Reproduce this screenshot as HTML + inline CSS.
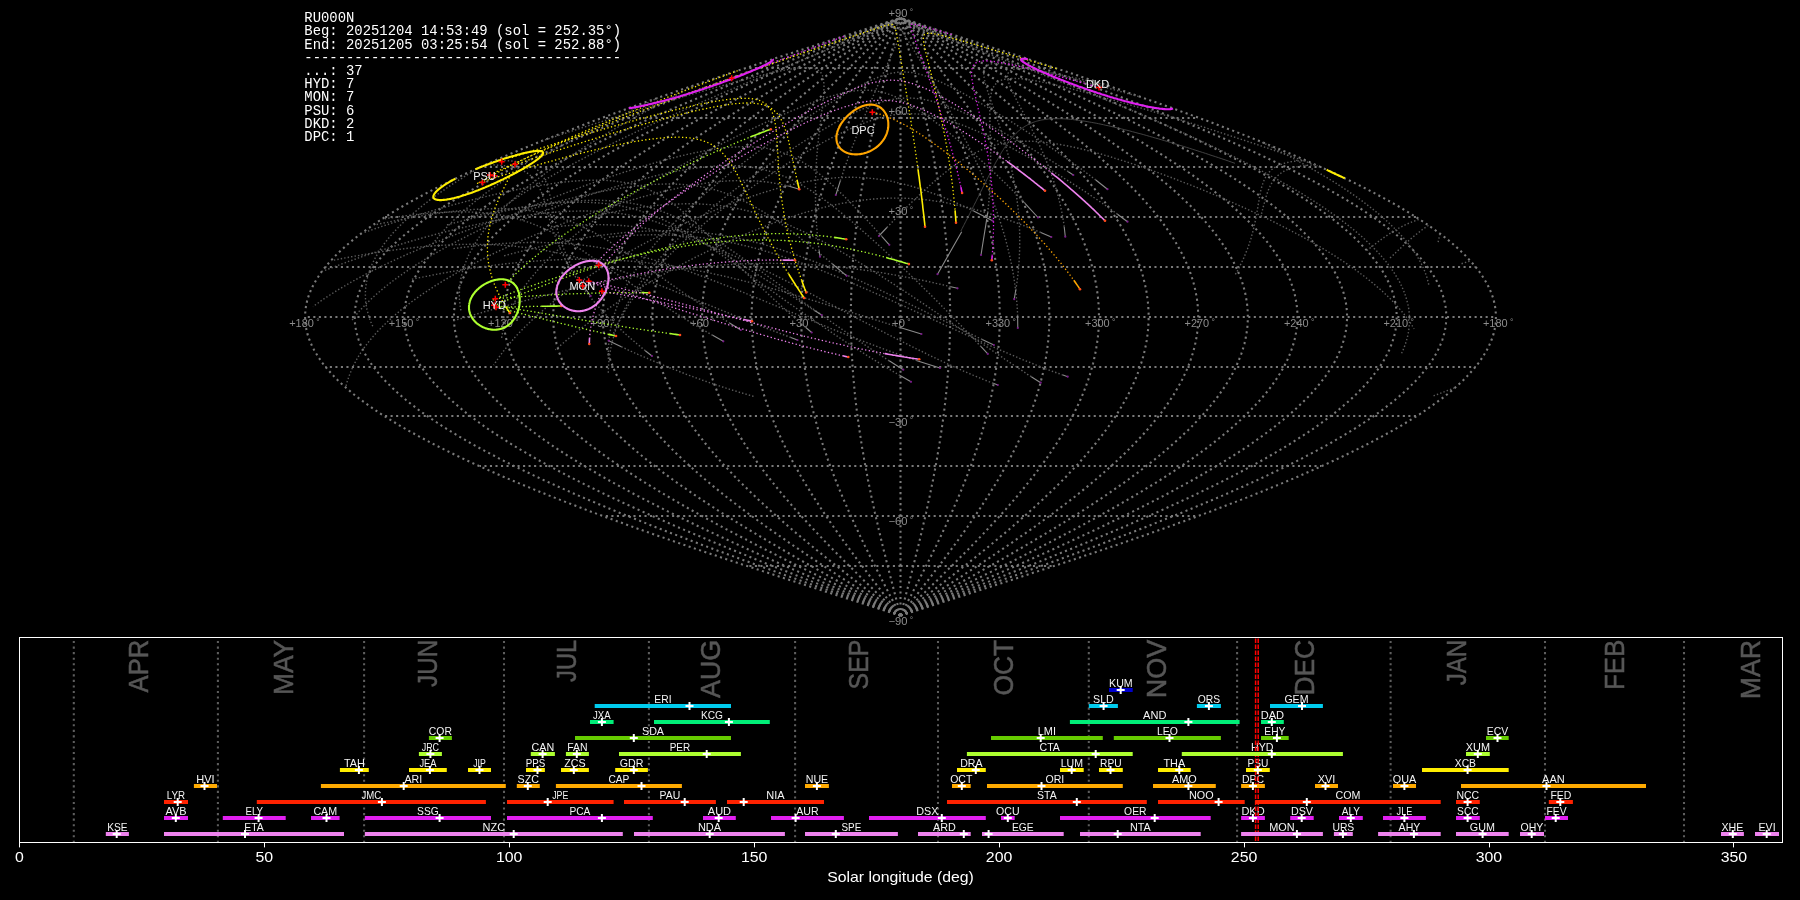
<!DOCTYPE html><html><head><meta charset="utf-8"><style>html,body{margin:0;padding:0;background:#000;width:1800px;height:900px;overflow:hidden}svg{position:absolute;left:0;top:0;will-change:transform}text{font-family:"Liberation Sans",sans-serif}.m{font-family:"Liberation Mono",monospace}</style></head><body>
<svg width="1800" height="900" viewBox="0 0 1800 900">
<rect width="1800" height="900" fill="#000"/>
<g fill="none" stroke="#7a7a7a" stroke-width="2.08" stroke-dasharray="2.083 3.437">
<path d="M900.5 566 L746.4 566"/>
<path d="M900.5 566 L1054.6 566"/>
<path d="M900.5 516 L602.8 516"/>
<path d="M900.5 516 L1198.2 516"/>
<path d="M900.5 466 L479.5 466"/>
<path d="M900.5 466 L1321.5 466"/>
<path d="M900.5 416 L384.8 416"/>
<path d="M900.5 416 L1416.2 416"/>
<path d="M900.5 367 L325.3 367"/>
<path d="M900.5 367 L1475.7 367"/>
<path d="M900.5 317 L305.1 317"/>
<path d="M900.5 317 L1495.9 317"/>
<path d="M900.5 267 L325.3 267"/>
<path d="M900.5 267 L1475.7 267"/>
<path d="M900.5 217 L384.8 217"/>
<path d="M900.5 217 L1416.2 217"/>
<path d="M900.5 167 L479.5 167"/>
<path d="M900.5 167 L1321.5 167"/>
<path d="M900.5 118 L602.8 118"/>
<path d="M900.5 118 L1198.2 118"/>
<path d="M900.5 68 L746.4 68"/>
<path d="M900.5 68 L1054.6 68"/>
<path d="M900.5 615.6 L910.9 612.3 L921.3 609 L931.7 605.6 L942 602.3 L952.4 599 L962.7 595.7 L973.1 592.4 L983.4 589 L993.6 585.7 L1003.9 582.4 L1014.1 579.1 L1024.3 575.8 L1034.4 572.4 L1044.5 569.1 L1054.6 565.8 L1064.6 562.5 L1074.6 559.2 L1084.5 555.8 L1094.4 552.5 L1104.2 549.2 L1113.9 545.9 L1123.6 542.6 L1133.2 539.2 L1142.7 535.9 L1152.1 532.6 L1161.5 529.3 L1170.8 526 L1180 522.6 L1189.2 519.3 L1198.2 516 L1207.2 512.7 L1216 509.4 L1224.8 506 L1233.5 502.7 L1242 499.4 L1250.5 496.1 L1258.8 492.8 L1267.1 489.4 L1275.2 486.1 L1283.2 482.8 L1291.1 479.5 L1298.9 476.2 L1306.6 472.8 L1314.1 469.5 L1321.5 466.2 L1328.8 462.9 L1336 459.6 L1343 456.2 L1349.9 452.9 L1356.6 449.6 L1363.2 446.3 L1369.7 443 L1376 439.6 L1382.2 436.3 L1388.3 433 L1394.1 429.7 L1399.9 426.4 L1405.5 423 L1410.9 419.7 L1416.2 416.4 L1421.3 413.1 L1426.2 409.8 L1431 406.4 L1435.7 403.1 L1440.2 399.8 L1444.5 396.5 L1448.6 393.2 L1452.6 389.8 L1456.4 386.5 L1460 383.2 L1463.5 379.9 L1466.8 376.6 L1469.9 373.2 L1472.9 369.9 L1475.7 366.6 L1478.3 363.3 L1480.7 360 L1482.9 356.6 L1485 353.3 L1486.9 350 L1488.6 346.7 L1490.1 343.4 L1491.5 340 L1492.7 336.7 L1493.7 333.4 L1494.5 330.1 L1495.1 326.8 L1495.6 323.4 L1495.8 320.1 L1495.9 316.8 L1495.8 313.5 L1495.6 310.2 L1495.1 306.8 L1494.5 303.5 L1493.7 300.2 L1492.7 296.9 L1491.5 293.6 L1490.1 290.2 L1488.6 286.9 L1486.9 283.6 L1485 280.3 L1482.9 277 L1480.7 273.6 L1478.3 270.3 L1475.7 267 L1472.9 263.7 L1469.9 260.4 L1466.8 257 L1463.5 253.7 L1460 250.4 L1456.4 247.1 L1452.6 243.8 L1448.6 240.4 L1444.5 237.1 L1440.2 233.8 L1435.7 230.5 L1431 227.2 L1426.2 223.8 L1421.3 220.5 L1416.2 217.2 L1410.9 213.9 L1405.5 210.6 L1399.9 207.2 L1394.1 203.9 L1388.3 200.6 L1382.2 197.3 L1376 194 L1369.7 190.6 L1363.2 187.3 L1356.6 184 L1349.9 180.7 L1343 177.4 L1336 174 L1328.8 170.7 L1321.5 167.4 L1314.1 164.1 L1306.6 160.8 L1298.9 157.4 L1291.1 154.1 L1283.2 150.8 L1275.2 147.5 L1267.1 144.2 L1258.8 140.8 L1250.5 137.5 L1242 134.2 L1233.5 130.9 L1224.8 127.6 L1216 124.2 L1207.2 120.9 L1198.2 117.6 L1189.2 114.3 L1180 111 L1170.8 107.6 L1161.5 104.3 L1152.1 101 L1142.7 97.7 L1133.2 94.4 L1123.6 91 L1113.9 87.7 L1104.2 84.4 L1094.4 81.1 L1084.5 77.8 L1074.6 74.4 L1064.6 71.1 L1054.6 67.8 L1044.5 64.5 L1034.4 61.2 L1024.3 57.8 L1014.1 54.5 L1003.9 51.2 L993.6 47.9 L983.4 44.6 L973.1 41.2 L962.7 37.9 L952.4 34.6 L942 31.3 L931.7 28 L921.3 24.6 L910.9 21.3 L900.5 18"/>
<path d="M900.5 615.6 L910 612.3 L919.5 609 L929.1 605.6 L938.6 602.3 L948.1 599 L957.6 595.7 L967 592.4 L976.5 589 L985.9 585.7 L995.3 582.4 L1004.6 579.1 L1014 575.8 L1023.3 572.4 L1032.5 569.1 L1041.8 565.8 L1050.9 562.5 L1060.1 559.2 L1069.2 555.8 L1078.2 552.5 L1087.2 549.2 L1096.1 545.9 L1105 542.6 L1113.8 539.2 L1122.5 535.9 L1131.2 532.6 L1139.8 529.3 L1148.3 526 L1156.7 522.6 L1165.1 519.3 L1173.4 516 L1181.6 512.7 L1189.7 509.4 L1197.8 506 L1205.7 502.7 L1213.6 499.4 L1221.3 496.1 L1229 492.8 L1236.5 489.4 L1244 486.1 L1251.3 482.8 L1258.6 479.5 L1265.7 476.2 L1272.7 472.8 L1279.7 469.5 L1286.5 466.2 L1293.1 462.9 L1299.7 459.6 L1306.1 456.2 L1312.4 452.9 L1318.6 449.6 L1324.7 446.3 L1330.6 443 L1336.4 439.6 L1342.1 436.3 L1347.6 433 L1353 429.7 L1358.3 426.4 L1363.4 423 L1368.4 419.7 L1373.2 416.4 L1377.9 413.1 L1382.4 409.8 L1386.8 406.4 L1391.1 403.1 L1395.2 399.8 L1399.1 396.5 L1402.9 393.2 L1406.6 389.8 L1410.1 386.5 L1413.4 383.2 L1416.6 379.9 L1419.6 376.6 L1422.5 373.2 L1425.2 369.9 L1427.7 366.6 L1430.1 363.3 L1432.3 360 L1434.4 356.6 L1436.3 353.3 L1438 350 L1439.6 346.7 L1441 343.4 L1442.3 340 L1443.3 336.7 L1444.2 333.4 L1445 330.1 L1445.6 326.8 L1446 323.4 L1446.2 320.1 L1446.3 316.8 L1446.2 313.5 L1446 310.2 L1445.6 306.8 L1445 303.5 L1444.2 300.2 L1443.3 296.9 L1442.3 293.6 L1441 290.2 L1439.6 286.9 L1438 283.6 L1436.3 280.3 L1434.4 277 L1432.3 273.6 L1430.1 270.3 L1427.7 267 L1425.2 263.7 L1422.5 260.4 L1419.6 257 L1416.6 253.7 L1413.4 250.4 L1410.1 247.1 L1406.6 243.8 L1402.9 240.4 L1399.1 237.1 L1395.2 233.8 L1391.1 230.5 L1386.8 227.2 L1382.4 223.8 L1377.9 220.5 L1373.2 217.2 L1368.4 213.9 L1363.4 210.6 L1358.3 207.2 L1353 203.9 L1347.6 200.6 L1342.1 197.3 L1336.4 194 L1330.6 190.6 L1324.7 187.3 L1318.6 184 L1312.4 180.7 L1306.1 177.4 L1299.7 174 L1293.1 170.7 L1286.5 167.4 L1279.7 164.1 L1272.7 160.8 L1265.7 157.4 L1258.6 154.1 L1251.3 150.8 L1244 147.5 L1236.5 144.2 L1229 140.8 L1221.3 137.5 L1213.6 134.2 L1205.7 130.9 L1197.8 127.6 L1189.7 124.2 L1181.6 120.9 L1173.4 117.6 L1165.1 114.3 L1156.7 111 L1148.3 107.6 L1139.8 104.3 L1131.2 101 L1122.5 97.7 L1113.8 94.4 L1105 91 L1096.1 87.7 L1087.2 84.4 L1078.2 81.1 L1069.2 77.8 L1060.1 74.4 L1050.9 71.1 L1041.8 67.8 L1032.5 64.5 L1023.3 61.2 L1014 57.8 L1004.6 54.5 L995.3 51.2 L985.9 47.9 L976.5 44.6 L967 41.2 L957.6 37.9 L948.1 34.6 L938.6 31.3 L929.1 28 L919.5 24.6 L910 21.3 L900.5 18"/>
<path d="M900.5 615.6 L909.2 612.3 L917.8 609 L926.5 605.6 L935.1 602.3 L943.7 599 L952.4 595.7 L961 592.4 L969.6 589 L978.1 585.7 L986.7 582.4 L995.2 579.1 L1003.7 575.8 L1012.1 572.4 L1020.5 569.1 L1028.9 565.8 L1037.3 562.5 L1045.6 559.2 L1053.8 555.8 L1062 552.5 L1070.2 549.2 L1078.3 545.9 L1086.4 542.6 L1094.4 539.2 L1102.3 535.9 L1110.2 532.6 L1118 529.3 L1125.8 526 L1133.5 522.6 L1141.1 519.3 L1148.6 516 L1156.1 512.7 L1163.4 509.4 L1170.7 506 L1178 502.7 L1185.1 499.4 L1192.2 496.1 L1199.1 492.8 L1206 489.4 L1212.8 486.1 L1219.5 482.8 L1226 479.5 L1232.5 476.2 L1238.9 472.8 L1245.2 469.5 L1251.4 466.2 L1257.4 462.9 L1263.4 459.6 L1269.2 456.2 L1275 452.9 L1280.6 449.6 L1286.1 446.3 L1291.5 443 L1296.8 439.6 L1301.9 436.3 L1307 433 L1311.9 429.7 L1316.6 426.4 L1321.3 423 L1325.8 419.7 L1330.2 416.4 L1334.5 413.1 L1338.6 409.8 L1342.6 406.4 L1346.5 403.1 L1350.2 399.8 L1353.8 396.5 L1357.3 393.2 L1360.6 389.8 L1363.7 386.5 L1366.8 383.2 L1369.7 379.9 L1372.4 376.6 L1375 373.2 L1377.5 369.9 L1379.8 366.6 L1382 363.3 L1384 360 L1385.9 356.6 L1387.6 353.3 L1389.2 350 L1390.6 346.7 L1391.9 343.4 L1393 340 L1394 336.7 L1394.8 333.4 L1395.5 330.1 L1396 326.8 L1396.4 323.4 L1396.6 320.1 L1396.7 316.8 L1396.6 313.5 L1396.4 310.2 L1396 306.8 L1395.5 303.5 L1394.8 300.2 L1394 296.9 L1393 293.6 L1391.9 290.2 L1390.6 286.9 L1389.2 283.6 L1387.6 280.3 L1385.9 277 L1384 273.6 L1382 270.3 L1379.8 267 L1377.5 263.7 L1375 260.4 L1372.4 257 L1369.7 253.7 L1366.8 250.4 L1363.7 247.1 L1360.6 243.8 L1357.3 240.4 L1353.8 237.1 L1350.2 233.8 L1346.5 230.5 L1342.6 227.2 L1338.6 223.8 L1334.5 220.5 L1330.2 217.2 L1325.8 213.9 L1321.3 210.6 L1316.6 207.2 L1311.9 203.9 L1307 200.6 L1301.9 197.3 L1296.8 194 L1291.5 190.6 L1286.1 187.3 L1280.6 184 L1275 180.7 L1269.2 177.4 L1263.4 174 L1257.4 170.7 L1251.4 167.4 L1245.2 164.1 L1238.9 160.8 L1232.5 157.4 L1226 154.1 L1219.5 150.8 L1212.8 147.5 L1206 144.2 L1199.1 140.8 L1192.2 137.5 L1185.1 134.2 L1178 130.9 L1170.7 127.6 L1163.4 124.2 L1156.1 120.9 L1148.6 117.6 L1141.1 114.3 L1133.5 111 L1125.8 107.6 L1118 104.3 L1110.2 101 L1102.3 97.7 L1094.4 94.4 L1086.4 91 L1078.3 87.7 L1070.2 84.4 L1062 81.1 L1053.8 77.8 L1045.6 74.4 L1037.3 71.1 L1028.9 67.8 L1020.5 64.5 L1012.1 61.2 L1003.7 57.8 L995.2 54.5 L986.7 51.2 L978.1 47.9 L969.6 44.6 L961 41.2 L952.4 37.9 L943.7 34.6 L935.1 31.3 L926.5 28 L917.8 24.6 L909.2 21.3 L900.5 18"/>
<path d="M900.5 615.6 L908.3 612.3 L916.1 609 L923.9 605.6 L931.7 602.3 L939.4 599 L947.2 595.7 L954.9 592.4 L962.7 589 L970.4 585.7 L978 582.4 L985.7 579.1 L993.3 575.8 L1001 572.4 L1008.5 569.1 L1016.1 565.8 L1023.6 562.5 L1031.1 559.2 L1038.5 555.8 L1045.9 552.5 L1053.2 549.2 L1060.5 545.9 L1067.8 542.6 L1075 539.2 L1082.1 535.9 L1089.2 532.6 L1096.3 529.3 L1103.2 526 L1110.2 522.6 L1117 519.3 L1123.8 516 L1130.5 512.7 L1137.2 509.4 L1143.7 506 L1150.2 502.7 L1156.6 499.4 L1163 496.1 L1169.3 492.8 L1175.4 489.4 L1181.5 486.1 L1187.6 482.8 L1193.5 479.5 L1199.3 476.2 L1205.1 472.8 L1210.7 469.5 L1216.3 466.2 L1221.7 462.9 L1227.1 459.6 L1232.4 456.2 L1237.5 452.9 L1242.6 449.6 L1247.6 446.3 L1252.4 443 L1257.2 439.6 L1261.8 436.3 L1266.3 433 L1270.7 429.7 L1275 426.4 L1279.2 423 L1283.3 419.7 L1287.2 416.4 L1291.1 413.1 L1294.8 409.8 L1298.4 406.4 L1301.9 403.1 L1305.2 399.8 L1308.5 396.5 L1311.6 393.2 L1314.6 389.8 L1317.4 386.5 L1320.1 383.2 L1322.7 379.9 L1325.2 376.6 L1327.6 373.2 L1329.8 369.9 L1331.9 366.6 L1333.8 363.3 L1335.6 360 L1337.3 356.6 L1338.9 353.3 L1340.3 350 L1341.6 346.7 L1342.7 343.4 L1343.8 340 L1344.6 336.7 L1345.4 333.4 L1346 330.1 L1346.5 326.8 L1346.8 323.4 L1347 320.1 L1347.1 316.8 L1347 313.5 L1346.8 310.2 L1346.5 306.8 L1346 303.5 L1345.4 300.2 L1344.6 296.9 L1343.8 293.6 L1342.7 290.2 L1341.6 286.9 L1340.3 283.6 L1338.9 280.3 L1337.3 277 L1335.6 273.6 L1333.8 270.3 L1331.9 267 L1329.8 263.7 L1327.6 260.4 L1325.2 257 L1322.7 253.7 L1320.1 250.4 L1317.4 247.1 L1314.6 243.8 L1311.6 240.4 L1308.5 237.1 L1305.2 233.8 L1301.9 230.5 L1298.4 227.2 L1294.8 223.8 L1291.1 220.5 L1287.2 217.2 L1283.3 213.9 L1279.2 210.6 L1275 207.2 L1270.7 203.9 L1266.3 200.6 L1261.8 197.3 L1257.2 194 L1252.4 190.6 L1247.6 187.3 L1242.6 184 L1237.5 180.7 L1232.4 177.4 L1227.1 174 L1221.7 170.7 L1216.3 167.4 L1210.7 164.1 L1205.1 160.8 L1199.3 157.4 L1193.5 154.1 L1187.6 150.8 L1181.5 147.5 L1175.4 144.2 L1169.3 140.8 L1163 137.5 L1156.6 134.2 L1150.2 130.9 L1143.7 127.6 L1137.2 124.2 L1130.5 120.9 L1123.8 117.6 L1117 114.3 L1110.2 111 L1103.2 107.6 L1096.3 104.3 L1089.2 101 L1082.1 97.7 L1075 94.4 L1067.8 91 L1060.5 87.7 L1053.2 84.4 L1045.9 81.1 L1038.5 77.8 L1031.1 74.4 L1023.6 71.1 L1016.1 67.8 L1008.5 64.5 L1001 61.2 L993.3 57.8 L985.7 54.5 L978 51.2 L970.4 47.9 L962.7 44.6 L954.9 41.2 L947.2 37.9 L939.4 34.6 L931.7 31.3 L923.9 28 L916.1 24.6 L908.3 21.3 L900.5 18"/>
<path d="M900.5 615.6 L907.4 612.3 L914.4 609 L921.3 605.6 L928.2 602.3 L935.1 599 L942 595.7 L948.9 592.4 L955.7 589 L962.6 585.7 L969.4 582.4 L976.2 579.1 L983 575.8 L989.8 572.4 L996.5 569.1 L1003.2 565.8 L1009.9 562.5 L1016.6 559.2 L1023.2 555.8 L1029.7 552.5 L1036.3 549.2 L1042.8 545.9 L1049.2 542.6 L1055.6 539.2 L1062 535.9 L1068.3 532.6 L1074.5 529.3 L1080.7 526 L1086.9 522.6 L1093 519.3 L1099 516 L1104.9 512.7 L1110.9 509.4 L1116.7 506 L1122.5 502.7 L1128.2 499.4 L1133.8 496.1 L1139.4 492.8 L1144.9 489.4 L1150.3 486.1 L1155.7 482.8 L1160.9 479.5 L1166.1 476.2 L1171.2 472.8 L1176.3 469.5 L1181.2 466.2 L1186 462.9 L1190.8 459.6 L1195.5 456.2 L1200.1 452.9 L1204.6 449.6 L1209 446.3 L1213.3 443 L1217.5 439.6 L1221.6 436.3 L1225.7 433 L1229.6 429.7 L1233.4 426.4 L1237.1 423 L1240.8 419.7 L1244.3 416.4 L1247.7 413.1 L1251 409.8 L1254.2 406.4 L1257.3 403.1 L1260.3 399.8 L1263.1 396.5 L1265.9 393.2 L1268.6 389.8 L1271.1 386.5 L1273.5 383.2 L1275.8 379.9 L1278 376.6 L1280.1 373.2 L1282.1 369.9 L1283.9 366.6 L1285.7 363.3 L1287.3 360 L1288.8 356.6 L1290.2 353.3 L1291.4 350 L1292.6 346.7 L1293.6 343.4 L1294.5 340 L1295.3 336.7 L1295.9 333.4 L1296.5 330.1 L1296.9 326.8 L1297.2 323.4 L1297.4 320.1 L1297.5 316.8 L1297.4 313.5 L1297.2 310.2 L1296.9 306.8 L1296.5 303.5 L1295.9 300.2 L1295.3 296.9 L1294.5 293.6 L1293.6 290.2 L1292.6 286.9 L1291.4 283.6 L1290.2 280.3 L1288.8 277 L1287.3 273.6 L1285.7 270.3 L1283.9 267 L1282.1 263.7 L1280.1 260.4 L1278 257 L1275.8 253.7 L1273.5 250.4 L1271.1 247.1 L1268.6 243.8 L1265.9 240.4 L1263.1 237.1 L1260.3 233.8 L1257.3 230.5 L1254.2 227.2 L1251 223.8 L1247.7 220.5 L1244.3 217.2 L1240.8 213.9 L1237.1 210.6 L1233.4 207.2 L1229.6 203.9 L1225.7 200.6 L1221.6 197.3 L1217.5 194 L1213.3 190.6 L1209 187.3 L1204.6 184 L1200.1 180.7 L1195.5 177.4 L1190.8 174 L1186 170.7 L1181.2 167.4 L1176.3 164.1 L1171.2 160.8 L1166.1 157.4 L1160.9 154.1 L1155.7 150.8 L1150.3 147.5 L1144.9 144.2 L1139.4 140.8 L1133.8 137.5 L1128.2 134.2 L1122.5 130.9 L1116.7 127.6 L1110.9 124.2 L1104.9 120.9 L1099 117.6 L1093 114.3 L1086.9 111 L1080.7 107.6 L1074.5 104.3 L1068.3 101 L1062 97.7 L1055.6 94.4 L1049.2 91 L1042.8 87.7 L1036.3 84.4 L1029.7 81.1 L1023.2 77.8 L1016.6 74.4 L1009.9 71.1 L1003.2 67.8 L996.5 64.5 L989.8 61.2 L983 57.8 L976.2 54.5 L969.4 51.2 L962.6 47.9 L955.7 44.6 L948.9 41.2 L942 37.9 L935.1 34.6 L928.2 31.3 L921.3 28 L914.4 24.6 L907.4 21.3 L900.5 18"/>
<path d="M900.5 615.6 L906.6 612.3 L912.6 609 L918.7 605.6 L924.7 602.3 L930.8 599 L936.8 595.7 L942.8 592.4 L948.8 589 L954.8 585.7 L960.8 582.4 L966.8 579.1 L972.7 575.8 L978.6 572.4 L984.5 569.1 L990.4 565.8 L996.2 562.5 L1002.1 559.2 L1007.8 555.8 L1013.6 552.5 L1019.3 549.2 L1025 545.9 L1030.6 542.6 L1036.2 539.2 L1041.8 535.9 L1047.3 532.6 L1052.8 529.3 L1058.2 526 L1063.6 522.6 L1068.9 519.3 L1074.2 516 L1079.4 512.7 L1084.6 509.4 L1089.7 506 L1094.7 502.7 L1099.7 499.4 L1104.7 496.1 L1109.5 492.8 L1114.3 489.4 L1119.1 486.1 L1123.8 482.8 L1128.4 479.5 L1132.9 476.2 L1137.4 472.8 L1141.8 469.5 L1146.1 466.2 L1150.4 462.9 L1154.5 459.6 L1158.6 456.2 L1162.6 452.9 L1166.6 449.6 L1170.4 446.3 L1174.2 443 L1177.9 439.6 L1181.5 436.3 L1185 433 L1188.5 429.7 L1191.8 426.4 L1195.1 423 L1198.2 419.7 L1201.3 416.4 L1204.3 413.1 L1207.2 409.8 L1210 406.4 L1212.7 403.1 L1215.3 399.8 L1217.8 396.5 L1220.2 393.2 L1222.5 389.8 L1224.8 386.5 L1226.9 383.2 L1228.9 379.9 L1230.8 376.6 L1232.7 373.2 L1234.4 369.9 L1236 366.6 L1237.5 363.3 L1238.9 360 L1240.2 356.6 L1241.5 353.3 L1242.6 350 L1243.6 346.7 L1244.5 343.4 L1245.3 340 L1245.9 336.7 L1246.5 333.4 L1247 330.1 L1247.4 326.8 L1247.6 323.4 L1247.8 320.1 L1247.8 316.8 L1247.8 313.5 L1247.6 310.2 L1247.4 306.8 L1247 303.5 L1246.5 300.2 L1245.9 296.9 L1245.3 293.6 L1244.5 290.2 L1243.6 286.9 L1242.6 283.6 L1241.5 280.3 L1240.2 277 L1238.9 273.6 L1237.5 270.3 L1236 267 L1234.4 263.7 L1232.7 260.4 L1230.8 257 L1228.9 253.7 L1226.9 250.4 L1224.8 247.1 L1222.5 243.8 L1220.2 240.4 L1217.8 237.1 L1215.3 233.8 L1212.7 230.5 L1210 227.2 L1207.2 223.8 L1204.3 220.5 L1201.3 217.2 L1198.2 213.9 L1195.1 210.6 L1191.8 207.2 L1188.5 203.9 L1185 200.6 L1181.5 197.3 L1177.9 194 L1174.2 190.6 L1170.4 187.3 L1166.6 184 L1162.6 180.7 L1158.6 177.4 L1154.5 174 L1150.4 170.7 L1146.1 167.4 L1141.8 164.1 L1137.4 160.8 L1132.9 157.4 L1128.4 154.1 L1123.8 150.8 L1119.1 147.5 L1114.3 144.2 L1109.5 140.8 L1104.7 137.5 L1099.7 134.2 L1094.7 130.9 L1089.7 127.6 L1084.6 124.2 L1079.4 120.9 L1074.2 117.6 L1068.9 114.3 L1063.6 111 L1058.2 107.6 L1052.8 104.3 L1047.3 101 L1041.8 97.7 L1036.2 94.4 L1030.6 91 L1025 87.7 L1019.3 84.4 L1013.6 81.1 L1007.8 77.8 L1002.1 74.4 L996.2 71.1 L990.4 67.8 L984.5 64.5 L978.6 61.2 L972.7 57.8 L966.8 54.5 L960.8 51.2 L954.8 47.9 L948.8 44.6 L942.8 41.2 L936.8 37.9 L930.8 34.6 L924.7 31.3 L918.7 28 L912.6 24.6 L906.6 21.3 L900.5 18"/>
<path d="M900.5 615.6 L905.7 612.3 L910.9 609 L916.1 605.6 L921.3 602.3 L926.4 599 L931.6 595.7 L936.8 592.4 L941.9 589 L947.1 585.7 L952.2 582.4 L957.3 579.1 L962.4 575.8 L967.5 572.4 L972.5 569.1 L977.6 565.8 L982.6 562.5 L987.5 559.2 L992.5 555.8 L997.4 552.5 L1002.3 549.2 L1007.2 545.9 L1012 542.6 L1016.8 539.2 L1021.6 535.9 L1026.3 532.6 L1031 529.3 L1035.7 526 L1040.3 522.6 L1044.8 519.3 L1049.4 516 L1053.8 512.7 L1058.3 509.4 L1062.6 506 L1067 502.7 L1071.3 499.4 L1075.5 496.1 L1079.7 492.8 L1083.8 489.4 L1087.9 486.1 L1091.9 482.8 L1095.8 479.5 L1099.7 476.2 L1103.5 472.8 L1107.3 469.5 L1111 466.2 L1114.7 462.9 L1118.2 459.6 L1121.7 456.2 L1125.2 452.9 L1128.6 449.6 L1131.9 446.3 L1135.1 443 L1138.3 439.6 L1141.4 436.3 L1144.4 433 L1147.3 429.7 L1150.2 426.4 L1153 423 L1155.7 419.7 L1158.3 416.4 L1160.9 413.1 L1163.4 409.8 L1165.8 406.4 L1168.1 403.1 L1170.3 399.8 L1172.5 396.5 L1174.6 393.2 L1176.5 389.8 L1178.4 386.5 L1180.3 383.2 L1182 379.9 L1183.6 376.6 L1185.2 373.2 L1186.7 369.9 L1188.1 366.6 L1189.4 363.3 L1190.6 360 L1191.7 356.6 L1192.8 353.3 L1193.7 350 L1194.6 346.7 L1195.3 343.4 L1196 340 L1196.6 336.7 L1197.1 333.4 L1197.5 330.1 L1197.8 326.8 L1198 323.4 L1198.2 320.1 L1198.2 316.8 L1198.2 313.5 L1198 310.2 L1197.8 306.8 L1197.5 303.5 L1197.1 300.2 L1196.6 296.9 L1196 293.6 L1195.3 290.2 L1194.6 286.9 L1193.7 283.6 L1192.8 280.3 L1191.7 277 L1190.6 273.6 L1189.4 270.3 L1188.1 267 L1186.7 263.7 L1185.2 260.4 L1183.6 257 L1182 253.7 L1180.3 250.4 L1178.4 247.1 L1176.5 243.8 L1174.6 240.4 L1172.5 237.1 L1170.3 233.8 L1168.1 230.5 L1165.8 227.2 L1163.4 223.8 L1160.9 220.5 L1158.3 217.2 L1155.7 213.9 L1153 210.6 L1150.2 207.2 L1147.3 203.9 L1144.4 200.6 L1141.4 197.3 L1138.3 194 L1135.1 190.6 L1131.9 187.3 L1128.6 184 L1125.2 180.7 L1121.7 177.4 L1118.2 174 L1114.7 170.7 L1111 167.4 L1107.3 164.1 L1103.5 160.8 L1099.7 157.4 L1095.8 154.1 L1091.9 150.8 L1087.9 147.5 L1083.8 144.2 L1079.7 140.8 L1075.5 137.5 L1071.3 134.2 L1067 130.9 L1062.6 127.6 L1058.3 124.2 L1053.8 120.9 L1049.4 117.6 L1044.8 114.3 L1040.3 111 L1035.7 107.6 L1031 104.3 L1026.3 101 L1021.6 97.7 L1016.8 94.4 L1012 91 L1007.2 87.7 L1002.3 84.4 L997.4 81.1 L992.5 77.8 L987.5 74.4 L982.6 71.1 L977.6 67.8 L972.5 64.5 L967.5 61.2 L962.4 57.8 L957.3 54.5 L952.2 51.2 L947.1 47.9 L941.9 44.6 L936.8 41.2 L931.6 37.9 L926.4 34.6 L921.3 31.3 L916.1 28 L910.9 24.6 L905.7 21.3 L900.5 18"/>
<path d="M900.5 615.6 L904.8 612.3 L909.2 609 L913.5 605.6 L917.8 602.3 L922.1 599 L926.4 595.7 L930.7 592.4 L935 589 L939.3 585.7 L943.6 582.4 L947.8 579.1 L952.1 575.8 L956.3 572.4 L960.5 569.1 L964.7 565.8 L968.9 562.5 L973 559.2 L977.2 555.8 L981.3 552.5 L985.4 549.2 L989.4 545.9 L993.4 542.6 L997.4 539.2 L1001.4 535.9 L1005.4 532.6 L1009.3 529.3 L1013.1 526 L1017 522.6 L1020.8 519.3 L1024.5 516 L1028.3 512.7 L1032 509.4 L1035.6 506 L1039.2 502.7 L1042.8 499.4 L1046.3 496.1 L1049.8 492.8 L1053.2 489.4 L1056.6 486.1 L1060 482.8 L1063.3 479.5 L1066.5 476.2 L1069.7 472.8 L1072.8 469.5 L1075.9 466.2 L1079 462.9 L1081.9 459.6 L1084.9 456.2 L1087.7 452.9 L1090.6 449.6 L1093.3 446.3 L1096 443 L1098.6 439.6 L1101.2 436.3 L1103.7 433 L1106.2 429.7 L1108.6 426.4 L1110.9 423 L1113.2 419.7 L1115.4 416.4 L1117.5 413.1 L1119.6 409.8 L1121.6 406.4 L1123.5 403.1 L1125.4 399.8 L1127.2 396.5 L1128.9 393.2 L1130.5 389.8 L1132.1 386.5 L1133.6 383.2 L1135.1 379.9 L1136.5 376.6 L1137.8 373.2 L1139 369.9 L1140.1 366.6 L1141.2 363.3 L1142.2 360 L1143.2 356.6 L1144 353.3 L1144.8 350 L1145.5 346.7 L1146.2 343.4 L1146.8 340 L1147.2 336.7 L1147.7 333.4 L1148 330.1 L1148.3 326.8 L1148.4 323.4 L1148.6 320.1 L1148.6 316.8 L1148.6 313.5 L1148.4 310.2 L1148.3 306.8 L1148 303.5 L1147.7 300.2 L1147.2 296.9 L1146.8 293.6 L1146.2 290.2 L1145.5 286.9 L1144.8 283.6 L1144 280.3 L1143.2 277 L1142.2 273.6 L1141.2 270.3 L1140.1 267 L1139 263.7 L1137.8 260.4 L1136.5 257 L1135.1 253.7 L1133.6 250.4 L1132.1 247.1 L1130.5 243.8 L1128.9 240.4 L1127.2 237.1 L1125.4 233.8 L1123.5 230.5 L1121.6 227.2 L1119.6 223.8 L1117.5 220.5 L1115.4 217.2 L1113.2 213.9 L1110.9 210.6 L1108.6 207.2 L1106.2 203.9 L1103.7 200.6 L1101.2 197.3 L1098.6 194 L1096 190.6 L1093.3 187.3 L1090.6 184 L1087.7 180.7 L1084.9 177.4 L1081.9 174 L1079 170.7 L1075.9 167.4 L1072.8 164.1 L1069.7 160.8 L1066.5 157.4 L1063.3 154.1 L1060 150.8 L1056.6 147.5 L1053.2 144.2 L1049.8 140.8 L1046.3 137.5 L1042.8 134.2 L1039.2 130.9 L1035.6 127.6 L1032 124.2 L1028.3 120.9 L1024.5 117.6 L1020.8 114.3 L1017 111 L1013.1 107.6 L1009.3 104.3 L1005.4 101 L1001.4 97.7 L997.4 94.4 L993.4 91 L989.4 87.7 L985.4 84.4 L981.3 81.1 L977.2 77.8 L973 74.4 L968.9 71.1 L964.7 67.8 L960.5 64.5 L956.3 61.2 L952.1 57.8 L947.8 54.5 L943.6 51.2 L939.3 47.9 L935 44.6 L930.7 41.2 L926.4 37.9 L922.1 34.6 L917.8 31.3 L913.5 28 L909.2 24.6 L904.8 21.3 L900.5 18"/>
<path d="M900.5 615.6 L904 612.3 L907.4 609 L910.9 605.6 L914.3 602.3 L917.8 599 L921.2 595.7 L924.7 592.4 L928.1 589 L931.5 585.7 L935 582.4 L938.4 579.1 L941.8 575.8 L945.1 572.4 L948.5 569.1 L951.9 565.8 L955.2 562.5 L958.5 559.2 L961.8 555.8 L965.1 552.5 L968.4 549.2 L971.6 545.9 L974.9 542.6 L978.1 539.2 L981.2 535.9 L984.4 532.6 L987.5 529.3 L990.6 526 L993.7 522.6 L996.7 519.3 L999.7 516 L1002.7 512.7 L1005.7 509.4 L1008.6 506 L1011.5 502.7 L1014.3 499.4 L1017.2 496.1 L1019.9 492.8 L1022.7 489.4 L1025.4 486.1 L1028.1 482.8 L1030.7 479.5 L1033.3 476.2 L1035.9 472.8 L1038.4 469.5 L1040.8 466.2 L1043.3 462.9 L1045.7 459.6 L1048 456.2 L1050.3 452.9 L1052.5 449.6 L1054.7 446.3 L1056.9 443 L1059 439.6 L1061.1 436.3 L1063.1 433 L1065 429.7 L1067 426.4 L1068.8 423 L1070.6 419.7 L1072.4 416.4 L1074.1 413.1 L1075.7 409.8 L1077.3 406.4 L1078.9 403.1 L1080.4 399.8 L1081.8 396.5 L1083.2 393.2 L1084.5 389.8 L1085.8 386.5 L1087 383.2 L1088.2 379.9 L1089.3 376.6 L1090.3 373.2 L1091.3 369.9 L1092.2 366.6 L1093.1 363.3 L1093.9 360 L1094.6 356.6 L1095.3 353.3 L1096 350 L1096.5 346.7 L1097 343.4 L1097.5 340 L1097.9 336.7 L1098.2 333.4 L1098.5 330.1 L1098.7 326.8 L1098.9 323.4 L1098.9 320.1 L1099 316.8 L1098.9 313.5 L1098.9 310.2 L1098.7 306.8 L1098.5 303.5 L1098.2 300.2 L1097.9 296.9 L1097.5 293.6 L1097 290.2 L1096.5 286.9 L1096 283.6 L1095.3 280.3 L1094.6 277 L1093.9 273.6 L1093.1 270.3 L1092.2 267 L1091.3 263.7 L1090.3 260.4 L1089.3 257 L1088.2 253.7 L1087 250.4 L1085.8 247.1 L1084.5 243.8 L1083.2 240.4 L1081.8 237.1 L1080.4 233.8 L1078.9 230.5 L1077.3 227.2 L1075.7 223.8 L1074.1 220.5 L1072.4 217.2 L1070.6 213.9 L1068.8 210.6 L1067 207.2 L1065 203.9 L1063.1 200.6 L1061.1 197.3 L1059 194 L1056.9 190.6 L1054.7 187.3 L1052.5 184 L1050.3 180.7 L1048 177.4 L1045.7 174 L1043.3 170.7 L1040.8 167.4 L1038.4 164.1 L1035.9 160.8 L1033.3 157.4 L1030.7 154.1 L1028.1 150.8 L1025.4 147.5 L1022.7 144.2 L1019.9 140.8 L1017.2 137.5 L1014.3 134.2 L1011.5 130.9 L1008.6 127.6 L1005.7 124.2 L1002.7 120.9 L999.7 117.6 L996.7 114.3 L993.7 111 L990.6 107.6 L987.5 104.3 L984.4 101 L981.2 97.7 L978.1 94.4 L974.9 91 L971.6 87.7 L968.4 84.4 L965.1 81.1 L961.8 77.8 L958.5 74.4 L955.2 71.1 L951.9 67.8 L948.5 64.5 L945.1 61.2 L941.8 57.8 L938.4 54.5 L935 51.2 L931.5 47.9 L928.1 44.6 L924.7 41.2 L921.2 37.9 L917.8 34.6 L914.3 31.3 L910.9 28 L907.4 24.6 L904 21.3 L900.5 18"/>
<path d="M900.5 615.6 L903.1 612.3 L905.7 609 L908.3 605.6 L910.9 602.3 L913.5 599 L916.1 595.7 L918.6 592.4 L921.2 589 L923.8 585.7 L926.3 582.4 L928.9 579.1 L931.4 575.8 L934 572.4 L936.5 569.1 L939 565.8 L941.5 562.5 L944 559.2 L946.5 555.8 L949 552.5 L951.4 549.2 L953.8 545.9 L956.3 542.6 L958.7 539.2 L961 535.9 L963.4 532.6 L965.8 529.3 L968.1 526 L970.4 522.6 L972.7 519.3 L974.9 516 L977.2 512.7 L979.4 509.4 L981.6 506 L983.7 502.7 L985.9 499.4 L988 496.1 L990.1 492.8 L992.1 489.4 L994.2 486.1 L996.2 482.8 L998.2 479.5 L1000.1 476.2 L1002 472.8 L1003.9 469.5 L1005.8 466.2 L1007.6 462.9 L1009.4 459.6 L1011.1 456.2 L1012.8 452.9 L1014.5 449.6 L1016.2 446.3 L1017.8 443 L1019.4 439.6 L1020.9 436.3 L1022.4 433 L1023.9 429.7 L1025.3 426.4 L1026.7 423 L1028.1 419.7 L1029.4 416.4 L1030.7 413.1 L1031.9 409.8 L1033.1 406.4 L1034.3 403.1 L1035.4 399.8 L1036.5 396.5 L1037.5 393.2 L1038.5 389.8 L1039.5 386.5 L1040.4 383.2 L1041.2 379.9 L1042.1 376.6 L1042.9 373.2 L1043.6 369.9 L1044.3 366.6 L1044.9 363.3 L1045.5 360 L1046.1 356.6 L1046.6 353.3 L1047.1 350 L1047.5 346.7 L1047.9 343.4 L1048.3 340 L1048.5 336.7 L1048.8 333.4 L1049 330.1 L1049.2 326.8 L1049.3 323.4 L1049.3 320.1 L1049.4 316.8 L1049.3 313.5 L1049.3 310.2 L1049.2 306.8 L1049 303.5 L1048.8 300.2 L1048.5 296.9 L1048.3 293.6 L1047.9 290.2 L1047.5 286.9 L1047.1 283.6 L1046.6 280.3 L1046.1 277 L1045.5 273.6 L1044.9 270.3 L1044.3 267 L1043.6 263.7 L1042.9 260.4 L1042.1 257 L1041.2 253.7 L1040.4 250.4 L1039.5 247.1 L1038.5 243.8 L1037.5 240.4 L1036.5 237.1 L1035.4 233.8 L1034.3 230.5 L1033.1 227.2 L1031.9 223.8 L1030.7 220.5 L1029.4 217.2 L1028.1 213.9 L1026.7 210.6 L1025.3 207.2 L1023.9 203.9 L1022.4 200.6 L1020.9 197.3 L1019.4 194 L1017.8 190.6 L1016.2 187.3 L1014.5 184 L1012.8 180.7 L1011.1 177.4 L1009.4 174 L1007.6 170.7 L1005.8 167.4 L1003.9 164.1 L1002 160.8 L1000.1 157.4 L998.2 154.1 L996.2 150.8 L994.2 147.5 L992.1 144.2 L990.1 140.8 L988 137.5 L985.9 134.2 L983.7 130.9 L981.6 127.6 L979.4 124.2 L977.2 120.9 L974.9 117.6 L972.7 114.3 L970.4 111 L968.1 107.6 L965.8 104.3 L963.4 101 L961 97.7 L958.7 94.4 L956.3 91 L953.8 87.7 L951.4 84.4 L949 81.1 L946.5 77.8 L944 74.4 L941.5 71.1 L939 67.8 L936.5 64.5 L934 61.2 L931.4 57.8 L928.9 54.5 L926.3 51.2 L923.8 47.9 L921.2 44.6 L918.6 41.2 L916.1 37.9 L913.5 34.6 L910.9 31.3 L908.3 28 L905.7 24.6 L903.1 21.3 L900.5 18"/>
<path d="M900.5 615.6 L902.2 612.3 L904 609 L905.7 605.6 L907.4 602.3 L909.1 599 L910.9 595.7 L912.6 592.4 L914.3 589 L916 585.7 L917.7 582.4 L919.4 579.1 L921.1 575.8 L922.8 572.4 L924.5 569.1 L926.2 565.8 L927.9 562.5 L929.5 559.2 L931.2 555.8 L932.8 552.5 L934.4 549.2 L936.1 545.9 L937.7 542.6 L939.3 539.2 L940.9 535.9 L942.4 532.6 L944 529.3 L945.6 526 L947.1 522.6 L948.6 519.3 L950.1 516 L951.6 512.7 L953.1 509.4 L954.5 506 L956 502.7 L957.4 499.4 L958.8 496.1 L960.2 492.8 L961.6 489.4 L963 486.1 L964.3 482.8 L965.6 479.5 L966.9 476.2 L968.2 472.8 L969.4 469.5 L970.7 466.2 L971.9 462.9 L973.1 459.6 L974.2 456.2 L975.4 452.9 L976.5 449.6 L977.6 446.3 L978.7 443 L979.8 439.6 L980.8 436.3 L981.8 433 L982.8 429.7 L983.7 426.4 L984.7 423 L985.6 419.7 L986.4 416.4 L987.3 413.1 L988.1 409.8 L988.9 406.4 L989.7 403.1 L990.4 399.8 L991.2 396.5 L991.9 393.2 L992.5 389.8 L993.1 386.5 L993.8 383.2 L994.3 379.9 L994.9 376.6 L995.4 373.2 L995.9 369.9 L996.4 366.6 L996.8 363.3 L997.2 360 L997.6 356.6 L997.9 353.3 L998.2 350 L998.5 346.7 L998.8 343.4 L999 340 L999.2 336.7 L999.4 333.4 L999.5 330.1 L999.6 326.8 L999.7 323.4 L999.7 320.1 L999.7 316.8 L999.7 313.5 L999.7 310.2 L999.6 306.8 L999.5 303.5 L999.4 300.2 L999.2 296.9 L999 293.6 L998.8 290.2 L998.5 286.9 L998.2 283.6 L997.9 280.3 L997.6 277 L997.2 273.6 L996.8 270.3 L996.4 267 L995.9 263.7 L995.4 260.4 L994.9 257 L994.3 253.7 L993.8 250.4 L993.1 247.1 L992.5 243.8 L991.9 240.4 L991.2 237.1 L990.4 233.8 L989.7 230.5 L988.9 227.2 L988.1 223.8 L987.3 220.5 L986.4 217.2 L985.6 213.9 L984.7 210.6 L983.7 207.2 L982.8 203.9 L981.8 200.6 L980.8 197.3 L979.8 194 L978.7 190.6 L977.6 187.3 L976.5 184 L975.4 180.7 L974.2 177.4 L973.1 174 L971.9 170.7 L970.7 167.4 L969.4 164.1 L968.2 160.8 L966.9 157.4 L965.6 154.1 L964.3 150.8 L963 147.5 L961.6 144.2 L960.2 140.8 L958.8 137.5 L957.4 134.2 L956 130.9 L954.5 127.6 L953.1 124.2 L951.6 120.9 L950.1 117.6 L948.6 114.3 L947.1 111 L945.6 107.6 L944 104.3 L942.4 101 L940.9 97.7 L939.3 94.4 L937.7 91 L936.1 87.7 L934.4 84.4 L932.8 81.1 L931.2 77.8 L929.5 74.4 L927.9 71.1 L926.2 67.8 L924.5 64.5 L922.8 61.2 L921.1 57.8 L919.4 54.5 L917.7 51.2 L916 47.9 L914.3 44.6 L912.6 41.2 L910.9 37.9 L909.1 34.6 L907.4 31.3 L905.7 28 L904 24.6 L902.2 21.3 L900.5 18"/>
<path d="M900.5 615.6 L901.4 612.3 L902.2 609 L903.1 605.6 L904 602.3 L904.8 599 L905.7 595.7 L906.5 592.4 L907.4 589 L908.3 585.7 L909.1 582.4 L910 579.1 L910.8 575.8 L911.7 572.4 L912.5 569.1 L913.3 565.8 L914.2 562.5 L915 559.2 L915.8 555.8 L916.7 552.5 L917.5 549.2 L918.3 545.9 L919.1 542.6 L919.9 539.2 L920.7 535.9 L921.5 532.6 L922.3 529.3 L923 526 L923.8 522.6 L924.6 519.3 L925.3 516 L926.1 512.7 L926.8 509.4 L927.5 506 L928.2 502.7 L929 499.4 L929.7 496.1 L930.4 492.8 L931 489.4 L931.7 486.1 L932.4 482.8 L933.1 479.5 L933.7 476.2 L934.3 472.8 L935 469.5 L935.6 466.2 L936.2 462.9 L936.8 459.6 L937.4 456.2 L937.9 452.9 L938.5 449.6 L939.1 446.3 L939.6 443 L940.1 439.6 L940.6 436.3 L941.1 433 L941.6 429.7 L942.1 426.4 L942.6 423 L943 419.7 L943.5 416.4 L943.9 413.1 L944.3 409.8 L944.7 406.4 L945.1 403.1 L945.5 399.8 L945.8 396.5 L946.2 393.2 L946.5 389.8 L946.8 386.5 L947.1 383.2 L947.4 379.9 L947.7 376.6 L948 373.2 L948.2 369.9 L948.4 366.6 L948.6 363.3 L948.8 360 L949 356.6 L949.2 353.3 L949.4 350 L949.5 346.7 L949.6 343.4 L949.8 340 L949.8 336.7 L949.9 333.4 L950 330.1 L950.1 326.8 L950.1 323.4 L950.1 320.1 L950.1 316.8 L950.1 313.5 L950.1 310.2 L950.1 306.8 L950 303.5 L949.9 300.2 L949.8 296.9 L949.8 293.6 L949.6 290.2 L949.5 286.9 L949.4 283.6 L949.2 280.3 L949 277 L948.8 273.6 L948.6 270.3 L948.4 267 L948.2 263.7 L948 260.4 L947.7 257 L947.4 253.7 L947.1 250.4 L946.8 247.1 L946.5 243.8 L946.2 240.4 L945.8 237.1 L945.5 233.8 L945.1 230.5 L944.7 227.2 L944.3 223.8 L943.9 220.5 L943.5 217.2 L943 213.9 L942.6 210.6 L942.1 207.2 L941.6 203.9 L941.1 200.6 L940.6 197.3 L940.1 194 L939.6 190.6 L939.1 187.3 L938.5 184 L937.9 180.7 L937.4 177.4 L936.8 174 L936.2 170.7 L935.6 167.4 L935 164.1 L934.3 160.8 L933.7 157.4 L933.1 154.1 L932.4 150.8 L931.7 147.5 L931 144.2 L930.4 140.8 L929.7 137.5 L929 134.2 L928.2 130.9 L927.5 127.6 L926.8 124.2 L926.1 120.9 L925.3 117.6 L924.6 114.3 L923.8 111 L923 107.6 L922.3 104.3 L921.5 101 L920.7 97.7 L919.9 94.4 L919.1 91 L918.3 87.7 L917.5 84.4 L916.7 81.1 L915.8 77.8 L915 74.4 L914.2 71.1 L913.3 67.8 L912.5 64.5 L911.7 61.2 L910.8 57.8 L910 54.5 L909.1 51.2 L908.3 47.9 L907.4 44.6 L906.5 41.2 L905.7 37.9 L904.8 34.6 L904 31.3 L903.1 28 L902.2 24.6 L901.4 21.3 L900.5 18"/>
<path d="M900.5 615.6 L900.5 612.3 L900.5 609 L900.5 605.6 L900.5 602.3 L900.5 599 L900.5 595.7 L900.5 592.4 L900.5 589 L900.5 585.7 L900.5 582.4 L900.5 579.1 L900.5 575.8 L900.5 572.4 L900.5 569.1 L900.5 565.8 L900.5 562.5 L900.5 559.2 L900.5 555.8 L900.5 552.5 L900.5 549.2 L900.5 545.9 L900.5 542.6 L900.5 539.2 L900.5 535.9 L900.5 532.6 L900.5 529.3 L900.5 526 L900.5 522.6 L900.5 519.3 L900.5 516 L900.5 512.7 L900.5 509.4 L900.5 506 L900.5 502.7 L900.5 499.4 L900.5 496.1 L900.5 492.8 L900.5 489.4 L900.5 486.1 L900.5 482.8 L900.5 479.5 L900.5 476.2 L900.5 472.8 L900.5 469.5 L900.5 466.2 L900.5 462.9 L900.5 459.6 L900.5 456.2 L900.5 452.9 L900.5 449.6 L900.5 446.3 L900.5 443 L900.5 439.6 L900.5 436.3 L900.5 433 L900.5 429.7 L900.5 426.4 L900.5 423 L900.5 419.7 L900.5 416.4 L900.5 413.1 L900.5 409.8 L900.5 406.4 L900.5 403.1 L900.5 399.8 L900.5 396.5 L900.5 393.2 L900.5 389.8 L900.5 386.5 L900.5 383.2 L900.5 379.9 L900.5 376.6 L900.5 373.2 L900.5 369.9 L900.5 366.6 L900.5 363.3 L900.5 360 L900.5 356.6 L900.5 353.3 L900.5 350 L900.5 346.7 L900.5 343.4 L900.5 340 L900.5 336.7 L900.5 333.4 L900.5 330.1 L900.5 326.8 L900.5 323.4 L900.5 320.1 L900.5 316.8 L900.5 313.5 L900.5 310.2 L900.5 306.8 L900.5 303.5 L900.5 300.2 L900.5 296.9 L900.5 293.6 L900.5 290.2 L900.5 286.9 L900.5 283.6 L900.5 280.3 L900.5 277 L900.5 273.6 L900.5 270.3 L900.5 267 L900.5 263.7 L900.5 260.4 L900.5 257 L900.5 253.7 L900.5 250.4 L900.5 247.1 L900.5 243.8 L900.5 240.4 L900.5 237.1 L900.5 233.8 L900.5 230.5 L900.5 227.2 L900.5 223.8 L900.5 220.5 L900.5 217.2 L900.5 213.9 L900.5 210.6 L900.5 207.2 L900.5 203.9 L900.5 200.6 L900.5 197.3 L900.5 194 L900.5 190.6 L900.5 187.3 L900.5 184 L900.5 180.7 L900.5 177.4 L900.5 174 L900.5 170.7 L900.5 167.4 L900.5 164.1 L900.5 160.8 L900.5 157.4 L900.5 154.1 L900.5 150.8 L900.5 147.5 L900.5 144.2 L900.5 140.8 L900.5 137.5 L900.5 134.2 L900.5 130.9 L900.5 127.6 L900.5 124.2 L900.5 120.9 L900.5 117.6 L900.5 114.3 L900.5 111 L900.5 107.6 L900.5 104.3 L900.5 101 L900.5 97.7 L900.5 94.4 L900.5 91 L900.5 87.7 L900.5 84.4 L900.5 81.1 L900.5 77.8 L900.5 74.4 L900.5 71.1 L900.5 67.8 L900.5 64.5 L900.5 61.2 L900.5 57.8 L900.5 54.5 L900.5 51.2 L900.5 47.9 L900.5 44.6 L900.5 41.2 L900.5 37.9 L900.5 34.6 L900.5 31.3 L900.5 28 L900.5 24.6 L900.5 21.3 L900.5 18"/>
<path d="M900.5 615.6 L899.6 612.3 L898.8 609 L897.9 605.6 L897 602.3 L896.2 599 L895.3 595.7 L894.5 592.4 L893.6 589 L892.7 585.7 L891.9 582.4 L891 579.1 L890.2 575.8 L889.3 572.4 L888.5 569.1 L887.7 565.8 L886.8 562.5 L886 559.2 L885.2 555.8 L884.3 552.5 L883.5 549.2 L882.7 545.9 L881.9 542.6 L881.1 539.2 L880.3 535.9 L879.5 532.6 L878.7 529.3 L878 526 L877.2 522.6 L876.4 519.3 L875.7 516 L874.9 512.7 L874.2 509.4 L873.5 506 L872.8 502.7 L872 499.4 L871.3 496.1 L870.6 492.8 L870 489.4 L869.3 486.1 L868.6 482.8 L867.9 479.5 L867.3 476.2 L866.7 472.8 L866 469.5 L865.4 466.2 L864.8 462.9 L864.2 459.6 L863.6 456.2 L863.1 452.9 L862.5 449.6 L861.9 446.3 L861.4 443 L860.9 439.6 L860.4 436.3 L859.9 433 L859.4 429.7 L858.9 426.4 L858.4 423 L858 419.7 L857.5 416.4 L857.1 413.1 L856.7 409.8 L856.3 406.4 L855.9 403.1 L855.5 399.8 L855.2 396.5 L854.8 393.2 L854.5 389.8 L854.2 386.5 L853.9 383.2 L853.6 379.9 L853.3 376.6 L853 373.2 L852.8 369.9 L852.6 366.6 L852.4 363.3 L852.2 360 L852 356.6 L851.8 353.3 L851.6 350 L851.5 346.7 L851.4 343.4 L851.2 340 L851.2 336.7 L851.1 333.4 L851 330.1 L850.9 326.8 L850.9 323.4 L850.9 320.1 L850.9 316.8 L850.9 313.5 L850.9 310.2 L850.9 306.8 L851 303.5 L851.1 300.2 L851.2 296.9 L851.2 293.6 L851.4 290.2 L851.5 286.9 L851.6 283.6 L851.8 280.3 L852 277 L852.2 273.6 L852.4 270.3 L852.6 267 L852.8 263.7 L853 260.4 L853.3 257 L853.6 253.7 L853.9 250.4 L854.2 247.1 L854.5 243.8 L854.8 240.4 L855.2 237.1 L855.5 233.8 L855.9 230.5 L856.3 227.2 L856.7 223.8 L857.1 220.5 L857.5 217.2 L858 213.9 L858.4 210.6 L858.9 207.2 L859.4 203.9 L859.9 200.6 L860.4 197.3 L860.9 194 L861.4 190.6 L861.9 187.3 L862.5 184 L863.1 180.7 L863.6 177.4 L864.2 174 L864.8 170.7 L865.4 167.4 L866 164.1 L866.7 160.8 L867.3 157.4 L867.9 154.1 L868.6 150.8 L869.3 147.5 L870 144.2 L870.6 140.8 L871.3 137.5 L872 134.2 L872.8 130.9 L873.5 127.6 L874.2 124.2 L874.9 120.9 L875.7 117.6 L876.4 114.3 L877.2 111 L878 107.6 L878.7 104.3 L879.5 101 L880.3 97.7 L881.1 94.4 L881.9 91 L882.7 87.7 L883.5 84.4 L884.3 81.1 L885.2 77.8 L886 74.4 L886.8 71.1 L887.7 67.8 L888.5 64.5 L889.3 61.2 L890.2 57.8 L891 54.5 L891.9 51.2 L892.7 47.9 L893.6 44.6 L894.5 41.2 L895.3 37.9 L896.2 34.6 L897 31.3 L897.9 28 L898.8 24.6 L899.6 21.3 L900.5 18"/>
<path d="M900.5 615.6 L898.8 612.3 L897 609 L895.3 605.6 L893.6 602.3 L891.9 599 L890.1 595.7 L888.4 592.4 L886.7 589 L885 585.7 L883.3 582.4 L881.6 579.1 L879.9 575.8 L878.2 572.4 L876.5 569.1 L874.8 565.8 L873.1 562.5 L871.5 559.2 L869.8 555.8 L868.2 552.5 L866.6 549.2 L864.9 545.9 L863.3 542.6 L861.7 539.2 L860.1 535.9 L858.6 532.6 L857 529.3 L855.4 526 L853.9 522.6 L852.4 519.3 L850.9 516 L849.4 512.7 L847.9 509.4 L846.5 506 L845 502.7 L843.6 499.4 L842.2 496.1 L840.8 492.8 L839.4 489.4 L838 486.1 L836.7 482.8 L835.4 479.5 L834.1 476.2 L832.8 472.8 L831.6 469.5 L830.3 466.2 L829.1 462.9 L827.9 459.6 L826.8 456.2 L825.6 452.9 L824.5 449.6 L823.4 446.3 L822.3 443 L821.2 439.6 L820.2 436.3 L819.2 433 L818.2 429.7 L817.3 426.4 L816.3 423 L815.4 419.7 L814.6 416.4 L813.7 413.1 L812.9 409.8 L812.1 406.4 L811.3 403.1 L810.6 399.8 L809.8 396.5 L809.1 393.2 L808.5 389.8 L807.9 386.5 L807.2 383.2 L806.7 379.9 L806.1 376.6 L805.6 373.2 L805.1 369.9 L804.6 366.6 L804.2 363.3 L803.8 360 L803.4 356.6 L803.1 353.3 L802.8 350 L802.5 346.7 L802.2 343.4 L802 340 L801.8 336.7 L801.6 333.4 L801.5 330.1 L801.4 326.8 L801.3 323.4 L801.3 320.1 L801.3 316.8 L801.3 313.5 L801.3 310.2 L801.4 306.8 L801.5 303.5 L801.6 300.2 L801.8 296.9 L802 293.6 L802.2 290.2 L802.5 286.9 L802.8 283.6 L803.1 280.3 L803.4 277 L803.8 273.6 L804.2 270.3 L804.6 267 L805.1 263.7 L805.6 260.4 L806.1 257 L806.7 253.7 L807.2 250.4 L807.9 247.1 L808.5 243.8 L809.1 240.4 L809.8 237.1 L810.6 233.8 L811.3 230.5 L812.1 227.2 L812.9 223.8 L813.7 220.5 L814.6 217.2 L815.4 213.9 L816.3 210.6 L817.3 207.2 L818.2 203.9 L819.2 200.6 L820.2 197.3 L821.2 194 L822.3 190.6 L823.4 187.3 L824.5 184 L825.6 180.7 L826.8 177.4 L827.9 174 L829.1 170.7 L830.3 167.4 L831.6 164.1 L832.8 160.8 L834.1 157.4 L835.4 154.1 L836.7 150.8 L838 147.5 L839.4 144.2 L840.8 140.8 L842.2 137.5 L843.6 134.2 L845 130.9 L846.5 127.6 L847.9 124.2 L849.4 120.9 L850.9 117.6 L852.4 114.3 L853.9 111 L855.4 107.6 L857 104.3 L858.6 101 L860.1 97.7 L861.7 94.4 L863.3 91 L864.9 87.7 L866.6 84.4 L868.2 81.1 L869.8 77.8 L871.5 74.4 L873.1 71.1 L874.8 67.8 L876.5 64.5 L878.2 61.2 L879.9 57.8 L881.6 54.5 L883.3 51.2 L885 47.9 L886.7 44.6 L888.4 41.2 L890.1 37.9 L891.9 34.6 L893.6 31.3 L895.3 28 L897 24.6 L898.8 21.3 L900.5 18"/>
<path d="M900.5 615.6 L897.9 612.3 L895.3 609 L892.7 605.6 L890.1 602.3 L887.5 599 L884.9 595.7 L882.4 592.4 L879.8 589 L877.2 585.7 L874.7 582.4 L872.1 579.1 L869.6 575.8 L867 572.4 L864.5 569.1 L862 565.8 L859.5 562.5 L857 559.2 L854.5 555.8 L852 552.5 L849.6 549.2 L847.2 545.9 L844.7 542.6 L842.3 539.2 L840 535.9 L837.6 532.6 L835.2 529.3 L832.9 526 L830.6 522.6 L828.3 519.3 L826.1 516 L823.8 512.7 L821.6 509.4 L819.4 506 L817.3 502.7 L815.1 499.4 L813 496.1 L810.9 492.8 L808.9 489.4 L806.8 486.1 L804.8 482.8 L802.8 479.5 L800.9 476.2 L799 472.8 L797.1 469.5 L795.2 466.2 L793.4 462.9 L791.6 459.6 L789.9 456.2 L788.2 452.9 L786.5 449.6 L784.8 446.3 L783.2 443 L781.6 439.6 L780.1 436.3 L778.6 433 L777.1 429.7 L775.7 426.4 L774.3 423 L772.9 419.7 L771.6 416.4 L770.3 413.1 L769.1 409.8 L767.9 406.4 L766.7 403.1 L765.6 399.8 L764.5 396.5 L763.5 393.2 L762.5 389.8 L761.5 386.5 L760.6 383.2 L759.8 379.9 L758.9 376.6 L758.1 373.2 L757.4 369.9 L756.7 366.6 L756.1 363.3 L755.5 360 L754.9 356.6 L754.4 353.3 L753.9 350 L753.5 346.7 L753.1 343.4 L752.7 340 L752.5 336.7 L752.2 333.4 L752 330.1 L751.8 326.8 L751.7 323.4 L751.7 320.1 L751.6 316.8 L751.7 313.5 L751.7 310.2 L751.8 306.8 L752 303.5 L752.2 300.2 L752.5 296.9 L752.7 293.6 L753.1 290.2 L753.5 286.9 L753.9 283.6 L754.4 280.3 L754.9 277 L755.5 273.6 L756.1 270.3 L756.7 267 L757.4 263.7 L758.1 260.4 L758.9 257 L759.8 253.7 L760.6 250.4 L761.5 247.1 L762.5 243.8 L763.5 240.4 L764.5 237.1 L765.6 233.8 L766.7 230.5 L767.9 227.2 L769.1 223.8 L770.3 220.5 L771.6 217.2 L772.9 213.9 L774.3 210.6 L775.7 207.2 L777.1 203.9 L778.6 200.6 L780.1 197.3 L781.6 194 L783.2 190.6 L784.8 187.3 L786.5 184 L788.2 180.7 L789.9 177.4 L791.6 174 L793.4 170.7 L795.2 167.4 L797.1 164.1 L799 160.8 L800.9 157.4 L802.8 154.1 L804.8 150.8 L806.8 147.5 L808.9 144.2 L810.9 140.8 L813 137.5 L815.1 134.2 L817.3 130.9 L819.4 127.6 L821.6 124.2 L823.8 120.9 L826.1 117.6 L828.3 114.3 L830.6 111 L832.9 107.6 L835.2 104.3 L837.6 101 L840 97.7 L842.3 94.4 L844.7 91 L847.2 87.7 L849.6 84.4 L852 81.1 L854.5 77.8 L857 74.4 L859.5 71.1 L862 67.8 L864.5 64.5 L867 61.2 L869.6 57.8 L872.1 54.5 L874.7 51.2 L877.2 47.9 L879.8 44.6 L882.4 41.2 L884.9 37.9 L887.5 34.6 L890.1 31.3 L892.7 28 L895.3 24.6 L897.9 21.3 L900.5 18"/>
<path d="M900.5 615.6 L897 612.3 L893.6 609 L890.1 605.6 L886.7 602.3 L883.2 599 L879.8 595.7 L876.3 592.4 L872.9 589 L869.5 585.7 L866 582.4 L862.6 579.1 L859.2 575.8 L855.9 572.4 L852.5 569.1 L849.1 565.8 L845.8 562.5 L842.5 559.2 L839.2 555.8 L835.9 552.5 L832.6 549.2 L829.4 545.9 L826.1 542.6 L822.9 539.2 L819.8 535.9 L816.6 532.6 L813.5 529.3 L810.4 526 L807.3 522.6 L804.3 519.3 L801.3 516 L798.3 512.7 L795.3 509.4 L792.4 506 L789.5 502.7 L786.7 499.4 L783.8 496.1 L781.1 492.8 L778.3 489.4 L775.6 486.1 L772.9 482.8 L770.3 479.5 L767.7 476.2 L765.1 472.8 L762.6 469.5 L760.2 466.2 L757.7 462.9 L755.3 459.6 L753 456.2 L750.7 452.9 L748.5 449.6 L746.3 446.3 L744.1 443 L742 439.6 L739.9 436.3 L737.9 433 L736 429.7 L734 426.4 L732.2 423 L730.4 419.7 L728.6 416.4 L726.9 413.1 L725.3 409.8 L723.7 406.4 L722.1 403.1 L720.6 399.8 L719.2 396.5 L717.8 393.2 L716.5 389.8 L715.2 386.5 L714 383.2 L712.8 379.9 L711.7 376.6 L710.7 373.2 L709.7 369.9 L708.8 366.6 L707.9 363.3 L707.1 360 L706.4 356.6 L705.7 353.3 L705 350 L704.5 346.7 L704 343.4 L703.5 340 L703.1 336.7 L702.8 333.4 L702.5 330.1 L702.3 326.8 L702.1 323.4 L702.1 320.1 L702 316.8 L702.1 313.5 L702.1 310.2 L702.3 306.8 L702.5 303.5 L702.8 300.2 L703.1 296.9 L703.5 293.6 L704 290.2 L704.5 286.9 L705 283.6 L705.7 280.3 L706.4 277 L707.1 273.6 L707.9 270.3 L708.8 267 L709.7 263.7 L710.7 260.4 L711.7 257 L712.8 253.7 L714 250.4 L715.2 247.1 L716.5 243.8 L717.8 240.4 L719.2 237.1 L720.6 233.8 L722.1 230.5 L723.7 227.2 L725.3 223.8 L726.9 220.5 L728.6 217.2 L730.4 213.9 L732.2 210.6 L734 207.2 L736 203.9 L737.9 200.6 L739.9 197.3 L742 194 L744.1 190.6 L746.3 187.3 L748.5 184 L750.7 180.7 L753 177.4 L755.3 174 L757.7 170.7 L760.2 167.4 L762.6 164.1 L765.1 160.8 L767.7 157.4 L770.3 154.1 L772.9 150.8 L775.6 147.5 L778.3 144.2 L781.1 140.8 L783.8 137.5 L786.7 134.2 L789.5 130.9 L792.4 127.6 L795.3 124.2 L798.3 120.9 L801.3 117.6 L804.3 114.3 L807.3 111 L810.4 107.6 L813.5 104.3 L816.6 101 L819.8 97.7 L822.9 94.4 L826.1 91 L829.4 87.7 L832.6 84.4 L835.9 81.1 L839.2 77.8 L842.5 74.4 L845.8 71.1 L849.1 67.8 L852.5 64.5 L855.9 61.2 L859.2 57.8 L862.6 54.5 L866 51.2 L869.5 47.9 L872.9 44.6 L876.3 41.2 L879.8 37.9 L883.2 34.6 L886.7 31.3 L890.1 28 L893.6 24.6 L897 21.3 L900.5 18"/>
<path d="M900.5 615.6 L896.2 612.3 L891.8 609 L887.5 605.6 L883.2 602.3 L878.9 599 L874.6 595.7 L870.3 592.4 L866 589 L861.7 585.7 L857.4 582.4 L853.2 579.1 L848.9 575.8 L844.7 572.4 L840.5 569.1 L836.3 565.8 L832.1 562.5 L828 559.2 L823.8 555.8 L819.7 552.5 L815.6 549.2 L811.6 545.9 L807.6 542.6 L803.6 539.2 L799.6 535.9 L795.6 532.6 L791.7 529.3 L787.9 526 L784 522.6 L780.2 519.3 L776.4 516 L772.7 512.7 L769 509.4 L765.4 506 L761.8 502.7 L758.2 499.4 L754.7 496.1 L751.2 492.8 L747.8 489.4 L744.4 486.1 L741 482.8 L737.7 479.5 L734.5 476.2 L731.3 472.8 L728.2 469.5 L725.1 466.2 L722 462.9 L719.1 459.6 L716.1 456.2 L713.3 452.9 L710.4 449.6 L707.7 446.3 L705 443 L702.4 439.6 L699.8 436.3 L697.3 433 L694.8 429.7 L692.4 426.4 L690.1 423 L687.8 419.7 L685.6 416.4 L683.5 413.1 L681.4 409.8 L679.4 406.4 L677.5 403.1 L675.6 399.8 L673.8 396.5 L672.1 393.2 L670.5 389.8 L668.9 386.5 L667.4 383.2 L665.9 379.9 L664.5 376.6 L663.2 373.2 L662 369.9 L660.9 366.6 L659.8 363.3 L658.8 360 L657.8 356.6 L657 353.3 L656.2 350 L655.5 346.7 L654.8 343.4 L654.2 340 L653.8 336.7 L653.3 333.4 L653 330.1 L652.7 326.8 L652.6 323.4 L652.4 320.1 L652.4 316.8 L652.4 313.5 L652.6 310.2 L652.7 306.8 L653 303.5 L653.3 300.2 L653.8 296.9 L654.2 293.6 L654.8 290.2 L655.5 286.9 L656.2 283.6 L657 280.3 L657.8 277 L658.8 273.6 L659.8 270.3 L660.9 267 L662 263.7 L663.2 260.4 L664.5 257 L665.9 253.7 L667.4 250.4 L668.9 247.1 L670.5 243.8 L672.1 240.4 L673.8 237.1 L675.6 233.8 L677.5 230.5 L679.4 227.2 L681.4 223.8 L683.5 220.5 L685.6 217.2 L687.8 213.9 L690.1 210.6 L692.4 207.2 L694.8 203.9 L697.3 200.6 L699.8 197.3 L702.4 194 L705 190.6 L707.7 187.3 L710.4 184 L713.3 180.7 L716.1 177.4 L719.1 174 L722 170.7 L725.1 167.4 L728.2 164.1 L731.3 160.8 L734.5 157.4 L737.7 154.1 L741 150.8 L744.4 147.5 L747.8 144.2 L751.2 140.8 L754.7 137.5 L758.2 134.2 L761.8 130.9 L765.4 127.6 L769 124.2 L772.7 120.9 L776.4 117.6 L780.2 114.3 L784 111 L787.9 107.6 L791.7 104.3 L795.6 101 L799.6 97.7 L803.6 94.4 L807.6 91 L811.6 87.7 L815.6 84.4 L819.7 81.1 L823.8 77.8 L828 74.4 L832.1 71.1 L836.3 67.8 L840.5 64.5 L844.7 61.2 L848.9 57.8 L853.2 54.5 L857.4 51.2 L861.7 47.9 L866 44.6 L870.3 41.2 L874.6 37.9 L878.9 34.6 L883.2 31.3 L887.5 28 L891.8 24.6 L896.2 21.3 L900.5 18"/>
<path d="M900.5 615.6 L895.3 612.3 L890.1 609 L884.9 605.6 L879.7 602.3 L874.6 599 L869.4 595.7 L864.2 592.4 L859.1 589 L853.9 585.7 L848.8 582.4 L843.7 579.1 L838.6 575.8 L833.5 572.4 L828.5 569.1 L823.4 565.8 L818.4 562.5 L813.5 559.2 L808.5 555.8 L803.6 552.5 L798.7 549.2 L793.8 545.9 L789 542.6 L784.2 539.2 L779.4 535.9 L774.7 532.6 L770 529.3 L765.3 526 L760.7 522.6 L756.2 519.3 L751.6 516 L747.2 512.7 L742.7 509.4 L738.4 506 L734 502.7 L729.7 499.4 L725.5 496.1 L721.3 492.8 L717.2 489.4 L713.1 486.1 L709.1 482.8 L705.2 479.5 L701.3 476.2 L697.5 472.8 L693.7 469.5 L690 466.2 L686.3 462.9 L682.8 459.6 L679.3 456.2 L675.8 452.9 L672.4 449.6 L669.1 446.3 L665.9 443 L662.7 439.6 L659.6 436.3 L656.6 433 L653.7 429.7 L650.8 426.4 L648 423 L645.3 419.7 L642.7 416.4 L640.1 413.1 L637.6 409.8 L635.2 406.4 L632.9 403.1 L630.7 399.8 L628.5 396.5 L626.4 393.2 L624.5 389.8 L622.6 386.5 L620.7 383.2 L619 379.9 L617.4 376.6 L615.8 373.2 L614.3 369.9 L612.9 366.6 L611.6 363.3 L610.4 360 L609.3 356.6 L608.2 353.3 L607.3 350 L606.4 346.7 L605.7 343.4 L605 340 L604.4 336.7 L603.9 333.4 L603.5 330.1 L603.2 326.8 L603 323.4 L602.8 320.1 L602.8 316.8 L602.8 313.5 L603 310.2 L603.2 306.8 L603.5 303.5 L603.9 300.2 L604.4 296.9 L605 293.6 L605.7 290.2 L606.4 286.9 L607.3 283.6 L608.2 280.3 L609.3 277 L610.4 273.6 L611.6 270.3 L612.9 267 L614.3 263.7 L615.8 260.4 L617.4 257 L619 253.7 L620.7 250.4 L622.6 247.1 L624.5 243.8 L626.4 240.4 L628.5 237.1 L630.7 233.8 L632.9 230.5 L635.2 227.2 L637.6 223.8 L640.1 220.5 L642.7 217.2 L645.3 213.9 L648 210.6 L650.8 207.2 L653.7 203.9 L656.6 200.6 L659.6 197.3 L662.7 194 L665.9 190.6 L669.1 187.3 L672.4 184 L675.8 180.7 L679.3 177.4 L682.8 174 L686.3 170.7 L690 167.4 L693.7 164.1 L697.5 160.8 L701.3 157.4 L705.2 154.1 L709.1 150.8 L713.1 147.5 L717.2 144.2 L721.3 140.8 L725.5 137.5 L729.7 134.2 L734 130.9 L738.4 127.6 L742.7 124.2 L747.2 120.9 L751.6 117.6 L756.2 114.3 L760.7 111 L765.3 107.6 L770 104.3 L774.7 101 L779.4 97.7 L784.2 94.4 L789 91 L793.8 87.7 L798.7 84.4 L803.6 81.1 L808.5 77.8 L813.5 74.4 L818.4 71.1 L823.4 67.8 L828.5 64.5 L833.5 61.2 L838.6 57.8 L843.7 54.5 L848.8 51.2 L853.9 47.9 L859.1 44.6 L864.2 41.2 L869.4 37.9 L874.6 34.6 L879.7 31.3 L884.9 28 L890.1 24.6 L895.3 21.3 L900.5 18"/>
<path d="M900.5 615.6 L894.4 612.3 L888.4 609 L882.3 605.6 L876.3 602.3 L870.2 599 L864.2 595.7 L858.2 592.4 L852.2 589 L846.2 585.7 L840.2 582.4 L834.2 579.1 L828.3 575.8 L822.4 572.4 L816.5 569.1 L810.6 565.8 L804.8 562.5 L798.9 559.2 L793.2 555.8 L787.4 552.5 L781.7 549.2 L776 545.9 L770.4 542.6 L764.8 539.2 L759.2 535.9 L753.7 532.6 L748.2 529.3 L742.8 526 L737.4 522.6 L732.1 519.3 L726.8 516 L721.6 512.7 L716.4 509.4 L711.3 506 L706.3 502.7 L701.3 499.4 L696.3 496.1 L691.5 492.8 L686.7 489.4 L681.9 486.1 L677.2 482.8 L672.6 479.5 L668.1 476.2 L663.6 472.8 L659.2 469.5 L654.9 466.2 L650.6 462.9 L646.5 459.6 L642.4 456.2 L638.4 452.9 L634.4 449.6 L630.6 446.3 L626.8 443 L623.1 439.6 L619.5 436.3 L616 433 L612.5 429.7 L609.2 426.4 L605.9 423 L602.8 419.7 L599.7 416.4 L596.7 413.1 L593.8 409.8 L591 406.4 L588.3 403.1 L585.7 399.8 L583.2 396.5 L580.8 393.2 L578.5 389.8 L576.2 386.5 L574.1 383.2 L572.1 379.9 L570.2 376.6 L568.3 373.2 L566.6 369.9 L565 366.6 L563.5 363.3 L562.1 360 L560.8 356.6 L559.5 353.3 L558.4 350 L557.4 346.7 L556.5 343.4 L555.7 340 L555.1 336.7 L554.5 333.4 L554 330.1 L553.6 326.8 L553.4 323.4 L553.2 320.1 L553.2 316.8 L553.2 313.5 L553.4 310.2 L553.6 306.8 L554 303.5 L554.5 300.2 L555.1 296.9 L555.7 293.6 L556.5 290.2 L557.4 286.9 L558.4 283.6 L559.5 280.3 L560.8 277 L562.1 273.6 L563.5 270.3 L565 267 L566.6 263.7 L568.3 260.4 L570.2 257 L572.1 253.7 L574.1 250.4 L576.2 247.1 L578.5 243.8 L580.8 240.4 L583.2 237.1 L585.7 233.8 L588.3 230.5 L591 227.2 L593.8 223.8 L596.7 220.5 L599.7 217.2 L602.8 213.9 L605.9 210.6 L609.2 207.2 L612.5 203.9 L616 200.6 L619.5 197.3 L623.1 194 L626.8 190.6 L630.6 187.3 L634.4 184 L638.4 180.7 L642.4 177.4 L646.5 174 L650.6 170.7 L654.9 167.4 L659.2 164.1 L663.6 160.8 L668.1 157.4 L672.6 154.1 L677.2 150.8 L681.9 147.5 L686.7 144.2 L691.5 140.8 L696.3 137.5 L701.3 134.2 L706.3 130.9 L711.3 127.6 L716.4 124.2 L721.6 120.9 L726.8 117.6 L732.1 114.3 L737.4 111 L742.8 107.6 L748.2 104.3 L753.7 101 L759.2 97.7 L764.8 94.4 L770.4 91 L776 87.7 L781.7 84.4 L787.4 81.1 L793.2 77.8 L798.9 74.4 L804.8 71.1 L810.6 67.8 L816.5 64.5 L822.4 61.2 L828.3 57.8 L834.2 54.5 L840.2 51.2 L846.2 47.9 L852.2 44.6 L858.2 41.2 L864.2 37.9 L870.2 34.6 L876.3 31.3 L882.3 28 L888.4 24.6 L894.4 21.3 L900.5 18"/>
<path d="M900.5 615.6 L893.6 612.3 L886.6 609 L879.7 605.6 L872.8 602.3 L865.9 599 L859 595.7 L852.1 592.4 L845.3 589 L838.4 585.7 L831.6 582.4 L824.8 579.1 L818 575.8 L811.2 572.4 L804.5 569.1 L797.8 565.8 L791.1 562.5 L784.4 559.2 L777.8 555.8 L771.3 552.5 L764.7 549.2 L758.2 545.9 L751.8 542.6 L745.4 539.2 L739 535.9 L732.7 532.6 L726.5 529.3 L720.3 526 L714.1 522.6 L708 519.3 L702 516 L696.1 512.7 L690.1 509.4 L684.3 506 L678.5 502.7 L672.8 499.4 L667.2 496.1 L661.6 492.8 L656.1 489.4 L650.7 486.1 L645.3 482.8 L640.1 479.5 L634.9 476.2 L629.8 472.8 L624.7 469.5 L619.8 466.2 L615 462.9 L610.2 459.6 L605.5 456.2 L600.9 452.9 L596.4 449.6 L592 446.3 L587.7 443 L583.5 439.6 L579.4 436.3 L575.3 433 L571.4 429.7 L567.6 426.4 L563.9 423 L560.2 419.7 L556.7 416.4 L553.3 413.1 L550 409.8 L546.8 406.4 L543.7 403.1 L540.7 399.8 L537.9 396.5 L535.1 393.2 L532.4 389.8 L529.9 386.5 L527.5 383.2 L525.2 379.9 L523 376.6 L520.9 373.2 L518.9 369.9 L517.1 366.6 L515.3 363.3 L513.7 360 L512.2 356.6 L510.8 353.3 L509.6 350 L508.4 346.7 L507.4 343.4 L506.5 340 L505.7 336.7 L505.1 333.4 L504.5 330.1 L504.1 326.8 L503.8 323.4 L503.6 320.1 L503.5 316.8 L503.6 313.5 L503.8 310.2 L504.1 306.8 L504.5 303.5 L505.1 300.2 L505.7 296.9 L506.5 293.6 L507.4 290.2 L508.4 286.9 L509.6 283.6 L510.8 280.3 L512.2 277 L513.7 273.6 L515.3 270.3 L517.1 267 L518.9 263.7 L520.9 260.4 L523 257 L525.2 253.7 L527.5 250.4 L529.9 247.1 L532.4 243.8 L535.1 240.4 L537.9 237.1 L540.7 233.8 L543.7 230.5 L546.8 227.2 L550 223.8 L553.3 220.5 L556.7 217.2 L560.2 213.9 L563.9 210.6 L567.6 207.2 L571.4 203.9 L575.3 200.6 L579.4 197.3 L583.5 194 L587.7 190.6 L592 187.3 L596.4 184 L600.9 180.7 L605.5 177.4 L610.2 174 L615 170.7 L619.8 167.4 L624.7 164.1 L629.8 160.8 L634.9 157.4 L640.1 154.1 L645.3 150.8 L650.7 147.5 L656.1 144.2 L661.6 140.8 L667.2 137.5 L672.8 134.2 L678.5 130.9 L684.3 127.6 L690.1 124.2 L696.1 120.9 L702 117.6 L708 114.3 L714.1 111 L720.3 107.6 L726.5 104.3 L732.7 101 L739 97.7 L745.4 94.4 L751.8 91 L758.2 87.7 L764.7 84.4 L771.3 81.1 L777.8 77.8 L784.4 74.4 L791.1 71.1 L797.8 67.8 L804.5 64.5 L811.2 61.2 L818 57.8 L824.8 54.5 L831.6 51.2 L838.4 47.9 L845.3 44.6 L852.1 41.2 L859 37.9 L865.9 34.6 L872.8 31.3 L879.7 28 L886.6 24.6 L893.6 21.3 L900.5 18"/>
<path d="M900.5 615.6 L892.7 612.3 L884.9 609 L877.1 605.6 L869.3 602.3 L861.6 599 L853.8 595.7 L846.1 592.4 L838.3 589 L830.6 585.7 L823 582.4 L815.3 579.1 L807.7 575.8 L800 572.4 L792.5 569.1 L784.9 565.8 L777.4 562.5 L769.9 559.2 L762.5 555.8 L755.1 552.5 L747.8 549.2 L740.5 545.9 L733.2 542.6 L726 539.2 L718.9 535.9 L711.8 532.6 L704.7 529.3 L697.8 526 L690.8 522.6 L684 519.3 L677.2 516 L670.5 512.7 L663.8 509.4 L657.3 506 L650.8 502.7 L644.4 499.4 L638 496.1 L631.7 492.8 L625.6 489.4 L619.5 486.1 L613.4 482.8 L607.5 479.5 L601.7 476.2 L595.9 472.8 L590.3 469.5 L584.7 466.2 L579.3 462.9 L573.9 459.6 L568.6 456.2 L563.5 452.9 L558.4 449.6 L553.4 446.3 L548.6 443 L543.8 439.6 L539.2 436.3 L534.7 433 L530.3 429.7 L526 426.4 L521.8 423 L517.7 419.7 L513.8 416.4 L509.9 413.1 L506.2 409.8 L502.6 406.4 L499.1 403.1 L495.8 399.8 L492.5 396.5 L489.4 393.2 L486.4 389.8 L483.6 386.5 L480.9 383.2 L478.3 379.9 L475.8 376.6 L473.4 373.2 L471.2 369.9 L469.1 366.6 L467.2 363.3 L465.4 360 L463.7 356.6 L462.1 353.3 L460.7 350 L459.4 346.7 L458.3 343.4 L457.2 340 L456.4 336.7 L455.6 333.4 L455 330.1 L454.5 326.8 L454.2 323.4 L454 320.1 L453.9 316.8 L454 313.5 L454.2 310.2 L454.5 306.8 L455 303.5 L455.6 300.2 L456.4 296.9 L457.2 293.6 L458.3 290.2 L459.4 286.9 L460.7 283.6 L462.1 280.3 L463.7 277 L465.4 273.6 L467.2 270.3 L469.1 267 L471.2 263.7 L473.4 260.4 L475.8 257 L478.3 253.7 L480.9 250.4 L483.6 247.1 L486.4 243.8 L489.4 240.4 L492.5 237.1 L495.8 233.8 L499.1 230.5 L502.6 227.2 L506.2 223.8 L509.9 220.5 L513.8 217.2 L517.7 213.9 L521.8 210.6 L526 207.2 L530.3 203.9 L534.7 200.6 L539.2 197.3 L543.8 194 L548.6 190.6 L553.4 187.3 L558.4 184 L563.5 180.7 L568.6 177.4 L573.9 174 L579.3 170.7 L584.7 167.4 L590.3 164.1 L595.9 160.8 L601.7 157.4 L607.5 154.1 L613.4 150.8 L619.5 147.5 L625.6 144.2 L631.7 140.8 L638 137.5 L644.4 134.2 L650.8 130.9 L657.3 127.6 L663.8 124.2 L670.5 120.9 L677.2 117.6 L684 114.3 L690.8 111 L697.8 107.6 L704.7 104.3 L711.8 101 L718.9 97.7 L726 94.4 L733.2 91 L740.5 87.7 L747.8 84.4 L755.1 81.1 L762.5 77.8 L769.9 74.4 L777.4 71.1 L784.9 67.8 L792.5 64.5 L800 61.2 L807.7 57.8 L815.3 54.5 L823 51.2 L830.6 47.9 L838.3 44.6 L846.1 41.2 L853.8 37.9 L861.6 34.6 L869.3 31.3 L877.1 28 L884.9 24.6 L892.7 21.3 L900.5 18"/>
<path d="M900.5 615.6 L891.8 612.3 L883.2 609 L874.5 605.6 L865.9 602.3 L857.3 599 L848.6 595.7 L840 592.4 L831.4 589 L822.9 585.7 L814.3 582.4 L805.8 579.1 L797.3 575.8 L788.9 572.4 L780.5 569.1 L772.1 565.8 L763.7 562.5 L755.4 559.2 L747.2 555.8 L739 552.5 L730.8 549.2 L722.7 545.9 L714.6 542.6 L706.6 539.2 L698.7 535.9 L690.8 532.6 L683 529.3 L675.2 526 L667.5 522.6 L659.9 519.3 L652.4 516 L644.9 512.7 L637.6 509.4 L630.3 506 L623 502.7 L615.9 499.4 L608.8 496.1 L601.9 492.8 L595 489.4 L588.2 486.1 L581.5 482.8 L575 479.5 L568.5 476.2 L562.1 472.8 L555.8 469.5 L549.6 466.2 L543.6 462.9 L537.6 459.6 L531.8 456.2 L526 452.9 L520.4 449.6 L514.9 446.3 L509.5 443 L504.2 439.6 L499.1 436.3 L494 433 L489.1 429.7 L484.4 426.4 L479.7 423 L475.2 419.7 L470.8 416.4 L466.5 413.1 L462.4 409.8 L458.4 406.4 L454.5 403.1 L450.8 399.8 L447.2 396.5 L443.7 393.2 L440.4 389.8 L437.3 386.5 L434.2 383.2 L431.3 379.9 L428.6 376.6 L426 373.2 L423.5 369.9 L421.2 366.6 L419 363.3 L417 360 L415.1 356.6 L413.4 353.3 L411.8 350 L410.4 346.7 L409.1 343.4 L408 340 L407 336.7 L406.2 333.4 L405.5 330.1 L405 326.8 L404.6 323.4 L404.4 320.1 L404.3 316.8 L404.4 313.5 L404.6 310.2 L405 306.8 L405.5 303.5 L406.2 300.2 L407 296.9 L408 293.6 L409.1 290.2 L410.4 286.9 L411.8 283.6 L413.4 280.3 L415.1 277 L417 273.6 L419 270.3 L421.2 267 L423.5 263.7 L426 260.4 L428.6 257 L431.3 253.7 L434.2 250.4 L437.3 247.1 L440.4 243.8 L443.7 240.4 L447.2 237.1 L450.8 233.8 L454.5 230.5 L458.4 227.2 L462.4 223.8 L466.5 220.5 L470.8 217.2 L475.2 213.9 L479.7 210.6 L484.4 207.2 L489.1 203.9 L494 200.6 L499.1 197.3 L504.2 194 L509.5 190.6 L514.9 187.3 L520.4 184 L526 180.7 L531.8 177.4 L537.6 174 L543.6 170.7 L549.6 167.4 L555.8 164.1 L562.1 160.8 L568.5 157.4 L575 154.1 L581.5 150.8 L588.2 147.5 L595 144.2 L601.9 140.8 L608.8 137.5 L615.9 134.2 L623 130.9 L630.3 127.6 L637.6 124.2 L644.9 120.9 L652.4 117.6 L659.9 114.3 L667.5 111 L675.2 107.6 L683 104.3 L690.8 101 L698.7 97.7 L706.6 94.4 L714.6 91 L722.7 87.7 L730.8 84.4 L739 81.1 L747.2 77.8 L755.4 74.4 L763.7 71.1 L772.1 67.8 L780.5 64.5 L788.9 61.2 L797.3 57.8 L805.8 54.5 L814.3 51.2 L822.9 47.9 L831.4 44.6 L840 41.2 L848.6 37.9 L857.3 34.6 L865.9 31.3 L874.5 28 L883.2 24.6 L891.8 21.3 L900.5 18"/>
<path d="M900.5 615.6 L891 612.3 L881.5 609 L871.9 605.6 L862.4 602.3 L852.9 599 L843.4 595.7 L834 592.4 L824.5 589 L815.1 585.7 L805.7 582.4 L796.4 579.1 L787 575.8 L777.7 572.4 L768.5 569.1 L759.2 565.8 L750.1 562.5 L740.9 559.2 L731.8 555.8 L722.8 552.5 L713.8 549.2 L704.9 545.9 L696 542.6 L687.2 539.2 L678.5 535.9 L669.8 532.6 L661.2 529.3 L652.7 526 L644.3 522.6 L635.9 519.3 L627.6 516 L619.4 512.7 L611.3 509.4 L603.2 506 L595.3 502.7 L587.4 499.4 L579.7 496.1 L572 492.8 L564.5 489.4 L557 486.1 L549.7 482.8 L542.4 479.5 L535.3 476.2 L528.3 472.8 L521.3 469.5 L514.5 466.2 L507.9 462.9 L501.3 459.6 L494.9 456.2 L488.6 452.9 L482.4 449.6 L476.3 446.3 L470.4 443 L464.6 439.6 L458.9 436.3 L453.4 433 L448 429.7 L442.7 426.4 L437.6 423 L432.6 419.7 L427.8 416.4 L423.1 413.1 L418.6 409.8 L414.2 406.4 L409.9 403.1 L405.8 399.8 L401.9 396.5 L398.1 393.2 L394.4 389.8 L390.9 386.5 L387.6 383.2 L384.4 379.9 L381.4 376.6 L378.5 373.2 L375.8 369.9 L373.3 366.6 L370.9 363.3 L368.7 360 L366.6 356.6 L364.7 353.3 L363 350 L361.4 346.7 L360 343.4 L358.7 340 L357.7 336.7 L356.8 333.4 L356 330.1 L355.4 326.8 L355 323.4 L354.8 320.1 L354.7 316.8 L354.8 313.5 L355 310.2 L355.4 306.8 L356 303.5 L356.8 300.2 L357.7 296.9 L358.7 293.6 L360 290.2 L361.4 286.9 L363 283.6 L364.7 280.3 L366.6 277 L368.7 273.6 L370.9 270.3 L373.3 267 L375.8 263.7 L378.5 260.4 L381.4 257 L384.4 253.7 L387.6 250.4 L390.9 247.1 L394.4 243.8 L398.1 240.4 L401.9 237.1 L405.8 233.8 L409.9 230.5 L414.2 227.2 L418.6 223.8 L423.1 220.5 L427.8 217.2 L432.6 213.9 L437.6 210.6 L442.7 207.2 L448 203.9 L453.4 200.6 L458.9 197.3 L464.6 194 L470.4 190.6 L476.3 187.3 L482.4 184 L488.6 180.7 L494.9 177.4 L501.3 174 L507.9 170.7 L514.5 167.4 L521.3 164.1 L528.3 160.8 L535.3 157.4 L542.4 154.1 L549.7 150.8 L557 147.5 L564.5 144.2 L572 140.8 L579.7 137.5 L587.4 134.2 L595.3 130.9 L603.2 127.6 L611.3 124.2 L619.4 120.9 L627.6 117.6 L635.9 114.3 L644.3 111 L652.7 107.6 L661.2 104.3 L669.8 101 L678.5 97.7 L687.2 94.4 L696 91 L704.9 87.7 L713.8 84.4 L722.8 81.1 L731.8 77.8 L740.9 74.4 L750.1 71.1 L759.2 67.8 L768.5 64.5 L777.7 61.2 L787 57.8 L796.4 54.5 L805.7 51.2 L815.1 47.9 L824.5 44.6 L834 41.2 L843.4 37.9 L852.9 34.6 L862.4 31.3 L871.9 28 L881.5 24.6 L891 21.3 L900.5 18"/>
<path d="M900.5 615.6 L890.1 612.3 L879.7 609 L869.3 605.6 L859 602.3 L848.6 599 L838.3 595.7 L827.9 592.4 L817.6 589 L807.4 585.7 L797.1 582.4 L786.9 579.1 L776.7 575.8 L766.6 572.4 L756.5 569.1 L746.4 565.8 L736.4 562.5 L726.4 559.2 L716.5 555.8 L706.6 552.5 L696.8 549.2 L687.1 545.9 L677.4 542.6 L667.8 539.2 L658.3 535.9 L648.9 532.6 L639.5 529.3 L630.2 526 L621 522.6 L611.8 519.3 L602.8 516 L593.8 512.7 L585 509.4 L576.2 506 L567.5 502.7 L559 499.4 L550.5 496.1 L542.2 492.8 L533.9 489.4 L525.8 486.1 L517.8 482.8 L509.9 479.5 L502.1 476.2 L494.4 472.8 L486.9 469.5 L479.5 466.2 L472.2 462.9 L465 459.6 L458 456.2 L451.1 452.9 L444.4 449.6 L437.8 446.3 L431.3 443 L425 439.6 L418.8 436.3 L412.7 433 L406.9 429.7 L401.1 426.4 L395.5 423 L390.1 419.7 L384.8 416.4 L379.7 413.1 L374.8 409.8 L370 406.4 L365.3 403.1 L360.8 399.8 L356.5 396.5 L352.4 393.2 L348.4 389.8 L344.6 386.5 L341 383.2 L337.5 379.9 L334.2 376.6 L331.1 373.2 L328.1 369.9 L325.3 366.6 L322.7 363.3 L320.3 360 L318.1 356.6 L316 353.3 L314.1 350 L312.4 346.7 L310.9 343.4 L309.5 340 L308.3 336.7 L307.3 333.4 L306.5 330.1 L305.9 326.8 L305.4 323.4 L305.2 320.1 L305.1 316.8 L305.2 313.5 L305.4 310.2 L305.9 306.8 L306.5 303.5 L307.3 300.2 L308.3 296.9 L309.5 293.6 L310.9 290.2 L312.4 286.9 L314.1 283.6 L316 280.3 L318.1 277 L320.3 273.6 L322.7 270.3 L325.3 267 L328.1 263.7 L331.1 260.4 L334.2 257 L337.5 253.7 L341 250.4 L344.6 247.1 L348.4 243.8 L352.4 240.4 L356.5 237.1 L360.8 233.8 L365.3 230.5 L370 227.2 L374.8 223.8 L379.7 220.5 L384.8 217.2 L390.1 213.9 L395.5 210.6 L401.1 207.2 L406.9 203.9 L412.7 200.6 L418.8 197.3 L425 194 L431.3 190.6 L437.8 187.3 L444.4 184 L451.1 180.7 L458 177.4 L465 174 L472.2 170.7 L479.5 167.4 L486.9 164.1 L494.4 160.8 L502.1 157.4 L509.9 154.1 L517.8 150.8 L525.8 147.5 L533.9 144.2 L542.2 140.8 L550.5 137.5 L559 134.2 L567.5 130.9 L576.2 127.6 L585 124.2 L593.8 120.9 L602.8 117.6 L611.8 114.3 L621 111 L630.2 107.6 L639.5 104.3 L648.9 101 L658.3 97.7 L667.8 94.4 L677.4 91 L687.1 87.7 L696.8 84.4 L706.6 81.1 L716.5 77.8 L726.4 74.4 L736.4 71.1 L746.4 67.8 L756.5 64.5 L766.6 61.2 L776.7 57.8 L786.9 54.5 L797.1 51.2 L807.4 47.9 L817.6 44.6 L827.9 41.2 L838.3 37.9 L848.6 34.6 L859 31.3 L869.3 28 L879.7 24.6 L890.1 21.3 L900.5 18"/>
</g>
<g fill="#8c8c8c" font-size="10.6">
<text x="888.5" y="17" textLength="19" lengthAdjust="spacingAndGlyphs">+90</text><text x="909.8" y="14.7" font-size="8.5">°</text>
<text x="888.5" y="115.4" textLength="19" lengthAdjust="spacingAndGlyphs">+60</text><text x="909.8" y="113.1" font-size="8.5">°</text>
<text x="888.5" y="215" textLength="19" lengthAdjust="spacingAndGlyphs">+30</text><text x="909.8" y="212.7" font-size="8.5">°</text>
<text x="888.5" y="425.6" textLength="19" lengthAdjust="spacingAndGlyphs">−30</text><text x="909.8" y="423.3" font-size="8.5">°</text>
<text x="888.5" y="525.2" textLength="19" lengthAdjust="spacingAndGlyphs">−60</text><text x="909.8" y="522.9" font-size="8.5">°</text>
<text x="888.5" y="625" textLength="19" lengthAdjust="spacingAndGlyphs">−90</text><text x="909.8" y="622.7" font-size="8.5">°</text>
<text x="1482.9" y="326.8" textLength="24.7" lengthAdjust="spacingAndGlyphs">+180</text><text x="1509.9" y="324.5" font-size="8.5">°</text>
<text x="1383.4" y="326.8" textLength="24.7" lengthAdjust="spacingAndGlyphs">+210</text><text x="1410.4" y="324.5" font-size="8.5">°</text>
<text x="1283.9" y="326.8" textLength="24.7" lengthAdjust="spacingAndGlyphs">+240</text><text x="1311" y="324.5" font-size="8.5">°</text>
<text x="1184.5" y="326.8" textLength="24.7" lengthAdjust="spacingAndGlyphs">+270</text><text x="1211.5" y="324.5" font-size="8.5">°</text>
<text x="1085" y="326.8" textLength="24.7" lengthAdjust="spacingAndGlyphs">+300</text><text x="1112" y="324.5" font-size="8.5">°</text>
<text x="985.5" y="326.8" textLength="24.7" lengthAdjust="spacingAndGlyphs">+330</text><text x="1012.5" y="324.5" font-size="8.5">°</text>
<text x="891.8" y="326.8" textLength="13.3" lengthAdjust="spacingAndGlyphs">+0</text><text x="907.3" y="324.5" font-size="8.5">°</text>
<text x="789.4" y="326.8" textLength="19" lengthAdjust="spacingAndGlyphs">+30</text><text x="810.7" y="324.5" font-size="8.5">°</text>
<text x="690" y="326.8" textLength="19" lengthAdjust="spacingAndGlyphs">+60</text><text x="711.2" y="324.5" font-size="8.5">°</text>
<text x="590.5" y="326.8" textLength="19" lengthAdjust="spacingAndGlyphs">+90</text><text x="611.8" y="324.5" font-size="8.5">°</text>
<text x="488.1" y="326.8" textLength="24.7" lengthAdjust="spacingAndGlyphs">+120</text><text x="515.2" y="324.5" font-size="8.5">°</text>
<text x="388.7" y="326.8" textLength="24.7" lengthAdjust="spacingAndGlyphs">+150</text><text x="415.7" y="324.5" font-size="8.5">°</text>
<text x="289.2" y="326.8" textLength="24.7" lengthAdjust="spacingAndGlyphs">+180</text><text x="316.2" y="324.5" font-size="8.5">°</text>
</g>
<g fill="none" stroke="#5c5c5c" stroke-width="1.4" stroke-dasharray="1.4 2.1"><path d="M886.9 227.5 L888.1 226.3 L889.2 225.1 L890.4 223.9 L891.5 222.7 L892.7 221.5 L893.9 220.3 L895 219.1 L896.2 217.9 L897.3 216.7 L898.5 215.5 L899.7 214.3 L900.8 213.1 L902 212 L903.2 210.8 L904.3 209.6 L905.5 208.5 L906.6 207.3 L907.8 206.2 L909 205 L910.1 203.9 L911.3 202.8 L912.4 201.6 L913.6 200.5 L914.8 199.4 L915.9 198.3 L917.1 197.2 L918.2 196.1 L919.4 195 L920.6 193.9 L921.7 192.8 L922.9 191.8 L924 190.7 L925.2 189.6 L926.4 188.6 L927.5 187.5 L928.7 186.5 L929.8 185.4 L931 184.4 L932.1 183.4 L933.3 182.4 L934.5 181.4 L935.6 180.4 L936.8 179.4 L937.9 178.4 L939.1 177.5 L940.3 176.5 L941.4 175.5 L942.6 174.6 L943.8 173.7 L944.9 172.7 L946.1 171.8 L947.2 170.9 L948.4 170 L949.6 169.1 L950.8 168.2 L951.9 167.4 L953.1 166.5 L954.3 165.7 L955.5 164.8 L956.6 164 L957.8 163.2 L959 162.4 L960.2 161.6 L961.4 160.8 L962.6 160 L963.8 159.3 L965 158.5 L966.2 157.8 L967.4 157.1 L968.6 156.4 L969.8 155.7 L971 155 L972.3 154.4 L973.5 153.7 L974.7 153.1 L976 152.5 L977.2 151.9 L978.5 151.3 L979.7 150.7 L981 150.1 L982.3 149.6 L983.6 149.1 L984.9 148.5 L986.2 148 L987.5 147.6 L988.8 147.1 L990.1 146.6 L991.4 146.2 L992.8 145.8 L994.1 145.4 L995.5 145 L996.9 144.6 L998.3 144.3 L999.7 144 L1001.1 143.7 L1002.5 143.4 L1003.9 143.1 L1005.4 142.8 L1006.8 142.6 L1008.3 142.4 L1009.8 142.2 L1011.3 142 L1012.8 141.8 L1014.3 141.7 L1015.9 141.5 L1017.4 141.4 L1019 141.3 L1020.6 141.3 L1022.2 141.2 L1023.8 141.2 L1025.4 141.2 L1027.1 141.2 L1028.8 141.2 L1030.5 141.2 L1032.2 141.3 L1033.9 141.4 L1035.6 141.5 L1037.4 141.6 L1039.1 141.7 L1040.9 141.9 L1042.7 142.1 L1044.6 142.3 L1046.4 142.5 L1048.3 142.7 L1050.2 142.9 L1052.1 143.2 L1054 143.5 L1055.9 143.8 L1057.9 144.1 L1059.8 144.5 L1061.8 144.8 L1063.8 145.2 L1065.9 145.6 L1067.9 146 L1070 146.4 L1072.1 146.9 L1074.2 147.3 L1076.3 147.8 L1078.4 148.3 L1080.6 148.8 L1082.7 149.3 L1084.9 149.8 L1087.1 150.4 L1089.3 151 L1091.6 151.6 L1093.8 152.1 L1096.1 152.8 L1098.4 153.4 L1100.7 154 L1103 154.7 L1105.3 155.4 L1107.6 156 L1110 156.7 L1112.4 157.4 L1114.7 158.2 L1117.1 158.9 L1119.5 159.7 L1121.9 160.4 L1124.4 161.2 L1126.8 162 L1129.3 162.8 L1131.7 163.6 L1134.2 164.4 L1136.7 165.2 L1139.2 166.1 L1141.7 166.9 L1144.2 167.8 L1146.7 168.7 L1149.2 169.5 L1151.7 170.4 L1154.3 171.3 L1156.8 172.2 L1159.4 173.2 L1161.9 174.1 L1164.5 175 L1167 176 L1169.6 176.9 L1172.2 177.9 L1174.8 178.9 L1177.3 179.9 L1179.9 180.9 L1182.5 181.9 L1185.1 182.9 L1187.7 183.9 L1190.3 184.9 L1192.9 185.9 L1195.5 187 L1198.1 188 L1200.7 189.1 L1203.3 190.1 L1205.8 191.2 L1208.4 192.3 L1211 193.3 L1213.6 194.4 L1216.2 195.5 L1218.8 196.6 L1221.3 197.7 L1223.9 198.8 L1226.5 199.9 L1229 201.1 L1231.6 202.2 L1234.2 203.3 L1236.7 204.5 L1239.3 205.6 L1241.8 206.7 L1244.3 207.9 L1246.8 209 L1249.4 210.2 L1251.9 211.4 L1254.4 212.5 L1256.8 213.7 L1259.3 214.9 L1261.8 216.1 L1264.3 217.2 L1266.7 218.4 L1269.2 219.6 L1271.6 220.8 L1274 222 L1276.4 223.2 L1278.8 224.4 L1281.2 225.7 L1283.6 226.9 L1286 228.1 L1288.3 229.3 L1290.6 230.5 L1293 231.8 L1295.3 233 L1297.6 234.2 L1299.9 235.5 L1302.1 236.7 L1304.4 237.9 L1306.6 239.2 L1308.9 240.4 L1311.1 241.7 L1313.3 242.9 L1315.5 244.2 L1317.6 245.5 L1319.8 246.7 L1321.9 248 L1324 249.3 L1326.1 250.5 L1328.2 251.8 L1330.3 253.1 L1332.3 254.3 L1334.3 255.6 L1336.3 256.9 L1338.3 258.2 L1340.3 259.5 L1342.3 260.7 L1344.2 262 L1346.1 263.3 L1348 264.6 L1349.9 265.9 L1351.7 267.2 L1353.6 268.5 L1355.4 269.8 L1357.2 271.1 L1359 272.4 L1360.7 273.7 L1362.5 275 L1364.2 276.3 L1365.9 277.6 L1367.5 278.9 L1369.2 280.2 L1370.8 281.5 L1372.4 282.8 L1374 284.1 L1375.6 285.4 L1377.1 286.7 L1378.6 288 L1380.1 289.3 L1381.6 290.6 L1383.1 292 L1384.5 293.3 L1385.9 294.6 L1387.3 295.9 L1388.6 297.2 L1390 298.5 L1391.3 299.8 L1392.6 301.2 L1393.8 302.5 L1395.1 303.8 L1396.3 305.1 L1397.5 306.4 L1398.7 307.7 L1399.8 309.1 L1400.9 310.4 L1402 311.7 L1403.1 313 L1404.2 314.3 L1405.2 315.7 L1406.2 317 L1407.2 318.3 L1408.1 319.6 L1409.1 320.9 L1410 322.3 L1410.9 323.6 L1411.7 324.9 L1412.5 326.2 L1413.4 327.5 L1414.1 328.9"/><path d="M882 236.6 L880.9 235.4 L879.8 234.2 L878.8 233 L877.7 231.8 L876.6 230.6 L875.5 229.4 L874.5 228.3 L873.4 227.1 L872.3 225.9 L871.2 224.7 L870.2 223.6 L869.1 222.4 L868 221.2 L867 220.1 L865.9 218.9 L864.8 217.8 L863.8 216.6 L862.7 215.5 L861.6 214.4 L860.6 213.2 L859.5 212.1 L858.5 211 L857.4 209.9 L856.3 208.8 L855.3 207.7 L854.2 206.6 L853.2 205.5 L852.1 204.4 L851 203.3 L850 202.2 L848.9 201.1 L847.9 200.1 L846.8 199 L845.8 198 L844.7 196.9 L843.7 195.9 L842.6 194.8 L841.6 193.8 L840.5 192.8 L839.4 191.8 L838.4 190.7 L837.3 189.7 L836.3 188.7 L835.2 187.8 L834.2 186.8 L833.1 185.8 L832.1 184.8 L831 183.9 L830 182.9 L828.9 182 L827.8 181.1 L826.8 180.1 L825.7 179.2 L824.7 178.3 L823.6 177.4 L822.5 176.5 L821.5 175.7 L820.4 174.8 L819.3 173.9 L818.3 173.1 L817.2 172.2 L816.1 171.4 L815 170.6 L813.9 169.8 L812.9 169 L811.8 168.2 L810.7 167.4 L809.6 166.7 L808.5 165.9 L807.4 165.2 L806.3 164.4 L805.1 163.7 L804 163 L802.9 162.3 L801.8 161.6 L800.6 161 L799.5 160.3 L798.3 159.7 L797.2 159.1 L796 158.4 L794.8 157.8 L793.7 157.2 L792.5 156.7 L791.3 156.1 L790.1 155.6 L788.9 155 L787.7 154.5 L786.4 154 L785.2 153.5 L783.9 153.1 L782.7 152.6 L781.4 152.2 L780.1 151.8 L778.8 151.4 L777.5 151 L776.2 150.6 L774.9 150.2 L773.6 149.9 L772.2 149.6 L770.8 149.3 L769.5 149 L768.1 148.7 L766.7 148.4 L765.2 148.2 L763.8 148 L762.3 147.8 L760.9 147.6 L759.4 147.4 L757.9 147.2 L756.4 147.1 L754.8 147 L753.3 146.9 L751.7 146.8 L750.1 146.7 L748.5 146.7 L746.9 146.7 L745.3 146.7 L743.6 146.7 L741.9 146.7 L740.3 146.7 L738.5 146.8 L736.8 146.9 L735.1 147 L733.3 147.1 L731.5 147.2 L729.7 147.4 L727.9 147.5 L726 147.7 L724.2 147.9 L722.3 148.1 L720.4 148.4 L718.4 148.6 L716.5 148.9 L714.5 149.2 L712.5 149.5 L710.5 149.8 L708.5 150.2 L706.5 150.5 L704.4 150.9 L702.3 151.3 L700.2 151.7 L698.1 152.1 L696 152.5 L693.8 153 L691.7 153.5 L689.5 153.9 L687.3 154.4 L685 155 L682.8 155.5 L680.5 156 L678.2 156.6 L675.9 157.2 L673.6 157.7 L671.3 158.3 L669 158.9 L666.6 159.6 L664.2 160.2 L661.8 160.9 L659.4 161.5 L657 162.2 L654.6 162.9 L652.1 163.6 L649.7 164.3 L647.2 165 L644.7 165.8 L642.2 166.5 L639.7 167.3 L637.2 168.1 L634.7 168.9 L632.1 169.6 L629.6 170.5 L627 171.3 L624.4 172.1 L621.9 172.9 L619.3 173.8 L616.7 174.6 L614.1 175.5 L611.5 176.4 L608.8 177.3 L606.2 178.2 L603.6 179.1 L601 180 L598.3 180.9 L595.7 181.8 L593 182.8 L590.4 183.7 L587.7 184.7 L585.1 185.6 L582.4 186.6 L579.7 187.6 L577.1 188.6 L574.4 189.6 L571.7 190.6 L569.1 191.6 L566.4 192.6 L563.7 193.6 L561.1 194.6 L558.4 195.7 L555.7 196.7 L553.1 197.8 L550.4 198.8 L547.8 199.9 L545.1 201 L542.5 202 L539.8 203.1 L537.2 204.2 L534.5 205.3 L531.9 206.4 L529.3 207.5 L526.7 208.6 L524 209.7 L521.4 210.8 L518.8 211.9 L516.2 213 L513.7 214.2 L511.1 215.3 L508.5 216.4 L506 217.6 L503.4 218.7 L500.9 219.9 L498.3 221 L495.8 222.2 L493.3 223.4 L490.8 224.5 L488.3 225.7 L485.8 226.9 L483.4 228.1 L480.9 229.2 L478.5 230.4 L476.1 231.6 L473.6 232.8 L471.2 234 L468.9 235.2 L466.5 236.4 L464.1 237.6 L461.8 238.8 L459.4 240 L457.1 241.2 L454.8 242.4 L452.6 243.7 L450.3 244.9 L448 246.1 L445.8 247.3 L443.6 248.6 L441.4 249.8 L439.2 251 L437 252.3 L434.9 253.5 L432.7 254.8 L430.6 256 L428.5 257.2 L426.5 258.5 L424.4 259.7 L422.4 261 L420.3 262.2 L418.3 263.5 L416.4 264.7 L414.4 266 L412.5 267.3 L410.5 268.5 L408.6 269.8 L406.8 271.1 L404.9 272.3 L403.1 273.6 L401.3 274.9 L399.5 276.1 L397.7 277.4 L395.9 278.7 L394.2 279.9 L392.5 281.2 L390.8 282.5 L389.2 283.8 L387.5 285 L385.9 286.3 L384.3 287.6 L382.8 288.9 L381.2 290.2 L379.7 291.5 L378.2 292.7 L376.7 294 L375.2 295.3 L373.8 296.6 L372.4 297.9 L371 299.2 L369.7 300.4 L368.3 301.7 L367 303 L365.7 304.3 L364.5 305.6 L363.3 306.9 L362 308.2 L360.9 309.5 L359.7 310.8 L358.6 312 L357.4 313.3 L356.4 314.6 L355.3 315.9 L354.3 317.2 L353.3 318.5 L352.3 319.8 L351.3 321.1"/><path d="M987.7 212.8 L987.9 211.3 L988 209.7 L988.2 208.2 L988.3 206.6 L988.5 205.1 L988.6 203.6 L988.8 202 L988.9 200.5 L989 199 L989.2 197.5 L989.3 195.9 L989.4 194.4 L989.5 192.9 L989.6 191.4 L989.7 189.9 L989.8 188.3 L989.9 186.8 L990 185.3 L990 183.8 L990.1 182.3 L990.2 180.8 L990.2 179.3 L990.3 177.8 L990.3 176.3 L990.4 174.8 L990.4 173.3 L990.5 171.8 L990.5 170.3 L990.5 168.8 L990.6 167.3 L990.6 165.8 L990.6 164.3 L990.6 162.9 L990.6 161.4 L990.6 159.9 L990.6 158.5 L990.6 157 L990.6 155.5 L990.6 154.1 L990.6 152.6 L990.6 151.2 L990.6 149.7 L990.6 148.3 L990.5 146.9 L990.5 145.4 L990.5 144 L990.5 142.6 L990.4 141.1 L990.4 139.7 L990.4 138.3 L990.3 136.9 L990.3 135.5 L990.3 134.1 L990.2 132.8 L990.2 131.4 L990.1 130 L990.1 128.6 L990.1 127.3 L990 125.9 L990 124.6 L989.9 123.3 L989.9 121.9 L989.9 120.6 L989.9 119.3 L989.8 118 L989.8 116.7 L989.8 115.4 L989.8 114.2 L989.8 112.9 L989.8 111.6 L989.8 110.4 L989.8 109.2 L989.8 108 L989.8 106.8 L989.9 105.6 L989.9 104.4 L990 103.3 L990 102.1 L990.1 101 L990.2 99.9 L990.3 98.8 L990.5 97.7 L990.6 96.7 L990.8 95.6 L991 94.6 L991.2 93.6 L991.4 92.7 L991.7 91.7 L991.9 90.8 L992.2 89.9 L992.6 89 L992.9 88.2 L993.3 87.4 L993.8 86.6 L994.3 85.8 L994.8 85.1 L995.3 84.4 L995.9 83.8 L996.6 83.1 L997.3 82.5 L998 82 L998.8 81.5 L999.6 81 L1000.6 80.5 L1001.5 80.1 L1002.6 79.8 L1003.7 79.4 L1004.8 79.2 L1006.1 78.9 L1007.4 78.7 L1008.7 78.6 L1010.2 78.5 L1011.7 78.4 L1013.3 78.4 L1015 78.4 L1016.8 78.5 L1018.6 78.6 L1020.6 78.7 L1022.6 78.9 L1024.7 79.2 L1026.8 79.4 L1029.1 79.8 L1031.4 80.1 L1033.9 80.5 L1036.4 81 L1038.9 81.4 L1041.6 82 L1044.3 82.5 L1047.1 83.1 L1050 83.7 L1053 84.4 L1056 85.1 L1059.1 85.8 L1062.3 86.6 L1065.5 87.3 L1068.8 88.2 L1072.2 89 L1075.6 89.9 L1079 90.8 L1082.6 91.7 L1086.1 92.6 L1089.8 93.6 L1093.4 94.6 L1097.2 95.6 L1100.9 96.6 L1104.7 97.7 L1108.6 98.7 L1112.4 99.8 L1116.4 100.9 L1120.3 102.1 L1124.3 103.2 L1128.3 104.4 L1132.3 105.5 L1136.4 106.7 L1140.5 107.9 L1144.6 109.1 L1148.7 110.3 L1152.9 111.6 L1157.1 112.8 L1161.3 114.1 L1165.5 115.4 L1169.7 116.6 L1173.9 117.9 L1178.2 119.2 L1182.4 120.5 L1186.7 121.9 L1190.9 123.2 L1195.2 124.5 L1199.5 125.9 L1203.8 127.2 L1208.1 128.6 L1212.3 129.9 L1216.6 131.3 L1220.9 132.7 L1225.2 134.1 L1229.5 135.5 L1233.8 136.9 L1238 138.3 L1242.3 139.7 L1246.6 141.1 L1250.8 142.5 L1255.1 143.9 L1259.3 145.3 L1263.6 146.8 L1267.8 148.2 L1272 149.7 L1276.2 151.1 L1280.4 152.6 L1284.6 154 L1288.7 155.5 L1292.9 156.9 L1297 158.4 L1301.1 159.9 L1305.2 161.3 L1309.3 162.8 L1313.4 164.3 L1317.4 165.8M480.1 167.2 L477.5 168.7 L475 170.2 L472.5 171.7 L470 173.2 L467.5 174.7 L465.1 176.2 L462.7 177.7 L460.3 179.2 L457.9 180.7 L455.6 182.2 L453.2 183.7 L450.9 185.2 L448.6 186.7 L446.4 188.3 L444.2 189.8 L442 191.3 L439.8 192.8 L437.6 194.3 L435.5 195.9 L433.4 197.4 L431.3 198.9 L429.3 200.4 L427.3 202 L425.3 203.5 L423.3 205 L421.4 206.6 L419.5 208.1 L417.6 209.6 L415.8 211.2 L414 212.7 L412.2 214.3 L410.4 215.8 L408.7 217.3 L407 218.9 L405.4 220.4 L403.7 222 L402.1 223.5 L400.6 225.1 L399 226.6 L397.5 228.2 L396.1 229.7 L394.6 231.3 L393.2 232.8 L391.9 234.4 L390.5 235.9 L389.2 237.5 L387.9 239.1 L386.7 240.6 L385.5 242.2 L384.3 243.7 L383.2 245.3 L382.1 246.8 L381 248.4 L380 250 L379 251.5 L378 253.1 L377.1 254.6 L376.2 256.2 L375.3 257.8 L374.5 259.3 L373.7 260.9 L373 262.5 L372.2 264 L371.6 265.6 L370.9 267.2 L370.3 268.7 L369.7 270.3 L369.2 271.9 L368.7 273.4 L368.2 275 L367.8 276.6 L367.4 278.1 L367 279.7 L366.7 281.3 L366.4 282.8 L366.1 284.4 L365.9 286 L365.7 287.5 L365.6 289.1 L365.5 290.7 L365.4 292.2 L365.4 293.8 L365.4 295.4 L365.4 297 L365.5 298.5 L365.6 300.1 L365.7 301.7 L365.9 303.2 L366.1 304.8 L366.4 306.4 L366.7 308 L367 309.5 L367.4 311.1 L367.8 312.7 L368.2 314.2 L368.7 315.8 L369.2 317.4 L369.7 319 L370.3 320.5 L370.9 322.1 L371.6 323.7 L372.3 325.2 L373 326.8"/><path d="M973.7 211 L972.1 210.2 L970.4 209.4 L968.8 208.6 L967.2 207.8 L965.5 207.1 L963.9 206.3 L962.3 205.6 L960.6 204.8 L959 204.1 L957.4 203.3 L955.8 202.6 L954.1 201.9 L952.5 201.2 L950.9 200.5 L949.3 199.8 L947.6 199.1 L946 198.4 L944.4 197.8 L942.8 197.1 L941.1 196.5 L939.5 195.8 L937.9 195.2 L936.3 194.6 L934.7 194 L933.1 193.4 L931.4 192.8 L929.8 192.2 L928.2 191.6 L926.6 191.1 L925 190.5 L923.4 190 L921.8 189.4 L920.2 188.9 L918.6 188.4 L917 187.9 L915.3 187.4 L913.7 186.9 L912.1 186.4 L910.5 186 L908.9 185.5 L907.3 185.1 L905.7 184.7 L904.1 184.3 L902.5 183.8 L900.9 183.5 L899.3 183.1 L897.7 182.7 L896.1 182.3 L894.5 182 L892.9 181.7 L891.3 181.3 L889.7 181 L888.1 180.7 L886.5 180.4 L884.9 180.2 L883.3 179.9 L881.6 179.7 L880 179.4 L878.4 179.2 L876.8 179 L875.2 178.8 L873.6 178.6 L872 178.4 L870.3 178.3 L868.7 178.1 L867.1 178 L865.5 177.8 L863.9 177.7 L862.2 177.6 L860.6 177.6 L859 177.5 L857.3 177.4 L855.7 177.4 L854.1 177.3 L852.4 177.3 L850.8 177.3 L849.1 177.3 L847.5 177.3 L845.8 177.4 L844.1 177.4 L842.5 177.5 L840.8 177.5 L839.1 177.6 L837.5 177.7 L835.8 177.8 L834.1 177.9 L832.4 178.1 L830.7 178.2 L829 178.4 L827.3 178.6 L825.6 178.7 L823.9 178.9 L822.2 179.1 L820.5 179.4 L818.8 179.6 L817.1 179.9 L815.3 180.1 L813.6 180.4 L811.9 180.7 L810.1 181 L808.4 181.3 L806.6 181.6 L804.9 181.9 L803.1 182.3 L801.3 182.6 L799.6 183 L797.8 183.4 L796 183.8 L794.2 184.2 L792.4 184.6 L790.6 185 L788.8 185.4 L787 185.9 L785.2 186.3 L783.4 186.8 L781.6 187.3 L779.8 187.8 L777.9 188.3 L776.1 188.8 L774.3 189.3 L772.4 189.8 L770.6 190.4 L768.7 190.9 L766.9 191.5 L765 192.1 L763.1 192.7 L761.3 193.2 L759.4 193.8 L757.5 194.5 L755.7 195.1 L753.8 195.7 L751.9 196.3 L750 197 L748.1 197.6 L746.2 198.3 L744.3 199 L742.4 199.7 L740.5 200.3 L738.6 201 L736.7 201.8 L734.8 202.5 L732.9 203.2 L730.9 203.9 L729 204.7 L727.1 205.4 L725.2 206.2 L723.2 206.9 L721.3 207.7 L719.4 208.5 L717.5 209.2 L715.5 210 L713.6 210.8 L711.7 211.6 L709.7 212.4 L707.8 213.3 L705.9 214.1 L703.9 214.9 L702 215.7 L700.1 216.6 L698.1 217.4 L696.2 218.3 L694.3 219.2 L692.3 220 L690.4 220.9 L688.5 221.8 L686.5 222.7 L684.6 223.5 L682.7 224.4 L680.7 225.3 L678.8 226.2 L676.9 227.2 L675 228.1 L673.1 229 L671.1 229.9 L669.2 230.8 L667.3 231.8 L665.4 232.7 L663.5 233.7 L661.6 234.6 L659.7 235.6 L657.8 236.5 L655.9 237.5 L654 238.5 L652.2 239.4 L650.3 240.4 L648.4 241.4 L646.5 242.4 L644.7 243.3 L642.8 244.3 L640.9 245.3 L639.1 246.3 L637.3 247.3 L635.4 248.3 L633.6 249.3 L631.8 250.4 L629.9 251.4 L628.1 252.4 L626.3 253.4 L624.5 254.4 L622.7 255.5 L620.9 256.5 L619.1 257.5 L617.4 258.6 L615.6 259.6 L613.8 260.6 L612.1 261.7 L610.3 262.7 L608.6 263.8 L606.9 264.8 L605.1 265.9 L603.4 266.9 L601.7 268 L600 269.1 L598.3 270.1 L596.6 271.2 L595 272.2 L593.3 273.3 L591.7 274.4 L590 275.5 L588.4 276.5 L586.7 277.6 L585.1 278.7 L583.5 279.8 L581.9 280.9 L580.3 281.9 L578.7 283 L577.2 284.1 L575.6 285.2 L574.1 286.3 L572.5 287.4 L571 288.5 L569.5 289.6 L568 290.6 L566.5 291.7 L565 292.8 L563.5 293.9 L562.1 295 L560.6 296.1 L559.2 297.2 L557.7 298.3 L556.3 299.4 L554.9 300.5 L553.5 301.6 L552.1 302.7 L550.8 303.8 L549.4 305 L548.1 306.1 L546.7 307.2 L545.4 308.3 L544.1 309.4 L542.8 310.5 L541.5 311.6 L540.2 312.7 L539 313.8 L537.7 314.9 L536.5 316 L535.2 317.1 L534 318.2 L532.8 319.3 L531.6 320.4 L530.5 321.6 L529.3 322.7 L528.1 323.8 L527 324.9 L525.9 326 L524.8 327.1 L523.7 328.2 L522.6 329.3 L521.5 330.4 L520.4 331.5 L519.4 332.6 L518.3 333.7 L517.3 334.8 L516.3 335.9 L515.3 337 L514.3 338.1 L513.3 339.2 L512.4 340.3 L511.4 341.4 L510.5 342.5 L509.6 343.6 L508.6 344.7 L507.7 345.8 L506.9 346.9 L506 348 L505.1 349 L504.3 350.1 L503.4 351.2 L502.6 352.3 L501.8 353.4 L501 354.5 L500.2 355.5 L499.4 356.6 L498.7 357.7 L497.9 358.8 L497.2 359.8 L496.4 360.9 L495.7 362 L495 363 L494.3 364.1 L493.6 365.2"/><path d="M1025 203.3 L1023.6 201.8 L1022.2 200.3 L1020.8 198.9 L1019.4 197.4 L1017.9 195.9 L1016.5 194.5 L1015.1 193 L1013.6 191.5 L1012.2 190.1 L1010.7 188.6 L1009.3 187.2 L1007.8 185.7 L1006.3 184.3 L1004.9 182.8 L1003.4 181.4 L1001.9 179.9 L1000.4 178.5 L998.9 177 L997.4 175.6 L995.9 174.2 L994.4 172.8 L992.9 171.3 L991.4 169.9 L989.9 168.5 L988.4 167.1 L986.9 165.7 L985.3 164.3 L983.8 162.9 L982.3 161.5 L980.8 160.1 L979.2 158.7 L977.7 157.3 L976.2 156 L974.6 154.6 L973.1 153.2 L971.5 151.9 L970 150.5 L968.5 149.2 L966.9 147.8 L965.4 146.5 L963.8 145.2 L962.3 143.8 L960.7 142.5 L959.2 141.2 L957.7 139.9 L956.1 138.6 L954.6 137.3 L953 136.1 L951.5 134.8 L949.9 133.5 L948.4 132.3 L946.9 131 L945.3 129.8 L943.8 128.6 L942.3 127.3 L940.7 126.1 L939.2 124.9 L937.7 123.8 L936.1 122.6 L934.6 121.4 L933.1 120.3 L931.6 119.1 L930.1 118 L928.5 116.9 L927 115.8 L925.5 114.7 L924 113.7 L922.5 112.6 L921 111.6 L919.5 110.6 L918 109.6 L916.5 108.6 L915 107.6 L913.5 106.7 L912.1 105.7 L910.6 104.8 L909.1 103.9 L907.6 103.1 L906.1 102.2 L904.7 101.4 L903.2 100.6 L901.7 99.8 L900.2 99.1 L898.8 98.4 L897.3 97.7 L895.8 97 L894.3 96.4 L892.9 95.8 L891.4 95.2 L889.9 94.6 L888.4 94.1 L886.9 93.6 L885.4 93.1 L883.9 92.7 L882.4 92.3 L880.9 91.9 L879.3 91.6 L877.8 91.3 L876.3 91 L874.7 90.8 L873.1 90.6 L871.5 90.5 L869.9 90.3 L868.3 90.3 L866.7 90.2 L865.1 90.2 L863.4 90.2 L861.7 90.3 L860 90.4 L858.3 90.5 L856.6 90.7 L854.8 90.9 L853.1 91.1 L851.3 91.4 L849.5 91.7 L847.6 92 L845.7 92.4 L843.9 92.8 L842 93.2 L840 93.7 L838.1 94.2 L836.1 94.7 L834.1 95.3 L832.1 95.9 L830 96.5 L827.9 97.1 L825.9 97.8 L823.7 98.5 L821.6 99.2 L819.4 100 L817.3 100.8 L815.1 101.6 L812.8 102.4 L810.6 103.2 L808.3 104.1 L806 105 L803.7 105.9 L801.4 106.8 L799.1 107.8 L796.7 108.8 L794.4 109.8 L792 110.8 L789.6 111.8 L787.2 112.8 L784.7 113.9 L782.3 114.9 L779.8 116 L777.4 117.1 L774.9 118.2 L772.4 119.4 L769.9 120.5 L767.4 121.6 L764.9 122.8 L762.3 124 L759.8 125.2 L757.3 126.4 L754.7 127.6 L752.2 128.8 L749.6 130 L747 131.3 L744.5 132.5 L741.9 133.8 L739.3 135 L736.7 136.3 L734.2 137.6 L731.6 138.9 L729 140.2 L726.4 141.5 L723.8 142.8 L721.2 144.1 L718.6 145.4 L716 146.8 L713.5 148.1 L710.9 149.4 L708.3 150.8 L705.7 152.1 L703.2 153.5 L700.6 154.9 L698 156.2 L695.5 157.6 L692.9 159 L690.3 160.4 L687.8 161.8 L685.3 163.2 L682.7 164.6 L680.2 166 L677.7 167.4 L675.2 168.8 L672.7 170.2 L670.2 171.6 L667.7 173 L665.2 174.5 L662.7 175.9 L660.3 177.3 L657.8 178.8 L655.4 180.2 L653 181.6 L650.6 183.1 L648.2 184.5 L645.8 186 L643.4 187.4 L641 188.9 L638.6 190.4 L636.3 191.8 L634 193.3 L631.7 194.7 L629.4 196.2 L627.1 197.7 L624.8 199.2 L622.5 200.6 L620.3 202.1 L618 203.6 L615.8 205.1 L613.6 206.5 L611.4 208 L609.3 209.5 L607.1 211 L605 212.5 L602.8 214 L600.7 215.5 L598.7 217 L596.6 218.5 L594.5 220 L592.5 221.5 L590.5 223 L588.5 224.5 L586.5 226 L584.5 227.5 L582.6 229 L580.7 230.5 L578.8 232 L576.9 233.5 L575 235 L573.2 236.5 L571.3 238 L569.5 239.6 L567.7 241.1 L566 242.6 L564.2 244.1 L562.5 245.6 L560.8 247.1 L559.1 248.7 L557.4 250.2 L555.8 251.7 L554.2 253.2 L552.6 254.7 L551 256.3 L549.5 257.8 L547.9 259.3 L546.4 260.8 L544.9 262.4 L543.5 263.9 L542 265.4 L540.6 266.9 L539.2 268.5 L537.8 270 L536.5 271.5 L535.2 273.1 L533.9 274.6 L532.6 276.1 L531.3 277.7 L530.1 279.2 L528.9 280.7 L527.7 282.2 L526.5 283.8 L525.4 285.3 L524.3 286.8 L523.2 288.4 L522.1 289.9 L521.1 291.4 L520.1 293 L519.1 294.5 L518.1 296.1 L517.2 297.6 L516.3 299.1 L515.4 300.7 L514.5 302.2 L513.7 303.7 L512.9 305.3 L512.1 306.8 L511.3 308.3 L510.6 309.9 L509.9 311.4 L509.2 313 L508.5 314.5 L507.9 316 L507.3 317.6 L506.7 319.1 L506.1 320.6 L505.6 322.2 L505.1 323.7 L504.6 325.2 L504.1 326.8 L503.7 328.3 L503.3 329.9 L502.9 331.4 L502.6 332.9 L502.2 334.5 L501.9 336 L501.7 337.5 L501.4 339.1"/><path d="M1040.8 232.5 L1039.1 231.8 L1037.3 231.1 L1035.6 230.3 L1033.9 229.6 L1032.1 228.9 L1030.4 228.2 L1028.7 227.5 L1026.9 226.9 L1025.2 226.2 L1023.5 225.5 L1021.7 224.9 L1020 224.2 L1018.3 223.5 L1016.5 222.9 L1014.8 222.3 L1013.1 221.6 L1011.3 221 L1009.6 220.4 L1007.9 219.8 L1006.2 219.2 L1004.4 218.6 L1002.7 218 L1001 217.4 L999.3 216.8 L997.6 216.2 L995.8 215.7 L994.1 215.1 L992.4 214.6 L990.7 214 L989 213.5 L987.3 213 L985.6 212.5 L983.9 212 L982.2 211.5 L980.5 211 L978.8 210.5 L977.1 210 L975.4 209.5 L973.7 209.1 L972 208.6 L970.3 208.2 L968.6 207.8 L966.9 207.3 L965.2 206.9 L963.5 206.5 L961.8 206.1 L960.1 205.7 L958.5 205.3 L956.8 205 L955.1 204.6 L953.4 204.3 L951.7 203.9 L950.1 203.6 L948.4 203.3 L946.7 202.9 L945.1 202.6 L943.4 202.3 L941.7 202.1 L940.1 201.8 L938.4 201.5 L936.7 201.3 L935.1 201 L933.4 200.8 L931.7 200.5 L930.1 200.3 L928.4 200.1 L926.8 199.9 L925.1 199.7 L923.5 199.5 L921.8 199.4 L920.2 199.2 L918.5 199.1 L916.9 198.9 L915.2 198.8 L913.5 198.7 L911.9 198.6 L910.2 198.5 L908.6 198.4 L907 198.3 L905.3 198.3 L903.7 198.2 L902 198.2 L900.4 198.1 L898.7 198.1 L897.1 198.1 L895.4 198.1 L893.8 198.1 L892.1 198.1 L890.5 198.1 L888.8 198.2 L887.2 198.2 L885.5 198.3 L883.9 198.3 L882.2 198.4 L880.6 198.5 L878.9 198.6 L877.3 198.7 L875.6 198.8 L873.9 199 L872.3 199.1 L870.6 199.3 L869 199.4 L867.3 199.6 L865.6 199.8 L864 200 L862.3 200.2 L860.7 200.4 L859 200.6 L857.3 200.8 L855.6 201.1 L854 201.3 L852.3 201.6 L850.6 201.8 L849 202.1 L847.3 202.4 L845.6 202.7 L843.9 203 L842.2 203.3 L840.5 203.7 L838.9 204 L837.2 204.3 L835.5 204.7 L833.8 205.1 L832.1 205.4 L830.4 205.8 L828.7 206.2 L827 206.6 L825.3 207 L823.6 207.4 L821.9 207.9 L820.2 208.3 L818.5 208.7 L816.8 209.2 L815.1 209.7 L813.3 210.1 L811.6 210.6 L809.9 211.1 L808.2 211.6 L806.5 212.1 L804.7 212.6 L803 213.1 L801.3 213.6 L799.6 214.2 L797.8 214.7 L796.1 215.3 L794.4 215.8 L792.6 216.4 L790.9 217 L789.1 217.5 L787.4 218.1 L785.7 218.7 L783.9 219.3 L782.2 219.9 L780.4 220.5 L778.7 221.1 L776.9 221.8 L775.2 222.4 L773.4 223.1 L771.7 223.7 L769.9 224.4 L768.2 225 L766.4 225.7 L764.7 226.4 L762.9 227 L761.2 227.7 L759.4 228.4 L757.7 229.1 L755.9 229.8 L754.2 230.5 L752.4 231.2 L750.6 232 L748.9 232.7 L747.1 233.4 L745.4 234.1 L743.6 234.9 L741.9 235.6 L740.1 236.4 L738.4 237.1 L736.6 237.9 L734.9 238.7 L733.1 239.4 L731.4 240.2 L729.6 241 L727.9 241.8 L726.1 242.6 L724.4 243.4 L722.6 244.2 L720.9 245 L719.2 245.8 L717.4 246.6 L715.7 247.4 L713.9 248.2 L712.2 249.1 L710.5 249.9 L708.7 250.7 L707 251.6 L705.3 252.4 L703.6 253.3 L701.9 254.1 L700.1 255 L698.4 255.8 L696.7 256.7 L695 257.5 L693.3 258.4 L691.6 259.3 L689.9 260.2 L688.2 261 L686.5 261.9 L684.8 262.8 L683.1 263.7 L681.5 264.6 L679.8 265.5 L678.1 266.3 L676.4 267.2 L674.8 268.1 L673.1 269 L671.5 270 L669.8 270.9 L668.2 271.8 L666.5 272.7 L664.9 273.6 L663.3 274.5 L661.6 275.4 L660 276.4 L658.4 277.3 L656.8 278.2 L655.2 279.1 L653.6 280.1 L652 281 L650.4 281.9 L648.8 282.9 L647.2 283.8 L645.6 284.7 L644.1 285.7 L642.5 286.6 L641 287.6 L639.4 288.5 L637.9 289.5 L636.3 290.4 L634.8 291.3 L633.3 292.3 L631.7 293.3 L630.2 294.2 L628.7 295.2 L627.2 296.1 L625.7 297.1 L624.3 298 L622.8 299 L621.3 299.9 L619.8 300.9 L618.4 301.9 L616.9 302.8 L615.5 303.8 L614 304.8 L612.6 305.7 L611.2 306.7 L609.8 307.6 L608.4 308.6 L607 309.6 L605.6 310.5 L604.2 311.5 L602.8 312.5 L601.5 313.4 L600.1 314.4 L598.7 315.4 L597.4 316.3 L596.1 317.3 L594.7 318.3 L593.4 319.2 L592.1 320.2 L590.8 321.2 L589.5 322.1 L588.2 323.1 L586.9 324.1 L585.6 325 L584.4 326 L583.1 327 L581.9 327.9 L580.6 328.9 L579.4 329.9 L578.2 330.8 L577 331.8 L575.7 332.7 L574.5 333.7 L573.4 334.7 L572.2 335.6 L571 336.6 L569.8 337.5 L568.7 338.5 L567.5 339.4 L566.4 340.4 L565.2 341.3 L564.1 342.3 L563 343.2 L561.9 344.2 L560.8 345.1 L559.7 346.1 L558.6 347 L557.5 348 L556.4 348.9 L555.4 349.8"/><path d="M1064.2 226.7 L1064 225.1 L1063.8 223.5 L1063.5 222 L1063.3 220.4 L1063 218.8 L1062.7 217.2 L1062.5 215.7 L1062.2 214.1 L1061.9 212.5 L1061.6 210.9 L1061.2 209.4 L1060.9 207.8 L1060.6 206.2 L1060.2 204.6 L1059.8 203.1 L1059.5 201.5 L1059.1 199.9 L1058.7 198.4 L1058.3 196.8 L1057.9 195.3 L1057.5 193.7 L1057 192.1 L1056.6 190.6 L1056.1 189 L1055.7 187.5 L1055.2 185.9 L1054.7 184.3 L1054.2 182.8 L1053.7 181.2 L1053.2 179.7 L1052.7 178.1 L1052.2 176.6 L1051.6 175 L1051.1 173.5 L1050.5 172 L1050 170.4 L1049.4 168.9 L1048.8 167.3 L1048.2 165.8 L1047.6 164.3 L1047 162.7 L1046.4 161.2 L1045.8 159.7 L1045.2 158.2 L1044.5 156.7 L1043.9 155.1 L1043.2 153.6 L1042.6 152.1 L1041.9 150.6 L1041.3 149.1 L1040.6 147.6 L1039.9 146.1 L1039.2 144.6 L1038.5 143.1 L1037.8 141.6 L1037.1 140.1 L1036.4 138.6 L1035.7 137.1 L1035 135.7 L1034.3 134.2 L1033.6 132.7 L1032.9 131.3 L1032.1 129.8 L1031.4 128.4 L1030.7 126.9 L1029.9 125.5 L1029.2 124 L1028.5 122.6 L1027.7 121.2 L1027 119.8 L1026.2 118.3 L1025.5 116.9 L1024.8 115.5 L1024 114.1 L1023.3 112.8 L1022.6 111.4 L1021.9 110 L1021.1 108.7 L1020.4 107.3 L1019.7 106 L1019 104.6 L1018.3 103.3 L1017.6 102 L1017 100.7 L1016.3 99.4 L1015.6 98.2 L1015 96.9 L1014.4 95.6 L1013.8 94.4 L1013.2 93.2 L1012.6 92 L1012 90.8 L1011.5 89.7 L1011 88.5 L1010.5 87.4 L1010 86.3 L1009.6 85.2 L1009.2 84.1 L1008.9 83.1 L1008.5 82.1 L1008.2 81.1 L1008 80.1 L1007.8 79.2 L1007.7 78.3 L1007.6 77.4 L1007.5 76.6 L1007.5 75.8 L1007.6 75 L1007.7 74.3 L1007.9 73.6 L1008.2 73 L1008.6 72.4 L1009 71.8 L1009.6 71.3 L1010.2 70.8 L1010.9 70.4 L1011.7 70 L1012.6 69.6 L1013.6 69.4 L1014.8 69.1 L1016 68.9 L1017.4 68.8 L1018.8 68.7 L1020.4 68.7 L1022.1 68.7 L1024 68.8 L1025.9 69 L1028 69.1 L1030.2 69.4 L1032.6 69.7 L1035 70 L1037.6 70.4 L1040.3 70.8 L1043.1 71.3 L1046.1 71.8 L1049.1 72.4 L1052.3 73 L1055.6 73.7 L1058.9 74.3 L1062.4 75.1 L1066 75.8 L1069.7 76.7 L1073.5 77.5 L1077.3 78.4 L1081.3 79.3 L1085.3 80.2 L1089.4 81.2 L1093.5 82.1 L1097.8 83.2 L1102.1 84.2 L1106.5 85.3M692.2 86.3 L690.2 87.4 L688.2 88.6 L686.1 89.7 L684 90.9 L681.8 92.1 L679.6 93.3 L677.3 94.5 L675.1 95.7 L672.7 97 L670.4 98.2 L668 99.5 L665.6 100.8 L663.2 102.1 L660.8 103.4 L658.4 104.7 L655.9 106 L653.4 107.4 L650.9 108.7 L648.4 110.1 L645.9 111.5 L643.4 112.8 L640.9 114.2 L638.4 115.6 L635.8 117 L633.3 118.4 L630.8 119.8 L628.2 121.2 L625.7 122.7 L623.2 124.1 L620.6 125.5 L618.1 127 L615.6 128.4 L613 129.9 L610.5 131.3 L608 132.8 L605.5 134.3 L603 135.7 L600.6 137.2 L598.1 138.7 L595.6 140.2 L593.2 141.7 L590.7 143.2 L588.3 144.7 L585.9 146.2 L583.5 147.7 L581.1 149.2 L578.7 150.7 L576.3 152.2 L574 153.7 L571.7 155.2 L569.3 156.7 L567 158.3 L564.8 159.8 L562.5 161.3 L560.2 162.8 L558 164.4 L555.8 165.9 L553.6 167.4 L551.4 169 L549.3 170.5 L547.1 172 L545 173.6 L542.9 175.1 L540.8 176.7 L538.8 178.2 L536.8 179.8 L534.7 181.3 L532.8 182.9 L530.8 184.4 L528.8 186 L526.9 187.5 L525 189.1 L523.1 190.7 L521.3 192.2 L519.5 193.8 L517.7 195.3 L515.9 196.9 L514.1 198.5 L512.4 200 L510.7 201.6 L509 203.2 L507.3 204.7 L505.7 206.3 L504.1 207.9 L502.5 209.4 L501 211 L499.4 212.6 L497.9 214.2 L496.4 215.7 L495 217.3 L493.6 218.9 L492.2 220.5 L490.8 222 L489.5 223.6 L488.2 225.2 L486.9 226.8 L485.6 228.4 L484.4 229.9 L483.2 231.5 L482 233.1 L480.9 234.7 L479.7 236.3 L478.7 237.9 L477.6 239.4 L476.6 241 L475.6 242.6 L474.6 244.2 L473.7 245.8 L472.7 247.4 L471.9 249 L471 250.6 L470.2 252.1 L469.4 253.7 L468.6 255.3 L467.9 256.9 L467.2 258.5 L466.5 260.1 L465.9 261.7 L465.2 263.3 L464.7 264.9 L464.1 266.5 L463.6 268 L463.1 269.6 L462.6 271.2 L462.2 272.8 L461.8 274.4 L461.4 276 L461.1 277.6 L460.8 279.2 L460.5 280.8 L460.2 282.4 L460 284 L459.8 285.6 L459.7 287.2 L459.5 288.8 L459.4 290.4 L459.4 291.9 L459.4 293.5 L459.3 295.1 L459.4 296.7 L459.4 298.3 L459.5 299.9 L459.7 301.5 L459.8 303.1 L460 304.7 L460.2 306.3 L460.5 307.9 L460.7 309.5 L461 311.1"/><path d="M1117.5 214.2 L1115.6 212.8 L1113.8 211.5 L1111.9 210.1 L1110 208.7 L1108.1 207.4 L1106.2 206 L1104.3 204.7 L1102.3 203.3 L1100.4 202 L1098.5 200.7 L1096.5 199.3 L1094.6 198 L1092.6 196.7 L1090.6 195.3 L1088.7 194 L1086.7 192.7 L1084.7 191.4 L1082.7 190.1 L1080.7 188.8 L1078.7 187.5 L1076.7 186.2 L1074.7 184.9 L1072.7 183.6 L1070.6 182.3 L1068.6 181 L1066.6 179.8 L1064.5 178.5 L1062.5 177.2 L1060.5 176 L1058.4 174.7 L1056.4 173.5 L1054.3 172.3 L1052.3 171 L1050.3 169.8 L1048.2 168.6 L1046.2 167.4 L1044.1 166.2 L1042 165 L1040 163.8 L1037.9 162.6 L1035.9 161.4 L1033.8 160.2 L1031.8 159.1 L1029.7 157.9 L1027.7 156.8 L1025.6 155.6 L1023.6 154.5 L1021.6 153.4 L1019.5 152.3 L1017.5 151.2 L1015.5 150.1 L1013.4 149 L1011.4 147.9 L1009.4 146.9 L1007.4 145.8 L1005.3 144.8 L1003.3 143.7 L1001.3 142.7 L999.3 141.7 L997.3 140.7 L995.4 139.7 L993.4 138.8 L991.4 137.8 L989.4 136.9 L987.5 135.9 L985.5 135 L983.6 134.1 L981.6 133.2 L979.7 132.3 L977.8 131.5 L975.8 130.6 L973.9 129.8 L972 129 L970.1 128.2 L968.2 127.4 L966.4 126.7 L964.5 125.9 L962.6 125.2 L960.8 124.5 L958.9 123.8 L957.1 123.2 L955.3 122.5 L953.5 121.9 L951.7 121.3 L949.9 120.7 L948.1 120.1 L946.3 119.6 L944.5 119.1 L942.7 118.6 L941 118.1 L939.2 117.7 L937.5 117.2 L935.8 116.8 L934 116.4 L932.3 116.1 L930.6 115.7 L928.9 115.4 L927.2 115.1 L925.5 114.9 L923.8 114.7 L922.2 114.4 L920.5 114.3 L918.8 114.1 L917.1 114 L915.5 113.9 L913.8 113.8 L912.2 113.7 L910.5 113.7 L908.9 113.7 L907.2 113.7 L905.6 113.8 L903.9 113.8 L902.3 113.9 L900.7 114.1 L899 114.2 L897.4 114.4 L895.7 114.6 L894.1 114.8 L892.4 115.1 L890.8 115.4 L889.1 115.7 L887.5 116 L885.8 116.4 L884.2 116.8 L882.5 117.2 L880.8 117.6 L879.2 118 L877.5 118.5 L875.8 119 L874.1 119.5 L872.4 120.1 L870.8 120.6 L869.1 121.2 L867.3 121.8 L865.6 122.4 L863.9 123.1 L862.2 123.7 L860.5 124.4 L858.7 125.1 L857 125.8 L855.3 126.6 L853.5 127.3 L851.8 128.1 L850 128.9 L848.2 129.7 L846.4 130.5 L844.7 131.4 L842.9 132.2 L841.1 133.1 L839.3 134 L837.5 134.9 L835.7 135.8 L833.9 136.7 L832.1 137.6 L830.2 138.6 L828.4 139.6 L826.6 140.5 L824.7 141.5 L822.9 142.5 L821.1 143.6 L819.2 144.6 L817.4 145.6 L815.5 146.7 L813.6 147.7 L811.8 148.8 L809.9 149.9 L808 151 L806.2 152.1 L804.3 153.2 L802.4 154.3 L800.6 155.4 L798.7 156.6 L796.8 157.7 L794.9 158.9 L793 160 L791.2 161.2 L789.3 162.4 L787.4 163.6 L785.5 164.8 L783.6 166 L781.7 167.2 L779.9 168.4 L778 169.6 L776.1 170.8 L774.2 172.1 L772.3 173.3 L770.5 174.5 L768.6 175.8 L766.7 177 L764.9 178.3 L763 179.6 L761.1 180.8 L759.3 182.1 L757.4 183.4 L755.6 184.7 L753.7 186 L751.9 187.3 L750 188.6 L748.2 189.9 L746.3 191.2 L744.5 192.5 L742.7 193.8 L740.9 195.1 L739.1 196.4 L737.2 197.8 L735.4 199.1 L733.6 200.4 L731.9 201.8 L730.1 203.1 L728.3 204.5 L726.5 205.8 L724.8 207.2 L723 208.5 L721.3 209.9 L719.5 211.2 L717.8 212.6 L716 214 L714.3 215.3 L712.6 216.7 L710.9 218.1 L709.2 219.5 L707.5 220.9 L705.9 222.2 L704.2 223.6 L702.5 225 L700.9 226.4 L699.2 227.8 L697.6 229.2 L696 230.6 L694.4 232 L692.8 233.4 L691.2 234.8 L689.6 236.2 L688 237.6 L686.5 239 L684.9 240.4 L683.4 241.8 L681.9 243.2 L680.4 244.6 L678.9 246 L677.4 247.5 L675.9 248.9 L674.4 250.3 L673 251.7 L671.5 253.1 L670.1 254.6 L668.7 256 L667.3 257.4 L665.9 258.8 L664.5 260.3 L663.1 261.7 L661.8 263.1 L660.4 264.6 L659.1 266 L657.8 267.4 L656.5 268.9 L655.2 270.3 L653.9 271.7 L652.7 273.2 L651.4 274.6 L650.2 276 L649 277.5 L647.8 278.9 L646.6 280.4 L645.4 281.8 L644.2 283.3 L643.1 284.7 L642 286.1 L640.8 287.6 L639.7 289 L638.7 290.5 L637.6 291.9 L636.5 293.4 L635.5 294.8 L634.5 296.3 L633.4 297.7 L632.5 299.2 L631.5 300.6 L630.5 302 L629.6 303.5 L628.6 304.9 L627.7 306.4 L626.8 307.8 L625.9 309.3 L625 310.7 L624.2 312.2 L623.4 313.6 L622.5 315.1 L621.7 316.5 L620.9 318 L620.2 319.4 L619.4 320.9 L618.7 322.3 L617.9 323.8 L617.2 325.2 L616.5 326.7 L615.9 328.1 L615.2 329.6 L614.6 331 L613.9 332.5 L613.3 333.9"/><path d="M1015.8 290 L1016.1 288.4 L1016.3 286.8 L1016.5 285.2 L1016.8 283.6 L1017 282 L1017.2 280.4 L1017.4 278.8 L1017.6 277.2 L1017.8 275.5 L1017.9 273.9 L1018.1 272.3 L1018.3 270.7 L1018.4 269.1 L1018.6 267.5 L1018.7 265.9 L1018.8 264.3 L1019 262.7 L1019.1 261.1 L1019.2 259.5 L1019.3 257.9 L1019.3 256.3 L1019.4 254.7 L1019.5 253.1 L1019.6 251.5 L1019.6 249.9 L1019.6 248.3 L1019.7 246.7 L1019.7 245.1 L1019.7 243.5 L1019.7 241.9 L1019.7 240.3 L1019.7 238.7 L1019.7 237.1 L1019.7 235.5 L1019.7 233.9 L1019.6 232.3 L1019.6 230.7 L1019.5 229.1 L1019.5 227.5 L1019.4 225.9 L1019.3 224.3 L1019.2 222.7 L1019.1 221.1 L1019 219.5 L1018.9 218 L1018.8 216.4 L1018.7 214.8 L1018.5 213.2 L1018.4 211.6 L1018.2 210 L1018.1 208.4 L1017.9 206.8 L1017.7 205.2 L1017.5 203.7 L1017.3 202.1 L1017.1 200.5 L1016.9 198.9 L1016.7 197.3 L1016.5 195.7 L1016.3 194.2 L1016 192.6 L1015.8 191 L1015.5 189.4 L1015.3 187.8 L1015 186.3 L1014.7 184.7 L1014.4 183.1 L1014.1 181.6 L1013.8 180 L1013.5 178.4 L1013.2 176.8 L1012.9 175.3 L1012.6 173.7 L1012.2 172.1 L1011.9 170.6 L1011.6 169 L1011.2 167.5 L1010.9 165.9 L1010.5 164.3 L1010.1 162.8 L1009.7 161.2 L1009.4 159.7 L1009 158.1 L1008.6 156.6 L1008.2 155 L1007.8 153.5 L1007.4 152 L1006.9 150.4 L1006.5 148.9 L1006.1 147.4 L1005.6 145.8 L1005.2 144.3 L1004.8 142.8 L1004.3 141.2 L1003.9 139.7 L1003.4 138.2 L1002.9 136.7 L1002.5 135.2 L1002 133.7 L1001.5 132.2 L1001.1 130.7 L1000.6 129.2 L1000.1 127.7 L999.6 126.2 L999.1 124.7 L998.6 123.2 L998.1 121.8 L997.6 120.3 L997.1 118.8 L996.7 117.4 L996.2 115.9 L995.7 114.5 L995.2 113 L994.7 111.6 L994.2 110.2 L993.7 108.7 L993.2 107.3 L992.7 105.9 L992.2 104.5 L991.7 103.1 L991.2 101.7 L990.8 100.4 L990.3 99 L989.8 97.7 L989.4 96.3 L988.9 95 L988.5 93.7 L988.1 92.4 L987.6 91.1 L987.2 89.8 L986.8 88.5 L986.5 87.3 L986.1 86.1 L985.8 84.9 L985.4 83.7 L985.1 82.5 L984.8 81.3 L984.6 80.2 L984.4 79.1 L984.2 78 L984 77 L983.9 75.9 L983.8 74.9 L983.7 74 L983.7 73 L983.7 72.1 L983.8 71.3 L984 70.4 L984.2 69.6 L984.4 68.9 L984.7 68.2 L985.1 67.5 L985.6 66.9 L986.2 66.3 L986.8 65.8 L987.5 65.3 L988.4 64.9 L989.3 64.5 L990.3 64.2 L991.4 63.9 L992.7 63.7 L994 63.6 L995.5 63.5 L997.1 63.5 L998.8 63.5 L1000.7 63.6 L1002.6 63.7 L1004.7 63.9 L1007 64.2 L1009.3 64.5 L1011.8 64.9 L1014.4 65.3 L1017.1 65.8 L1020 66.4 L1022.9 66.9 L1026 67.6 L1029.2 68.3 L1032.5 69 L1035.9 69.7 L1039.4 70.5 L1043 71.4 L1046.7 72.3 L1050.4 73.2 L1054.3 74.1 L1058.2 75.1 L1062.2 76.1 L1066.3 77.1 L1070.5 78.2 L1074.7 79.3 L1079 80.4 L1083.3 81.5 L1087.7 82.7 L1092.1 83.9 L1096.6 85 L1101.1 86.3 L1105.7 87.5 L1110.3 88.7 L1115 90 L1119.6 91.3 L1124.3 92.6 L1129.1 93.9 L1133.8 95.2 L1138.6 96.5M658 97.9 L655.1 99.2 L652.2 100.6 L649.2 102 L646.3 103.3 L643.3 104.7 L640.4 106.1 L637.4 107.5 L634.4 108.9 L631.4 110.4 L628.5 111.8 L625.5 113.2 L622.5 114.7 L619.5 116.1 L616.5 117.6 L613.5 119 L610.5 120.5 L607.5 122 L604.6 123.4 L601.6 124.9 L598.6 126.4 L595.7 127.9 L592.7 129.4 L589.8 130.9 L586.9 132.4 L584 133.9 L581.1 135.4 L578.2 136.9 L575.3 138.4 L572.4 139.9 L569.6 141.5 L566.7 143 L563.9 144.5 L561.1 146.1 L558.3 147.6 L555.5 149.1 L552.8 150.7 L550 152.2 L547.3 153.7 L544.6 155.3 L541.9 156.8 L539.3 158.4 L536.6 159.9 L534 161.5 L531.4 163 L528.8 164.6 L526.2 166.1 L523.7 167.7 L521.2 169.3 L518.7 170.8 L516.2 172.4 L513.8 173.9 L511.4 175.5 L509 177.1 L506.6 178.6 L504.2 180.2 L501.9 181.8 L499.6 183.4 L497.3 184.9 L495.1 186.5 L492.8 188.1 L490.6 189.7 L488.5 191.2 L486.3 192.8 L484.2 194.4 L482.1 196 L480 197.6 L478 199.1 L476 200.7 L474 202.3 L472.1 203.9 L470.1 205.5 L468.2 207.1 L466.4 208.7 L464.5 210.2 L462.7 211.8 L460.9 213.4 L459.2 215 L457.5 216.6 L455.8 218.2 L454.1 219.8 L452.5 221.4 L450.9 223 L449.3 224.6 L447.8 226.2 L446.3 227.8 L444.8 229.4 L443.4 231 L442 232.5 L440.6 234.1 L439.3 235.7 L437.9 237.3 L436.7 238.9 L435.4 240.5 L434.2 242.1 L433 243.7 L431.9 245.3 L430.7 246.9"/><path d="M1017.6 316 L1017.5 314.3 L1017.5 312.7 L1017.4 311 L1017.3 309.4 L1017.2 307.7 L1017.1 306.1 L1017 304.4 L1016.8 302.8 L1016.7 301.1 L1016.6 299.5 L1016.4 297.8 L1016.2 296.2 L1016.1 294.5 L1015.9 292.9 L1015.7 291.2 L1015.5 289.5 L1015.3 287.9 L1015.1 286.2 L1014.9 284.6 L1014.6 282.9 L1014.4 281.3 L1014.2 279.6 L1013.9 278 L1013.6 276.3 L1013.4 274.7 L1013.1 273 L1012.8 271.4 L1012.5 269.7 L1012.2 268 L1011.9 266.4 L1011.5 264.7 L1011.2 263.1 L1010.9 261.4 L1010.5 259.8 L1010.2 258.1 L1009.8 256.5 L1009.4 254.8 L1009 253.2 L1008.7 251.5 L1008.3 249.9 L1007.8 248.2 L1007.4 246.6 L1007 244.9 L1006.6 243.2 L1006.1 241.6 L1005.7 239.9 L1005.2 238.3 L1004.8 236.6 L1004.3 235 L1003.8 233.3 L1003.3 231.7 L1002.8 230 L1002.3 228.4 L1001.8 226.7 L1001.3 225.1 L1000.8 223.4 L1000.3 221.8 L999.7 220.1 L999.2 218.4 L998.6 216.8 L998 215.1 L997.5 213.5 L996.9 211.8 L996.3 210.2 L995.7 208.5 L995.1 206.9 L994.5 205.2 L993.9 203.6 L993.3 201.9 L992.7 200.3 L992 198.6 L991.4 197 L990.7 195.3 L990.1 193.6 L989.4 192 L988.8 190.3 L988.1 188.7 L987.4 187 L986.7 185.4 L986 183.7 L985.3 182.1 L984.6 180.4 L983.9 178.8 L983.2 177.1 L982.4 175.5 L981.7 173.8 L981 172.2 L980.2 170.5 L979.5 168.9 L978.7 167.2 L978 165.6 L977.2 163.9 L976.4 162.2 L975.6 160.6 L974.9 158.9 L974.1 157.3 L973.3 155.6 L972.5 154 L971.7 152.3 L970.8 150.7 L970 149 L969.2 147.4 L968.4 145.7 L967.5 144.1 L966.7 142.4 L965.9 140.8 L965 139.1 L964.2 137.5 L963.3 135.8 L962.4 134.2 L961.6 132.5 L960.7 130.9 L959.8 129.2 L958.9 127.6 L958.1 125.9 L957.2 124.3 L956.3 122.6 L955.4 120.9 L954.5 119.3 L953.6 117.6 L952.7 116 L951.7 114.3 L950.8 112.7 L949.9 111 L949 109.4 L948.1 107.7 L947.1 106.1 L946.2 104.4 L945.2 102.8 L944.3 101.1 L943.4 99.5 L942.4 97.8 L941.5 96.2 L940.5 94.6 L939.5 92.9 L938.6 91.3 L937.6 89.6 L936.7 88 L935.7 86.3 L934.7 84.7 L933.7 83 L932.8 81.4 L931.8 79.7 L930.8 78.1 L929.8 76.4 L928.8 74.8 L927.9 73.2 L926.9 71.5 L925.9 69.9 L924.9 68.2 L923.9 66.6 L922.9 64.9 L921.9 63.3 L920.9 61.7 L919.9 60 L918.9 58.4 L917.9 56.8 L916.9 55.1 L915.9 53.5 L914.9 51.9 L913.9 50.3 L912.9 48.6 L912 47 L911 45.4 L910 43.8 L909 42.2 L908 40.6 L907 39 L906 37.5 L905 35.9 L904 34.4 L903.1 32.9 L902.1 31.4 L901.2 30 L900.2 28.6 L899.2 27.3 L898.3 26.2 L897.2 25.3 L896 24.7 L894.6 24.4 L892.8 24.6 L890.5 25.1 L887.8 26 L884.8 27.1 L881.5 28.3 L878 29.6 L874.3 31.1 L870.6 32.5 L866.8 34 L862.9 35.6 L859 37.1 L855.1 38.7 L851.1 40.3 L847.1 41.8 L843.1 43.4 L839.1 45 L835.1 46.7 L831.1 48.3 L827 49.9 L823 51.5 L819 53.1 L814.9 54.8 L810.9 56.4 L806.9 58 L802.8 59.7 L798.8 61.3 L794.8 62.9 L790.8 64.6 L786.8 66.2 L782.8 67.8 L778.8 69.5 L774.8 71.1 L770.8 72.8 L766.8 74.4 L762.9 76.1 L758.9 77.7 L755 79.3 L751 81 L747.1 82.6 L743.2 84.3 L739.3 85.9 L735.4 87.6 L731.5 89.2 L727.6 90.9 L723.8 92.5 L719.9 94.2 L716.1 95.8 L712.3 97.5 L708.5 99.1 L704.7 100.8 L700.9 102.4 L697.1 104.1 L693.4 105.7 L689.7 107.4 L685.9 109 L682.2 110.7 L678.6 112.3 L674.9 114 L671.2 115.6 L667.6 117.3 L664 118.9 L660.4 120.6 L656.8 122.2 L653.2 123.9 L649.7 125.5 L646.2 127.2 L642.7 128.8 L639.2 130.5 L635.7 132.1 L632.3 133.8 L628.8 135.4 L625.4 137.1 L622 138.7 L618.7 140.4 L615.3 142 L612 143.7 L608.7 145.3 L605.4 147 L602.2 148.6 L598.9 150.3 L595.7 151.9 L592.5 153.6 L589.3 155.3 L586.2 156.9 L583.1 158.6 L580 160.2 L576.9 161.9 L573.9 163.5 L570.8 165.2 L567.8 166.8 L564.9 168.5 L561.9 170.1 L559 171.8 L556.1 173.4 L553.2 175.1 L550.4 176.7 L547.6 178.4 L544.8 180 L542 181.7 L539.3 183.3 L536.6 185 L533.9 186.7 L531.2 188.3 L528.6 190 L526 191.6 L523.4 193.3 L520.9 194.9 L518.4 196.6 L515.9 198.2 L513.4 199.9 L511 201.5 L508.6 203.2 L506.2 204.8 L503.9 206.5 L501.6 208.1 L499.3 209.8 L497 211.4 L494.8 213.1 L492.6 214.8 L490.5 216.4 L488.4 218.1"/><path d="M900 327.5 L898.4 327 L896.8 326.5 L895.3 326 L893.7 325.6 L892.1 325.1 L890.5 324.6 L889 324.1 L887.4 323.6 L885.8 323.1 L884.2 322.6 L882.7 322.1 L881.1 321.6 L879.5 321.1 L877.9 320.7 L876.4 320.2 L874.8 319.7 L873.2 319.2 L871.6 318.7 L870.1 318.2 L868.5 317.7 L866.9 317.2 L865.3 316.7 L863.8 316.2 L862.2 315.7 L860.6 315.2 L859 314.7 L857.5 314.3 L855.9 313.8 L854.3 313.3 L852.8 312.8 L851.2 312.3 L849.6 311.8 L848 311.3 L846.5 310.8 L844.9 310.3 L843.3 309.8 L841.8 309.3 L840.2 308.9 L838.6 308.4 L837.1 307.9 L835.5 307.4 L833.9 306.9 L832.4 306.4 L830.8 305.9 L829.2 305.5 L827.7 305 L826.1 304.5 L824.5 304 L823 303.5 L821.4 303 L819.8 302.6 L818.3 302.1 L816.7 301.6 L815.2 301.1 L813.6 300.7 L812 300.2 L810.5 299.7 L808.9 299.2 L807.4 298.8 L805.8 298.3 L804.2 297.8 L802.7 297.4 L801.1 296.9 L799.6 296.4 L798 296 L796.5 295.5 L794.9 295.1 L793.3 294.6 L791.8 294.1 L790.2 293.7 L788.7 293.2 L787.1 292.8 L785.6 292.3 L784 291.9 L782.5 291.4 L780.9 291 L779.4 290.6 L777.8 290.1 L776.3 289.7 L774.7 289.2 L773.2 288.8 L771.6 288.4 L770.1 287.9 L768.5 287.5 L767 287.1 L765.5 286.7 L763.9 286.2 L762.4 285.8 L760.8 285.4 L759.3 285 L757.7 284.6 L756.2 284.2 L754.6 283.8 L753.1 283.4 L751.6 282.9 L750 282.5 L748.5 282.1 L746.9 281.7 L745.4 281.4 L743.9 281 L742.3 280.6 L740.8 280.2 L739.2 279.8 L737.7 279.4 L736.1 279 L734.6 278.7 L733.1 278.3 L731.5 277.9 L730 277.6 L728.5 277.2 L726.9 276.8 L725.4 276.5 L723.8 276.1 L722.3 275.8 L720.8 275.4 L719.2 275.1 L717.7 274.7 L716.1 274.4 L714.6 274.1 L713.1 273.7 L711.5 273.4 L710 273.1 L708.4 272.7 L706.9 272.4 L705.4 272.1 L703.8 271.8 L702.3 271.5 L700.7 271.2 L699.2 270.9 L697.7 270.6 L696.1 270.3 L694.6 270 L693 269.7 L691.5 269.4 L689.9 269.1 L688.4 268.8 L686.8 268.6 L685.3 268.3 L683.8 268 L682.2 267.7 L680.7 267.5 L679.1 267.2 L677.6 267 L676 266.7 L674.5 266.5 L672.9 266.2 L671.4 266 L669.8 265.8 L668.2 265.5 L666.7 265.3 L665.1 265.1 L663.6 264.9 L662 264.6 L660.5 264.4 L658.9 264.2 L657.3 264 L655.8 263.8 L654.2 263.6 L652.6 263.4 L651.1 263.2 L649.5 263.1 L647.9 262.9 L646.4 262.7 L644.8 262.5 L643.2 262.4 L641.6 262.2 L640.1 262.1 L638.5 261.9 L636.9 261.7 L635.3 261.6 L633.7 261.5 L632.2 261.3 L630.6 261.2 L629 261.1 L627.4 260.9 L625.8 260.8 L624.2 260.7 L622.6 260.6 L621 260.5 L619.4 260.4 L617.8 260.3 L616.2 260.2 L614.6 260.1 L613 260 L611.4 259.9 L609.8 259.9 L608.2 259.8 L606.5 259.7 L604.9 259.7 L603.3 259.6 L601.7 259.6 L600.1 259.5 L598.4 259.5 L596.8 259.4 L595.2 259.4 L593.5 259.4 L591.9 259.3 L590.3 259.3 L588.6 259.3 L587 259.3 L585.3 259.3 L583.7 259.3 L582 259.3 L580.4 259.3 L578.7 259.3 L577.1 259.3 L575.4 259.3 L573.8 259.3 L572.1 259.4 L570.4 259.4 L568.8 259.4 L567.1 259.5 L565.4 259.5 L563.8 259.6 L562.1 259.6 L560.4 259.7 L558.7 259.7 L557 259.8 L555.3 259.9 L553.7 260 L552 260 L550.3 260.1 L548.6 260.2 L546.9 260.3 L545.2 260.4 L543.5 260.5 L541.8 260.6 L540.1 260.7 L538.3 260.8 L536.6 261 L534.9 261.1 L533.2 261.2 L531.5 261.3 L529.8 261.5 L528 261.6 L526.3 261.8 L524.6 261.9 L522.8 262.1 L521.1 262.2 L519.4 262.4 L517.6 262.6 L515.9 262.7 L514.1 262.9 L512.4 263.1 L510.7 263.3 L508.9 263.5 L507.2 263.7 L505.4 263.8 L503.6 264 L501.9 264.3 L500.1 264.5 L498.4 264.7 L496.6 264.9 L494.8 265.1 L493.1 265.3 L491.3 265.6 L489.5 265.8 L487.8 266 L486 266.3 L484.2 266.5 L482.4 266.8 L480.7 267 L478.9 267.3 L477.1 267.5 L475.3 267.8 L473.5 268 L471.8 268.3 L470 268.6 L468.2 268.9 L466.4 269.1 L464.6 269.4 L462.8 269.7 L461 270 L459.2 270.3 L457.4 270.6 L455.6 270.9 L453.8 271.2 L452 271.5 L450.2 271.8 L448.4 272.1 L446.7 272.5 L444.9 272.8 L443.1 273.1 L441.3 273.4 L439.5 273.8 L437.7 274.1 L435.9 274.4 L434.1 274.8 L432.2 275.1 L430.4 275.5 L428.6 275.8 L426.8 276.2 L425 276.5 L423.2 276.9 L421.4 277.2 L419.6 277.6 L417.8 278 L416 278.3 L414.2 278.7 L412.4 279.1 L410.6 279.5"/><path d="M950.8 286.7 L949.2 286.3 L947.6 285.9 L945.9 285.6 L944.3 285.2 L942.7 284.8 L941.1 284.4 L939.5 284.1 L937.8 283.7 L936.2 283.4 L934.6 283 L933 282.6 L931.4 282.3 L929.7 281.9 L928.1 281.6 L926.5 281.2 L924.9 280.9 L923.2 280.5 L921.6 280.2 L920 279.9 L918.4 279.5 L916.8 279.2 L915.1 278.9 L913.5 278.5 L911.9 278.2 L910.3 277.9 L908.7 277.6 L907 277.3 L905.4 277 L903.8 276.6 L902.2 276.3 L900.6 276 L898.9 275.7 L897.3 275.4 L895.7 275.1 L894.1 274.9 L892.5 274.6 L890.8 274.3 L889.2 274 L887.6 273.7 L886 273.4 L884.3 273.2 L882.7 272.9 L881.1 272.6 L879.5 272.4 L877.9 272.1 L876.2 271.9 L874.6 271.6 L873 271.4 L871.4 271.1 L869.8 270.9 L868.1 270.6 L866.5 270.4 L864.9 270.2 L863.3 269.9 L861.6 269.7 L860 269.5 L858.4 269.3 L856.8 269.1 L855.2 268.9 L853.5 268.7 L851.9 268.5 L850.3 268.3 L848.7 268.1 L847 267.9 L845.4 267.7 L843.8 267.5 L842.2 267.3 L840.5 267.1 L838.9 267 L837.3 266.8 L835.7 266.6 L834 266.5 L832.4 266.3 L830.8 266.2 L829.2 266 L827.5 265.9 L825.9 265.7 L824.3 265.6 L822.7 265.5 L821 265.3 L819.4 265.2 L817.8 265.1 L816.1 265 L814.5 264.9 L812.9 264.8 L811.2 264.6 L809.6 264.5 L808 264.4 L806.3 264.4 L804.7 264.3 L803.1 264.2 L801.4 264.1 L799.8 264 L798.2 263.9 L796.5 263.9 L794.9 263.8 L793.3 263.8 L791.6 263.7 L790 263.6 L788.3 263.6 L786.7 263.6 L785.1 263.5 L783.4 263.5 L781.8 263.4 L780.1 263.4 L778.5 263.4 L776.8 263.4 L775.2 263.4 L773.6 263.4 L771.9 263.3 L770.3 263.3 L768.6 263.3 L767 263.3 L765.3 263.4 L763.7 263.4 L762 263.4 L760.4 263.4 L758.7 263.4 L757 263.5 L755.4 263.5 L753.7 263.5 L752.1 263.6 L750.4 263.6 L748.8 263.7 L747.1 263.7 L745.4 263.8 L743.8 263.9 L742.1 263.9 L740.4 264 L738.8 264.1 L737.1 264.2 L735.4 264.2 L733.8 264.3 L732.1 264.4 L730.4 264.5 L728.8 264.6 L727.1 264.7 L725.4 264.8 L723.8 264.9 L722.1 265.1 L720.4 265.2 L718.7 265.3 L717 265.4 L715.4 265.6 L713.7 265.7 L712 265.8 L710.3 266 L708.6 266.1 L707 266.3 L705.3 266.4 L703.6 266.6 L701.9 266.8 L700.2 266.9 L698.5 267.1 L696.8 267.3 L695.1 267.5 L693.5 267.6 L691.8 267.8 L690.1 268 L688.4 268.2 L686.7 268.4 L685 268.6 L683.3 268.8 L681.6 269 L679.9 269.2 L678.2 269.4 L676.5 269.7 L674.8 269.9 L673.1 270.1 L671.4 270.3 L669.7 270.6 L668 270.8 L666.3 271.1 L664.6 271.3 L662.9 271.6 L661.2 271.8 L659.5 272.1 L657.8 272.3 L656.1 272.6 L654.4 272.8 L652.6 273.1 L650.9 273.4 L649.2 273.6 L647.5 273.9 L645.8 274.2 L644.1 274.5 L642.4 274.8 L640.7 275.1 L639 275.4 L637.2 275.7 L635.5 276 L633.8 276.3 L632.1 276.6 L630.4 276.9 L628.7 277.2 L627 277.5 L625.3 277.8 L623.5 278.1 L621.8 278.5 L620.1 278.8 L618.4 279.1 L616.7 279.4 L615 279.8 L613.3 280.1 L611.5 280.5 L609.8 280.8 L608.1 281.1 L606.4 281.5 L604.7 281.8 L603 282.2 L601.3 282.5 L599.6 282.9 L597.9 283.3 L596.1 283.6 L594.4 284 L592.7 284.4 L591 284.7 L589.3 285.1 L587.6 285.5 L585.9 285.8 L584.2 286.2 L582.5 286.6 L580.8 287 L579.1 287.4 L577.4 287.8 L575.7 288.1 L573.9 288.5 L572.2 288.9 L570.5 289.3 L568.8 289.7 L567.1 290.1 L565.4 290.5 L563.8 290.9 L562.1 291.3 L560.4 291.7 L558.7 292.1 L557 292.6 L555.3 293 L553.6 293.4 L551.9 293.8 L550.2 294.2 L548.5 294.6 L546.8 295.1 L545.2 295.5 L543.5 295.9 L541.8 296.3 L540.1 296.8 L538.4 297.2 L536.8 297.6 L535.1 298 L533.4 298.5 L531.8 298.9 L530.1 299.3 L528.4 299.8 L526.7 300.2 L525.1 300.6 L523.4 301.1 L521.8 301.5 L520.1 302 L518.4 302.4 L516.8 302.9 L515.1 303.3 L513.5 303.7 L511.8 304.2 L510.2 304.6 L508.5 305.1 L506.9 305.5 L505.3 306 L503.6 306.4 L502 306.9 L500.4 307.3 L498.7 307.8 L497.1 308.2 L495.5 308.7 L493.8 309.1 L492.2 309.6 L490.6 310.1 L489 310.5 L487.4 311 L485.7 311.4 L484.1 311.9 L482.5 312.3 L480.9 312.8 L479.3 313.3 L477.7 313.7 L476.1 314.2 L474.5 314.6 L472.9 315.1 L471.3 315.5 L469.7 316 L468.2 316.5 L466.6 316.9 L465 317.4 L463.4 317.8 L461.8 318.3 L460.3 318.8 L458.7 319.2 L457.1 319.7 L455.6 320.1 L454 320.6 L452.4 321.1"/><path d="M982.2 339.4 L980.7 338.7 L979.3 338 L977.8 337.3 L976.4 336.6 L974.9 335.9 L973.4 335.2 L972 334.5 L970.5 333.7 L969 333 L967.6 332.3 L966.1 331.6 L964.6 330.9 L963.2 330.2 L961.7 329.5 L960.2 328.7 L958.8 328 L957.3 327.3 L955.8 326.6 L954.3 325.9 L952.9 325.1 L951.4 324.4 L949.9 323.7 L948.4 323 L947 322.3 L945.5 321.5 L944 320.8 L942.5 320.1 L941 319.4 L939.6 318.6 L938.1 317.9 L936.6 317.2 L935.1 316.5 L933.6 315.8 L932.2 315 L930.7 314.3 L929.2 313.6 L927.7 312.9 L926.2 312.1 L924.7 311.4 L923.2 310.7 L921.8 310 L920.3 309.2 L918.8 308.5 L917.3 307.8 L915.8 307.1 L914.3 306.4 L912.8 305.6 L911.3 304.9 L909.9 304.2 L908.4 303.5 L906.9 302.8 L905.4 302.1 L903.9 301.4 L902.4 300.6 L900.9 299.9 L899.4 299.2 L898 298.5 L896.5 297.8 L895 297.1 L893.5 296.4 L892 295.7 L890.5 295 L889 294.3 L887.5 293.6 L886 292.9 L884.6 292.2 L883.1 291.5 L881.6 290.8 L880.1 290.1 L878.6 289.4 L877.1 288.7 L875.6 288 L874.2 287.3 L872.7 286.7 L871.2 286 L869.7 285.3 L868.2 284.6 L866.7 283.9 L865.2 283.3 L863.8 282.6 L862.3 281.9 L860.8 281.2 L859.3 280.6 L857.8 279.9 L856.4 279.3 L854.9 278.6 L853.4 277.9 L851.9 277.3 L850.4 276.6 L848.9 276 L847.5 275.3 L846 274.7 L844.5 274.1 L843 273.4 L841.6 272.8 L840.1 272.2 L838.6 271.5 L837.1 270.9 L835.7 270.3 L834.2 269.7 L832.7 269 L831.2 268.4 L829.8 267.8 L828.3 267.2 L826.8 266.6 L825.3 266 L823.9 265.4 L822.4 264.8 L820.9 264.2 L819.5 263.6 L818 263.1 L816.5 262.5 L815 261.9 L813.6 261.3 L812.1 260.8 L810.6 260.2 L809.2 259.6 L807.7 259.1 L806.2 258.5 L804.8 258 L803.3 257.4 L801.8 256.9 L800.4 256.4 L798.9 255.8 L797.4 255.3 L795.9 254.8 L794.5 254.3 L793 253.8 L791.5 253.3 L790.1 252.7 L788.6 252.2 L787.1 251.8 L785.7 251.3 L784.2 250.8 L782.7 250.3 L781.3 249.8 L779.8 249.3 L778.3 248.9 L776.8 248.4 L775.4 248 L773.9 247.5 L772.4 247.1 L771 246.6 L769.5 246.2 L768 245.8 L766.5 245.3 L765.1 244.9 L763.6 244.5 L762.1 244.1 L760.6 243.7 L759.1 243.3 L757.7 242.9 L756.2 242.5 L754.7 242.1 L753.2 241.7 L751.7 241.4 L750.2 241 L748.7 240.6 L747.3 240.3 L745.8 239.9 L744.3 239.6 L742.8 239.3 L741.3 238.9 L739.8 238.6 L738.3 238.3 L736.8 238 L735.3 237.7 L733.8 237.4 L732.3 237.1 L730.8 236.8 L729.2 236.5 L727.7 236.2 L726.2 236 L724.7 235.7 L723.2 235.5 L721.7 235.2 L720.1 235 L718.6 234.7 L717.1 234.5 L715.5 234.3 L714 234.1 L712.5 233.8 L710.9 233.6 L709.4 233.4 L707.8 233.3 L706.3 233.1 L704.7 232.9 L703.2 232.7 L701.6 232.6 L700 232.4 L698.5 232.2 L696.9 232.1 L695.3 232 L693.8 231.8 L692.2 231.7 L690.6 231.6 L689 231.5 L687.4 231.4 L685.8 231.3 L684.2 231.2 L682.6 231.1 L681 231.1 L679.4 231 L677.8 230.9 L676.2 230.9 L674.6 230.8 L672.9 230.8 L671.3 230.8 L669.7 230.7 L668 230.7 L666.4 230.7 L664.7 230.7 L663.1 230.7 L661.4 230.7 L659.8 230.7 L658.1 230.7 L656.5 230.8 L654.8 230.8 L653.1 230.9 L651.4 230.9 L649.7 231 L648.1 231 L646.4 231.1 L644.7 231.2 L643 231.3 L641.3 231.4 L639.5 231.5 L637.8 231.6 L636.1 231.7 L634.4 231.8 L632.6 231.9 L630.9 232.1 L629.2 232.2 L627.4 232.4 L625.7 232.5 L623.9 232.7 L622.2 232.8 L620.4 233 L618.7 233.2 L616.9 233.4 L615.1 233.6 L613.3 233.8 L611.6 234 L609.8 234.2 L608 234.4 L606.2 234.7 L604.4 234.9 L602.6 235.1 L600.8 235.4 L599 235.6 L597.1 235.9 L595.3 236.2 L593.5 236.4 L591.7 236.7 L589.8 237 L588 237.3 L586.2 237.6 L584.3 237.9 L582.5 238.2 L580.6 238.5 L578.8 238.8 L576.9 239.2 L575.1 239.5 L573.2 239.8 L571.3 240.2 L569.5 240.5 L567.6 240.9 L565.7 241.3 L563.8 241.6 L561.9 242 L560.1 242.4 L558.2 242.8 L556.3 243.2 L554.4 243.6 L552.5 244 L550.6 244.4 L548.7 244.8 L546.8 245.2 L544.9 245.6 L543 246.1 L541.1 246.5 L539.2 246.9 L537.2 247.4 L535.3 247.8 L533.4 248.3 L531.5 248.7 L529.6 249.2 L527.7 249.7 L525.7 250.1 L523.8 250.6 L521.9 251.1 L520 251.6 L518 252.1 L516.1 252.6 L514.2 253.1 L512.3 253.6 L510.3 254.1 L508.4 254.6 L506.5 255.2 L504.5 255.7 L502.6 256.2"/><path d="M981.1 346.7 L980 345.5 L978.9 344.4 L977.8 343.2 L976.7 342 L975.6 340.9 L974.5 339.7 L973.4 338.5 L972.3 337.3 L971.2 336.2 L970 335 L968.9 333.8 L967.8 332.6 L966.7 331.5 L965.6 330.3 L964.4 329.1 L963.3 327.9 L962.2 326.7 L961 325.6 L959.9 324.4 L958.7 323.2 L957.6 322 L956.4 320.8 L955.3 319.7 L954.1 318.5 L953 317.3 L951.8 316.1 L950.7 314.9 L949.5 313.8 L948.4 312.6 L947.2 311.4 L946 310.2 L944.9 309 L943.7 307.9 L942.5 306.7 L941.4 305.5 L940.2 304.3 L939 303.1 L937.8 302 L936.7 300.8 L935.5 299.6 L934.3 298.4 L933.1 297.3 L931.9 296.1 L930.7 294.9 L929.6 293.7 L928.4 292.6 L927.2 291.4 L926 290.2 L924.8 289.1 L923.6 287.9 L922.4 286.7 L921.2 285.6 L920.1 284.4 L918.9 283.2 L917.7 282.1 L916.5 280.9 L915.3 279.8 L914.1 278.6 L912.9 277.4 L911.7 276.3 L910.5 275.1 L909.3 274 L908.1 272.8 L906.9 271.7 L905.7 270.5 L904.5 269.4 L903.3 268.3 L902.1 267.1 L900.9 266 L899.7 264.8 L898.5 263.7 L897.3 262.6 L896.1 261.4 L894.9 260.3 L893.7 259.2 L892.5 258.1 L891.3 257 L890.1 255.8 L888.9 254.7 L887.7 253.6 L886.5 252.5 L885.4 251.4 L884.2 250.3 L883 249.2 L881.8 248.1 L880.6 247 L879.4 245.9 L878.2 244.8 L877 243.7 L875.8 242.6 L874.6 241.6 L873.4 240.5 L872.2 239.4 L871 238.4 L869.9 237.3 L868.7 236.2 L867.5 235.2 L866.3 234.1 L865.1 233.1 L863.9 232 L862.7 231 L861.6 229.9 L860.4 228.9 L859.2 227.9 L858 226.9 L856.8 225.8 L855.7 224.8 L854.5 223.8 L853.3 222.8 L852.1 221.8 L850.9 220.8 L849.8 219.8 L848.6 218.8 L847.4 217.9 L846.2 216.9 L845.1 215.9 L843.9 215 L842.7 214 L841.6 213.1 L840.4 212.1 L839.2 211.2 L838 210.2 L836.9 209.3 L835.7 208.4 L834.5 207.5 L833.4 206.6 L832.2 205.7 L831 204.8 L829.8 203.9 L828.7 203 L827.5 202.1 L826.3 201.3 L825.1 200.4 L824 199.6 L822.8 198.7 L821.6 197.9 L820.5 197 L819.3 196.2 L818.1 195.4 L816.9 194.6 L815.7 193.8 L814.6 193 L813.4 192.2 L812.2 191.5 L811 190.7 L809.8 189.9 L808.6 189.2 L807.4 188.5 L806.2 187.7 L805 187 L803.8 186.3 L802.6 185.6 L801.4 184.9 L800.2 184.3 L799 183.6 L797.8 182.9 L796.6 182.3 L795.4 181.6 L794.1 181 L792.9 180.4 L791.7 179.8 L790.4 179.2 L789.2 178.6 L788 178 L786.7 177.5 L785.4 176.9 L784.2 176.4 L782.9 175.9 L781.6 175.4 L780.4 174.9 L779.1 174.4 L777.8 173.9 L776.5 173.4 L775.2 173 L773.9 172.5 L772.5 172.1 L771.2 171.7 L769.9 171.3 L768.5 170.9 L767.2 170.5 L765.8 170.2 L764.4 169.8 L763.1 169.5 L761.7 169.2 L760.3 168.9 L758.9 168.6 L757.5 168.3 L756 168 L754.6 167.8 L753.1 167.5 L751.7 167.3 L750.2 167.1 L748.7 166.9 L747.2 166.7 L745.7 166.5 L744.2 166.4 L742.7 166.2 L741.2 166.1 L739.6 166 L738.1 165.9 L736.5 165.8 L734.9 165.8 L733.3 165.7 L731.7 165.7 L730 165.7 L728.4 165.6 L726.7 165.7 L725.1 165.7 L723.4 165.7 L721.7 165.8 L720 165.8 L718.3 165.9 L716.5 166 L714.8 166.1 L713 166.2 L711.2 166.4 L709.4 166.5 L707.6 166.7 L705.8 166.9 L704 167.1 L702.1 167.3 L700.2 167.5 L698.4 167.7 L696.5 168 L694.5 168.3 L692.6 168.5 L690.7 168.8 L688.7 169.1 L686.8 169.5 L684.8 169.8 L682.8 170.1 L680.8 170.5 L678.7 170.9 L676.7 171.3 L674.6 171.7 L672.6 172.1 L670.5 172.5 L668.4 172.9 L666.3 173.4 L664.2 173.9 L662 174.3 L659.9 174.8 L657.7 175.3 L655.6 175.8 L653.4 176.4 L651.2 176.9 L649 177.5 L646.8 178 L644.5 178.6 L642.3 179.2 L640 179.8 L637.8 180.4 L635.5 181 L633.2 181.6 L630.9 182.2 L628.6 182.9 L626.3 183.5 L624 184.2 L621.7 184.9 L619.3 185.6 L617 186.3 L614.6 187 L612.3 187.7 L609.9 188.4 L607.5 189.2 L605.1 189.9 L602.8 190.7 L600.4 191.4 L598 192.2 L595.6 193 L593.1 193.8 L590.7 194.6 L588.3 195.4 L585.9 196.2 L583.5 197 L581 197.8 L578.6 198.7 L576.1 199.5 L573.7 200.4 L571.3 201.2 L568.8 202.1 L566.4 203 L563.9 203.8 L561.5 204.7 L559 205.6 L556.6 206.5 L554.1 207.4 L551.7 208.3 L549.2 209.3 L546.8 210.2 L544.3 211.1 L541.9 212.1 L539.4 213 L537 214 L534.5 214.9 L532.1 215.9 L529.7 216.8 L527.2 217.8 L524.8 218.8 L522.4 219.8 L520 220.8"/><path d="M1031.3 376.7 L1030 375.9 L1028.8 375.1 L1027.5 374.3 L1026.3 373.4 L1025 372.6 L1023.7 371.8 L1022.5 370.9 L1021.2 370.1 L1019.9 369.3 L1018.7 368.4 L1017.4 367.6 L1016.1 366.7 L1014.8 365.9 L1013.6 365 L1012.3 364.2 L1011 363.3 L1009.7 362.4 L1008.4 361.6 L1007.1 360.7 L1005.9 359.8 L1004.6 359 L1003.3 358.1 L1002 357.2 L1000.7 356.3 L999.4 355.5 L998.1 354.6 L996.8 353.7 L995.5 352.8 L994.2 351.9 L992.9 351 L991.5 350.1 L990.2 349.2 L988.9 348.3 L987.6 347.4 L986.3 346.5 L985 345.6 L983.6 344.7 L982.3 343.8 L981 342.9 L979.7 342 L978.3 341.1 L977 340.2 L975.7 339.3 L974.3 338.4 L973 337.5 L971.7 336.5 L970.3 335.6 L969 334.7 L967.6 333.8 L966.3 332.9 L965 332 L963.6 331 L962.3 330.1 L960.9 329.2 L959.6 328.3 L958.2 327.4 L956.9 326.4 L955.5 325.5 L954.2 324.6 L952.8 323.7 L951.4 322.7 L950.1 321.8 L948.7 320.9 L947.4 320 L946 319 L944.6 318.1 L943.3 317.2 L941.9 316.3 L940.5 315.3 L939.2 314.4 L937.8 313.5 L936.4 312.5 L935 311.6 L933.7 310.7 L932.3 309.8 L930.9 308.8 L929.6 307.9 L928.2 307 L926.8 306.1 L925.4 305.2 L924.1 304.2 L922.7 303.3 L921.3 302.4 L919.9 301.5 L918.5 300.6 L917.2 299.6 L915.8 298.7 L914.4 297.8 L913 296.9 L911.7 296 L910.3 295.1 L908.9 294.1 L907.5 293.2 L906.1 292.3 L904.7 291.4 L903.4 290.5 L902 289.6 L900.6 288.7 L899.2 287.8 L897.8 286.9 L896.5 286 L895.1 285.1 L893.7 284.2 L892.3 283.3 L890.9 282.4 L889.6 281.5 L888.2 280.6 L886.8 279.7 L885.4 278.9 L884 278 L882.7 277.1 L881.3 276.2 L879.9 275.3 L878.5 274.5 L877.1 273.6 L875.8 272.7 L874.4 271.9 L873 271 L871.6 270.1 L870.3 269.3 L868.9 268.4 L867.5 267.6 L866.1 266.7 L864.8 265.9 L863.4 265 L862 264.2 L860.7 263.3 L859.3 262.5 L857.9 261.7 L856.5 260.8 L855.2 260 L853.8 259.2 L852.4 258.4 L851.1 257.6 L849.7 256.8 L848.3 255.9 L847 255.1 L845.6 254.3 L844.2 253.5 L842.9 252.7 L841.5 252 L840.2 251.2 L838.8 250.4 L837.4 249.6 L836.1 248.8 L834.7 248.1 L833.4 247.3 L832 246.5 L830.6 245.8 L829.3 245 L827.9 244.3 L826.6 243.5 L825.2 242.8 L823.8 242.1 L822.5 241.3 L821.1 240.6 L819.8 239.9 L818.4 239.2 L817.1 238.5 L815.7 237.8 L814.4 237.1 L813 236.4 L811.6 235.7 L810.3 235 L808.9 234.3 L807.6 233.7 L806.2 233 L804.9 232.3 L803.5 231.7 L802.2 231 L800.8 230.4 L799.4 229.7 L798.1 229.1 L796.7 228.5 L795.4 227.9 L794 227.3 L792.7 226.6 L791.3 226 L789.9 225.5 L788.6 224.9 L787.2 224.3 L785.8 223.7 L784.5 223.2 L783.1 222.6 L781.7 222 L780.4 221.5 L779 221 L777.6 220.4 L776.3 219.9 L774.9 219.4 L773.5 218.9 L772.1 218.4 L770.7 217.9 L769.4 217.4 L768 216.9 L766.6 216.4 L765.2 216 L763.8 215.5 L762.4 215.1 L761 214.6 L759.6 214.2 L758.2 213.8 L756.8 213.3 L755.4 212.9 L754 212.5 L752.6 212.1 L751.1 211.8 L749.7 211.4 L748.3 211 L746.9 210.7 L745.4 210.3 L744 210 L742.6 209.6 L741.1 209.3 L739.7 209 L738.2 208.7 L736.8 208.4 L735.3 208.1 L733.8 207.8 L732.3 207.6 L730.9 207.3 L729.4 207 L727.9 206.8 L726.4 206.6 L724.9 206.3 L723.4 206.1 L721.9 205.9 L720.4 205.7 L718.9 205.5 L717.3 205.4 L715.8 205.2 L714.3 205 L712.7 204.9 L711.2 204.7 L709.6 204.6 L708.1 204.5 L706.5 204.4 L704.9 204.3 L703.3 204.2 L701.7 204.1 L700.1 204 L698.5 204 L696.9 203.9 L695.3 203.9 L693.7 203.8 L692.1 203.8 L690.4 203.8 L688.8 203.8 L687.1 203.8 L685.5 203.8 L683.8 203.8 L682.1 203.9 L680.4 203.9 L678.8 204 L677.1 204 L675.4 204.1 L673.6 204.2 L671.9 204.3 L670.2 204.4 L668.5 204.5 L666.7 204.6 L665 204.7 L663.2 204.9 L661.4 205 L659.7 205.2 L657.9 205.3 L656.1 205.5 L654.3 205.7 L652.5 205.9 L650.7 206.1 L648.9 206.3 L647 206.6 L645.2 206.8 L643.3 207 L641.5 207.3 L639.6 207.5 L637.8 207.8 L635.9 208.1 L634 208.4 L632.1 208.7 L630.2 209 L628.3 209.3 L626.4 209.6 L624.5 210 L622.6 210.3 L620.6 210.7 L618.7 211 L616.8 211.4 L614.8 211.8 L612.8 212.1 L610.9 212.5 L608.9 212.9 L606.9 213.3 L604.9 213.8 L603 214.2 L601 214.6 L599 215.1 L596.9 215.5 L594.9 216 L592.9 216.4 L590.9 216.9"/><path d="M1063 375.1 L1061.5 374.6 L1060.1 374.1 L1058.7 373.5 L1057.2 373 L1055.8 372.5 L1054.3 372 L1052.9 371.5 L1051.5 370.9 L1050 370.4 L1048.6 369.9 L1047.2 369.3 L1045.7 368.8 L1044.3 368.2 L1042.8 367.7 L1041.4 367.1 L1040 366.5 L1038.5 366 L1037.1 365.4 L1035.6 364.8 L1034.2 364.3 L1032.8 363.7 L1031.3 363.1 L1029.9 362.5 L1028.4 361.9 L1027 361.4 L1025.5 360.8 L1024.1 360.2 L1022.6 359.6 L1021.2 359 L1019.7 358.4 L1018.3 357.8 L1016.8 357.1 L1015.4 356.5 L1013.9 355.9 L1012.5 355.3 L1011 354.7 L1009.6 354.1 L1008.1 353.4 L1006.7 352.8 L1005.2 352.2 L1003.7 351.5 L1002.3 350.9 L1000.8 350.3 L999.4 349.6 L997.9 349 L996.4 348.4 L995 347.7 L993.5 347.1 L992 346.4 L990.6 345.8 L989.1 345.1 L987.6 344.5 L986.2 343.8 L984.7 343.1 L983.2 342.5 L981.7 341.8 L980.3 341.2 L978.8 340.5 L977.3 339.8 L975.8 339.2 L974.4 338.5 L972.9 337.8 L971.4 337.2 L969.9 336.5 L968.4 335.8 L967 335.1 L965.5 334.5 L964 333.8 L962.5 333.1 L961 332.4 L959.5 331.7 L958.1 331.1 L956.6 330.4 L955.1 329.7 L953.6 329 L952.1 328.3 L950.6 327.6 L949.1 326.9 L947.6 326.3 L946.1 325.6 L944.7 324.9 L943.2 324.2 L941.7 323.5 L940.2 322.8 L938.7 322.1 L937.2 321.4 L935.7 320.8 L934.2 320.1 L932.7 319.4 L931.2 318.7 L929.7 318 L928.2 317.3 L926.7 316.6 L925.2 315.9 L923.7 315.2 L922.2 314.5 L920.7 313.8 L919.2 313.2 L917.7 312.5 L916.2 311.8 L914.7 311.1 L913.2 310.4 L911.7 309.7 L910.2 309 L908.7 308.3 L907.2 307.6 L905.7 306.9 L904.2 306.3 L902.7 305.6 L901.2 304.9 L899.7 304.2 L898.2 303.5 L896.7 302.8 L895.2 302.2 L893.7 301.5 L892.2 300.8 L890.7 300.1 L889.2 299.4 L887.7 298.8 L886.2 298.1 L884.7 297.4 L883.2 296.7 L881.7 296.1 L880.2 295.4 L878.7 294.7 L877.2 294.1 L875.7 293.4 L874.2 292.7 L872.7 292.1 L871.2 291.4 L869.7 290.7 L868.2 290.1 L866.7 289.4 L865.2 288.8 L863.7 288.1 L862.2 287.5 L860.7 286.8 L859.2 286.2 L857.8 285.5 L856.3 284.9 L854.8 284.2 L853.3 283.6 L851.8 283 L850.3 282.3 L848.8 281.7 L847.3 281.1 L845.8 280.4 L844.3 279.8 L842.8 279.2 L841.3 278.6 L839.9 278 L838.4 277.3 L836.9 276.7 L835.4 276.1 L833.9 275.5 L832.4 274.9 L830.9 274.3 L829.4 273.7 L828 273.1 L826.5 272.5 L825 271.9 L823.5 271.3 L822 270.7 L820.5 270.2 L819.1 269.6 L817.6 269 L816.1 268.4 L814.6 267.9 L813.1 267.3 L811.6 266.7 L810.2 266.2 L808.7 265.6 L807.2 265.1 L805.7 264.5 L804.2 264 L802.8 263.4 L801.3 262.9 L799.8 262.4 L798.3 261.8 L796.9 261.3 L795.4 260.8 L793.9 260.3 L792.4 259.8 L790.9 259.3 L789.5 258.8 L788 258.3 L786.5 257.8 L785 257.3 L783.6 256.8 L782.1 256.3 L780.6 255.8 L779.1 255.3 L777.6 254.9 L776.2 254.4 L774.7 253.9 L773.2 253.5 L771.7 253 L770.2 252.6 L768.8 252.1 L767.3 251.7 L765.8 251.3 L764.3 250.8 L762.8 250.4 L761.4 250 L759.9 249.6 L758.4 249.2 L756.9 248.7 L755.4 248.3 L753.9 248 L752.4 247.6 L751 247.2 L749.5 246.8 L748 246.4 L746.5 246.1 L745 245.7 L743.5 245.3 L742 245 L740.5 244.6 L739 244.3 L737.5 244 L736 243.6 L734.5 243.3 L733 243 L731.5 242.7 L730 242.4 L728.5 242.1 L727 241.8 L725.5 241.5 L723.9 241.2 L722.4 240.9 L720.9 240.6 L719.4 240.4 L717.9 240.1 L716.3 239.9 L714.8 239.6 L713.3 239.4 L711.8 239.1 L710.2 238.9 L708.7 238.7 L707.2 238.5 L705.6 238.2 L704.1 238 L702.5 237.8 L701 237.6 L699.4 237.5 L697.9 237.3 L696.3 237.1 L694.8 236.9 L693.2 236.8 L691.6 236.6 L690.1 236.5 L688.5 236.3 L686.9 236.2 L685.3 236.1 L683.8 235.9 L682.2 235.8 L680.6 235.7 L679 235.6 L677.4 235.5 L675.8 235.4 L674.2 235.3 L672.6 235.2 L671 235.2 L669.4 235.1 L667.8 235 L666.2 235 L664.5 235 L662.9 234.9 L661.3 234.9 L659.6 234.9 L658 234.8 L656.4 234.8 L654.7 234.8 L653.1 234.8 L651.4 234.8 L649.8 234.8 L648.1 234.9 L646.4 234.9 L644.8 234.9 L643.1 235 L641.4 235 L639.7 235.1 L638 235.1 L636.4 235.2 L634.7 235.3 L633 235.4 L631.3 235.4 L629.6 235.5 L627.8 235.6 L626.1 235.7 L624.4 235.9 L622.7 236 L621 236.1 L619.2 236.2 L617.5 236.4 L615.8 236.5 L614 236.7 L612.3 236.8 L610.5 237 L608.8 237.2 L607 237.3"/><path d="M993.3 383.3 L991.8 382.7 L990.4 382.2 L988.9 381.6 L987.5 381 L986 380.5 L984.6 379.9 L983.1 379.3 L981.7 378.7 L980.2 378.1 L978.8 377.5 L977.3 376.9 L975.9 376.3 L974.4 375.7 L972.9 375.1 L971.5 374.5 L970 373.8 L968.6 373.2 L967.1 372.6 L965.7 371.9 L964.2 371.3 L962.7 370.7 L961.3 370 L959.8 369.4 L958.4 368.7 L956.9 368.1 L955.5 367.4 L954 366.8 L952.5 366.1 L951.1 365.4 L949.6 364.7 L948.1 364.1 L946.7 363.4 L945.2 362.7 L943.8 362 L942.3 361.3 L940.8 360.7 L939.4 360 L937.9 359.3 L936.4 358.6 L935 357.9 L933.5 357.2 L932 356.5 L930.6 355.8 L929.1 355.1 L927.6 354.3 L926.2 353.6 L924.7 352.9 L923.2 352.2 L921.8 351.5 L920.3 350.7 L918.8 350 L917.4 349.3 L915.9 348.6 L914.4 347.8 L913 347.1 L911.5 346.4 L910 345.6 L908.5 344.9 L907.1 344.1 L905.6 343.4 L904.1 342.7 L902.7 341.9 L901.2 341.2 L899.7 340.4 L898.3 339.7 L896.8 338.9 L895.3 338.2 L893.8 337.4 L892.4 336.7 L890.9 335.9 L889.4 335.1 L888 334.4 L886.5 333.6 L885 332.9 L883.6 332.1 L882.1 331.3 L880.6 330.6 L879.2 329.8 L877.7 329.1 L876.2 328.3 L874.8 327.5 L873.3 326.8 L871.8 326 L870.4 325.2 L868.9 324.4 L867.4 323.7 L866 322.9 L864.5 322.1 L863 321.4 L861.6 320.6 L860.1 319.8 L858.6 319.1 L857.2 318.3 L855.7 317.5 L854.3 316.7 L852.8 316 L851.4 315.2 L849.9 314.4 L848.4 313.7 L847 312.9 L845.5 312.1 L844.1 311.4 L842.6 310.6 L841.2 309.8 L839.7 309 L838.3 308.3 L836.8 307.5 L835.4 306.7 L833.9 306 L832.5 305.2 L831 304.4 L829.6 303.7 L828.2 302.9 L826.7 302.2 L825.3 301.4 L823.8 300.6 L822.4 299.9 L821 299.1 L819.5 298.3 L818.1 297.6 L816.7 296.8 L815.2 296.1 L813.8 295.3 L812.4 294.6 L811 293.8 L809.5 293.1 L808.1 292.3 L806.7 291.6 L805.3 290.8 L803.8 290.1 L802.4 289.4 L801 288.6 L799.6 287.9 L798.2 287.1 L796.8 286.4 L795.3 285.7 L793.9 284.9 L792.5 284.2 L791.1 283.5 L789.7 282.8 L788.3 282 L786.9 281.3 L785.5 280.6 L784.1 279.9 L782.7 279.2 L781.3 278.4 L779.9 277.7 L778.5 277 L777.1 276.3 L775.7 275.6 L774.3 274.9 L772.9 274.2 L771.5 273.5 L770.2 272.8 L768.8 272.2 L767.4 271.5 L766 270.8 L764.6 270.1 L763.2 269.4 L761.9 268.8 L760.5 268.1 L759.1 267.4 L757.7 266.8 L756.3 266.1 L755 265.4 L753.6 264.8 L752.2 264.1 L750.9 263.5 L749.5 262.8 L748.1 262.2 L746.7 261.6 L745.4 260.9 L744 260.3 L742.6 259.7 L741.3 259.1 L739.9 258.4 L738.5 257.8 L737.2 257.2 L735.8 256.6 L734.5 256 L733.1 255.4 L731.7 254.8 L730.4 254.2 L729 253.6 L727.6 253.1 L726.3 252.5 L724.9 251.9 L723.6 251.3 L722.2 250.8 L720.8 250.2 L719.5 249.7 L718.1 249.1 L716.8 248.6 L715.4 248 L714 247.5 L712.7 247 L711.3 246.5 L709.9 245.9 L708.6 245.4 L707.2 244.9 L705.8 244.4 L704.5 243.9 L703.1 243.4 L701.7 242.9 L700.4 242.4 L699 242 L697.6 241.5 L696.3 241 L694.9 240.6 L693.5 240.1 L692.1 239.7 L690.8 239.2 L689.4 238.8 L688 238.3 L686.6 237.9 L685.2 237.5 L683.8 237.1 L682.5 236.7 L681.1 236.3 L679.7 235.9 L678.3 235.5 L676.9 235.1 L675.5 234.7 L674.1 234.4 L672.7 234 L671.3 233.6 L669.8 233.3 L668.4 232.9 L667 232.6 L665.6 232.3 L664.2 231.9 L662.7 231.6 L661.3 231.3 L659.9 231 L658.4 230.7 L657 230.4 L655.6 230.1 L654.1 229.8 L652.7 229.6 L651.2 229.3 L649.7 229 L648.3 228.8 L646.8 228.5 L645.3 228.3 L643.9 228.1 L642.4 227.9 L640.9 227.6 L639.4 227.4 L637.9 227.2 L636.4 227 L634.9 226.9 L633.4 226.7 L631.9 226.5 L630.4 226.3 L628.8 226.2 L627.3 226 L625.8 225.9 L624.2 225.7 L622.7 225.6 L621.1 225.5 L619.6 225.4 L618 225.3 L616.4 225.2 L614.9 225.1 L613.3 225 L611.7 224.9 L610.1 224.9 L608.5 224.8 L606.9 224.7 L605.3 224.7 L603.7 224.7 L602 224.6 L600.4 224.6 L598.8 224.6 L597.1 224.6 L595.5 224.6 L593.8 224.6 L592.2 224.6 L590.5 224.6 L588.8 224.7 L587.2 224.7 L585.5 224.7 L583.8 224.8 L582.1 224.9 L580.4 224.9 L578.7 225 L576.9 225.1 L575.2 225.2 L573.5 225.3 L571.7 225.4 L570 225.5 L568.2 225.6 L566.5 225.7 L564.7 225.9 L562.9 226 L561.2 226.2 L559.4 226.3 L557.6 226.5 L555.8 226.7 L554 226.8 L552.2 227"/><path d="M917 360.7 L915.4 360.2 L913.9 359.7 L912.3 359.1 L910.8 358.6 L909.2 358.1 L907.7 357.5 L906.1 357 L904.6 356.5 L903 355.9 L901.4 355.4 L899.9 354.8 L898.3 354.3 L896.8 353.7 L895.2 353.2 L893.7 352.6 L892.1 352.1 L890.6 351.5 L889 350.9 L887.4 350.4 L885.9 349.8 L884.3 349.2 L882.8 348.6 L881.2 348.1 L879.7 347.5 L878.1 346.9 L876.6 346.3 L875 345.8 L873.5 345.2 L871.9 344.6 L870.3 344 L868.8 343.4 L867.2 342.8 L865.7 342.2 L864.1 341.6 L862.6 341 L861 340.4 L859.5 339.8 L857.9 339.2 L856.4 338.6 L854.8 338 L853.3 337.4 L851.7 336.8 L850.2 336.2 L848.6 335.6 L847.1 335 L845.5 334.3 L844 333.7 L842.4 333.1 L840.9 332.5 L839.4 331.9 L837.8 331.3 L836.3 330.6 L834.7 330 L833.2 329.4 L831.6 328.8 L830.1 328.1 L828.6 327.5 L827 326.9 L825.5 326.3 L823.9 325.6 L822.4 325 L820.9 324.4 L819.3 323.8 L817.8 323.1 L816.3 322.5 L814.7 321.9 L813.2 321.3 L811.7 320.6 L810.1 320 L808.6 319.4 L807.1 318.7 L805.5 318.1 L804 317.5 L802.5 316.8 L801 316.2 L799.5 315.6 L797.9 315 L796.4 314.3 L794.9 313.7 L793.4 313.1 L791.9 312.4 L790.3 311.8 L788.8 311.2 L787.3 310.6 L785.8 309.9 L784.3 309.3 L782.8 308.7 L781.3 308 L779.8 307.4 L778.3 306.8 L776.8 306.2 L775.2 305.5 L773.7 304.9 L772.2 304.3 L770.7 303.7 L769.2 303.1 L767.8 302.4 L766.3 301.8 L764.8 301.2 L763.3 300.6 L761.8 300 L760.3 299.4 L758.8 298.7 L757.3 298.1 L755.8 297.5 L754.3 296.9 L752.9 296.3 L751.4 295.7 L749.9 295.1 L748.4 294.5 L746.9 293.9 L745.5 293.3 L744 292.7 L742.5 292.1 L741.1 291.5 L739.6 290.9 L738.1 290.3 L736.6 289.7 L735.2 289.1 L733.7 288.5 L732.2 287.9 L730.8 287.3 L729.3 286.8 L727.9 286.2 L726.4 285.6 L725 285 L723.5 284.5 L722 283.9 L720.6 283.3 L719.1 282.8 L717.7 282.2 L716.2 281.6 L714.8 281.1 L713.3 280.5 L711.9 280 L710.4 279.4 L709 278.8 L707.6 278.3 L706.1 277.8 L704.7 277.2 L703.2 276.7 L701.8 276.1 L700.4 275.6 L698.9 275.1 L697.5 274.5 L696.1 274 L694.6 273.5 L693.2 273 L691.8 272.5 L690.3 271.9 L688.9 271.4 L687.5 270.9 L686 270.4 L684.6 269.9 L683.2 269.4 L681.7 268.9 L680.3 268.4 L678.9 268 L677.5 267.5 L676 267 L674.6 266.5 L673.2 266 L671.8 265.6 L670.3 265.1 L668.9 264.6 L667.5 264.2 L666.1 263.7 L664.6 263.3 L663.2 262.8 L661.8 262.4 L660.3 261.9 L658.9 261.5 L657.5 261.1 L656.1 260.7 L654.6 260.2 L653.2 259.8 L651.8 259.4 L650.4 259 L648.9 258.6 L647.5 258.2 L646.1 257.8 L644.6 257.4 L643.2 257 L641.8 256.6 L640.3 256.2 L638.9 255.9 L637.5 255.5 L636 255.1 L634.6 254.8 L633.1 254.4 L631.7 254 L630.3 253.7 L628.8 253.4 L627.4 253 L625.9 252.7 L624.5 252.4 L623 252 L621.6 251.7 L620.1 251.4 L618.7 251.1 L617.2 250.8 L615.8 250.5 L614.3 250.2 L612.8 249.9 L611.4 249.6 L609.9 249.3 L608.4 249.1 L606.9 248.8 L605.5 248.5 L604 248.3 L602.5 248 L601 247.8 L599.5 247.5 L598.1 247.3 L596.6 247.1 L595.1 246.8 L593.6 246.6 L592.1 246.4 L590.6 246.2 L589.1 246 L587.6 245.8 L586 245.6 L584.5 245.4 L583 245.2 L581.5 245.1 L580 244.9 L578.4 244.7 L576.9 244.6 L575.4 244.4 L573.8 244.3 L572.3 244.1 L570.7 244 L569.2 243.9 L567.6 243.7 L566.1 243.6 L564.5 243.5 L562.9 243.4 L561.4 243.3 L559.8 243.2 L558.2 243.1 L556.6 243 L555 243 L553.4 242.9 L551.8 242.8 L550.2 242.8 L548.6 242.7 L547 242.7 L545.4 242.6 L543.8 242.6 L542.2 242.5 L540.5 242.5 L538.9 242.5 L537.3 242.5 L535.6 242.5 L534 242.5 L532.3 242.5 L530.7 242.5 L529 242.5 L527.3 242.5 L525.7 242.6 L524 242.6 L522.3 242.6 L520.6 242.7 L518.9 242.7 L517.2 242.8 L515.5 242.9 L513.8 242.9 L512.1 243 L510.4 243.1 L508.7 243.2 L506.9 243.3 L505.2 243.4 L503.5 243.5 L501.7 243.6 L500 243.7 L498.3 243.8 L496.5 243.9 L494.7 244.1 L493 244.2 L491.2 244.4 L489.4 244.5 L487.7 244.7 L485.9 244.8 L484.1 245 L482.3 245.2 L480.5 245.4 L478.7 245.5 L476.9 245.7 L475.1 245.9 L473.3 246.1 L471.5 246.3 L469.6 246.6 L467.8 246.8 L466 247 L464.2 247.2 L462.3 247.5 L460.5 247.7 L458.6 247.9 L456.8 248.2 L454.9 248.4 L453.1 248.7"/><path d="M900 375.5 L898.6 374.7 L897.1 373.8 L895.7 373 L894.3 372.2 L892.9 371.3 L891.4 370.5 L890 369.6 L888.6 368.7 L887.2 367.9 L885.7 367 L884.3 366.2 L882.9 365.3 L881.5 364.4 L880 363.6 L878.6 362.7 L877.2 361.8 L875.8 360.9 L874.3 360.1 L872.9 359.2 L871.5 358.3 L870.1 357.4 L868.7 356.5 L867.2 355.6 L865.8 354.7 L864.4 353.8 L863 352.9 L861.6 352 L860.2 351.1 L858.7 350.2 L857.3 349.3 L855.9 348.4 L854.5 347.5 L853.1 346.6 L851.7 345.7 L850.3 344.7 L848.9 343.8 L847.5 342.9 L846 342 L844.6 341.1 L843.2 340.1 L841.8 339.2 L840.4 338.3 L839 337.4 L837.6 336.4 L836.2 335.5 L834.8 334.6 L833.5 333.7 L832.1 332.7 L830.7 331.8 L829.3 330.9 L827.9 329.9 L826.5 329 L825.1 328.1 L823.7 327.1 L822.4 326.2 L821 325.3 L819.6 324.3 L818.2 323.4 L816.9 322.5 L815.5 321.5 L814.1 320.6 L812.8 319.6 L811.4 318.7 L810 317.8 L808.7 316.8 L807.3 315.9 L806 315 L804.6 314 L803.3 313.1 L801.9 312.2 L800.6 311.2 L799.2 310.3 L797.9 309.3 L796.5 308.4 L795.2 307.5 L793.9 306.5 L792.5 305.6 L791.2 304.7 L789.9 303.7 L788.6 302.8 L787.2 301.9 L785.9 300.9 L784.6 300 L783.3 299.1 L782 298.2 L780.7 297.2 L779.4 296.3 L778.1 295.4 L776.8 294.4 L775.5 293.5 L774.2 292.6 L772.9 291.7 L771.6 290.8 L770.3 289.8 L769.1 288.9 L767.8 288 L766.5 287.1 L765.2 286.2 L764 285.3 L762.7 284.4 L761.4 283.5 L760.2 282.6 L758.9 281.7 L757.7 280.8 L756.4 279.9 L755.2 279 L753.9 278.1 L752.7 277.2 L751.4 276.3 L750.2 275.4 L749 274.5 L747.7 273.6 L746.5 272.7 L745.3 271.9 L744 271 L742.8 270.1 L741.6 269.2 L740.4 268.4 L739.2 267.5 L738 266.6 L736.8 265.8 L735.6 264.9 L734.4 264.1 L733.2 263.2 L732 262.4 L730.8 261.5 L729.6 260.7 L728.4 259.8 L727.2 259 L726 258.2 L724.8 257.3 L723.7 256.5 L722.5 255.7 L721.3 254.9 L720.1 254.1 L719 253.2 L717.8 252.4 L716.6 251.6 L715.5 250.8 L714.3 250 L713.1 249.2 L712 248.5 L710.8 247.7 L709.7 246.9 L708.5 246.1 L707.4 245.4 L706.2 244.6 L705.1 243.8 L703.9 243.1 L702.8 242.3 L701.6 241.6 L700.5 240.8 L699.3 240.1 L698.2 239.4 L697 238.6 L695.9 237.9 L694.7 237.2 L693.6 236.5 L692.5 235.8 L691.3 235.1 L690.2 234.4 L689 233.7 L687.9 233 L686.7 232.3 L685.6 231.6 L684.5 231 L683.3 230.3 L682.2 229.7 L681 229 L679.9 228.4 L678.7 227.7 L677.6 227.1 L676.4 226.5 L675.3 225.8 L674.1 225.2 L673 224.6 L671.8 224 L670.7 223.4 L669.5 222.8 L668.3 222.3 L667.2 221.7 L666 221.1 L664.8 220.6 L663.7 220 L662.5 219.5 L661.3 218.9 L660.1 218.4 L658.9 217.9 L657.8 217.4 L656.6 216.9 L655.4 216.4 L654.2 215.9 L653 215.4 L651.7 214.9 L650.5 214.4 L649.3 214 L648.1 213.5 L646.9 213.1 L645.6 212.6 L644.4 212.2 L643.1 211.8 L641.9 211.4 L640.6 211 L639.4 210.6 L638.1 210.2 L636.8 209.8 L635.5 209.4 L634.3 209.1 L633 208.7 L631.7 208.4 L630.3 208 L629 207.7 L627.7 207.4 L626.4 207.1 L625 206.8 L623.7 206.5 L622.3 206.2 L621 205.9 L619.6 205.7 L618.2 205.4 L616.8 205.2 L615.4 205 L614 204.7 L612.6 204.5 L611.2 204.3 L609.7 204.1 L608.3 203.9 L606.8 203.7 L605.4 203.6 L603.9 203.4 L602.4 203.3 L600.9 203.1 L599.4 203 L597.9 202.9 L596.4 202.8 L594.8 202.7 L593.3 202.6 L591.7 202.5 L590.2 202.4 L588.6 202.4 L587 202.3 L585.4 202.3 L583.8 202.2 L582.2 202.2 L580.5 202.2 L578.9 202.2 L577.2 202.2 L575.6 202.2 L573.9 202.3 L572.2 202.3 L570.5 202.4 L568.8 202.4 L567 202.5 L565.3 202.6 L563.5 202.6 L561.8 202.7 L560 202.8 L558.2 203 L556.4 203.1 L554.6 203.2 L552.8 203.4 L550.9 203.5 L549.1 203.7 L547.2 203.9 L545.4 204.1 L543.5 204.2 L541.6 204.5 L539.7 204.7 L537.8 204.9 L535.8 205.1 L533.9 205.4 L532 205.6 L530 205.9 L528 206.1 L526 206.4 L524 206.7 L522 207 L520 207.3 L518 207.6 L516 207.9 L513.9 208.3 L511.8 208.6 L509.8 209 L507.7 209.3 L505.6 209.7 L503.5 210.1 L501.4 210.5 L499.3 210.9 L497.2 211.3 L495 211.7 L492.9 212.1 L490.7 212.5 L488.6 212.9 L486.4 213.4 L484.2 213.8 L482 214.3 L479.8 214.8 L477.6 215.2 L475.4 215.7 L473.2 216.2 L471 216.7"/><path d="M832.5 264 L831.3 263 L830.1 262 L828.9 261 L827.7 260 L826.5 259 L825.3 258 L824.1 257.1 L822.9 256.1 L821.7 255.1 L820.5 254.1 L819.3 253.2 L818.1 252.2 L816.9 251.2 L815.7 250.3 L814.5 249.3 L813.3 248.4 L812.1 247.4 L811 246.5 L809.8 245.5 L808.6 244.6 L807.4 243.7 L806.2 242.7 L805.1 241.8 L803.9 240.9 L802.7 240 L801.5 239.1 L800.4 238.1 L799.2 237.2 L798 236.3 L796.9 235.4 L795.7 234.6 L794.5 233.7 L793.4 232.8 L792.2 231.9 L791.1 231 L789.9 230.2 L788.7 229.3 L787.6 228.5 L786.4 227.6 L785.3 226.8 L784.1 225.9 L782.9 225.1 L781.8 224.3 L780.6 223.4 L779.5 222.6 L778.3 221.8 L777.2 221 L776 220.2 L774.9 219.4 L773.7 218.6 L772.5 217.8 L771.4 217.1 L770.2 216.3 L769.1 215.5 L767.9 214.8 L766.8 214 L765.6 213.3 L764.4 212.6 L763.3 211.8 L762.1 211.1 L761 210.4 L759.8 209.7 L758.6 209 L757.5 208.3 L756.3 207.6 L755.1 207 L753.9 206.3 L752.8 205.6 L751.6 205 L750.4 204.3 L749.2 203.7 L748 203.1 L746.8 202.5 L745.6 201.9 L744.4 201.3 L743.2 200.7 L742 200.1 L740.8 199.5 L739.6 199 L738.4 198.4 L737.2 197.8 L736 197.3 L734.7 196.8 L733.5 196.3 L732.3 195.8 L731 195.3 L729.8 194.8 L728.5 194.3 L727.3 193.8 L726 193.4 L724.7 192.9 L723.4 192.5 L722.2 192 L720.9 191.6 L719.6 191.2 L718.3 190.8 L717 190.4 L715.6 190.1 L714.3 189.7 L713 189.3 L711.6 189 L710.3 188.7 L708.9 188.3 L707.6 188 L706.2 187.7 L704.8 187.4 L703.4 187.2 L702 186.9 L700.6 186.6 L699.2 186.4 L697.7 186.2 L696.3 185.9 L694.8 185.7 L693.4 185.5 L691.9 185.3 L690.4 185.2 L688.9 185 L687.4 184.9 L685.9 184.7 L684.4 184.6 L682.9 184.5 L681.3 184.4 L679.8 184.3 L678.2 184.2 L676.6 184.2 L675 184.1 L673.4 184.1 L671.8 184 L670.2 184 L668.5 184 L666.9 184 L665.2 184 L663.5 184.1 L661.8 184.1 L660.1 184.2 L658.4 184.2 L656.7 184.3 L654.9 184.4 L653.2 184.5 L651.4 184.6 L649.6 184.7 L647.8 184.9 L646 185 L644.2 185.2 L642.4 185.4 L640.5 185.5 L638.6 185.7 L636.8 186 L634.9 186.2 L633 186.4 L631.1 186.6 L629.2 186.9 L627.2 187.2 L625.3 187.5 L623.3 187.7 L621.3 188 L619.3 188.4 L617.3 188.7 L615.3 189 L613.3 189.4 L611.3 189.7 L609.2 190.1 L607.2 190.5 L605.1 190.8 L603 191.2 L600.9 191.6 L598.8 192.1 L596.7 192.5 L594.6 192.9 L592.4 193.4 L590.3 193.9 L588.1 194.3 L585.9 194.8 L583.8 195.3 L581.6 195.8 L579.4 196.3 L577.2 196.8 L574.9 197.3 L572.7 197.9 L570.5 198.4 L568.2 199 L566 199.6 L563.7 200.1 L561.4 200.7 L559.2 201.3 L556.9 201.9 L554.6 202.5 L552.3 203.1 L550 203.8 L547.7 204.4 L545.4 205 L543 205.7 L540.7 206.3 L538.4 207 L536 207.7 L533.7 208.4 L531.3 209.1 L529 209.8 L526.6 210.5 L524.3 211.2 L521.9 211.9 L519.5 212.6 L517.1 213.4 L514.8 214.1 L512.4 214.8 L510 215.6 L507.6 216.4 L505.2 217.1 L502.9 217.9 L500.5 218.7 L498.1 219.5 L495.7 220.3 L493.3 221.1 L490.9 221.9 L488.5 222.7 L486.2 223.5 L483.8 224.3 L481.4 225.1 L479 226 L476.6 226.8 L474.2 227.7 L471.9 228.5 L469.5 229.4 L467.1 230.2 L464.8 231.1 L462.4 232 L460 232.9 L457.7 233.7 L455.3 234.6 L453 235.5 L450.6 236.4 L448.3 237.3 L446 238.2 L443.6 239.1 L441.3 240 L439 241 L436.7 241.9 L434.4 242.8 L432.1 243.7 L429.8 244.7 L427.5 245.6 L425.3 246.5 L423 247.5 L420.8 248.4 L418.5 249.4 L416.3 250.3 L414 251.3 L411.8 252.3 L409.6 253.2 L407.4 254.2 L405.2 255.2 L403 256.2 L400.9 257.1 L398.7 258.1 L396.6 259.1 L394.4 260.1 L392.3 261.1 L390.2 262.1 L388.1 263.1 L386 264.1 L383.9 265.1 L381.9 266.1 L379.8 267.1 L377.8 268.1 L375.8 269.1 L373.7 270.1 L371.7 271.1 L369.8 272.2 L367.8 273.2 L365.8 274.2 L363.9 275.2 L362 276.2 L360 277.3 L358.1 278.3 L356.3 279.3 L354.4 280.4 L352.5 281.4 L350.7 282.4 L348.9 283.5 L347.1 284.5 L345.3 285.6 L343.5 286.6 L341.7 287.7 L340 288.7 L338.3 289.7 L336.5 290.8 L334.9 291.8 L333.2 292.9 L331.5 293.9 L329.9 295 L328.2 296.1 L326.6 297.1 L325 298.2 L323.5 299.2 L321.9 300.3 L320.4 301.3 L318.9 302.4 L317.4 303.5 L315.9 304.5 L314.4 305.6 L313 306.6"/><path d="M815 310.8 L813.6 309.9 L812.2 309.1 L810.8 308.2 L809.5 307.3 L808.1 306.4 L806.7 305.6 L805.3 304.7 L804 303.8 L802.6 303 L801.2 302.1 L799.8 301.2 L798.5 300.4 L797.1 299.5 L795.7 298.6 L794.4 297.8 L793 296.9 L791.7 296.1 L790.3 295.2 L789 294.3 L787.6 293.5 L786.3 292.6 L784.9 291.8 L783.6 290.9 L782.2 290.1 L780.9 289.2 L779.6 288.4 L778.2 287.5 L776.9 286.7 L775.6 285.8 L774.3 285 L772.9 284.2 L771.6 283.3 L770.3 282.5 L769 281.6 L767.7 280.8 L766.3 280 L765 279.2 L763.7 278.3 L762.4 277.5 L761.1 276.7 L759.8 275.9 L758.5 275.1 L757.2 274.2 L755.9 273.4 L754.6 272.6 L753.3 271.8 L752 271 L750.8 270.2 L749.5 269.4 L748.2 268.6 L746.9 267.8 L745.6 267 L744.4 266.2 L743.1 265.5 L741.8 264.7 L740.5 263.9 L739.3 263.1 L738 262.4 L736.7 261.6 L735.5 260.8 L734.2 260.1 L732.9 259.3 L731.7 258.6 L730.4 257.8 L729.2 257.1 L727.9 256.3 L726.7 255.6 L725.4 254.8 L724.2 254.1 L722.9 253.4 L721.7 252.7 L720.4 251.9 L719.2 251.2 L717.9 250.5 L716.7 249.8 L715.5 249.1 L714.2 248.4 L713 247.7 L711.7 247 L710.5 246.3 L709.3 245.7 L708 245 L706.8 244.3 L705.6 243.6 L704.3 243 L703.1 242.3 L701.9 241.7 L700.6 241 L699.4 240.4 L698.2 239.8 L696.9 239.1 L695.7 238.5 L694.4 237.9 L693.2 237.3 L692 236.7 L690.7 236.1 L689.5 235.5 L688.3 234.9 L687 234.3 L685.8 233.7 L684.5 233.1 L683.3 232.6 L682.1 232 L680.8 231.4 L679.6 230.9 L678.3 230.4 L677.1 229.8 L675.8 229.3 L674.6 228.8 L673.3 228.2 L672 227.7 L670.8 227.2 L669.5 226.7 L668.2 226.2 L667 225.8 L665.7 225.3 L664.4 224.8 L663.1 224.3 L661.9 223.9 L660.6 223.4 L659.3 223 L658 222.6 L656.7 222.1 L655.4 221.7 L654.1 221.3 L652.8 220.9 L651.5 220.5 L650.2 220.1 L648.8 219.7 L647.5 219.3 L646.2 219 L644.9 218.6 L643.5 218.3 L642.2 217.9 L640.8 217.6 L639.5 217.2 L638.1 216.9 L636.7 216.6 L635.4 216.3 L634 216 L632.6 215.7 L631.2 215.4 L629.8 215.2 L628.4 214.9 L627 214.7 L625.6 214.4 L624.1 214.2 L622.7 213.9 L621.3 213.7 L619.8 213.5 L618.4 213.3 L616.9 213.1 L615.5 212.9 L614 212.7 L612.5 212.6 L611 212.4 L609.5 212.2 L608 212.1 L606.5 212 L605 211.8 L603.4 211.7 L601.9 211.6 L600.3 211.5 L598.8 211.4 L597.2 211.3 L595.6 211.3 L594.1 211.2 L592.5 211.1 L590.9 211.1 L589.3 211.1 L587.6 211 L586 211 L584.4 211 L582.7 211 L581.1 211 L579.4 211 L577.7 211.1 L576 211.1 L574.4 211.1 L572.7 211.2 L570.9 211.2 L569.2 211.3 L567.5 211.4 L565.7 211.5 L564 211.6 L562.2 211.7 L560.5 211.8 L558.7 211.9 L556.9 212 L555.1 212.2 L553.3 212.3 L551.5 212.5 L549.6 212.7 L547.8 212.8 L546 213 L544.1 213.2 L542.2 213.4 L540.4 213.6 L538.5 213.8 L536.6 214.1 L534.7 214.3 L532.8 214.5 L530.9 214.8 L528.9 215.1 L527 215.3 L525.1 215.6 L523.1 215.9 L521.1 216.2 L519.2 216.5 L517.2 216.8 L515.2 217.1 L513.2 217.4 L511.2 217.8 L509.2 218.1 L507.2 218.5 L505.1 218.8 L503.1 219.2 L501 219.5 L499 219.9 L496.9 220.3 L494.9 220.7 L492.8 221.1 L490.7 221.5 L488.6 221.9 L486.5 222.4 L484.4 222.8 L482.3 223.2 L480.2 223.7 L478.1 224.1 L476 224.6 L473.8 225.1 L471.7 225.5 L469.6 226 L467.4 226.5 L465.3 227 L463.1 227.5 L460.9 228 L458.8 228.5 L456.6 229 L454.4 229.6 L452.3 230.1 L450.1 230.6 L447.9 231.2 L445.7 231.7 L443.5 232.3 L441.3 232.9 L439.1 233.4 L436.9 234 L434.7 234.6 L432.5 235.2 L430.3 235.8 L428.1 236.4 L425.9 237 L423.7 237.6 L421.5 238.2 L419.2 238.8 L417 239.5 L414.8 240.1 L412.6 240.7 L410.4 241.4 L408.2 242 L406 242.7 L403.8 243.3 L401.5 244 L399.3 244.7 L397.1 245.3 L394.9 246 L392.7 246.7 L390.5 247.4 L388.3 248.1 L386.1 248.8 L383.9 249.5 L381.7 250.2 L379.5 250.9 L377.3 251.6 L375.1 252.3 L372.9 253 L370.8 253.8 L368.6 254.5 L366.4 255.2 L364.2 256 L362.1 256.7 L359.9 257.5 L357.8 258.2 L355.6 259 L353.5 259.7 L351.3 260.5 L349.2 261.2 L347.1 262 L345 262.8 L342.9 263.5 L340.8 264.3 L338.7 265.1 L336.6 265.9 L334.5 266.7 L332.4 267.5 L330.3 268.2 L328.3 269 L326.2 269.8 L324.2 270.6 L322.1 271.4"/><path d="M805.8 327.5 L804.5 326.4 L803.3 325.3 L802 324.2 L800.7 323.2 L799.5 322.1 L798.2 321 L797 319.9 L795.7 318.8 L794.5 317.7 L793.2 316.6 L792 315.5 L790.8 314.4 L789.5 313.4 L788.3 312.3 L787.1 311.2 L785.8 310.1 L784.6 309 L783.4 307.9 L782.2 306.8 L781 305.7 L779.8 304.7 L778.6 303.6 L777.4 302.5 L776.2 301.4 L775 300.3 L773.8 299.2 L772.7 298.2 L771.5 297.1 L770.3 296 L769.2 294.9 L768 293.8 L766.8 292.8 L765.7 291.7 L764.5 290.6 L763.4 289.5 L762.3 288.5 L761.1 287.4 L760 286.3 L758.9 285.2 L757.7 284.2 L756.6 283.1 L755.5 282 L754.4 281 L753.3 279.9 L752.2 278.9 L751.1 277.8 L750 276.7 L748.9 275.7 L747.8 274.6 L746.7 273.6 L745.7 272.5 L744.6 271.5 L743.5 270.4 L742.5 269.4 L741.4 268.4 L740.4 267.3 L739.3 266.3 L738.3 265.3 L737.2 264.2 L736.2 263.2 L735.1 262.2 L734.1 261.1 L733.1 260.1 L732.1 259.1 L731.1 258.1 L730 257.1 L729 256.1 L728 255.1 L727 254.1 L726 253.1 L725 252.1 L724 251.1 L723.1 250.1 L722.1 249.1 L721.1 248.1 L720.1 247.1 L719.2 246.1 L718.2 245.2 L717.2 244.2 L716.3 243.2 L715.3 242.3 L714.3 241.3 L713.4 240.4 L712.4 239.4 L711.5 238.5 L710.5 237.5 L709.6 236.6 L708.7 235.7 L707.7 234.7 L706.8 233.8 L705.9 232.9 L704.9 232 L704 231.1 L703.1 230.2 L702.2 229.3 L701.2 228.4 L700.3 227.5 L699.4 226.6 L698.5 225.7 L697.6 224.9 L696.7 224 L695.7 223.1 L694.8 222.3 L693.9 221.4 L693 220.6 L692.1 219.7 L691.2 218.9 L690.3 218.1 L689.4 217.2 L688.5 216.4 L687.6 215.6 L686.6 214.8 L685.7 214 L684.8 213.2 L683.9 212.5 L683 211.7 L682.1 210.9 L681.2 210.2 L680.2 209.4 L679.3 208.7 L678.4 207.9 L677.5 207.2 L676.6 206.5 L675.6 205.7 L674.7 205 L673.8 204.3 L672.8 203.6 L671.9 203 L670.9 202.3 L670 201.6 L669 200.9 L668.1 200.3 L667.1 199.7 L666.1 199 L665.2 198.4 L664.2 197.8 L663.2 197.2 L662.2 196.6 L661.2 196 L660.2 195.4 L659.2 194.8 L658.2 194.3 L657.2 193.7 L656.1 193.2 L655.1 192.6 L654 192.1 L653 191.6 L651.9 191.1 L650.9 190.6 L649.8 190.1 L648.7 189.7 L647.6 189.2 L646.5 188.7 L645.4 188.3 L644.2 187.9 L643.1 187.5 L641.9 187 L640.8 186.7 L639.6 186.3 L638.4 185.9 L637.2 185.5 L636 185.2 L634.8 184.8 L633.6 184.5 L632.3 184.2 L631.1 183.9 L629.8 183.6 L628.5 183.3 L627.2 183 L625.9 182.8 L624.6 182.5 L623.2 182.3 L621.9 182.1 L620.5 181.9 L619.1 181.7 L617.7 181.5 L616.3 181.3 L614.9 181.1 L613.4 181 L612 180.9 L610.5 180.7 L609 180.6 L607.5 180.5 L606 180.4 L604.4 180.4 L602.8 180.3 L601.3 180.2 L599.7 180.2 L598.1 180.2 L596.4 180.2 L594.8 180.2 L593.1 180.2 L591.4 180.2 L589.7 180.3 L588 180.3 L586.3 180.4 L584.5 180.4 L582.7 180.5 L580.9 180.6 L579.1 180.7 L577.3 180.9 L575.4 181 L573.6 181.2 L571.7 181.3 L569.8 181.5 L567.9 181.7 L565.9 181.9 L564 182.1 L562 182.3 L560 182.6 L558 182.8 L556 183.1 L553.9 183.3 L551.9 183.6 L549.8 183.9 L547.7 184.2 L545.6 184.5 L543.5 184.9 L541.3 185.2 L539.1 185.6 L537 185.9 L534.8 186.3 L532.6 186.7 L530.3 187.1 L528.1 187.5 L525.8 187.9 L523.6 188.4 L521.3 188.8 L519 189.3 L516.6 189.7 L514.3 190.2 L512 190.7 L509.6 191.2 L507.2 191.7 L504.8 192.2 L502.4 192.7 L500 193.2 L497.6 193.8 L495.2 194.3 L492.7 194.9 L490.2 195.5 L487.8 196.1 L485.3 196.6 L482.8 197.2 L480.3 197.9 L477.8 198.5 L475.2 199.1 L472.7 199.7 L470.2 200.4 L467.6 201 L465.1 201.7 L462.5 202.4 L459.9 203 L457.3 203.7 L454.8 204.4 L452.2 205.1 L449.6 205.8 L446.9 206.6 L444.3 207.3 L441.7 208 L439.1 208.8 L436.5 209.5 L433.8 210.3 L431.2 211 L428.6 211.8 L425.9 212.6 L423.3 213.3 L420.6 214.1 L418 214.9 L415.4 215.7 L412.7 216.5 L410.1 217.4 L407.4 218.2 L404.8 219 L402.1 219.8 L399.5 220.7 L396.8 221.5 L394.2 222.4 L391.5 223.2 L388.9 224.1 L386.3 225 L383.6 225.8 L381 226.7 L378.4 227.6 L375.7 228.5 L373.1 229.4 L370.5 230.3 L367.9 231.2 L365.3 232.1 L362.7 233M1439.8 233.9 L1439.6 234.9 L1439.4 235.8 L1439.3 236.7 L1439.1 237.7 L1438.9 238.6 L1438.7 239.5 L1438.5 240.5 L1438.3 241.4 L1438.1 242.4 L1437.9 243.4"/><path d="M790.8 337.5 L789.2 336.9 L787.6 336.3 L786.1 335.7 L784.5 335.1 L782.9 334.5 L781.4 333.9 L779.8 333.3 L778.2 332.7 L776.7 332.1 L775.1 331.5 L773.5 330.9 L772 330.3 L770.4 329.7 L768.8 329.1 L767.3 328.5 L765.7 327.9 L764.2 327.3 L762.6 326.7 L761 326 L759.5 325.4 L757.9 324.8 L756.4 324.2 L754.8 323.6 L753.3 323 L751.8 322.4 L750.2 321.8 L748.7 321.1 L747.1 320.5 L745.6 319.9 L744 319.3 L742.5 318.7 L741 318.1 L739.4 317.5 L737.9 316.8 L736.4 316.2 L734.9 315.6 L733.3 315 L731.8 314.4 L730.3 313.8 L728.8 313.2 L727.2 312.5 L725.7 311.9 L724.2 311.3 L722.7 310.7 L721.2 310.1 L719.7 309.5 L718.2 308.9 L716.7 308.2 L715.2 307.6 L713.7 307 L712.2 306.4 L710.7 305.8 L709.2 305.2 L707.7 304.6 L706.2 304 L704.7 303.4 L703.2 302.8 L701.7 302.2 L700.2 301.6 L698.7 301 L697.3 300.4 L695.8 299.8 L694.3 299.2 L692.8 298.6 L691.3 298 L689.9 297.4 L688.4 296.8 L686.9 296.2 L685.5 295.6 L684 295 L682.5 294.4 L681.1 293.8 L679.6 293.2 L678.2 292.7 L676.7 292.1 L675.3 291.5 L673.8 290.9 L672.4 290.3 L670.9 289.8 L669.5 289.2 L668 288.6 L666.6 288 L665.1 287.5 L663.7 286.9 L662.3 286.3 L660.8 285.8 L659.4 285.2 L658 284.7 L656.5 284.1 L655.1 283.6 L653.7 283 L652.3 282.5 L650.8 281.9 L649.4 281.4 L648 280.8 L646.6 280.3 L645.1 279.7 L643.7 279.2 L642.3 278.7 L640.9 278.1 L639.5 277.6 L638.1 277.1 L636.7 276.6 L635.3 276.1 L633.8 275.5 L632.4 275 L631 274.5 L629.6 274 L628.2 273.5 L626.8 273 L625.4 272.5 L624 272 L622.6 271.5 L621.2 271 L619.8 270.6 L618.4 270.1 L617 269.6 L615.6 269.1 L614.2 268.6 L612.8 268.2 L611.4 267.7 L610 267.3 L608.6 266.8 L607.2 266.3 L605.8 265.9 L604.4 265.4 L603 265 L601.6 264.6 L600.2 264.1 L598.9 263.7 L597.5 263.3 L596.1 262.8 L594.7 262.4 L593.3 262 L591.9 261.6 L590.5 261.2 L589.1 260.8 L587.7 260.4 L586.3 260 L584.9 259.6 L583.5 259.2 L582.1 258.8 L580.7 258.4 L579.3 258.1 L577.8 257.7 L576.4 257.3 L575 257 L573.6 256.6 L572.2 256.3 L570.8 255.9 L569.4 255.6 L568 255.2 L566.6 254.9 L565.1 254.6 L563.7 254.2 L562.3 253.9 L560.9 253.6 L559.4 253.3 L558 253 L556.6 252.7 L555.1 252.4 L553.7 252.1 L552.3 251.8 L550.8 251.5 L549.4 251.3 L547.9 251 L546.5 250.7 L545 250.5 L543.6 250.2 L542.1 250 L540.7 249.7 L539.2 249.5 L537.7 249.2 L536.3 249 L534.8 248.8 L533.3 248.6 L531.8 248.3 L530.4 248.1 L528.9 247.9 L527.4 247.7 L525.9 247.5 L524.4 247.4 L522.9 247.2 L521.4 247 L519.9 246.8 L518.4 246.7 L516.9 246.5 L515.3 246.3 L513.8 246.2 L512.3 246 L510.7 245.9 L509.2 245.8 L507.7 245.7 L506.1 245.5 L504.6 245.4 L503 245.3 L501.5 245.2 L499.9 245.1 L498.3 245 L496.8 244.9 L495.2 244.8 L493.6 244.8 L492 244.7 L490.4 244.6 L488.8 244.6 L487.2 244.5 L485.6 244.5 L484 244.4 L482.4 244.4 L480.8 244.4 L479.1 244.3 L477.5 244.3 L475.9 244.3 L474.2 244.3 L472.6 244.3 L470.9 244.3 L469.3 244.3 L467.6 244.3 L465.9 244.4 L464.3 244.4 L462.6 244.4 L460.9 244.5 L459.2 244.5 L457.5 244.6 L455.8 244.6 L454.1 244.7 L452.4 244.7 L450.7 244.8 L449 244.9 L447.2 245 L445.5 245.1 L443.8 245.2 L442 245.3 L440.3 245.4 L438.5 245.5 L436.8 245.6 L435 245.7 L433.2 245.9 L431.5 246 L429.7 246.1 L427.9 246.3 L426.1 246.4 L424.3 246.6 L422.5 246.8 L420.7 246.9 L418.9 247.1 L417.1 247.3 L415.3 247.5 L413.4 247.7 L411.6 247.9 L409.8 248.1 L407.9 248.3 L406.1 248.5 L404.3 248.7 L402.4 248.9 L400.5 249.2 L398.7 249.4 L396.8 249.6 L395 249.9 L393.1 250.1 L391.2 250.4 L389.3 250.6 L387.4 250.9 L385.5 251.2 L383.7 251.4 L381.8 251.7 L379.9 252 L378 252.3 L376 252.6 L374.1 252.9 L372.2 253.2 L370.3 253.5 L368.4 253.8 L366.5 254.1 L364.5 254.5 L362.6 254.8 L360.7 255.1 L358.7 255.5 L356.8 255.8 L354.9 256.1 L352.9 256.5 L351 256.8 L349 257.2 L347.1 257.6 L345.1 257.9 L343.2 258.3 L341.2 258.7 L339.3 259.1 L337.3 259.5 L335.3 259.9 L333.4 260.2 L331.4 260.6M1469.5 261 L1468.3 261.5 L1467.1 261.9 L1465.8 262.3 L1464.6 262.7 L1463.4 263.1 L1462.2 263.5 L1460.9 264 L1459.7 264.4"/><path d="M730 323.3 L728.6 322.4 L727.2 321.5 L725.8 320.6 L724.4 319.7 L723 318.8 L721.6 318 L720.2 317.1 L718.8 316.2 L717.4 315.3 L716 314.4 L714.6 313.5 L713.3 312.6 L711.9 311.7 L710.5 310.8 L709.2 309.9 L707.8 309.1 L706.5 308.2 L705.1 307.3 L703.8 306.4 L702.4 305.5 L701.1 304.6 L699.8 303.7 L698.5 302.8 L697.1 302 L695.8 301.1 L694.5 300.2 L693.2 299.3 L691.9 298.4 L690.6 297.6 L689.3 296.7 L688 295.8 L686.7 294.9 L685.4 294 L684.2 293.2 L682.9 292.3 L681.6 291.4 L680.3 290.6 L679.1 289.7 L677.8 288.8 L676.6 288 L675.3 287.1 L674.1 286.2 L672.8 285.4 L671.6 284.5 L670.4 283.7 L669.2 282.8 L667.9 281.9 L666.7 281.1 L665.5 280.2 L664.3 279.4 L663.1 278.5 L661.9 277.7 L660.7 276.9 L659.5 276 L658.3 275.2 L657.1 274.4 L655.9 273.5 L654.8 272.7 L653.6 271.9 L652.4 271 L651.3 270.2 L650.1 269.4 L648.9 268.6 L647.8 267.8 L646.6 267 L645.5 266.2 L644.3 265.4 L643.2 264.6 L642.1 263.8 L640.9 263 L639.8 262.2 L638.7 261.4 L637.5 260.6 L636.4 259.8 L635.3 259 L634.2 258.3 L633.1 257.5 L632 256.7 L630.9 256 L629.8 255.2 L628.7 254.4 L627.6 253.7 L626.5 252.9 L625.4 252.2 L624.3 251.5 L623.2 250.7 L622.1 250 L621 249.3 L619.9 248.5 L618.8 247.8 L617.8 247.1 L616.7 246.4 L615.6 245.7 L614.5 245 L613.4 244.3 L612.4 243.6 L611.3 242.9 L610.2 242.2 L609.1 241.6 L608.1 240.9 L607 240.2 L605.9 239.6 L604.8 238.9 L603.8 238.3 L602.7 237.6 L601.6 237 L600.5 236.3 L599.5 235.7 L598.4 235.1 L597.3 234.5 L596.2 233.8 L595.2 233.2 L594.1 232.6 L593 232 L591.9 231.5 L590.8 230.9 L589.7 230.3 L588.7 229.7 L587.6 229.2 L586.5 228.6 L585.4 228.1 L584.3 227.5 L583.2 227 L582.1 226.4 L581 225.9 L579.8 225.4 L578.7 224.9 L577.6 224.4 L576.5 223.9 L575.4 223.4 L574.2 222.9 L573.1 222.4 L571.9 222 L570.8 221.5 L569.6 221 L568.5 220.6 L567.3 220.2 L566.2 219.7 L565 219.3 L563.8 218.9 L562.6 218.5 L561.4 218.1 L560.2 217.7 L559 217.3 L557.8 216.9 L556.6 216.5 L555.4 216.2 L554.2 215.8 L552.9 215.5 L551.7 215.1 L550.4 214.8 L549.2 214.5 L547.9 214.2 L546.6 213.9 L545.3 213.6 L544 213.3 L542.7 213 L541.4 212.7 L540.1 212.4 L538.7 212.2 L537.4 211.9 L536.1 211.7 L534.7 211.5 L533.3 211.3 L531.9 211 L530.5 210.8 L529.1 210.7 L527.7 210.5 L526.3 210.3 L524.9 210.1 L523.4 210 L522 209.8 L520.5 209.7 L519 209.5 L517.6 209.4 L516.1 209.3 L514.5 209.2 L513 209.1 L511.5 209 L509.9 208.9 L508.4 208.9 L506.8 208.8 L505.2 208.8 L503.6 208.7 L502 208.7 L500.4 208.7 L498.8 208.7 L497.1 208.7 L495.5 208.7 L493.8 208.7 L492.1 208.7 L490.4 208.7 L488.7 208.8 L487 208.8 L485.3 208.9 L483.5 209 L481.8 209 L480 209.1 L478.2 209.2 L476.4 209.3 L474.6 209.4 L472.8 209.6 L471 209.7 L469.1 209.8 L467.3 210 L465.4 210.2 L463.5 210.3 L461.6 210.5 L459.7 210.7 L457.8 210.9 L455.9 211.1 L453.9 211.3 L452 211.5 L450 211.8 L448 212 L446 212.2 L444 212.5 L442 212.8 L440 213 L437.9 213.3 L435.9 213.6 L433.8 213.9 L431.7 214.2 L429.6 214.5 L427.6 214.9 L425.4 215.2 L423.3 215.5 L421.2 215.9 L419.1 216.2 L416.9 216.6 L414.8 217 L412.6 217.4 L410.4 217.7 L408.2 218.1 L406 218.6 L403.8 219 L401.6 219.4 L399.4 219.8 L397.2 220.2 L394.9 220.7 L392.7 221.1 L390.4 221.6 L388.2 222.1 L385.9 222.5 L383.6 223 L381.3 223.5 L379 224 L376.7 224.5 L374.4 225M1428.5 225.5 L1427.6 226 L1426.8 226.5 L1426 227.1 L1425.2 227.6 L1424.4 228.2 L1423.6 228.7 L1422.8 229.3 L1422.1 229.8 L1421.3 230.4 L1420.5 231 L1419.7 231.6 L1419 232.2 L1418.2 232.8 L1417.4 233.4 L1416.7 234 L1415.9 234.6 L1415.1 235.2 L1414.4 235.8 L1413.6 236.5 L1412.9 237.1 L1412.1 237.7 L1411.4 238.4 L1410.6 239 L1409.9 239.7 L1409.1 240.4 L1408.4 241 L1407.6 241.7 L1406.8 242.4 L1406.1 243.1 L1405.3 243.7 L1404.6 244.4 L1403.8 245.1 L1403 245.8 L1402.3 246.5 L1401.5 247.3 L1400.7 248 L1400 248.7 L1399.2 249.4 L1398.4 250.1 L1397.6 250.9 L1396.9 251.6 L1396.1 252.3 L1395.3 253.1 L1394.5 253.8 L1393.7 254.6 L1392.9 255.4 L1392.1 256.1 L1391.2 256.9 L1390.4 257.6 L1389.6 258.4 L1388.8 259.2"/><path d="M712.7 335.3 L711.2 334.4 L709.7 333.6 L708.2 332.7 L706.8 331.9 L705.3 331 L703.8 330.1 L702.3 329.3 L700.9 328.4 L699.4 327.6 L698 326.7 L696.5 325.8 L695.1 325 L693.6 324.1 L692.2 323.2 L690.7 322.4 L689.3 321.5 L687.9 320.6 L686.5 319.8 L685.1 318.9 L683.6 318 L682.2 317.2 L680.8 316.3 L679.4 315.4 L678 314.6 L676.6 313.7 L675.3 312.8 L673.9 312 L672.5 311.1 L671.1 310.2 L669.8 309.4 L668.4 308.5 L667 307.6 L665.7 306.8 L664.3 305.9 L663 305 L661.7 304.2 L660.3 303.3 L659 302.5 L657.7 301.6 L656.4 300.7 L655.1 299.9 L653.7 299 L652.4 298.2 L651.1 297.3 L649.9 296.5 L648.6 295.6 L647.3 294.8 L646 293.9 L644.7 293 L643.5 292.2 L642.2 291.4 L640.9 290.5 L639.7 289.7 L638.4 288.8 L637.2 288 L635.9 287.1 L634.7 286.3 L633.5 285.5 L632.3 284.6 L631 283.8 L629.8 283 L628.6 282.1 L627.4 281.3 L626.2 280.5 L625 279.7 L623.8 278.8 L622.6 278 L621.4 277.2 L620.2 276.4 L619.1 275.6 L617.9 274.8 L616.7 274 L615.6 273.2 L614.4 272.4 L613.3 271.6 L612.1 270.8 L611 270 L609.8 269.2 L608.7 268.4 L607.5 267.6 L606.4 266.8 L605.3 266.1 L604.2 265.3 L603 264.5 L601.9 263.7 L600.8 263 L599.7 262.2 L598.6 261.5 L597.5 260.7 L596.4 259.9 L595.3 259.2 L594.2 258.5 L593.1 257.7 L592 257 L590.9 256.2 L589.8 255.5 L588.8 254.8 L587.7 254.1 L586.6 253.3 L585.5 252.6 L584.5 251.9 L583.4 251.2 L582.3 250.5 L581.2 249.8 L580.2 249.1 L579.1 248.4 L578.1 247.7 L577 247.1 L575.9 246.4 L574.9 245.7 L573.8 245 L572.8 244.4 L571.7 243.7 L570.6 243.1 L569.6 242.4 L568.5 241.8 L567.5 241.2 L566.4 240.5 L565.4 239.9 L564.3 239.3 L563.2 238.7 L562.2 238.1 L561.1 237.4 L560.1 236.8 L559 236.3 L557.9 235.7 L556.9 235.1 L555.8 234.5 L554.7 233.9 L553.7 233.4 L552.6 232.8 L551.5 232.3 L550.5 231.7 L549.4 231.2 L548.3 230.6 L547.2 230.1 L546.1 229.6 L545 229.1 L543.9 228.6 L542.8 228.1 L541.7 227.6 L540.6 227.1 L539.5 226.6 L538.4 226.1 L537.3 225.7 L536.2 225.2 L535 224.7 L533.9 224.3 L532.8 223.9 L531.6 223.4 L530.5 223 L529.3 222.6 L528.2 222.2 L527 221.8 L525.8 221.4 L524.6 221 L523.5 220.6 L522.3 220.2 L521.1 219.8 L519.9 219.5 L518.6 219.1 L517.4 218.8 L516.2 218.5 L515 218.1 L513.7 217.8 L512.5 217.5 L511.2 217.2 L509.9 216.9 L508.6 216.6 L507.4 216.3 L506.1 216.1 L504.7 215.8 L503.4 215.5 L502.1 215.3 L500.8 215 L499.4 214.8 L498.1 214.6 L496.7 214.4 L495.3 214.2 L494 214 L492.6 213.8 L491.1 213.6 L489.7 213.4 L488.3 213.3 L486.9 213.1 L485.4 213 L484 212.8 L482.5 212.7 L481 212.6 L479.5 212.5 L478 212.4 L476.5 212.3 L474.9 212.2 L473.4 212.1 L471.8 212.1 L470.3 212 L468.7 212 L467.1 211.9 L465.5 211.9 L463.9 211.9 L462.3 211.8 L460.6 211.8 L459 211.8 L457.3 211.9 L455.6 211.9 L453.9 211.9 L452.2 212 L450.5 212 L448.8 212.1 L447 212.1 L445.3 212.2 L443.5 212.3 L441.7 212.4 L439.9 212.5 L438.1 212.6 L436.3 212.7 L434.5 212.8 L432.6 213 L430.7 213.1 L428.9 213.3 L427 213.4 L425.1 213.6 L423.2 213.8 L421.3 214 L419.3 214.2 L417.4 214.4 L415.4 214.6 L413.5 214.8 L411.5 215 L409.5 215.3 L407.5 215.5 L405.5 215.8 L403.4 216 L401.4 216.3 L399.3 216.6 L397.3 216.9 L395.2 217.2 L393.1 217.5 L391 217.8 L388.9 218.1 L386.8 218.4 L384.6 218.8 L382.5 219.1M1418.7 219.5 L1417.7 219.8 L1416.6 220.2 L1415.6 220.6 L1414.5 221 L1413.5 221.3 L1412.5 221.7 L1411.5 222.1 L1410.5 222.6 L1409.5 223 L1408.5 223.4 L1407.5 223.8 L1406.6 224.3 L1405.6 224.7 L1404.7 225.2 L1403.7 225.6 L1402.8 226.1 L1401.8 226.6 L1400.9 227.1 L1400 227.5 L1399.1 228 L1398.2 228.5 L1397.3 229.1 L1396.4 229.6 L1395.5 230.1 L1394.6 230.6 L1393.7 231.2 L1392.8 231.7 L1391.9 232.2 L1391 232.8 L1390.2 233.3 L1389.3 233.9 L1388.4 234.5 L1387.5 235.1 L1386.7 235.6 L1385.8 236.2 L1385 236.8 L1384.1 237.4 L1383.2 238 L1382.4 238.6 L1381.5 239.2 L1380.7 239.9 L1379.8 240.5 L1379 241.1 L1378.1 241.8 L1377.3 242.4 L1376.4 243.1 L1375.6 243.7 L1374.7 244.4 L1373.9 245 L1373 245.7 L1372.1 246.4 L1371.3 247 L1370.4 247.7 L1369.6 248.4 L1368.7 249.1 L1367.8 249.8 L1367 250.5"/><path d="M645.3 350.7 L643.9 349.5 L642.4 348.4 L641 347.2 L639.6 346 L638.2 344.8 L636.8 343.7 L635.4 342.5 L634 341.3 L632.6 340.1 L631.3 339 L629.9 337.8 L628.6 336.6 L627.3 335.4 L625.9 334.3 L624.6 333.1 L623.3 331.9 L622.1 330.7 L620.8 329.5 L619.5 328.3 L618.3 327.2 L617 326 L615.8 324.8 L614.6 323.6 L613.4 322.4 L612.2 321.2 L611 320.1 L609.8 318.9 L608.6 317.7 L607.5 316.5 L606.3 315.3 L605.2 314.1 L604.1 312.9 L603 311.8 L601.9 310.6 L600.8 309.4 L599.7 308.2 L598.7 307 L597.6 305.8 L596.6 304.7 L595.6 303.5 L594.6 302.3 L593.5 301.1 L592.6 299.9 L591.6 298.7 L590.6 297.6 L589.7 296.4 L588.7 295.2 L587.8 294 L586.9 292.9 L586 291.7 L585.1 290.5 L584.2 289.3 L583.3 288.2 L582.4 287 L581.6 285.8 L580.8 284.6 L579.9 283.5 L579.1 282.3 L578.3 281.1 L577.5 280 L576.7 278.8 L576 277.7 L575.2 276.5 L574.5 275.3 L573.7 274.2 L573 273 L572.3 271.9 L571.6 270.7 L570.9 269.6 L570.3 268.4 L569.6 267.3 L568.9 266.1 L568.3 265 L567.7 263.8 L567 262.7 L566.4 261.6 L565.8 260.4 L565.2 259.3 L564.7 258.2 L564.1 257.1 L563.5 255.9 L563 254.8 L562.4 253.7 L561.9 252.6 L561.4 251.5 L560.9 250.4 L560.4 249.3 L559.9 248.1 L559.4 247 L559 245.9 L558.5 244.9 L558 243.8 L557.6 242.7 L557.2 241.6 L556.7 240.5 L556.3 239.4 L555.9 238.4 L555.5 237.3 L555.1 236.2 L554.7 235.2 L554.4 234.1 L554 233 L553.6 232 L553.3 230.9 L552.9 229.9 L552.6 228.9 L552.2 227.8 L551.9 226.8 L551.6 225.8 L551.3 224.7 L550.9 223.7 L550.6 222.7 L550.3 221.7 L550 220.7 L549.7 219.7 L549.5 218.7 L549.2 217.7 L548.9 216.8 L548.6 215.8 L548.3 214.8 L548.1 213.9 L547.8 212.9 L547.5 211.9 L547.3 211 L547 210.1 L546.7 209.1 L546.5 208.2 L546.2 207.3 L545.9 206.4 L545.7 205.4 L545.4 204.5 L545.2 203.6 L544.9 202.8 L544.6 201.9 L544.4 201 L544.1 200.1 L543.8 199.3 L543.6 198.4 L543.3 197.6 L543 196.7 L542.7 195.9 L542.4 195.1 L542.1 194.3 L541.9 193.5 L541.6 192.7 L541.2 191.9 L540.9 191.1 L540.6 190.3 L540.3 189.6 L539.9 188.8 L539.6 188.1 L539.2 187.4 L538.9 186.6 L538.5 185.9 L538.1 185.2 L537.7 184.5 L537.3 183.8 L536.9 183.1 L536.5 182.5 L536 181.8 L535.6 181.2 L535.1 180.5 L534.6 179.9 L534.2 179.3 L533.6 178.7 L533.1 178.1 L532.6 177.5 L532 177 L531.4 176.4 L530.9 175.9 L530.2 175.3 L529.6 174.8 L529 174.3 L528.3 173.8 L527.6 173.3 L526.9 172.9 L526.2 172.4 L525.4 171.9 L524.7 171.5 L523.9 171.1 L523.1 170.7 L522.2 170.3 L521.4 169.9 L520.5 169.5 L519.6 169.2 L518.6 168.8 L517.7 168.5 L516.7 168.2 L515.6 167.9 L514.6 167.6 L513.5 167.3 L512.4 167.1 L511.3 166.8 L510.2 166.6 L509 166.4 L507.8 166.2 L506.5 166 L505.2 165.8 L503.9 165.6 L502.6 165.5 L501.2 165.4 L499.8 165.3 L498.4 165.2 L497 165.1 L495.5 165 L493.9 164.9 L492.4 164.9 L490.8 164.9 L489.2 164.9 L487.5 164.9 L485.8 164.9M1315.1 164.9 L1313.6 165 L1312.1 165 L1310.6 165.1 L1309.1 165.2 L1307.7 165.3 L1306.3 165.4 L1305 165.5 L1303.7 165.7 L1302.4 165.9 L1301.1 166 L1299.9 166.2 L1298.7 166.4 L1297.5 166.7 L1296.4 166.9 L1295.3 167.1 L1294.2 167.4 L1293.2 167.7 L1292.1 168 L1291.1 168.3 L1290.2 168.6 L1289.2 168.9 L1288.3 169.3 L1287.4 169.6 L1286.5 170 L1285.7 170.4 L1284.9 170.8 L1284.1 171.2 L1283.3 171.6 L1282.6 172.1 L1281.8 172.5 L1281.1 173 L1280.5 173.5 L1279.8 174 L1279.2 174.5 L1278.5 175 L1277.9 175.5 L1277.3 176 L1276.8 176.6 L1276.2 177.1 L1275.7 177.7 L1275.2 178.3 L1274.7 178.9 L1274.2 179.5 L1273.7 180.1 L1273.3 180.7 L1272.8 181.4 L1272.4 182 L1272 182.7 L1271.6 183.4 L1271.2 184 L1270.8 184.7 L1270.5 185.4 L1270.1 186.1 L1269.8 186.8 L1269.4 187.6 L1269.1 188.3 L1268.8 189.1 L1268.5 189.8 L1268.2 190.6 L1267.9 191.4 L1267.6 192.1 L1267.3 192.9 L1267 193.7 L1266.8 194.5 L1266.5 195.3 L1266.2 196.2 L1266 197 L1265.7 197.8 L1265.5 198.7 L1265.2 199.5 L1265 200.4 L1264.8 201.3 L1264.5 202.1 L1264.3 203 L1264 203.9 L1263.8 204.8 L1263.6 205.7 L1263.3 206.6 L1263.1 207.6 L1262.9 208.5 L1262.6 209.4 L1262.4 210.3 L1262.2 211.3 L1261.9 212.2 L1261.7 213.2 L1261.4 214.1 L1261.2 215.1 L1260.9 216.1 L1260.7 217.1"/><path d="M889.2 360.8 L887.8 359.9 L886.4 359 L885 358.1 L883.6 357.2 L882.2 356.3 L880.8 355.4 L879.4 354.5 L878 353.6 L876.6 352.6 L875.2 351.7 L873.8 350.8 L872.4 349.9 L871.1 349 L869.7 348 L868.3 347.1 L866.9 346.2 L865.5 345.3 L864.1 344.3 L862.7 343.4 L861.3 342.5 L859.9 341.5 L858.5 340.6 L857.2 339.7 L855.8 338.7 L854.4 337.8 L853 336.9 L851.6 335.9 L850.3 335 L848.9 334 L847.5 333.1 L846.1 332.1 L844.7 331.2 L843.4 330.2 L842 329.3 L840.6 328.4 L839.3 327.4 L837.9 326.5 L836.5 325.5 L835.2 324.6 L833.8 323.6 L832.4 322.7 L831.1 321.7 L829.7 320.8 L828.4 319.8 L827 318.9 L825.7 317.9 L824.3 317 L823 316 L821.6 315.1 L820.3 314.1 L818.9 313.2 L817.6 312.2 L816.3 311.2 L814.9 310.3 L813.6 309.3 L812.3 308.4 L810.9 307.5 L809.6 306.5 L808.3 305.6 L806.9 304.6 L805.6 303.7 L804.3 302.7 L803 301.8 L801.7 300.8 L800.4 299.9 L799.1 298.9 L797.8 298 L796.4 297.1 L795.1 296.1 L793.8 295.2 L792.6 294.2 L791.3 293.3 L790 292.4 L788.7 291.4 L787.4 290.5 L786.1 289.6 L784.8 288.6 L783.6 287.7 L782.3 286.8 L781 285.9 L779.7 284.9 L778.5 284 L777.2 283.1 L775.9 282.2 L774.7 281.3 L773.4 280.3 L772.2 279.4 L770.9 278.5 L769.7 277.6 L768.4 276.7 L767.2 275.8 L765.9 274.9 L764.7 274 L763.5 273.1 L762.2 272.2 L761 271.3 L759.8 270.4 L758.5 269.5 L757.3 268.6 L756.1 267.8 L754.9 266.9 L753.7 266 L752.5 265.1 L751.3 264.3 L750 263.4 L748.8 262.5 L747.6 261.7 L746.4 260.8 L745.2 259.9 L744 259.1 L742.9 258.2 L741.7 257.4 L740.5 256.5 L739.3 255.7 L738.1 254.9 L736.9 254 L735.7 253.2 L734.6 252.4 L733.4 251.6 L732.2 250.7 L731 249.9 L729.9 249.1 L728.7 248.3 L727.5 247.5 L726.4 246.7 L725.2 245.9 L724 245.1 L722.9 244.4 L721.7 243.6 L720.6 242.8 L719.4 242 L718.2 241.3 L717.1 240.5 L715.9 239.8 L714.8 239 L713.6 238.3 L712.5 237.5 L711.3 236.8 L710.2 236 L709 235.3 L707.9 234.6 L706.7 233.9 L705.6 233.2 L704.4 232.5 L703.3 231.8 L702.1 231.1 L701 230.4 L699.8 229.7 L698.7 229 L697.5 228.4 L696.4 227.7 L695.2 227.1 L694 226.4 L692.9 225.8 L691.7 225.1 L690.6 224.5 L689.4 223.9 L688.3 223.2 L687.1 222.6 L685.9 222 L684.8 221.4 L683.6 220.8 L682.4 220.3 L681.2 219.7 L680.1 219.1 L678.9 218.5 L677.7 218 L676.5 217.4 L675.3 216.9 L674.1 216.4 L672.9 215.8 L671.7 215.3 L670.5 214.8 L669.3 214.3 L668.1 213.8 L666.9 213.3 L665.7 212.8 L664.5 212.4 L663.2 211.9 L662 211.4 L660.8 211 L659.5 210.6 L658.3 210.1 L657 209.7 L655.8 209.3 L654.5 208.9 L653.2 208.5 L651.9 208.1 L650.7 207.7 L649.4 207.4 L648.1 207 L646.8 206.6 L645.4 206.3 L644.1 206 L642.8 205.6 L641.5 205.3 L640.1 205 L638.8 204.7 L637.4 204.4 L636.1 204.2 L634.7 203.9 L633.3 203.6 L631.9 203.4 L630.5 203.1 L629.1 202.9 L627.7 202.7 L626.3 202.5 L624.8 202.3 L623.4 202.1 L621.9 201.9 L620.5 201.7 L619 201.6 L617.5 201.4 L616 201.3 L614.5 201.1 L613 201 L611.5 200.9 L609.9 200.8 L608.4 200.7 L606.8 200.6 L605.3 200.5 L603.7 200.5 L602.1 200.4 L600.5 200.4 L598.9 200.3 L597.3 200.3 L595.6 200.3 L594 200.3 L592.3 200.3 L590.7 200.3 L589 200.4 L587.3 200.4 L585.6 200.4 L583.9 200.5 L582.1 200.6 L580.4 200.6 L578.6 200.7 L576.9 200.8 L575.1 200.9 L573.3 201.1 L571.5 201.2 L569.7 201.3 L567.9 201.5 L566.1 201.6 L564.2 201.8 L562.4 202 L560.5 202.2 L558.6 202.4 L556.7 202.6 L554.8 202.8 L552.9 203 L551 203.2 L549 203.5 L547.1 203.7 L545.1 204 L543.2 204.3 L541.2 204.6 L539.2 204.9 L537.2 205.2 L535.2 205.5 L533.2 205.8 L531.1 206.1 L529.1 206.5 L527 206.8 L524.9 207.2 L522.9 207.5 L520.8 207.9 L518.7 208.3 L516.6 208.7 L514.5 209.1 L512.3 209.5 L510.2 209.9 L508.1 210.3 L505.9 210.8 L503.7 211.2 L501.6 211.7 L499.4 212.1 L497.2 212.6 L495 213.1 L492.8 213.5 L490.6 214 L488.4 214.5 L486.2 215 L483.9 215.6 L481.7 216.1 L479.5 216.6 L477.2 217.1 L474.9 217.7 L472.7 218.2 L470.4 218.8 L468.1 219.4 L465.9 219.9 L463.6 220.5 L461.3 221.1 L459 221.7 L456.7 222.3 L454.4 222.9 L452.1 223.5 L449.8 224.2 L447.5 224.8 L445.2 225.4"/><path d="M789.2 186.3 L787.8 185.9 L786.3 185.6 L784.9 185.2 L783.4 184.9 L782 184.6 L780.5 184.3 L779.1 184 L777.6 183.7 L776.1 183.4 L774.6 183.2 L773.1 182.9 L771.7 182.7 L770.2 182.5 L768.6 182.2 L767.1 182 L765.6 181.8 L764.1 181.7 L762.5 181.5 L761 181.4 L759.4 181.2 L757.9 181.1 L756.3 181 L754.7 180.9 L753.1 180.8 L751.5 180.7 L749.9 180.6 L748.3 180.6 L746.7 180.5 L745.1 180.5 L743.4 180.5 L741.8 180.5 L740.1 180.5 L738.5 180.5 L736.8 180.6 L735.1 180.6 L733.4 180.7 L731.7 180.7 L730 180.8 L728.3 180.9 L726.6 181 L724.8 181.2 L723.1 181.3 L721.3 181.4 L719.5 181.6 L717.8 181.8 L716 182 L714.2 182.1 L712.4 182.4 L710.5 182.6 L708.7 182.8 L706.9 183.1 L705 183.3 L703.2 183.6 L701.3 183.9 L699.4 184.1 L697.5 184.5 L695.6 184.8 L693.7 185.1 L691.8 185.4 L689.9 185.8 L687.9 186.1 L686 186.5 L684 186.9 L682 187.3 L680.1 187.7 L678.1 188.1 L676.1 188.5 L674.1 189 L672.1 189.4 L670.1 189.9 L668 190.3 L666 190.8 L663.9 191.3 L661.9 191.8 L659.8 192.3 L657.8 192.8 L655.7 193.4 L653.6 193.9 L651.5 194.5 L649.4 195 L647.3 195.6 L645.2 196.2 L643.1 196.7 L640.9 197.3 L638.8 197.9 L636.7 198.6 L634.5 199.2 L632.4 199.8 L630.2 200.5 L628 201.1 L625.9 201.8 L623.7 202.4 L621.5 203.1 L619.3 203.8 L617.2 204.5 L615 205.2 L612.8 205.9 L610.6 206.6 L608.4 207.3 L606.2 208 L603.9 208.8 L601.7 209.5 L599.5 210.3 L597.3 211 L595.1 211.8 L592.9 212.6 L590.6 213.3 L588.4 214.1 L586.2 214.9 L584 215.7 L581.7 216.5 L579.5 217.3 L577.3 218.2 L575.1 219 L572.8 219.8 L570.6 220.6 L568.4 221.5 L566.2 222.3 L563.9 223.2 L561.7 224 L559.5 224.9 L557.3 225.8 L555.1 226.7 L552.8 227.5 L550.6 228.4 L548.4 229.3 L546.2 230.2 L544 231.1 L541.8 232 L539.6 232.9 L537.4 233.8 L535.2 234.8 L533.1 235.7 L530.9 236.6 L528.7 237.6 L526.6 238.5 L524.4 239.4 L522.2 240.4 L520.1 241.3 L517.9 242.3 L515.8 243.2 L513.7 244.2 L511.6 245.2 L509.4 246.1 L507.3 247.1 L505.2 248.1 L503.1 249.1 L501.1 250.1 L499 251 L496.9 252 L494.8 253 L492.8 254 L490.7 255 L488.7 256 L486.7 257 L484.7 258.1 L482.7 259.1 L480.7 260.1 L478.7 261.1 L476.7 262.1 L474.8 263.1 L472.8 264.2 L470.9 265.2 L468.9 266.2 L467 267.3 L465.1 268.3 L463.2 269.3 L461.3 270.4 L459.4 271.4 L457.6 272.5 L455.7 273.5 L453.9 274.6 L452.1 275.6 L450.3 276.7 L448.5 277.7 L446.7 278.8 L444.9 279.8 L443.1 280.9 L441.4 281.9 L439.7 283 L437.9 284.1 L436.2 285.1 L434.5 286.2 L432.9 287.3 L431.2 288.3 L429.6 289.4 L427.9 290.5 L426.3 291.6 L424.7 292.6 L423.1 293.7 L421.5 294.8 L420 295.9 L418.4 296.9 L416.9 298 L415.4 299.1 L413.9 300.2 L412.4 301.3 L410.9 302.3 L409.5 303.4 L408.1 304.5 L406.6 305.6 L405.2 306.7 L403.8 307.8 L402.5 308.8 L401.1 309.9 L399.8 311 L398.5 312.1 L397.2 313.2 L395.9 314.3 L394.6 315.4 L393.3 316.5 L392.1 317.5 L390.9 318.6 L389.7 319.7 L388.5 320.8 L387.3 321.9 L386.1 323 L385 324.1 L383.9 325.1 L382.8 326.2 L381.7 327.3 L380.6 328.4 L379.6 329.5 L378.5 330.6 L377.5 331.6 L376.5 332.7 L375.5 333.8 L374.5 334.9 L373.6 336 L372.6 337 L371.7 338.1 L370.8 339.2 L369.9 340.3 L369 341.4 L368.2 342.4 L367.4 343.5 L366.5 344.6 L365.7 345.6 L364.9 346.7 L364.2 347.8 L363.4 348.8 L362.7 349.9 L361.9 351 L361.2 352 L360.5 353.1 L359.9 354.2 L359.2 355.2 L358.5 356.3 L357.9 357.3 L357.3 358.4 L356.7 359.4 L356.1 360.5 L355.6 361.5 L355 362.6 L354.5 363.6 L353.9 364.6 L353.4 365.7 L352.9 366.7 L352.4 367.7 L352 368.8 L351.5 369.8 L351.1 370.8 L350.7 371.9 L350.3 372.9 L349.9 373.9 L349.5 374.9 L349.1 375.9 L348.7 376.9 L348.4 377.9 L348.1 378.9 L347.7 379.9 L347.4 380.9 L347.1 381.9 L346.8 382.9 L346.6 383.9 L346.3 384.9 L346.1 385.9 L345.8 386.8M1454.5 387.8 L1452 388.8 L1449.5 389.7 L1447.1 390.7 L1444.6 391.7 L1442.1 392.6 L1439.6 393.6 L1437.1 394.5 L1434.6 395.4 L1432.1 396.4"/><path d="M840.3 180.8 L840.8 179.1 L841.4 177.5 L842 175.8 L842.5 174.2 L843.1 172.5 L843.6 170.9 L844.2 169.2 L844.8 167.6 L845.4 165.9 L846 164.3 L846.5 162.6 L847.1 161 L847.7 159.3 L848.3 157.7 L848.9 156 L849.5 154.4 L850.2 152.7 L850.8 151.1 L851.4 149.4 L852 147.8 L852.6 146.1 L853.3 144.5 L853.9 142.8 L854.5 141.2 L855.2 139.5 L855.8 137.9 L856.5 136.2 L857.1 134.6 L857.8 132.9 L858.4 131.3 L859.1 129.6 L859.8 128 L860.4 126.3 L861.1 124.7 L861.8 123 L862.5 121.4 L863.1 119.7 L863.8 118.1 L864.5 116.4 L865.2 114.8 L865.9 113.1 L866.6 111.5 L867.3 109.8 L868 108.2 L868.7 106.5 L869.4 104.9 L870.1 103.2 L870.8 101.6 L871.5 99.9 L872.2 98.3 L872.9 96.6 L873.6 95 L874.3 93.4 L875 91.7 L875.8 90.1 L876.5 88.4 L877.2 86.8 L877.9 85.1 L878.7 83.5 L879.4 81.9 L880.1 80.2 L880.8 78.6 L881.6 76.9 L882.3 75.3 L883 73.7 L883.8 72 L884.5 70.4 L885.2 68.7 L886 67.1 L886.7 65.5 L887.5 63.8 L888.2 62.2 L888.9 60.6 L889.7 59 L890.4 57.3 L891.2 55.7 L891.9 54.1 L892.6 52.5 L893.4 50.9 L894.1 49.3 L894.8 47.7 L895.6 46.1 L896.3 44.5 L897 42.9 L897.8 41.4 L898.5 39.8 L899.2 38.3 L900 36.8 L900.7 35.3 L901.4 33.8 L902.2 32.4 L902.9 31 L903.7 29.8 L904.4 28.6 L905.3 27.5 L906.2 26.7 L907.3 26.1 L908.7 25.8 L910.4 25.9 L912.5 26.3 L915.1 27 L918 27.9 L921.3 29 L924.8 30.2 L928.4 31.5 L932.2 32.9 L936.1 34.4 L940.1 35.8 L944.1 37.3 L948.2 38.8 L952.4 40.4 L956.5 41.9 L960.7 43.5 L964.9 45.1 L969.2 46.7 L973.4 48.3 L977.6 49.9 L981.9 51.5 L986.1 53.1 L990.4 54.7 L994.7 56.3 L998.9 57.9 L1003.2 59.6 L1007.5 61.2 L1011.7 62.8 L1016 64.5 L1020.2 66.1 L1024.5 67.7 L1028.7 69.4 L1032.9 71 L1037.2 72.6 L1041.4 74.3 L1045.6 75.9 L1049.8 77.5 L1054 79.2 L1058.2 80.8 L1062.3 82.5 L1066.5 84.1 L1070.6 85.7 L1074.8 87.4 L1078.9 89 L1083 90.7 L1087.1 92.3 L1091.2 94 L1095.3 95.6 L1099.3 97.3 L1103.4 98.9 L1107.4 100.6 L1111.4 102.2 L1115.4 103.8 L1119.4 105.5 L1123.4 107.1 L1127.4 108.8 L1131.3 110.4 L1135.2 112.1 L1139.1 113.7 L1143 115.4 L1146.9 117 L1150.7 118.7 L1154.6 120.3 L1158.4 122 L1162.2 123.6 L1166 125.3 L1169.7 126.9 L1173.5 128.6 L1177.2 130.2 L1180.9 131.9 L1184.5 133.5 L1188.2 135.2 L1191.8 136.8 L1195.4 138.5 L1199 140.1 L1202.6 141.8 L1206.1 143.4 L1209.7 145.1 L1213.2 146.7 L1216.6 148.4 L1220.1 150 L1223.5 151.7 L1226.9 153.3 L1230.3 155 L1233.6 156.6 L1237 158.3 L1240.3 159.9 L1243.6 161.6 L1246.8 163.2 L1250 164.9 L1253.2 166.5 L1256.4 168.2 L1259.5 169.8 L1262.7 171.5 L1265.8 173.2 L1268.8 174.8 L1271.9 176.5 L1274.9 178.1 L1277.9 179.8 L1280.8 181.4 L1283.7 183.1 L1286.6 184.7 L1289.5 186.4 L1292.3 188 L1295.1 189.7 L1297.9 191.3 L1300.7 193 L1303.4 194.6 L1306.1 196.3 L1308.7 197.9 L1311.3 199.6 L1313.9 201.2 L1316.5 202.9 L1319 204.5 L1321.5 206.2 L1324 207.8 L1326.4 209.5 L1328.8 211.2 L1331.2 212.8 L1333.6 214.5 L1335.9 216.1 L1338.1 217.8 L1340.4 219.4 L1342.6 221.1 L1344.8 222.7 L1346.9 224.4 L1349 226 L1351.1 227.7 L1353.1 229.3 L1355.1 231 L1357.1 232.6 L1359 234.3 L1361 235.9 L1362.8 237.6 L1364.7 239.2 L1366.4 240.9 L1368.2 242.6 L1369.9 244.2 L1371.6 245.9 L1373.3 247.5 L1374.9 249.2 L1376.5 250.8 L1378 252.5 L1379.6 254.1 L1381 255.8 L1382.5 257.4 L1383.9 259.1 L1385.2 260.7 L1386.6 262.4 L1387.9 264 L1389.1 265.7 L1390.4 267.3 L1391.5 269 L1392.7 270.7 L1393.8 272.3 L1394.9 274 L1395.9 275.6 L1396.9 277.3 L1397.9 278.9 L1398.8 280.6 L1399.7 282.2 L1400.5 283.9 L1401.3 285.5 L1402.1 287.2 L1402.8 288.8 L1403.5 290.5 L1404.2 292.1 L1404.8 293.8 L1405.4 295.5 L1405.9 297.1 L1406.4 298.8 L1406.9 300.4 L1407.3 302.1 L1407.7 303.7 L1408.1 305.4 L1408.4 307 L1408.7 308.7 L1408.9 310.3 L1409.1 312 L1409.3 313.6 L1409.4 315.3 L1409.5 316.9 L1409.5 318.6 L1409.5 320.2 L1409.5 321.9 L1409.4 323.6 L1409.3 325.2 L1409.2 326.9 L1409 328.5 L1408.7 330.2 L1408.5 331.8 L1408.2 333.5 L1407.8 335.1 L1407.5 336.8 L1407.1 338.4 L1406.6 340.1 L1406.1 341.7 L1405.6 343.4 L1405 345 L1404.4 346.7 L1403.8 348.3 L1403.1 350 L1402.4 351.7 L1401.6 353.3"/><path d="M819.2 250.8 L819 249.2 L818.8 247.6 L818.6 246 L818.4 244.4 L818.2 242.8 L818.1 241.3 L817.9 239.7 L817.7 238.1 L817.6 236.5 L817.4 234.9 L817.3 233.3 L817.1 231.7 L817 230.2 L816.9 228.6 L816.8 227 L816.6 225.4 L816.5 223.8 L816.4 222.2 L816.3 220.7 L816.2 219.1 L816.1 217.5 L816 215.9 L816 214.3 L815.9 212.8 L815.8 211.2 L815.8 209.6 L815.7 208 L815.7 206.5 L815.6 204.9 L815.6 203.3 L815.5 201.7 L815.5 200.2 L815.5 198.6 L815.5 197 L815.5 195.5 L815.5 193.9 L815.5 192.3 L815.5 190.8 L815.5 189.2 L815.5 187.6 L815.5 186.1 L815.5 184.5 L815.6 183 L815.6 181.4 L815.6 179.8 L815.7 178.3 L815.7 176.7 L815.8 175.2 L815.9 173.6 L815.9 172.1 L816 170.5 L816.1 169 L816.2 167.5 L816.2 165.9 L816.3 164.4 L816.4 162.8 L816.5 161.3 L816.6 159.8 L816.7 158.3 L816.8 156.7 L817 155.2 L817.1 153.7 L817.2 152.2 L817.3 150.6 L817.5 149.1 L817.6 147.6 L817.7 146.1 L817.9 144.6 L818 143.1 L818.2 141.6 L818.3 140.1 L818.5 138.6 L818.6 137.1 L818.8 135.6 L819 134.2 L819.1 132.7 L819.3 131.2 L819.5 129.7 L819.6 128.3 L819.8 126.8 L820 125.4 L820.2 123.9 L820.3 122.5 L820.5 121 L820.7 119.6 L820.9 118.2 L821.1 116.8 L821.2 115.4 L821.4 114 L821.6 112.6 L821.8 111.2 L821.9 109.8 L822.1 108.4 L822.3 107.1 L822.4 105.7 L822.6 104.4 L822.7 103 L822.9 101.7 L823 100.4 L823.2 99.1 L823.3 97.8 L823.4 96.5 L823.5 95.3 L823.6 94 L823.7 92.8 L823.8 91.6 L823.9 90.4 L823.9 89.2 L824 88 L824 86.9 L824 85.7 L823.9 84.6 L823.9 83.6 L823.8 82.5 L823.7 81.5 L823.6 80.5 L823.5 79.5 L823.3 78.5 L823.1 77.6 L822.8 76.7 L822.5 75.8 L822.2 75 L821.8 74.2 L821.4 73.5 L820.9 72.7 L820.4 72.1 L819.8 71.4 L819.1 70.8 L818.4 70.3 L817.6 69.8 L816.7 69.3 L815.8 68.9 L814.7 68.6 L813.6 68.3 L812.4 68 L811.1 67.8 L809.8 67.7 L808.3 67.6 L806.7 67.5 L805 67.6 L803.3 67.6 L801.4 67.7 L799.4 67.9 L797.3 68.1 L795.1 68.4 L792.8 68.8 L790.4 69.1 L787.9 69.6 L785.3 70 L782.6 70.6 L779.8 71.1 L776.9 71.7 L773.9 72.4 L770.9 73.1 L767.7 73.8 L764.4 74.6 L761.1 75.4 L757.7 76.3 L754.2 77.1 L750.7 78 L747 79 L743.3 80 L739.6 80.9 L735.7 82 L731.9 83 L727.9 84.1 L723.9 85.2 L719.9 86.3 L715.8 87.4 L711.7 88.6 L707.6 89.8 L703.4 91 L699.1 92.2 L694.8 93.4 L690.5 94.6 L686.2 95.9 L681.9 97.1 L677.5 98.4 L673.1 99.7 L668.7 101 L664.2 102.4 L659.8 103.7 L655.3 105 L650.8 106.4 L646.3 107.7 L641.8 109.1 L637.3 110.5 L632.7 111.9 L628.2 113.2 L623.7 114.6 L619.1 116.1 L614.6 117.5 L610 118.9 L605.5 120.3 L600.9 121.8 L596.4 123.2 L591.9 124.6 L587.3 126.1 L582.8 127.5 L578.3 129 L573.7 130.5 L569.2 131.9 L564.7 133.4 L560.2 134.9 L555.7 136.4 L551.3 137.9 L546.8 139.3 L542.4 140.8M1262.1 142.3 L1265.1 143.8 L1268.1 145.3 L1271.1 146.8 L1274 148.4 L1277 149.9 L1279.9 151.4 L1282.8 152.9 L1285.7 154.4 L1288.6 155.9 L1291.5 157.5 L1294.3 159 L1297.1 160.5 L1299.9 162.1 L1302.7 163.6 L1305.5 165.1 L1308.2 166.7 L1310.9 168.2 L1313.6 169.8 L1316.3 171.3 L1318.9 172.9 L1321.5 174.4 L1324.1 176 L1326.7 177.5 L1329.2 179.1 L1331.8 180.6 L1334.3 182.2 L1336.7 183.7 L1339.2 185.3 L1341.6 186.8 L1344 188.4 L1346.3 190 L1348.6 191.5 L1350.9 193.1 L1353.2 194.7 L1355.5 196.2 L1357.7 197.8 L1359.9 199.4 L1362 200.9 L1364.1 202.5 L1366.2 204.1 L1368.3 205.7 L1370.3 207.2 L1372.3 208.8 L1374.3 210.4 L1376.3 212 L1378.2 213.5 L1380.1 215.1 L1381.9 216.7 L1383.7 218.3 L1385.5 219.8 L1387.2 221.4 L1389 223 L1390.6 224.6 L1392.3 226.2 L1393.9 227.8 L1395.5 229.3 L1397.1 230.9 L1398.6 232.5 L1400.1 234.1 L1401.5 235.7 L1402.9 237.3 L1404.3 238.9 L1405.6 240.5 L1407 242 L1408.2 243.6 L1409.5 245.2 L1410.7 246.8 L1411.9 248.4 L1413 250 L1414.1 251.6 L1415.2 253.2 L1416.2 254.8 L1417.2 256.4 L1418.1 258 L1419.1 259.5 L1419.9 261.1 L1420.8 262.7 L1421.6 264.3 L1422.4 265.9 L1423.1 267.5 L1423.8 269.1 L1424.5 270.7 L1425.1 272.3 L1425.7 273.9 L1426.3 275.5 L1426.8 277.1 L1427.3 278.7 L1427.7 280.3 L1428.1 281.9 L1428.5 283.5 L1428.8 285.1 L1429.1 286.7"/><path d="M584 286.7 L583.2 285.5 L582.4 284.3 L581.6 283.1 L580.8 281.9 L580.1 280.7 L579.3 279.5 L578.6 278.3 L577.8 277.2 L577.1 276 L576.4 274.8 L575.7 273.6 L575.1 272.4 L574.4 271.2 L573.7 270.1 L573.1 268.9 L572.5 267.7 L571.8 266.5 L571.2 265.4 L570.6 264.2 L570 263 L569.5 261.9 L568.9 260.7 L568.4 259.5 L567.8 258.4 L567.3 257.2 L566.8 256.1 L566.3 254.9 L565.8 253.8 L565.3 252.6 L564.8 251.5 L564.3 250.3 L563.9 249.2 L563.4 248 L563 246.9 L562.6 245.8 L562.2 244.7 L561.8 243.5 L561.4 242.4 L561 241.3 L560.6 240.2 L560.2 239.1 L559.9 238 L559.5 236.9 L559.2 235.8 L558.8 234.7 L558.5 233.6 L558.2 232.5 L557.9 231.4 L557.6 230.3 L557.3 229.2 L557 228.2 L556.7 227.1 L556.4 226 L556.2 225 L555.9 223.9 L555.7 222.9 L555.4 221.8 L555.2 220.8 L554.9 219.7 L554.7 218.7 L554.5 217.7 L554.3 216.7 L554 215.6 L553.8 214.6 L553.6 213.6 L553.4 212.6 L553.2 211.6 L553 210.6 L552.8 209.6 L552.6 208.7 L552.4 207.7 L552.2 206.7 L552.1 205.8 L551.9 204.8 L551.7 203.9 L551.5 202.9 L551.3 202 L551.1 201.1 L550.9 200.2 L550.7 199.2 L550.6 198.3 L550.4 197.4 L550.2 196.5 L550 195.7 L549.8 194.8 L549.6 193.9 L549.4 193.1 L549.2 192.2 L548.9 191.4 L548.7 190.5 L548.5 189.7 L548.3 188.9 L548 188.1 L547.8 187.3 L547.5 186.5 L547.3 185.7 L547 184.9 L546.7 184.1 L546.5 183.4 L546.2 182.6 L545.9 181.9 L545.5 181.2 L545.2 180.5 L544.9 179.8 L544.5 179.1 L544.2 178.4 L543.8 177.7 L543.4 177 L543 176.4 L542.6 175.8 L542.1 175.1 L541.7 174.5 L541.2 173.9 L540.7 173.3 L540.2 172.7 L539.7 172.1 L539.2 171.6 L538.6 171 L538 170.5 L537.4 170 L536.8 169.5 L536.2 169 L535.5 168.5 L534.8 168 L534.1 167.6 L533.4 167.1 L532.7 166.7 L531.9 166.3 L531.1 165.9 L530.2 165.5 L529.4 165.1 L528.5 164.7 L527.6 164.4 L526.7 164.1 L525.7 163.7 L524.7 163.4 L523.7 163.1 L522.6 162.9 L521.5 162.6 L520.4 162.4 L519.3 162.1 L518.1 161.9 L516.9 161.7 L515.7 161.5 L514.4 161.3 L513.1 161.2 L511.8 161 L510.4 160.9 L509 160.8 L507.6 160.7 L506.1 160.6 L504.6 160.6 L503.1 160.5 L501.5 160.5 L499.9 160.5 L498.2 160.5 L496.6 160.5M1305.9 160.5 L1304.3 160.6 L1302.8 160.6 L1301.3 160.7 L1299.9 160.8 L1298.5 160.9 L1297.1 161 L1295.8 161.1 L1294.5 161.3 L1293.2 161.5 L1292 161.6 L1290.7 161.8 L1289.6 162 L1288.4 162.3 L1287.3 162.5 L1286.2 162.8 L1285.2 163 L1284.2 163.3 L1283.2 163.6 L1282.2 163.9 L1281.3 164.3 L1280.4 164.6 L1279.5 165 L1278.6 165.3 L1277.8 165.7 L1277 166.1 L1276.3 166.5 L1275.5 167 L1274.8 167.4 L1274.1 167.9 L1273.4 168.3 L1272.8 168.8 L1272.1 169.3 L1271.5 169.8 L1271 170.3 L1270.4 170.9 L1269.9 171.4 L1269.3 172 L1268.8 172.5 L1268.3 173.1 L1267.9 173.7 L1267.4 174.3 L1267 174.9 L1266.6 175.5 L1266.2 176.2 L1265.8 176.8 L1265.4 177.5 L1265.1 178.2 L1264.7 178.8 L1264.4 179.5 L1264.1 180.2 L1263.8 180.9 L1263.5 181.7 L1263.2 182.4 L1262.9 183.1 L1262.7 183.9 L1262.4 184.7 L1262.2 185.4 L1262 186.2 L1261.7 187 L1261.5 187.8 L1261.3 188.6 L1261.1 189.4 L1260.9 190.2 L1260.7 191.1 L1260.5 191.9 L1260.3 192.8 L1260.2 193.6 L1260 194.5 L1259.8 195.4 L1259.7 196.2 L1259.5 197.1 L1259.3 198 L1259.2 198.9 L1259 199.8 L1258.9 200.8 L1258.7 201.7 L1258.5 202.6 L1258.4 203.6 L1258.2 204.5 L1258.1 205.5 L1257.9 206.4 L1257.8 207.4 L1257.6 208.3 L1257.4 209.3 L1257.3 210.3 L1257.1 211.3 L1256.9 212.3 L1256.8 213.3 L1256.6 214.3 L1256.4 215.3 L1256.2 216.3 L1256 217.3 L1255.8 218.4 L1255.6 219.4 L1255.4 220.4 L1255.2 221.5 L1255 222.5 L1254.8 223.6 L1254.5 224.6 L1254.3 225.7 L1254 226.7 L1253.8 227.8 L1253.5 228.9 L1253.3 229.9 L1253 231 L1252.7 232.1 L1252.4 233.2 L1252.1 234.3 L1251.8 235.4 L1251.5 236.5 L1251.2 237.6 L1250.9 238.7 L1250.5 239.8 L1250.2 240.9 L1249.8 242 L1249.4 243.2 L1249.1 244.3 L1248.7 245.4 L1248.3 246.5 L1247.9 247.7 L1247.5 248.8 L1247 249.9 L1246.6 251.1 L1246.1 252.2 L1245.7 253.4 L1245.2 254.5 L1244.7 255.7 L1244.2 256.8 L1243.7 258 L1243.2 259.1 L1242.7 260.3 L1242.1 261.5 L1241.6 262.6 L1241 263.8 L1240.4 265 L1239.9 266.1 L1239.3 267.3 L1238.6 268.5 L1238 269.7 L1237.4 270.8 L1236.7 272 L1236.1 273.2 L1235.4 274.4"/><path d="M621.3 346.7 L622.9 347.5 L624.6 348.2 L626.2 349 L627.9 349.8 L629.5 350.5 L631.2 351.3 L632.9 352 L634.5 352.8 L636.2 353.5 L637.9 354.3 L639.6 355 L641.2 355.8 L642.9 356.5 L644.6 357.2 L646.3 358 L648 358.7 L649.7 359.4 L651.4 360.2 L653.1 360.9 L654.8 361.6 L656.5 362.3 L658.2 363 L659.9 363.7 L661.7 364.5 L663.4 365.2 L665.1 365.9 L666.8 366.6 L668.6 367.3 L670.3 368 L672 368.7 L673.7 369.3 L675.5 370 L677.2 370.7 L678.9 371.4 L680.7 372.1 L682.4 372.7 L684.2 373.4 L685.9 374.1 L687.6 374.7 L689.4 375.4 L691.1 376 L692.9 376.7 L694.6 377.3 L696.4 378 L698.1 378.6 L699.9 379.2 L701.6 379.9 L703.4 380.5 L705.1 381.1 L706.9 381.7 L708.6 382.3 L710.4 382.9 L712.1 383.5 L713.9 384.1 L715.7 384.7 L717.4 385.3 L719.2 385.9 L720.9 386.5 L722.7 387 L724.4 387.6 L726.2 388.2 L727.9 388.7 L729.7 389.3 L731.4 389.8 L733.2 390.4 L734.9 390.9 L736.7 391.4 L738.4 392 L740.2 392.5 L741.9 393 L743.7 393.5 L745.4 394 L747.2 394.5 L748.9 395 L750.7 395.5 L752.4 396 L754.2 396.5"/><path d="M1068.3 171.7 L1066.2 170.3 L1064.1 169 L1062 167.6 L1059.9 166.3 L1057.8 164.9 L1055.7 163.6 L1053.6 162.3 L1051.5 160.9 L1049.4 159.6 L1047.3 158.3 L1045.2 157 L1043 155.7 L1040.9 154.4 L1038.8 153.1 L1036.7 151.8 L1034.5 150.5 L1032.4 149.2 L1030.3 148 L1028.2 146.7 L1026.1 145.5 L1023.9 144.2 L1021.8 143 L1019.7 141.8 L1017.6 140.6 L1015.5 139.3 L1013.4 138.1 L1011.2 137 L1009.1 135.8 L1007 134.6 L1004.9 133.4 L1002.9 132.3 L1000.8 131.2 L998.7 130 L996.6 128.9 L994.5 127.8 L992.5 126.7 L990.4 125.6 L988.4 124.6 L986.3 123.5 L984.3 122.5 L982.3 121.5 L980.2 120.5 L978.2 119.5 L976.2 118.5 L974.2 117.5 L972.3 116.6 L970.3 115.7 L968.3 114.7 L966.4 113.8 L964.4 113 L962.5 112.1 L960.6 111.3 L958.7 110.5 L956.8 109.7 L954.9 108.9 L953 108.2 L951.1 107.4 L949.3 106.7 L947.4 106.1 L945.6 105.4 L943.8 104.8 L942 104.2 L940.2 103.6 L938.4 103 L936.6 102.5 L934.8 102 L933.1 101.5 L931.3 101.1 L929.6 100.7 L927.9 100.3 L926.1 99.9 L924.4 99.6 L922.7 99.3 L921 99 L919.4 98.8 L917.7 98.6 L916 98.4 L914.3 98.3 L912.7 98.2 L911 98.1 L909.4 98 L907.7 98 L906.1 98.1 L904.4 98.1 L902.8 98.2 L901.1 98.3 L899.5 98.5 L897.9 98.6 L896.2 98.8 L894.6 99.1 L892.9 99.4 L891.3 99.7 L889.6 100 L888 100.4 L886.3 100.8 L884.6 101.2 L883 101.6 L881.3 102.1 L879.6 102.6 L877.9 103.2 L876.2 103.7 L874.5 104.3 L872.8 104.9 L871.1 105.6 L869.4 106.2 L867.6 106.9 L865.9 107.6 L864.2 108.3 L862.4 109.1 L860.6 109.9 L858.9 110.7 L857.1 111.5 L855.3 112.3 L853.5 113.2 L851.7 114.1 L849.9 115 L848.1 115.9 L846.3 116.8 L844.5 117.8 L842.6 118.7 L840.8 119.7 L838.9 120.7 L837.1 121.7 L835.2 122.7 L833.3 123.8 L831.5 124.8 L829.6 125.9 L827.7 127 L825.8 128.1 L823.9 129.2 L822 130.3 L820.1 131.4 L818.2 132.6 L816.3 133.7 L814.4 134.9 L812.5 136.1 L810.5 137.2 L808.6 138.4 L806.7 139.6 L804.8 140.8 L802.8 142.1 L800.9 143.3 L799 144.5 L797 145.8 L795.1 147 L793.2 148.3 L791.2 149.6 L789.3 150.8 L787.3 152.1 L785.4 153.4 L783.5 154.7 L781.5 156 L779.6 157.3 L777.7 158.6 L775.7 159.9 L773.8 161.3 L771.9 162.6 L770 163.9 L768 165.3 L766.1 166.6 L764.2 168 L762.3 169.3 L760.4 170.7 L758.5 172 L756.6 173.4 L754.7 174.8 L752.8 176.2 L750.9 177.5 L749 178.9 L747.2 180.3 L745.3 181.7 L743.4 183.1 L741.6 184.5 L739.7 185.9 L737.9 187.3 L736 188.7 L734.2 190.1 L732.4 191.5 L730.6 193 L728.8 194.4 L727 195.8 L725.2 197.2 L723.4 198.7 L721.6 200.1 L719.8 201.5 L718.1 203 L716.3 204.4 L714.6 205.8 L712.9 207.3 L711.1 208.7 L709.4 210.2 L707.7 211.6 L706 213.1 L704.3 214.5 L702.7 216 L701 217.5 L699.3 218.9 L697.7 220.4 L696.1 221.8 L694.5 223.3 L692.8 224.8 L691.3 226.2 L689.7 227.7 L688.1 229.2 L686.5 230.7 L685 232.1 L683.4 233.6 L681.9 235.1 L680.4 236.6 L678.9 238 L677.4 239.5 L675.9 241 L674.5 242.5 L673 244 L671.6 245.5 L670.2 246.9 L668.8 248.4 L667.4 249.9 L666 251.4 L664.6 252.9 L663.3 254.4 L661.9 255.9 L660.6 257.4 L659.3 258.9 L658 260.4 L656.7 261.9 L655.5 263.4 L654.2 264.9 L653 266.4 L651.8 267.9 L650.6 269.4 L649.4 270.9 L648.2 272.4 L647 273.9 L645.9 275.4 L644.8 276.9 L643.7 278.4 L642.6 279.9 L641.5 281.4 L640.4 282.9 L639.4 284.4 L638.3 285.9 L637.3 287.4 L636.3 288.9 L635.4 290.4 L634.4 291.9 L633.4 293.4 L632.5 294.9 L631.6 296.5 L630.7 298 L629.8 299.5 L629 301 L628.1 302.5 L627.3 304 L626.5 305.5 L625.7 307 L624.9 308.5 L624.1 310 L623.4 311.5 L622.7 313.1 L622 314.6 L621.3 316.1 L620.6 317.6 L619.9 319.1 L619.3 320.6 L618.7 322.1 L618.1 323.6 L617.5 325.1 L616.9 326.6 L616.4 328.2 L615.8 329.7 L615.3 331.2 L614.8 332.7 L614.4 334.2 L613.9 335.7 L613.5 337.2 L613 338.7 L612.6 340.2 L612.2 341.7 L611.9 343.2 L611.5 344.8 L611.2 346.3 L610.9 347.8 L610.6 349.3 L610.3 350.8 L610 352.3 L609.8 353.8 L609.6 355.3 L609.4 356.8 L609.2 358.3 L609 359.8 L608.9 361.3 L608.7 362.8 L608.6 364.3 L608.5 365.8 L608.4 367.3 L608.4 368.8 L608.3 370.3 L608.3 371.8 L608.3 373.3 L608.3 374.8"/><path d="M1095.8 180 L1093.8 178.5 L1091.8 176.9 L1089.8 175.4 L1087.7 173.9 L1085.7 172.3 L1083.6 170.8 L1081.6 169.3 L1079.5 167.8 L1077.4 166.3 L1075.3 164.7 L1073.2 163.2 L1071.1 161.7 L1069 160.2 L1066.9 158.7 L1064.8 157.2 L1062.6 155.7 L1060.5 154.2 L1058.3 152.7 L1056.2 151.2 L1054 149.7 L1051.8 148.2 L1049.6 146.8 L1047.5 145.3 L1045.3 143.8 L1043.1 142.3 L1040.9 140.9 L1038.7 139.4 L1036.5 137.9 L1034.3 136.5 L1032.1 135 L1029.8 133.6 L1027.6 132.2 L1025.4 130.7 L1023.2 129.3 L1020.9 127.9 L1018.7 126.5 L1016.5 125 L1014.3 123.6 L1012 122.2 L1009.8 120.8 L1007.6 119.5 L1005.4 118.1 L1003.1 116.7 L1000.9 115.3 L998.7 114 L996.5 112.7 L994.3 111.3 L992.1 110 L989.9 108.7 L987.7 107.4 L985.5 106.1 L983.3 104.8 L981.1 103.5 L979 102.3 L976.8 101 L974.6 99.8 L972.5 98.6 L970.4 97.4 L968.2 96.2 L966.1 95 L964 93.8 L961.9 92.7 L959.9 91.6 L957.8 90.5 L955.7 89.4 L953.7 88.3 L951.7 87.3 L949.7 86.3 L947.7 85.3 L945.7 84.4 L943.7 83.4 L941.8 82.5 L939.9 81.6 L937.9 80.8 L936 80 L934.2 79.2 L932.3 78.4 L930.5 77.7 L928.6 77 L926.8 76.4 L925 75.8 L923.3 75.2 L921.5 74.7 L919.8 74.2 L918 73.8 L916.3 73.4 L914.6 73 L912.9 72.7 L911.2 72.5 L909.6 72.3 L907.9 72.1 L906.3 72 L904.6 72 L903 72 L901.3 72 L899.7 72.1 L898 72.2 L896.4 72.4 L894.7 72.7 L893.1 73 L891.4 73.3 L889.7 73.7 L888 74.1 L886.3 74.5 L884.6 75.1 L882.9 75.6 L881.2 76.2 L879.5 76.8 L877.7 77.5 L876 78.2 L874.2 78.9 L872.4 79.7 L870.6 80.5 L868.8 81.4 L867 82.2 L865.1 83.1 L863.3 84.1 L861.4 85 L859.5 86 L857.6 87 L855.7 88 L853.8 89.1 L851.8 90.2 L849.9 91.2 L847.9 92.4 L846 93.5 L844 94.6 L842 95.8 L840 97 L838 98.2 L836 99.4 L833.9 100.6 L831.9 101.9 L829.9 103.1 L827.8 104.4 L825.8 105.7 L823.7 107 L821.7 108.3 L819.6 109.6 L817.5 110.9 L815.4 112.2 L813.4 113.6 L811.3 114.9 L809.2 116.3 L807.1 117.7 L805 119 L802.9 120.4 L800.8 121.8 L798.8 123.2 L796.7 124.6 L794.6 126 L792.5 127.4 L790.4 128.9 L788.3 130.3 L786.2 131.7 L784.1 133.2 L782 134.6 L780 136 L777.9 137.5 L775.8 139 L773.7 140.4 L771.7 141.9 L769.6 143.3 L767.6 144.8 L765.5 146.3 L763.5 147.8 L761.4 149.3 L759.4 150.8 L757.3 152.2 L755.3 153.7 L753.3 155.2 L751.3 156.7 L749.3 158.2 L747.3 159.7 L745.3 161.2 L743.3 162.8 L741.3 164.3 L739.3 165.8 L737.4 167.3 L735.4 168.8 L733.5 170.4 L731.6 171.9 L729.6 173.4 L727.7 174.9 L725.8 176.5 L723.9 178 L722 179.5 L720.1 181.1 L718.3 182.6 L716.4 184.1 L714.6 185.7 L712.7 187.2 L710.9 188.8 L709.1 190.3 L707.3 191.9 L705.5 193.4 L703.7 195 L702 196.5 L700.2 198.1 L698.5 199.6 L696.8 201.2 L695 202.7 L693.3 204.3 L691.6 205.8 L690 207.4 L688.3 209 L686.7 210.5 L685 212.1 L683.4 213.6 L681.8 215.2 L680.2 216.8 L678.6 218.3 L677.1 219.9 L675.5 221.5 L674 223 L672.5 224.6 L671 226.2 L669.5 227.8 L668 229.3 L666.5 230.9 L665.1 232.5 L663.7 234 L662.2 235.6 L660.9 237.2 L659.5 238.8 L658.1 240.3 L656.8 241.9 L655.4 243.5 L654.1 245.1 L652.8 246.7 L651.5 248.2 L650.3 249.8 L649 251.4 L647.8 253 L646.6 254.6 L645.4 256.1 L644.2 257.7 L643.1 259.3 L641.9 260.9 L640.8 262.5 L639.7 264 L638.6 265.6 L637.5 267.2 L636.5 268.8 L635.4 270.4 L634.4 272 L633.4 273.5 L632.4 275.1 L631.5 276.7 L630.5 278.3 L629.6 279.9 L628.7 281.5 L627.8 283.1 L627 284.6 L626.1 286.2 L625.3 287.8 L624.5 289.4 L623.7 291 L622.9 292.6 L622.2 294.2 L621.4 295.8 L620.7 297.3 L620 298.9 L619.3 300.5 L618.7 302.1 L618.1 303.7 L617.4 305.3 L616.8 306.9 L616.3 308.5 L615.7 310 L615.2 311.6 L614.7 313.2 L614.2 314.8 L613.7 316.4 L613.2 318 L612.8 319.6 L612.4 321.2 L612 322.8 L611.6 324.3 L611.3 325.9 L610.9 327.5 L610.6 329.1 L610.3 330.7 L610 332.3 L609.8 333.9 L609.5 335.5 L609.3 337 L609.1 338.6 L609 340.2 L608.8 341.8 L608.7 343.4 L608.6 345 L608.5 346.6 L608.4 348.2 L608.3 349.7 L608.3 351.3 L608.3 352.9 L608.3 354.5 L608.3 356.1 L608.4 357.7 L608.4 359.3"/></g><path d="M960.8 231.1 L961.5 229.8 L962.2 228.4 L962.9 227 L963.6 225.7 L964.3 224.3 L965 222.9 L965.7 221.6 L966.4 220.2 L967.1 218.9 L967.8 217.5 L968.5 216.2 L969.2 214.8 L969.9 213.5 L970.5 212.1 L971.2 210.8 L971.9 209.5 L972.6 208.2 L973.2 206.8 L973.9 205.5 L974.5 204.2 L975.2 202.9 L975.9 201.6 L976.5 200.3 L977.2 198.9 L977.8 197.6 L978.5 196.4 L979.1 195.1 L979.8 193.8 L980.4 192.5 L981 191.2 L981.7 189.9 L982.3 188.7 L982.9 187.4 L983.6 186.1 L984.2 184.9 L984.8 183.6 L985.4 182.4 L986.1 181.2 L986.7 179.9 L987.3 178.7 L987.9 177.5 L988.5 176.3 L989.2 175.1 L989.8 173.9 L990.4 172.7 L991 171.5 L991.6 170.3 L992.2 169.1 L992.9 167.9 L993.5 166.8 L994.1 165.6 L994.7 164.5 L995.3 163.3 L995.9 162.2 L996.5 161.1 L997.2 160 L997.8 158.9 L998.4 157.8 L999 156.7 L999.7 155.6 L1000.3 154.5 L1000.9 153.5 L1001.5 152.4 L1002.2 151.4 L1002.8 150.4 L1003.5 149.4 L1004.1 148.3 L1004.8 147.4 L1005.4 146.4 L1006.1 145.4 L1006.8 144.4 L1007.4 143.5 L1008.1 142.6 L1008.8 141.6 L1009.5 140.7 L1010.2 139.8 L1010.9 139 L1011.7 138.1 L1012.4 137.2 L1013.1 136.4 L1013.9 135.6 L1014.6 134.8 L1015.4 134 L1016.2 133.2 L1017 132.4 L1017.8 131.7 L1018.6 131 L1019.5 130.3 L1020.3 129.6 L1021.2 128.9 L1022.1 128.3 L1023 127.6 L1023.9 127 L1024.9 126.4 L1025.8 125.8 L1026.8 125.3 L1027.8 124.7 L1028.8 124.2 L1029.9 123.7 L1030.9 123.3 L1032 122.8 L1033.1 122.4 L1034.2 122 L1035.4 121.6 L1036.6 121.2 L1037.8 120.9 L1039.1 120.6 L1040.3 120.3 L1041.6 120 L1042.9 119.8 L1044.3 119.6 L1045.7 119.4 L1047.1 119.2 L1048.6 119 L1050 118.9 L1051.6 118.8 L1053.1 118.7 L1054.7 118.7 L1056.3 118.7 L1058 118.7 L1059.6 118.7 L1061.4 118.7 L1063.1 118.8 L1064.9 118.9 L1066.8 119 L1068.6 119.2 L1070.5 119.3 L1072.5 119.5 L1074.4 119.8 L1076.5 120 L1078.5 120.3 L1080.6 120.6 L1082.7 120.9 L1084.9 121.2 L1087.1 121.6 L1089.3 122 L1091.6 122.4 L1093.9 122.8 L1096.2 123.2 L1098.6 123.7 L1101 124.2 L1103.4 124.7 L1105.9 125.3 L1108.4 125.8 L1110.9 126.4 L1113.5 127 L1116.1 127.6 L1118.8 128.2 L1121.4 128.9 L1124.1 129.6 L1126.8 130.2 L1129.6 130.9 L1132.4 131.7 L1135.2 132.4 L1138 133.2 L1140.9 133.9 L1143.8 134.7 L1146.7 135.5 L1149.6 136.4 L1152.6 137.2 L1155.6 138.1 L1158.6 138.9 L1161.6 139.8 L1164.6 140.7 L1167.7 141.6 L1170.8 142.5 L1173.8 143.5 L1177 144.4 L1180.1 145.4 L1183.2 146.3 L1186.4 147.3 L1189.6 148.3 L1192.7 149.3 L1195.9 150.3 L1199.2 151.4 L1202.4 152.4 L1205.6 153.4 L1208.8 154.5 L1212.1 155.6 L1215.3 156.6 L1218.6 157.7 L1221.9 158.8 L1225.2 159.9 L1228.4 161 L1231.7 162.2 L1235 163.3" stroke="#4a4a4a" stroke-width="0.9" fill="none"/><path d="M886.9 227.5L878.9 236M882 236.6L889.3 244.8M987.7 212.8L981 255M973.7 211L992.6 220.7M1025 203.3L1038 217.5M1040.8 232.5L1051.3 237M1064.2 226.7L1065.3 236.7M1117.5 214.2L1127.5 221.7M1015.8 290L1014.2 299.2M1017.6 316L1017.8 328M900 327.5L921.4 334M950.8 286.7L957.5 288.3M982.2 339.4L993.9 345M981.1 346.7L987.8 353.9M1031.3 376.7L1040.7 382.7M1063 375L1067.7 376.7M993.3 383.3L997.8 385M917 360.7L940 368M900 375.5L911 381.8M832.5 264L846.7 275.8M815 310.8L821.7 315M805.8 327.5L811.7 332.5M790.8 337.5L797.5 340M730 323.3L740.8 330M712.7 335.3L723.3 341.3M645.3 350.7L652 356M889.2 360.8L903.3 369.7M789.2 186.3L799.2 189.2M840.3 180.8L835.8 195M819.2 250.8L820 256.7M584 286.7L590.7 296M621.3 346.7L608.7 340.7M1068.3 171.7L1073.3 175M1095.8 180L1107.5 189.2M961.7 231.7L937.5 274.2" stroke="#8a8a8a" stroke-width="1.1" fill="none"/><g fill="#7a1a8a"><circle cx="878.9" cy="236" r="1.1"/><circle cx="889.3" cy="244.8" r="1.1"/><circle cx="981" cy="255" r="1.1"/><circle cx="992.6" cy="220.7" r="1.1"/><circle cx="1038" cy="217.5" r="1.1"/><circle cx="1051.3" cy="237" r="1.1"/><circle cx="1065.3" cy="236.7" r="1.1"/><circle cx="1127.5" cy="221.7" r="1.1"/><circle cx="1014.2" cy="299.2" r="1.1"/><circle cx="1017.8" cy="328" r="1.1"/><circle cx="921.4" cy="334" r="1.1"/><circle cx="957.5" cy="288.3" r="1.1"/><circle cx="993.9" cy="345" r="1.1"/><circle cx="987.8" cy="353.9" r="1.1"/><circle cx="1040.7" cy="382.7" r="1.1"/><circle cx="1067.7" cy="376.7" r="1.1"/><circle cx="997.8" cy="385" r="1.1"/><circle cx="940" cy="368" r="1.1"/><circle cx="911" cy="381.8" r="1.1"/><circle cx="846.7" cy="275.8" r="1.1"/><circle cx="821.7" cy="315" r="1.1"/><circle cx="811.7" cy="332.5" r="1.1"/><circle cx="797.5" cy="340" r="1.1"/><circle cx="740.8" cy="330" r="1.1"/><circle cx="723.3" cy="341.3" r="1.1"/><circle cx="652" cy="356" r="1.1"/><circle cx="903.3" cy="369.7" r="1.1"/><circle cx="799.2" cy="189.2" r="1.1"/><circle cx="835.8" cy="195" r="1.1"/><circle cx="820" cy="256.7" r="1.1"/><circle cx="590.7" cy="296" r="1.1"/><circle cx="608.7" cy="340.7" r="1.1"/><circle cx="1073.3" cy="175" r="1.1"/><circle cx="1107.5" cy="189.2" r="1.1"/><circle cx="937.5" cy="274.2" r="1.1"/></g><path d="M514.4 164.9 L518.2 163.6 L521.9 162.3 L525.7 161 L529.4 159.7 L533.2 158.5 L536.9 157.2 L540.7 155.9 L544.5 154.7 L548.2 153.4 L552 152.2 L555.7 150.9 L559.5 149.7 L563.3 148.5 L567 147.3 L570.8 146.1 L574.5 144.9 L578.2 143.7 L581.9 142.6 L585.7 141.4 L589.4 140.2 L593.1 139.1 L596.8 138 L600.4 136.8 L604.1 135.7 L607.7 134.6 L611.4 133.5 L615 132.5 L618.6 131.4 L622.1 130.3 L625.7 129.3 L629.2 128.3 L632.7 127.3 L636.2 126.3 L639.7 125.3 L643.1 124.3 L646.5 123.4 L649.9 122.4 L653.3 121.5 L656.6 120.6 L659.9 119.7 L663.2 118.8 L666.4 118 L669.6 117.2 L672.7 116.3 L675.9 115.5 L678.9 114.8 L682 114 L685 113.3 L687.9 112.6 L690.9 111.9 L693.7 111.2 L696.6 110.6 L699.4 109.9 L702.1 109.3 L704.8 108.8 L707.5 108.2 L710.1 107.7 L712.6 107.2 L715.1 106.7 L717.6 106.3 L720 105.9 L722.3 105.5 L724.6 105.1 L726.8 104.8 L729 104.5 L731.2 104.2 L733.3 103.9 L735.3 103.7 L737.3 103.5 L739.2 103.4 L741.1 103.2 L742.9 103.1 L744.7 103.1 L746.4 103 L748.1 103 L749.7 103 L751.3 103.1 L752.8 103.1 L754.3 103.3 L755.7 103.4 L757.1 103.6 L758.4 103.8 L759.7 104 L761 104.2 L762.2 104.5 L763.3 104.8 L764.4 105.2 L765.5 105.6 L766.5 106 L767.5 106.4 L768.5 106.8 L769.4 107.3 L770.3 107.8 L771.2 108.3 L772 108.9 L772.8 109.5 L773.6 110.1 L774.3 110.7 L775 111.4 L775.7 112 L776.4 112.7 L777 113.4 L777.6 114.2 L778.2 114.9 L778.8 115.7 L779.3 116.5 L779.9 117.3 L780.4 118.2 L780.9 119 L781.3 119.9 L781.8 120.8 L782.2 121.7 L782.7 122.6 L783.1 123.6 L783.5 124.5 L783.9 125.5 L784.3 126.5 L784.6 127.5 L785 128.5 L785.3 129.5 L785.7 130.6 L786 131.6 L786.4 132.7 L786.7 133.8 L787 134.9 L787.3 136 L787.6 137.1 L787.9 138.2 L788.2 139.3 L788.5 140.5 L788.8 141.6 L789 142.8 L789.3 144 L789.6 145.2 L789.9 146.4 L790.1 147.6 L790.4 148.8 L790.7 150 L790.9 151.2 L791.2 152.5 L791.5 153.7 L791.7 154.9 L792 156.2 L792.3 157.5 L792.5 158.7 L792.8 160 L793.1 161.3 L793.3 162.6 L793.6 163.9 L793.9 165.2 L794.2 166.5 L794.4 167.8 L794.7 169.1 L795 170.4 L795.3 171.8 L795.6 173.1 L795.9 174.4 L796.2 175.8 L796.4 177.1 L796.7 178.5 L797 179.8" stroke="#ffee00" stroke-width="1.3" stroke-dasharray="1.3 2.4" fill="none"/>
<path d="M797 179.8 L797.3 181.1 L797.6 182.5 L797.9 183.8 L798.3 185.2 L798.6 186.5 L798.9 187.8 L799.2 189.2" stroke="#ffee00" stroke-width="1.6" fill="none"/>
<circle cx="799.2" cy="189.2" r="1.3" fill="#ff4a1a"/>
<path d="M477 183.5 L480.2 182.5 L483.5 181.4 L486.8 180.4 L490 179.3 L493.3 178.3 L496.5 177.3 L499.8 176.3 L503 175.3 L506.2 174.3 L509.5 173.3 L512.7 172.3 L515.9 171.3 L519.1 170.4 L522.3 169.4 L525.5 168.5 L528.7 167.6 L531.9 166.6 L535 165.7 L538.2 164.8 L541.3 163.9 L544.4 163 L547.5 162.2 L550.6 161.3 L553.7 160.5 L556.8 159.6 L559.8 158.8 L562.8 158 L565.9 157.2 L568.8 156.4 L571.8 155.6 L574.8 154.9 L577.7 154.1 L580.6 153.4 L583.5 152.7 L586.4 152 L589.2 151.3 L592.1 150.6 L594.9 149.9 L597.6 149.3 L600.4 148.6 L603.1 148 L605.8 147.4 L608.5 146.8 L611.1 146.2 L613.7 145.7 L616.3 145.1 L618.9 144.6 L621.4 144.1 L623.9 143.6 L626.4 143.1 L628.8 142.7 L631.2 142.2 L633.6 141.8 L635.9 141.4 L638.3 141 L640.5 140.6 L642.8 140.3 L645 140 L647.2 139.6 L649.4 139.3 L651.5 139.1 L653.6 138.8 L655.6 138.6 L657.6 138.4 L659.6 138.2 L661.6 138 L663.5 137.8 L665.4 137.7 L667.2 137.5 L669 137.4 L670.8 137.4 L672.6 137.3 L674.3 137.3 L676 137.2 L677.7 137.2 L679.3 137.2 L680.9 137.3 L682.4 137.3 L684 137.4 L685.5 137.5 L686.9 137.6 L688.4 137.8 L689.8 137.9 L691.1 138.1 L692.5 138.3 L693.8 138.5 L695.1 138.7 L696.4 139 L697.6 139.3 L698.8 139.5 L700 139.9 L701.1 140.2 L702.3 140.5 L703.4 140.9 L704.5 141.3 L705.5 141.7 L706.6 142.1 L707.6 142.5 L708.6 143 L709.5 143.4 L710.5 143.9 L711.4 144.4 L712.3 145 L713.2 145.5 L714.1 146.1 L714.9 146.6 L715.8 147.2 L716.6 147.8 L717.4 148.4 L718.2 149.1 L719 149.7 L719.7 150.4 L720.5 151 L721.2 151.7 L721.9 152.4 L722.6 153.1 L723.3 153.9 L724 154.6 L724.6 155.4 L725.3 156.2 L725.9 156.9 L726.6 157.7 L727.2 158.5 L727.8 159.4 L728.4 160.2 L729 161 L729.6 161.9 L730.2 162.8 L730.8 163.6 L731.4 164.5 L731.9 165.4 L732.5 166.3 L733.1 167.2 L733.6 168.2 L734.2 169.1 L734.7 170.1 L735.3 171 L735.8 172 L736.3 173 L736.9 173.9 L737.4 174.9 L737.9 175.9 L738.4 176.9 L739 178 L739.5 179 L740 180 L740.5 181.1 L741 182.1 L741.6 183.2 L742.1 184.2 L742.6 185.3 L743.1 186.4 L743.6 187.5 L744.2 188.5 L744.7 189.6 L745.2 190.7 L745.7 191.9 L746.3 193 L746.8 194.1 L747.3 195.2 L747.8 196.4 L748.4 197.5 L748.9 198.6 L749.4 199.8 L750 200.9 L750.5 202.1 L751.1 203.3 L751.6 204.4 L752.2 205.6 L752.7 206.8 L753.3 208 L753.8 209.2 L754.4 210.4 L755 211.6 L755.6 212.8 L756.1 214 L756.7 215.2 L757.3 216.4 L757.9 217.6 L758.5 218.8 L759.1 220.1 L759.7 221.3 L760.3 222.5 L760.9 223.8 L761.5 225 L762.1 226.2 L762.8 227.5 L763.4 228.7 L764 230 L764.7 231.2 L765.3 232.5 L765.9 233.8 L766.6 235 L767.3 236.3 L767.9 237.6 L768.6 238.8 L769.3 240.1 L769.9 241.4 L770.6 242.7 L771.3 243.9 L772 245.2 L772.7 246.5 L773.4 247.8 L774.1 249.1 L774.8 250.4 L775.6 251.7 L776.3 253 L777 254.3 L777.8 255.6 L778.5 256.9 L779.3 258.2 L780 259.5 L780.8 260.8 L781.5 262.1 L782.3 263.4 L783.1 264.7 L783.9 266 L784.6 267.4 L785.4 268.7 L786.2 270 L787 271.3 L787.8 272.6 L788.7 274" stroke="#ffee00" stroke-width="1.3" stroke-dasharray="1.3 2.4" fill="none"/>
<path d="M788.7 274 L789.4 275.2 L790.2 276.5 L791 277.7 L791.8 279 L792.6 280.3 L793.4 281.5 L794.2 282.8 L795 284 L795.8 285.3 L796.6 286.6 L797.5 287.8 L798.3 289.1 L799.1 290.4 L800 291.6 L800.8 292.9 L801.6 294.2 L802.5 295.5 L803.3 296.7 L804.2 298" stroke="#ffee00" stroke-width="1.6" fill="none"/>
<circle cx="804.2" cy="298" r="1.3" fill="#ff4a1a"/>
<path d="M511.9 157.5 L515.9 156.2 L519.9 154.9 L523.9 153.6 L527.9 152.3 L531.9 151 L535.9 149.7 L539.9 148.4 L543.9 147.2 L547.9 145.9 L551.9 144.7 L555.9 143.4 L559.9 142.2 L563.8 141 L567.8 139.8 L571.8 138.6 L575.7 137.4 L579.7 136.2 L583.6 135 L587.5 133.9 L591.4 132.7 L595.3 131.6 L599.2 130.4 L603.1 129.3 L606.9 128.2 L610.7 127.1 L614.5 126 L618.3 125 L622.1 123.9 L625.8 122.9 L629.5 121.9 L633.2 120.8 L636.8 119.8 L640.5 118.9 L644 117.9 L647.6 117 L651.1 116 L654.6 115.1 L658.1 114.2 L661.5 113.3 L664.9 112.5 L668.2 111.6 L671.5 110.8 L674.8 110 L678 109.3 L681.1 108.5 L684.2 107.8 L687.3 107.1 L690.3 106.4 L693.3 105.7 L696.2 105.1 L699.1 104.5 L701.9 103.9 L704.6 103.3 L707.3 102.8 L710 102.3 L712.5 101.8 L715.1 101.4 L717.5 101 L719.9 100.6 L722.3 100.2 L724.6 99.9 L726.8 99.6 L729 99.3 L731.1 99.1 L733.1 98.9 L735.1 98.7 L737 98.6 L738.9 98.4 L740.7 98.4 L742.4 98.3 L744.1 98.3 L745.7 98.3 L747.3 98.4 L748.8 98.4 L750.2 98.6 L751.6 98.7 L753 98.9 L754.3 99.1 L755.5 99.3 L756.7 99.6 L757.8 99.9 L758.9 100.2 L759.9 100.6 L760.9 101 L761.8 101.4 L762.7 101.9 L763.6 102.3 L764.4 102.8 L765.2 103.4 L765.9 103.9 L766.6 104.5 L767.3 105.1 L767.9 105.8 L768.5 106.4 L769.1 107.1 L769.6 107.8 L770.1 108.5 L770.6 109.3 L771 110.1 L771.4 110.9 L771.8 111.7 L772.2 112.5 L772.6 113.4 L772.9 114.3 L773.2 115.2 L773.5 116.1 L773.8 117 L774.1 118 L774.3 118.9 L774.5 119.9 L774.8 120.9 L775 121.9 L775.1 122.9 L775.3 124 L775.5 125 L775.6 126.1 L775.8 127.2 L775.9 128.3 L776.1 129.4 L776.2 130.5 L776.3 131.6 L776.4 132.8 L776.5 133.9 L776.6 135.1 L776.7 136.3 L776.8 137.5 L776.9 138.7 L777 139.9 L777 141.1 L777.1 142.3 L777.2 143.5 L777.3 144.8 L777.3 146 L777.4 147.3 L777.5 148.5 L777.6 149.8 L777.6 151.1 L777.7 152.3 L777.8 153.6 L777.8 154.9 L777.9 156.2 L778 157.5 L778.1 158.9 L778.1 160.2 L778.2 161.5 L778.3 162.8 L778.4 164.2 L778.5 165.5 L778.5 166.9 L778.6 168.2 L778.7 169.6 L778.8 170.9 L778.9 172.3 L779 173.7 L779.1 175 L779.3 176.4 L779.4 177.8 L779.5 179.2 L779.6 180.6 L779.8 182 L779.9 183.4 L780 184.8 L780.2 186.2 L780.3 187.6 L780.5 189 L780.6 190.4 L780.8 191.8 L781 193.3 L781.1 194.7 L781.3 196.1 L781.5 197.5 L781.7 199 L781.9 200.4 L782.1 201.8 L782.3 203.3 L782.5 204.7 L782.7 206.2 L783 207.6 L783.2 209.1 L783.4 210.5 L783.7 212 L783.9 213.4 L784.2 214.9 L784.4 216.3 L784.7 217.8 L785 219.3 L785.2 220.7 L785.5 222.2 L785.8 223.7 L786.1 225.1 L786.4 226.6 L786.7 228.1 L787.1 229.6 L787.4 231 L787.7 232.5 L788 234 L788.4 235.5 L788.7 237 L789.1 238.4 L789.5 239.9 L789.8 241.4 L790.2 242.9 L790.6 244.4 L791 245.9 L791.4 247.4 L791.8 248.9 L792.2 250.3 L792.6 251.8 L793 253.3 L793.4 254.8 L793.9 256.3 L794.3 257.8 L794.8 259.3 L795.2 260.8 L795.7 262.3 L796.1 263.8 L796.6 265.3 L797.1 266.8 L797.6 268.3 L798.1 269.8 L798.6 271.3 L799.1 272.8 L799.6 274.3 L800.1 275.8 L800.6 277.3 L801.1 278.9 L801.7 280.4" stroke="#ffee00" stroke-width="1.3" stroke-dasharray="1.3 2.4" fill="none"/>
<path d="M801.7 280.4 L802.2 281.7 L802.6 283.1 L803.1 284.4 L803.6 285.8 L804.1 287.1 L804.6 288.5 L805.2 289.8 L805.7 291.2 L806.2 292.5" stroke="#ffee00" stroke-width="1.6" fill="none"/>
<circle cx="806.2" cy="292.5" r="1.3" fill="#ff4a1a"/>
<path d="M490 175 L493.4 173.3 L496.8 171.7 L500.3 170 L503.8 168.4 L507.3 166.7 L510.8 165.1 L514.4 163.4 L518 161.7 L521.6 160.1 L525.3 158.4 L529 156.8 L532.7 155.1 L536.5 153.5 L540.2 151.8 L544 150.1 L547.9 148.5 L551.7 146.8 L555.6 145.2 L559.5 143.5 L563.4 141.9 L567.4 140.2 L571.4 138.5 L575.4 136.9 L579.4 135.2 L583.5 133.6 L587.6 131.9 L591.7 130.3 L595.8 128.6 L600 126.9 L604.1 125.3 L608.3 123.6 L612.5 122 L616.8 120.3 L621 118.7 L625.3 117 L629.6 115.3 L633.9 113.7 L638.3 112 L642.7 110.4 L647 108.7 L651.4 107.1 L655.8 105.4 L660.3 103.8 L664.7 102.1 L669.2 100.5 L673.7 98.8 L678.2 97.1 L682.7 95.5 L687.3 93.8 L691.8 92.2 L696.4 90.5 L701 88.9 L705.6 87.2 L710.2 85.6 L714.8 83.9 L719.4 82.3 L724.1 80.6 L728.7 79 L733.4 77.3 L738.1 75.7 L742.8 74 L747.5 72.4 L752.2 70.7 L756.9 69.1 L761.7 67.4 L766.4 65.8 L771.1 64.1 L775.9 62.5 L780.6 60.9 L785.4 59.2 L790.2 57.6 L794.9 56 L799.7 54.3 L804.5 52.7 L809.3 51.1 L814 49.4 L818.8 47.8 L823.6 46.2 L828.3 44.6 L833 43 L837.8 41.4 L842.5 39.8 L847.2 38.2 L851.8 36.6 L856.4 35.1 L861 33.6 L865.4 32.1 L869.8 30.6 L874 29.2 L878.1 27.9 L881.8 26.7 L885.2 25.7 L888.1 25 L890.5 24.5 L892.1 24.5 L893.3 24.9 L894.1 25.6 L894.6 26.6 L895.1 27.8 L895.4 29.1 L895.8 30.5 L896.1 32 L896.4 33.5 L896.7 35 L896.9 36.5 L897.2 38.1 L897.5 39.7 L897.8 41.3 L898.1 42.9 L898.3 44.5 L898.6 46.1 L898.9 47.7 L899.1 49.3 L899.4 50.9 L899.7 52.6 L900 54.2 L900.2 55.8 L900.5 57.5 L900.8 59.1 L901.1 60.7 L901.3 62.4 L901.6 64 L901.9 65.7 L902.2 67.3 L902.4 69 L902.7 70.6 L903 72.3 L903.2 73.9 L903.5 75.5 L903.8 77.2 L904.1 78.8 L904.3 80.5 L904.6 82.1 L904.9 83.8 L905.1 85.4 L905.4 87.1 L905.7 88.8 L906 90.4 L906.2 92.1 L906.5 93.7 L906.8 95.4 L907 97 L907.3 98.7 L907.6 100.3 L907.8 102 L908.1 103.6 L908.4 105.3 L908.6 106.9 L908.9 108.6 L909.2 110.3 L909.4 111.9 L909.7 113.6 L910 115.2 L910.2 116.9 L910.5 118.5 L910.7 120.2 L911 121.8 L911.3 123.5 L911.5 125.2 L911.8 126.8 L912 128.5 L912.3 130.1 L912.5 131.8 L912.8 133.4 L913 135.1 L913.3 136.8 L913.5 138.4 L913.8 140.1 L914 141.7 L914.3 143.4 L914.5 145 L914.8 146.7 L915 148.4 L915.3 150 L915.5 151.7 L915.7 153.3 L916 155 L916.2 156.6 L916.5 158.3 L916.7 160 L916.9 161.6 L917.2 163.3 L917.4 164.9 L917.6 166.6 L917.9 168.2 L918.1 169.9" stroke="#ffee00" stroke-width="1.3" stroke-dasharray="1.3 2.4" fill="none"/>
<path d="M918.1 169.9 L918.3 171.5 L918.5 173.2 L918.7 174.8 L919 176.4 L919.2 178 L919.4 179.7 L919.6 181.3 L919.8 182.9 L920 184.5 L920.2 186.2 L920.5 187.8 L920.7 189.4 L920.9 191 L921.1 192.7 L921.3 194.3 L921.5 195.9 L921.7 197.5 L921.9 199.2 L922.1 200.8 L922.3 202.4 L922.5 204 L922.7 205.7 L922.8 207.3 L923 208.9 L923.2 210.5 L923.4 212.2 L923.6 213.8 L923.8 215.4 L924 217 L924.1 218.7 L924.3 220.3 L924.5 221.9 L924.7 223.5 L924.8 225.2 L925 226.8" stroke="#ffee00" stroke-width="1.6" fill="none"/>
<circle cx="925" cy="226.8" r="1.3" fill="#ff4a1a"/>
<path d="M478.7 182.8 L481.7 181.2 L484.6 179.5 L487.7 177.9 L490.7 176.2 L493.8 174.6 L496.9 172.9 L500 171.3 L503.2 169.6 L506.4 168 L509.6 166.3 L512.8 164.7 L516.1 163 L519.4 161.4 L522.7 159.8 L526.1 158.1 L529.5 156.5 L532.9 154.8 L536.3 153.2 L539.8 151.5 L543.3 149.9 L546.8 148.2 L550.4 146.6 L554 145 L557.6 143.3 L561.2 141.7 L564.8 140 L568.5 138.4 L572.2 136.7 L575.9 135.1 L579.7 133.5 L583.4 131.8 L587.2 130.2 L591 128.5 L594.9 126.9 L598.7 125.3 L602.6 123.6 L606.5 122 L610.4 120.3 L614.3 118.7 L618.3 117.1 L622.3 115.4 L626.3 113.8 L630.3 112.2 L634.3 110.5 L638.3 108.9 L642.4 107.3 L646.5 105.6 L650.6 104 L654.7 102.4 L658.8 100.8 L663 99.1 L667.1 97.5 L671.3 95.9 L675.5 94.3 L679.7 92.6 L683.9 91 L688.1 89.4 L692.3 87.8 L696.6 86.2 L700.8 84.6 L705.1 82.9 L709.3 81.3 L713.6 79.7 L717.9 78.1 L722.2 76.5 L726.4 74.9 L730.7 73.3 L735 71.7 L739.3 70.2M1056.5 68.6 L1051.3 67 L1046 65.4 L1040.8 63.9 L1035.5 62.3 L1030.3 60.8 L1025.1 59.2 L1019.9 57.7 L1014.8 56.2 L1009.6 54.6 L1004.5 53.1 L999.5 51.7 L994.4 50.2 L989.5 48.7 L984.6 47.3 L979.7 45.9 L974.9 44.5 L970.3 43.2 L965.7 41.9 L961.2 40.7 L956.9 39.5 L952.8 38.3 L948.8 37.3 L945.1 36.3 L941.6 35.4 L938.4 34.7 L935.5 34.1 L933 33.6 L930.8 33.3 L928.9 33.2 L927.4 33.3 L926.1 33.5 L925.2 33.9 L924.5 34.5 L924 35.2 L923.7 36 L923.5 37 L923.4 38 L923.4 39.1 L923.5 40.3 L923.6 41.5 L923.8 42.8 L924.1 44.2 L924.3 45.5 L924.6 46.9 L924.9 48.3 L925.2 49.8 L925.6 51.2 L925.9 52.7 L926.3 54.2 L926.6 55.7 L927 57.3 L927.4 58.8 L927.7 60.3 L928.1 61.9 L928.5 63.4 L928.9 65 L929.3 66.6 L929.7 68.1 L930.1 69.7 L930.5 71.3 L930.9 72.9 L931.2 74.5 L931.6 76.1 L932 77.7 L932.4 79.3 L932.8 80.9 L933.2 82.5 L933.6 84.1 L934 85.7 L934.3 87.3 L934.7 88.9 L935.1 90.6 L935.5 92.2 L935.9 93.8 L936.2 95.4 L936.6 97.1 L937 98.7 L937.4 100.3 L937.7 101.9 L938.1 103.6 L938.5 105.2 L938.8 106.8 L939.2 108.4 L939.5 110.1 L939.9 111.7 L940.2 113.3 L940.6 115 L940.9 116.6 L941.3 118.3 L941.6 119.9 L941.9 121.5 L942.3 123.2 L942.6 124.8 L942.9 126.4 L943.2 128.1 L943.6 129.7 L943.9 131.4 L944.2 133 L944.5 134.6 L944.8 136.3 L945.1 137.9 L945.4 139.6 L945.7 141.2 L946 142.9 L946.3 144.5 L946.6 146.1 L946.9 147.8 L947.2 149.4 L947.5 151.1 L947.7 152.7 L948 154.4 L948.3 156 L948.5 157.7 L948.8 159.3 L949.1 160.9 L949.3 162.6 L949.6 164.2 L949.8 165.9 L950.1 167.5 L950.3 169.2 L950.5 170.8 L950.8 172.5 L951 174.1 L951.2 175.8 L951.4 177.4 L951.7 179.1 L951.9 180.7 L952.1 182.4 L952.3 184 L952.5 185.7 L952.7 187.3 L952.9 188.9 L953.1 190.6 L953.3 192.2 L953.4 193.9 L953.6 195.5 L953.8 197.2 L954 198.8 L954.1 200.5 L954.3 202.1 L954.5 203.8 L954.6 205.4 L954.8 207.1 L954.9 208.7 L955.1 210.4" stroke="#ffee00" stroke-width="1.3" stroke-dasharray="1.3 2.4" fill="none"/>
<path d="M955.1 210.4 L955.2 211.9 L955.3 213.5 L955.4 215 L955.6 216.6 L955.7 218.1 L955.8 219.7 L955.9 221.2 L956 222.8" stroke="#ffee00" stroke-width="1.6" fill="none"/>
<circle cx="956" cy="222.8" r="1.3" fill="#ff4a1a"/>
<path d="M509.3 177.4 L508.8 178.4 L508.3 179.4 L507.8 180.4 L507.2 181.4 L506.7 182.4 L506.2 183.4 L505.7 184.5 L505.1 185.5 L504.6 186.6 L504.1 187.6 L503.6 188.7 L503 189.7 L502.5 190.8 L502 191.9 L501.5 193 L501 194.1 L500.5 195.2 L500 196.3 L499.5 197.4 L499 198.5 L498.5 199.6 L498 200.8 L497.5 201.9 L497 203 L496.6 204.2 L496.1 205.3 L495.7 206.5 L495.2 207.6 L494.8 208.8 L494.4 210 L494 211.1 L493.6 212.3 L493.2 213.5 L492.8 214.7 L492.4 215.8 L492.1 217 L491.7 218.2 L491.4 219.4 L491.1 220.6 L490.8 221.8 L490.5 223.1 L490.2 224.3 L489.9 225.5 L489.6 226.7 L489.4 227.9 L489.1 229.2 L488.9 230.4 L488.7 231.6 L488.5 232.9 L488.3 234.1 L488.2 235.3 L488 236.6 L487.9 237.8 L487.8 239.1 L487.7 240.3 L487.6 241.6 L487.5 242.8 L487.5 244.1 L487.4 245.4 L487.4 246.6 L487.4 247.9 L487.4 249.2 L487.4 250.4 L487.5 251.7 L487.5 253 L487.6 254.3 L487.7 255.5 L487.8 256.8 L487.9 258.1 L488.1 259.4 L488.2 260.7 L488.4 262 L488.6 263.3 L488.8 264.5 L489.1 265.8 L489.3 267.1 L489.6 268.4 L489.9 269.7 L490.2 271 L490.5 272.3 L490.9 273.6 L491.2 274.9 L491.6 276.2 L492 277.5 L492.5 278.8 L492.9 280.2 L493.3 281.5 L493.8 282.8 L494.3 284.1 L494.8 285.4 L495.4 286.7 L495.9 288 L496.5 289.3 L497.1 290.6 L497.7 292 L498.3 293.3 L499 294.6 L499.6 295.9 L500.3 297.2 L501 298.5 L501.8 299.9 L502.5 301.2 L503.3 302.5 L504 303.8 L504.8 305.1 L505.7 306.5" stroke="#ffee00" stroke-width="1.3" stroke-dasharray="1.3 2.4" fill="none"/>
<path d="M505.7 306.5 L506.5 307.8 L507.3 309.1 L508.2 310.4 L509.1 311.7 L510 313" stroke="#ffee00" stroke-width="1.6" fill="none"/>
<circle cx="510" cy="313" r="1.3" fill="#ff4a1a"/>
<path d="M505.3 284.7 L506.6 283.3 L508 281.8 L509.3 280.4 L510.7 278.9 L512.2 277.5 L513.6 276 L515 274.6 L516.5 273.1 L518 271.7 L519.6 270.3 L521.1 268.8 L522.7 267.4 L524.3 265.9 L525.9 264.5 L527.5 263.1 L529.1 261.6 L530.8 260.2 L532.5 258.8 L534.2 257.3 L535.9 255.9 L537.7 254.5 L539.5 253 L541.3 251.6 L543.1 250.2 L544.9 248.8 L546.7 247.3 L548.6 245.9 L550.5 244.5 L552.4 243.1 L554.3 241.7 L556.3 240.2 L558.2 238.8 L560.2 237.4 L562.2 236 L564.2 234.6 L566.2 233.2 L568.3 231.8 L570.3 230.4 L572.4 229 L574.5 227.6 L576.6 226.2 L578.7 224.8 L580.9 223.4 L583 222 L585.2 220.6 L587.4 219.2 L589.6 217.9 L591.8 216.5 L594 215.1 L596.2 213.7 L598.5 212.3 L600.7 211 L603 209.6 L605.3 208.2 L607.6 206.9 L609.9 205.5 L612.3 204.2 L614.6 202.8 L616.9 201.5 L619.3 200.1 L621.7 198.8 L624 197.5 L626.4 196.1 L628.8 194.8 L631.2 193.5 L633.7 192.1 L636.1 190.8 L638.5 189.5 L641 188.2 L643.4 186.9 L645.9 185.6 L648.3 184.3 L650.8 183 L653.3 181.7 L655.7 180.4 L658.2 179.2 L660.7 177.9 L663.2 176.6 L665.7 175.4 L668.2 174.1 L670.7 172.9 L673.2 171.6 L675.7 170.4 L678.3 169.1 L680.8 167.9 L683.3 166.7 L685.8 165.5 L688.3 164.3 L690.9 163.1 L693.4 161.9 L695.9 160.7 L698.4 159.5 L700.9 158.4 L703.5 157.2 L706 156 L708.5 154.9 L711 153.8 L713.5 152.6 L716 151.5 L718.5 150.4 L721 149.3 L723.5 148.2 L725.9 147.2 L728.4 146.1 L730.9 145 L733.3 144 L735.8 143 L738.2 141.9 L740.7 140.9 L743.1 139.9 L745.5 138.9 L747.9 138 L750.3 137" stroke="#adff2f" stroke-width="1.3" stroke-dasharray="1.3 2.4" fill="none"/>
<path d="M750.3 137 L752.6 136.1 L755 135.2 L757.3 134.3 L759.5 133.4 L761.8 132.5 L764.1 131.7 L766.3 130.8 L768.6 130 L770.8 129.2" stroke="#adff2f" stroke-width="1.6" fill="none"/>
<circle cx="770.8" cy="129.2" r="1.3" fill="#ff4a1a"/>
<path d="M497 304.5 L498.6 303.8 L500.2 303.1 L501.8 302.4 L503.4 301.7 L505 301 L506.6 300.3 L508.3 299.6 L509.9 299 L511.5 298.3 L513.2 297.6 L514.8 296.9 L516.5 296.2 L518.1 295.5 L519.8 294.9 L521.5 294.2 L523.1 293.5 L524.8 292.8 L526.5 292.1 L528.2 291.5 L529.9 290.8 L531.6 290.1 L533.3 289.5 L535 288.8 L536.7 288.1 L538.4 287.5 L540.1 286.8 L541.8 286.2 L543.5 285.5 L545.2 284.8 L547 284.2 L548.7 283.5 L550.4 282.9 L552.2 282.2 L553.9 281.6 L555.6 281 L557.4 280.3 L559.1 279.7 L560.9 279 L562.6 278.4 L564.4 277.8 L566.2 277.2 L567.9 276.5 L569.7 275.9 L571.5 275.3 L573.2 274.7 L575 274.1 L576.8 273.5 L578.6 272.8 L580.3 272.2 L582.1 271.6 L583.9 271 L585.7 270.4 L587.5 269.9 L589.3 269.3 L591.1 268.7 L592.8 268.1 L594.6 267.5 L596.4 266.9 L598.2 266.4 L600 265.8 L601.8 265.2 L603.6 264.7 L605.4 264.1 L607.2 263.6 L609 263 L610.8 262.5 L612.6 261.9 L614.4 261.4 L616.2 260.8 L618 260.3 L619.9 259.8 L621.7 259.3 L623.5 258.7 L625.3 258.2 L627.1 257.7 L628.9 257.2 L630.7 256.7 L632.5 256.2 L634.3 255.7 L636.1 255.2 L637.9 254.7 L639.7 254.2 L641.5 253.8 L643.3 253.3 L645.1 252.8 L646.9 252.4 L648.7 251.9 L650.5 251.5 L652.3 251 L654.1 250.6 L655.9 250.1 L657.7 249.7 L659.5 249.3 L661.3 248.8 L663.1 248.4 L664.9 248 L666.7 247.6 L668.5 247.2 L670.3 246.8 L672.1 246.4 L673.9 246 L675.6 245.6 L677.4 245.2 L679.2 244.9 L681 244.5 L682.8 244.1 L684.5 243.8 L686.3 243.4 L688.1 243.1 L689.9 242.8 L691.6 242.4 L693.4 242.1 L695.2 241.8 L696.9 241.5 L698.7 241.1 L700.4 240.8 L702.2 240.5 L704 240.3 L705.7 240 L707.5 239.7 L709.2 239.4 L711 239.1 L712.7 238.9 L714.4 238.6 L716.2 238.4 L717.9 238.1 L719.6 237.9 L721.4 237.7 L723.1 237.4 L724.8 237.2 L726.6 237 L728.3 236.8 L730 236.6 L731.7 236.4 L733.4 236.2 L735.1 236 L736.9 235.9 L738.6 235.7 L740.3 235.5 L742 235.4 L743.7 235.2 L745.4 235.1 L747.1 235 L748.8 234.8 L750.5 234.7 L752.1 234.6 L753.8 234.5 L755.5 234.4 L757.2 234.3 L758.9 234.2 L760.6 234.1 L762.2 234 L763.9 234 L765.6 233.9 L767.2 233.9 L768.9 233.8 L770.6 233.8 L772.2 233.7 L773.9 233.7 L775.6 233.7 L777.2 233.7 L778.9 233.7 L780.5 233.7 L782.2 233.7 L783.8 233.7 L785.5 233.7 L787.1 233.7 L788.7 233.8 L790.4 233.8 L792 233.8 L793.7 233.9 L795.3 233.9 L796.9 234 L798.6 234.1 L800.2 234.2 L801.8 234.3 L803.4 234.3 L805.1 234.4 L806.7 234.6 L808.3 234.7 L809.9 234.8 L811.6 234.9 L813.2 235 L814.8 235.2 L816.4 235.3 L818 235.5 L819.6 235.6 L821.2 235.8 L822.9 236 L824.5 236.2 L826.1 236.3 L827.7 236.5 L829.3 236.7 L830.9 236.9 L832.5 237.1 L834.1 237.4" stroke="#adff2f" stroke-width="1.3" stroke-dasharray="1.3 2.4" fill="none"/>
<path d="M834.1 237.4 L835.6 237.6 L837.1 237.8 L838.6 238 L840.2 238.2 L841.7 238.5 L843.2 238.7 L844.7 239 L846.2 239.2" stroke="#adff2f" stroke-width="1.6" fill="none"/>
<circle cx="846.2" cy="239.2" r="1.3" fill="#ff4a1a"/>
<path d="M492.7 300.1 L494.3 299.5 L496 298.8 L497.6 298.2 L499.3 297.6 L500.9 296.9 L502.6 296.3 L504.3 295.7 L506 295 L507.6 294.4 L509.3 293.8 L511 293.2 L512.7 292.5 L514.4 291.9 L516.1 291.3 L517.8 290.7 L519.5 290.1 L521.2 289.4 L522.9 288.8 L524.7 288.2 L526.4 287.6 L528.1 287 L529.8 286.4 L531.6 285.8 L533.3 285.2 L535 284.6 L536.8 284 L538.5 283.4 L540.2 282.8 L542 282.2 L543.7 281.6 L545.5 281.1 L547.2 280.5 L549 279.9 L550.8 279.3 L552.5 278.8 L554.3 278.2 L556 277.6 L557.8 277 L559.6 276.5 L561.4 275.9 L563.1 275.4 L564.9 274.8 L566.7 274.2 L568.5 273.7 L570.2 273.2 L572 272.6 L573.8 272.1 L575.6 271.5 L577.4 271 L579.2 270.5 L581 269.9 L582.7 269.4 L584.5 268.9 L586.3 268.4 L588.1 267.9 L589.9 267.3 L591.7 266.8 L593.5 266.3 L595.3 265.8 L597.1 265.3 L598.9 264.8 L600.7 264.3 L602.5 263.9 L604.3 263.4 L606.1 262.9 L607.9 262.4 L609.7 262 L611.5 261.5 L613.3 261 L615 260.6 L616.8 260.1 L618.6 259.7 L620.4 259.2 L622.2 258.8 L624 258.3 L625.8 257.9 L627.6 257.5 L629.4 257 L631.2 256.6 L633 256.2 L634.8 255.8 L636.6 255.4 L638.4 255 L640.1 254.6 L641.9 254.2 L643.7 253.8 L645.5 253.4 L647.3 253 L649.1 252.7 L650.9 252.3 L652.6 251.9 L654.4 251.6 L656.2 251.2 L658 250.9 L659.7 250.5 L661.5 250.2 L663.3 249.8 L665.1 249.5 L666.8 249.2 L668.6 248.9 L670.4 248.5 L672.1 248.2 L673.9 247.9 L675.6 247.6 L677.4 247.3 L679.2 247 L680.9 246.8 L682.7 246.5 L684.4 246.2 L686.2 245.9 L687.9 245.7 L689.6 245.4 L691.4 245.2 L693.1 244.9 L694.9 244.7 L696.6 244.5 L698.3 244.2 L700.1 244 L701.8 243.8 L703.5 243.6 L705.2 243.4 L707 243.2 L708.7 243 L710.4 242.8 L712.1 242.6 L713.8 242.4 L715.5 242.3 L717.3 242.1 L719 242 L720.7 241.8 L722.4 241.7 L724.1 241.5 L725.8 241.4 L727.5 241.3 L729.2 241.1 L730.8 241 L732.5 240.9 L734.2 240.8 L735.9 240.7 L737.6 240.6 L739.3 240.5 L740.9 240.4 L742.6 240.4 L744.3 240.3 L746 240.2 L747.6 240.2 L749.3 240.1 L751 240.1 L752.6 240.1 L754.3 240 L756 240 L757.6 240 L759.3 240 L760.9 240 L762.6 240 L764.2 240 L765.9 240 L767.5 240 L769.2 240 L770.8 240.1 L772.4 240.1 L774.1 240.1 L775.7 240.2 L777.4 240.3 L779 240.3 L780.6 240.4 L782.3 240.5 L783.9 240.5 L785.5 240.6 L787.1 240.7 L788.8 240.8 L790.4 240.9 L792 241 L793.6 241.1 L795.2 241.3 L796.9 241.4 L798.5 241.5 L800.1 241.7 L801.7 241.8 L803.3 242 L804.9 242.1 L806.5 242.3 L808.1 242.5 L809.7 242.6 L811.4 242.8 L813 243 L814.6 243.2 L816.2 243.4 L817.8 243.6 L819.4 243.8 L821 244 L822.6 244.3 L824.2 244.5 L825.8 244.7 L827.4 245 L829 245.2 L830.6 245.5 L832.1 245.7 L833.7 246 L835.3 246.3 L836.9 246.5 L838.5 246.8 L840.1 247.1 L841.7 247.4 L843.3 247.7 L844.9 248 L846.5 248.3 L848.1 248.6 L849.7 248.9 L851.2 249.2 L852.8 249.6 L854.4 249.9 L856 250.2 L857.6 250.6 L859.2 250.9 L860.8 251.3 L862.4 251.6 L863.9 252 L865.5 252.3 L867.1 252.7 L868.7 253.1 L870.3 253.5 L871.9 253.9 L873.5 254.2 L875 254.6 L876.6 255 L878.2 255.4 L879.8 255.8 L881.4 256.3 L883 256.7 L884.6 257.1 L886.1 257.5" stroke="#adff2f" stroke-width="1.3" stroke-dasharray="1.3 2.4" fill="none"/>
<path d="M886.1 257.5 L887.7 257.9 L889.2 258.4 L890.7 258.8 L892.2 259.2 L893.7 259.6 L895.2 260.1 L896.8 260.5 L898.3 260.9 L899.8 261.4 L901.3 261.8 L902.8 262.3 L904.3 262.7 L905.9 263.2 L907.4 263.6 L908.9 264.1" stroke="#adff2f" stroke-width="1.6" fill="none"/>
<circle cx="908.9" cy="264.1" r="1.3" fill="#ff4a1a"/>
<path d="M496 307.3 L497.6 307.3 L499.2 307.2 L500.8 307.2 L502.5 307.1 L504.1 307.1 L505.7 307 L507.3 307 L508.9 306.9 L510.5 306.9 L512.2 306.9 L513.8 306.8 L515.4 306.8 L517 306.8 L518.6 306.7 L520.2 306.7 L521.8 306.6 L523.5 306.6 L525.1 306.6 L526.7 306.5 L528.3 306.5 L529.9 306.5 L531.5 306.4 L533.1 306.4 L534.8 306.4 L536.4 306.4 L538 306.3 L539.6 306.3 L541.2 306.3" stroke="#adff2f" stroke-width="1.3" stroke-dasharray="1.3 2.4" fill="none"/>
<path d="M541.2 306.3 L542.8 306.2 L544.3 306.2 L545.8 306.2 L547.4 306.2 L548.9 306.2 L550.5 306.1 L552 306.1 L553.6 306.1 L555.1 306.1 L556.7 306.1 L558.2 306 L559.8 306 L561.3 306" stroke="#adff2f" stroke-width="1.6" fill="none"/>
<circle cx="561.3" cy="306" r="1.3" fill="#ff4a1a"/>
<path d="M495.3 298.7 L497 298.6 L498.6 298.4 L500.3 298.3 L502 298.2 L503.7 298 L505.3 297.9 L507 297.8 L508.7 297.6 L510.3 297.5 L512 297.4 L513.7 297.3 L515.3 297.1 L517 297 L518.7 296.9 L520.3 296.8 L522 296.6 L523.7 296.5 L525.4 296.4 L527 296.3 L528.7 296.2 L530.4 296.1 L532 296 L533.7 295.9 L535.4 295.8 L537 295.7 L538.7 295.6 L540.4 295.5 L542 295.4 L543.7 295.3 L545.4 295.2 L547 295.1 L548.7 295 L550.4 294.9 L552 294.8 L553.7 294.7 L555.3 294.6 L557 294.6 L558.7 294.5 L560.3 294.4 L562 294.3 L563.7 294.2 L565.3 294.2 L567 294.1 L568.6 294 L570.3 293.9 L572 293.9 L573.6 293.8 L575.3 293.7 L576.9 293.7 L578.6 293.6 L580.3 293.6 L581.9 293.5 L583.6 293.5 L585.2 293.4 L586.9 293.3 L588.6 293.3 L590.2 293.2 L591.9 293.2 L593.5 293.2 L595.2 293.1 L596.8 293.1 L598.5 293 L600.2 293 L601.8 293 L603.5 292.9 L605.1 292.9 L606.8 292.9 L608.4 292.8 L610.1 292.8 L611.7 292.8 L613.4 292.8 L615 292.7 L616.7 292.7 L618.3 292.7 L620 292.7 L621.6 292.7 L623.3 292.7 L624.9 292.6 L626.6 292.6 L628.2 292.6 L629.9 292.6 L631.5 292.6 L633.2 292.6 L634.8 292.6 L636.5 292.6 L638.1 292.6 L639.8 292.6 L641.4 292.6" stroke="#adff2f" stroke-width="1.3" stroke-dasharray="1.3 2.4" fill="none"/>
<path d="M641.4 292.6 L643 292.6 L644.6 292.7 L646.1 292.7 L647.7 292.7 L649.3 292.7" stroke="#adff2f" stroke-width="1.6" fill="none"/>
<circle cx="649.3" cy="292.7" r="1.3" fill="#ff4a1a"/>
<path d="M496 307.3 L497.5 307.7 L499.1 308.1 L500.6 308.5 L502.2 308.8 L503.8 309.2 L505.3 309.6 L506.9 310 L508.4 310.4 L510 310.8 L511.5 311.2 L513.1 311.6 L514.7 311.9 L516.2 312.3 L517.8 312.7 L519.4 313.1 L521 313.5 L522.5 313.9 L524.1 314.3 L525.7 314.7 L527.3 315.1 L528.8 315.5 L530.4 315.9 L532 316.3 L533.6 316.6 L535.2 317 L536.8 317.4 L538.4 317.8 L539.9 318.2 L541.5 318.6 L543.1 319 L544.7 319.4 L546.3 319.8 L547.9 320.2 L549.5 320.6 L551.1 320.9 L552.7 321.3 L554.3 321.7 L555.9 322.1 L557.5 322.5 L559.1 322.9 L560.8 323.3 L562.4 323.7 L564 324.1 L565.6 324.4 L567.2 324.8 L568.8 325.2 L570.4 325.6 L572.1 326 L573.7 326.4 L575.3 326.8 L576.9 327.1 L578.6 327.5 L580.2 327.9 L581.8 328.3 L583.4 328.7 L585.1 329 L586.7 329.4 L588.3 329.8 L590 330.2 L591.6 330.5 L593.2 330.9 L594.9 331.3 L596.5 331.7 L598.1 332 L599.8 332.4 L601.4 332.8 L603.1 333.1 L604.7 333.5 L606.3 333.9 L608 334.2" stroke="#adff2f" stroke-width="1.3" stroke-dasharray="1.3 2.4" fill="none"/>
<path d="M608 334.2 L609.6 334.6 L611.2 334.9 L612.8 335.3 L614.4 335.7 L616 336" stroke="#adff2f" stroke-width="1.6" fill="none"/>
<circle cx="616" cy="336" r="1.3" fill="#ff4a1a"/>
<path d="M494 305.3 L495.6 305.6 L497.2 305.8 L498.8 306.1 L500.4 306.3 L502 306.6 L503.6 306.8 L505.2 307.1 L506.8 307.4 L508.4 307.6 L510 307.9 L511.6 308.1 L513.2 308.4 L514.8 308.7 L516.4 308.9 L518 309.2 L519.6 309.5 L521.2 309.7 L522.8 310 L524.4 310.3 L526 310.5 L527.6 310.8 L529.2 311.1 L530.8 311.3 L532.5 311.6 L534.1 311.9 L535.7 312.1 L537.3 312.4 L538.9 312.7 L540.5 313 L542.1 313.2 L543.7 313.5 L545.4 313.8 L547 314 L548.6 314.3 L550.2 314.6 L551.8 314.9 L553.5 315.1 L555.1 315.4 L556.7 315.7 L558.3 316 L559.9 316.2 L561.6 316.5 L563.2 316.8 L564.8 317 L566.4 317.3 L568.1 317.6 L569.7 317.9 L571.3 318.1 L572.9 318.4 L574.6 318.7 L576.2 319 L577.8 319.2 L579.5 319.5 L581.1 319.8 L582.7 320 L584.4 320.3 L586 320.6 L587.6 320.9 L589.3 321.1 L590.9 321.4 L592.5 321.7 L594.2 321.9 L595.8 322.2 L597.4 322.5 L599.1 322.7 L600.7 323 L602.4 323.3 L604 323.5 L605.6 323.8 L607.3 324.1 L608.9 324.3 L610.6 324.6 L612.2 324.9 L613.8 325.1 L615.5 325.4 L617.1 325.7 L618.8 325.9 L620.4 326.2 L622.1 326.4 L623.7 326.7 L625.4 327 L627 327.2 L628.7 327.5 L630.3 327.7 L632 328 L633.6 328.3 L635.3 328.5 L636.9 328.8 L638.6 329 L640.2 329.3 L641.9 329.5 L643.5 329.8 L645.2 330 L646.8 330.3 L648.5 330.5 L650.1 330.8 L651.8 331 L653.4 331.2 L655.1 331.5 L656.7 331.7 L658.4 332 L660 332.2 L661.7 332.4 L663.3 332.7 L665 332.9 L666.6 333.2 L668.3 333.4 L670 333.6" stroke="#adff2f" stroke-width="1.3" stroke-dasharray="1.3 2.4" fill="none"/>
<path d="M670 333.6 L671.4 333.8 L672.8 334 L674.3 334.2 L675.7 334.4 L677.1 334.6 L678.6 334.8 L680 335" stroke="#adff2f" stroke-width="1.6" fill="none"/>
<circle cx="680" cy="335" r="1.3" fill="#ff4a1a"/>
<path d="M582.7 286 L584.4 285.6 L586.1 285.2 L587.8 284.8 L589.5 284.4 L591.2 284 L593 283.6 L594.7 283.2 L596.4 282.8 L598.1 282.4 L599.8 282 L601.5 281.6 L603.2 281.2 L605 280.8 L606.7 280.5 L608.4 280.1 L610.1 279.7 L611.8 279.3 L613.5 279 L615.3 278.6 L617 278.2 L618.7 277.9 L620.4 277.5 L622.1 277.2 L623.9 276.8 L625.6 276.5 L627.3 276.1 L629 275.8 L630.7 275.4 L632.4 275.1 L634.2 274.8 L635.9 274.4 L637.6 274.1 L639.3 273.8 L641 273.5 L642.7 273.1 L644.5 272.8 L646.2 272.5 L647.9 272.2 L649.6 271.9 L651.3 271.6 L653 271.3 L654.8 271 L656.5 270.7 L658.2 270.4 L659.9 270.1 L661.6 269.9 L663.3 269.6 L665 269.3 L666.7 269 L668.4 268.8 L670.2 268.5 L671.9 268.2 L673.6 268 L675.3 267.7 L677 267.5 L678.7 267.2 L680.4 267 L682.1 266.8 L683.8 266.5 L685.5 266.3 L687.2 266.1 L688.9 265.9 L690.6 265.6 L692.3 265.4 L694 265.2 L695.7 265 L697.4 264.8 L699.1 264.6 L700.8 264.4 L702.5 264.2 L704.2 264 L705.9 263.9 L707.5 263.7 L709.2 263.5 L710.9 263.3 L712.6 263.2 L714.3 263 L716 262.8 L717.7 262.7 L719.3 262.5 L721 262.4 L722.7 262.3 L724.4 262.1 L726.1 262 L727.7 261.9 L729.4 261.7 L731.1 261.6 L732.8 261.5 L734.4 261.4 L736.1 261.3 L737.8 261.2 L739.4 261.1 L741.1 261 L742.8 260.9 L744.4 260.8 L746.1 260.7 L747.8 260.6 L749.4 260.6 L751.1 260.5 L752.8 260.4 L754.4 260.4 L756.1 260.3 L757.7 260.3 L759.4 260.2 L761.1 260.2 L762.7 260.1 L764.4 260.1 L766 260.1 L767.7 260.1 L769.3 260 L771 260 L772.6 260 L774.3 260 L775.9 260 L777.6 260 L779.2 260 L780.8 260 L782.5 260" stroke="#ee82ee" stroke-width="1.3" stroke-dasharray="1.3 2.4" fill="none"/>
<path d="M782.5 260 L784.1 260.1 L785.6 260.1 L787.2 260.1 L788.8 260.1 L790.3 260.2 L791.9 260.2 L793.4 260.3 L795 260.3" stroke="#ee82ee" stroke-width="1.6" fill="none"/>
<circle cx="795" cy="260.3" r="1.3" fill="#ff4a1a"/>
<path d="M595.7 263.4 L597.2 262 L598.6 260.5 L600.1 259 L601.5 257.5 L603 256 L604.5 254.5 L606 253 L607.6 251.5 L609.1 250.1 L610.7 248.6 L612.3 247.1 L613.9 245.6 L615.6 244.1 L617.2 242.7 L618.9 241.2 L620.5 239.7 L622.2 238.2 L623.9 236.8 L625.7 235.3 L627.4 233.8 L629.2 232.3 L630.9 230.9 L632.7 229.4 L634.5 227.9 L636.3 226.5 L638.1 225 L640 223.6 L641.8 222.1 L643.7 220.6 L645.6 219.2 L647.5 217.7 L649.4 216.3 L651.3 214.8 L653.3 213.4 L655.2 212 L657.2 210.5 L659.2 209.1 L661.1 207.6 L663.1 206.2 L665.2 204.8 L667.2 203.3 L669.2 201.9 L671.2 200.5 L673.3 199.1 L675.4 197.6 L677.4 196.2 L679.5 194.8 L681.6 193.4 L683.7 192 L685.8 190.6 L687.9 189.2 L690.1 187.8 L692.2 186.4 L694.4 185 L696.5 183.6 L698.7 182.2 L700.8 180.8 L703 179.5 L705.2 178.1 L707.4 176.7 L709.6 175.4 L711.8 174 L714 172.6 L716.2 171.3 L718.4 169.9 L720.6 168.6 L722.9 167.3 L725.1 165.9 L727.3 164.6 L729.6 163.3 L731.8 162 L734 160.7 L736.3 159.4 L738.5 158.1 L740.8 156.8 L743 155.5 L745.3 154.2 L747.5 152.9 L749.8 151.7 L752 150.4 L754.3 149.2 L756.5 147.9 L758.8 146.7 L761 145.4 L763.3 144.2 L765.5 143 L767.8 141.8 L770 140.6 L772.2 139.4 L774.5 138.3 L776.7 137.1 L778.9 136 L781.1 134.8 L783.3 133.7 L785.5 132.6 L787.7 131.4 L789.9 130.3 L792.1 129.3 L794.3 128.2 L796.5 127.1 L798.6 126.1 L800.8 125 L802.9 124 L805.1 123 L807.2 122 L809.3 121.1 L811.4 120.1 L813.5 119.2 L815.6 118.2 L817.7 117.3 L819.7 116.4 L821.8 115.6 L823.8 114.7 L825.8 113.9 L827.8 113.1 L829.8 112.3 L831.8 111.5 L833.8 110.7 L835.8 110 L837.7 109.3 L839.6 108.6 L841.6 108 L843.5 107.3 L845.4 106.7 L847.2 106.1 L849.1 105.6 L851 105 L852.8 104.5 L854.6 104 L856.4 103.6 L858.2 103.1 L860 102.7 L861.8 102.4 L863.5 102 L865.3 101.7 L867 101.4 L868.7 101.2 L870.5 100.9 L872.2 100.7 L873.9 100.6 L875.5 100.4 L877.2 100.3 L878.9 100.3 L880.5 100.2 L882.2 100.2 L883.8 100.3 L885.5 100.3 L887.1 100.4 L888.8 100.5 L890.4 100.7 L892 100.8 L893.6 101 L895.2 101.3 L896.9 101.6 L898.5 101.9 L900.1 102.2 L901.7 102.5 L903.3 102.9 L904.9 103.3 L906.5 103.8 L908.2 104.3 L909.8 104.8 L911.4 105.3 L913 105.8 L914.7 106.4 L916.3 107 L917.9 107.6 L919.6 108.3 L921.2 109 L922.9 109.7 L924.5 110.4 L926.2 111.1 L927.8 111.9 L929.5 112.7 L931.2 113.5 L932.9 114.3 L934.5 115.1 L936.2 116 L937.9 116.9 L939.6 117.8 L941.3 118.7 L943.1 119.6 L944.8 120.6 L946.5 121.6 L948.2 122.5 L950 123.5 L951.7 124.6 L953.4 125.6 L955.2 126.6 L956.9 127.7 L958.7 128.7 L960.4 129.8 L962.2 130.9 L964 132 L965.7 133.1 L967.5 134.3 L969.3 135.4 L971.1 136.5 L972.9 137.7 L974.6 138.9 L976.4 140.1 L978.2 141.2 L980 142.4 L981.8 143.6 L983.6 144.9 L985.4 146.1 L987.2 147.3 L989 148.6 L990.8 149.8 L992.6 151.1 L994.4 152.3 L996.2 153.6 L998 154.9 L999.8 156.1 L1001.6 157.4 L1003.4 158.7 L1005.2 160 L1006.9 161.3" stroke="#ee82ee" stroke-width="1.3" stroke-dasharray="1.3 2.4" fill="none"/>
<path d="M1006.9 161.3 L1008.7 162.6 L1010.5 163.9 L1012.2 165.2 L1014 166.5 L1015.7 167.8 L1017.5 169.2 L1019.2 170.5 L1021 171.8 L1022.7 173.1 L1024.5 174.5 L1026.2 175.8 L1027.9 177.2 L1029.7 178.5 L1031.4 179.9 L1033.1 181.2 L1034.8 182.6 L1036.5 183.9 L1038.2 185.3 L1039.9 186.7 L1041.6 188 L1043.3 189.4 L1045 190.8" stroke="#ee82ee" stroke-width="1.6" fill="none"/>
<circle cx="1045" cy="190.8" r="1.3" fill="#ff4a1a"/>
<path d="M602.3 266.8 L603.5 265.2 L604.8 263.7 L606 262.1 L607.3 260.6 L608.6 259 L609.9 257.4 L611.2 255.9 L612.6 254.3 L614 252.8 L615.4 251.2 L616.8 249.7 L618.2 248.1 L619.6 246.6 L621.1 245 L622.6 243.4 L624.1 241.9 L625.6 240.3 L627.1 238.8 L628.7 237.2 L630.3 235.7 L631.9 234.2 L633.5 232.6 L635.1 231.1 L636.7 229.5 L638.4 228 L640.1 226.4 L641.8 224.9 L643.5 223.3 L645.2 221.8 L646.9 220.3 L648.7 218.7 L650.4 217.2 L652.2 215.7 L654 214.1 L655.8 212.6 L657.7 211.1 L659.5 209.5 L661.4 208 L663.3 206.5 L665.1 204.9 L667 203.4 L669 201.9 L670.9 200.4 L672.8 198.8 L674.8 197.3 L676.8 195.8 L678.7 194.3 L680.7 192.8 L682.7 191.3 L684.8 189.8 L686.8 188.2 L688.8 186.7 L690.9 185.2 L693 183.7 L695 182.2 L697.1 180.7 L699.2 179.2 L701.3 177.7 L703.4 176.2 L705.6 174.8 L707.7 173.3 L709.8 171.8 L712 170.3 L714.2 168.8 L716.3 167.4 L718.5 165.9 L720.7 164.4 L722.9 162.9 L725.1 161.5 L727.3 160 L729.5 158.6 L731.8 157.1 L734 155.7 L736.2 154.2 L738.5 152.8 L740.7 151.3 L743 149.9 L745.2 148.5 L747.5 147.1 L749.7 145.6 L752 144.2 L754.3 142.8 L756.6 141.4 L758.8 140 L761.1 138.6 L763.4 137.2 L765.7 135.9 L767.9 134.5 L770.2 133.1 L772.5 131.7 L774.8 130.4 L777.1 129 L779.4 127.7 L781.6 126.4 L783.9 125 L786.2 123.7 L788.5 122.4 L790.7 121.1 L793 119.8 L795.3 118.5 L797.5 117.3 L799.8 116 L802 114.8 L804.2 113.5 L806.5 112.3 L808.7 111.1 L810.9 109.9 L813.1 108.7 L815.3 107.5 L817.5 106.4 L819.7 105.2 L821.9 104.1 L824 103 L826.2 101.9 L828.3 100.8 L830.4 99.7 L832.6 98.7 L834.6 97.7 L836.7 96.7 L838.8 95.7 L840.9 94.7 L842.9 93.8 L844.9 92.9 L846.9 92 L848.9 91.1 L850.9 90.3 L852.9 89.4 L854.8 88.7 L856.7 87.9 L858.6 87.2 L860.5 86.5 L862.4 85.8 L864.3 85.2 L866.1 84.6 L867.9 84 L869.7 83.5 L871.5 83 L873.3 82.5 L875.1 82.1 L876.8 81.8 L878.5 81.4 L880.2 81.1 L881.9 80.9 L883.6 80.6 L885.3 80.5 L887 80.3 L888.7 80.2 L890.3 80.2 L892 80.2 L893.6 80.2 L895.2 80.3 L896.9 80.4 L898.5 80.6 L900.1 80.8 L901.8 81 L903.4 81.3 L905 81.6 L906.7 82 L908.3 82.4 L910 82.9 L911.6 83.3 L913.3 83.9 L914.9 84.4 L916.6 85 L918.3 85.6 L920 86.3 L921.7 87 L923.4 87.7 L925.1 88.4 L926.8 89.2 L928.5 90 L930.3 90.8 L932 91.7 L933.8 92.6 L935.6 93.5 L937.3 94.4 L939.1 95.4 L940.9 96.4 L942.7 97.4 L944.5 98.4 L946.4 99.4 L948.2 100.5 L950 101.5 L951.9 102.6 L953.8 103.8 L955.6 104.9 L957.5 106 L959.4 107.2 L961.3 108.3 L963.2 109.5 L965.1 110.7 L967 111.9 L968.9 113.2 L970.8 114.4 L972.7 115.6 L974.6 116.9 L976.5 118.2 L978.5 119.4 L980.4 120.7 L982.3 122 L984.3 123.3 L986.2 124.7 L988.2 126 L990.1 127.3 L992.1 128.6 L994 130 L996 131.3 L997.9 132.7 L999.8 134.1 L1001.8 135.4 L1003.7 136.8 L1005.7 138.2 L1007.6 139.6 L1009.6 141 L1011.5 142.4 L1013.5 143.8 L1015.4 145.2 L1017.3 146.6 L1019.3 148.1 L1021.2 149.5 L1023.1 150.9 L1025 152.4 L1026.9 153.8 L1028.9 155.2 L1030.8 156.7 L1032.7 158.1 L1034.6 159.6 L1036.5 161.1 L1038.3 162.5 L1040.2 164 L1042.1 165.4 L1044 166.9 L1045.8 168.4 L1047.7 169.9 L1049.5 171.3 L1051.4 172.8" stroke="#ee82ee" stroke-width="1.3" stroke-dasharray="1.3 2.4" fill="none"/>
<path d="M1051.4 172.8 L1053.2 174.3 L1055 175.8 L1056.8 177.2 L1058.6 178.7 L1060.4 180.2 L1062.2 181.7 L1063.9 183.2 L1065.7 184.7 L1067.5 186.1 L1069.2 187.6 L1070.9 189.1 L1072.7 190.6 L1074.4 192.1 L1076.1 193.6 L1077.8 195.1 L1079.5 196.6 L1081.2 198.1 L1082.8 199.6 L1084.5 201.1 L1086.1 202.6 L1087.8 204.1 L1089.4 205.6 L1091 207.1 L1092.6 208.7 L1094.2 210.2 L1095.8 211.7 L1097.3 213.2 L1098.9 214.7 L1100.4 216.2 L1102 217.8 L1103.5 219.3 L1105 220.8" stroke="#ee82ee" stroke-width="1.6" fill="none"/>
<circle cx="1105" cy="220.8" r="1.3" fill="#ff4a1a"/>
<path d="M602 291.3 L601.3 292.9 L600.6 294.5 L599.9 296.1 L599.2 297.7 L598.6 299.3 L598 300.9 L597.4 302.5 L596.8 304 L596.2 305.6 L595.7 307.2 L595.2 308.8 L594.7 310.4 L594.2 312 L593.7 313.6 L593.3 315.2 L592.9 316.8 L592.5 318.4 L592.2 320 L591.8 321.6 L591.5 323.2 L591.2 324.8 L590.9 326.4 L590.7 328 L590.4 329.5 L590.2 331.1 L590 332.7 L589.9 334.3 L589.7 335.9 L589.6 337.5" stroke="#ee82ee" stroke-width="1.3" stroke-dasharray="1.3 2.4" fill="none"/>
<path d="M589.6 337.5 L589.5 338.8 L589.4 340.1 L589.4 341.4 L589.3 342.7 L589.3 344" stroke="#ee82ee" stroke-width="1.6" fill="none"/>
<circle cx="589.3" cy="344" r="1.3" fill="#ff4a1a"/>
<path d="M588.7 281.3 L590.2 281.6 L591.7 281.9 L593.3 282.2 L594.8 282.5 L596.3 282.9 L597.8 283.2 L599.4 283.5 L600.9 283.8 L602.4 284.2 L603.9 284.5 L605.5 284.8 L607 285.2 L608.5 285.5 L610 285.8 L611.6 286.2 L613.1 286.5 L614.6 286.9 L616.2 287.2 L617.7 287.6 L619.2 287.9 L620.7 288.3 L622.3 288.6 L623.8 289 L625.3 289.4 L626.9 289.7 L628.4 290.1 L629.9 290.5 L631.5 290.8 L633 291.2 L634.5 291.6 L636.1 291.9 L637.6 292.3 L639.1 292.7 L640.7 293.1 L642.2 293.5 L643.8 293.8 L645.3 294.2 L646.8 294.6 L648.4 295 L649.9 295.4 L651.5 295.8 L653 296.2 L654.6 296.6 L656.1 297 L657.6 297.4 L659.2 297.8 L660.7 298.2 L662.3 298.6 L663.8 299 L665.4 299.4 L666.9 299.8 L668.5 300.2 L670.1 300.6 L671.6 301 L673.2 301.4 L674.7 301.8 L676.3 302.2 L677.8 302.7 L679.4 303.1 L681 303.5 L682.5 303.9 L684.1 304.3 L685.6 304.7 L687.2 305.2 L688.8 305.6 L690.3 306 L691.9 306.4 L693.5 306.8 L695 307.3 L696.6 307.7 L698.2 308.1 L699.8 308.5 L701.3 309 L702.9 309.4 L704.5 309.8 L706.1 310.2 L707.6 310.7 L709.2 311.1 L710.8 311.5 L712.4 311.9 L714 312.4 L715.5 312.8 L717.1 313.2 L718.7 313.7 L720.3 314.1 L721.9 314.5 L723.5 314.9 L725 315.4 L726.6 315.8 L728.2 316.2 L729.8 316.7 L731.4 317.1 L733 317.5 L734.6 318 L736.2 318.4 L737.8 318.8 L739.4 319.2 L741 319.7 L742.6 320.1 L744.2 320.5 L745.8 321 L747.4 321.4 L749 321.8 L750.6 322.3 L752.2 322.7 L753.8 323.1 L755.4 323.5 L757 324 L758.6 324.4 L760.2 324.8 L761.8 325.2 L763.4 325.7 L765 326.1 L766.6 326.5 L768.2 326.9 L769.8 327.3 L771.4 327.8 L773 328.2 L774.7 328.6 L776.3 329 L777.9 329.4 L779.5 329.9 L781.1 330.3 L782.7 330.7 L784.3 331.1 L785.9 331.5 L787.6 331.9 L789.2 332.3 L790.8 332.7 L792.4 333.2 L794 333.6 L795.6 334 L797.3 334.4 L798.9 334.8 L800.5 335.2 L802.1 335.6 L803.7 336 L805.4 336.4 L807 336.8 L808.6 337.2 L810.2 337.6 L811.8 338 L813.5 338.3 L815.1 338.7 L816.7 339.1 L818.3 339.5 L819.9 339.9 L821.6 340.3 L823.2 340.7 L824.8 341 L826.4 341.4 L828.1 341.8 L829.7 342.2 L831.3 342.5 L832.9 342.9 L834.6 343.3 L836.2 343.6 L837.8 344 L839.4 344.4 L841.1 344.7 L842.7 345.1 L844.3 345.4 L845.9 345.8 L847.6 346.2 L849.2 346.5 L850.8 346.9 L852.4 347.2 L854.1 347.5 L855.7 347.9 L857.3 348.2 L858.9 348.6 L860.6 348.9 L862.2 349.2 L863.8 349.6 L865.4 349.9 L867.1 350.2 L868.7 350.5 L870.3 350.9 L871.9 351.2 L873.6 351.5 L875.2 351.8 L876.8 352.1 L878.4 352.4 L880.1 352.7 L881.7 353 L883.3 353.3 L884.9 353.6" stroke="#ee82ee" stroke-width="1.3" stroke-dasharray="1.3 2.4" fill="none"/>
<path d="M884.9 353.6 L886.6 353.9 L888.2 354.2 L889.8 354.5 L891.5 354.8 L893.1 355.1 L894.7 355.3 L896.4 355.6 L898 355.9 L899.6 356.2 L901.3 356.4 L902.9 356.7 L904.5 357 L906.2 357.2 L907.8 357.5 L909.4 357.7 L911 358 L912.7 358.2 L914.3 358.5 L915.9 358.7 L917.6 359 L919.2 359.2" stroke="#ee82ee" stroke-width="1.6" fill="none"/>
<circle cx="919.2" cy="359.2" r="1.3" fill="#ff4a1a"/>
<path d="M579.3 280 L580.8 280.4 L582.3 280.8 L583.7 281.2 L585.2 281.5 L586.7 281.9 L588.2 282.3 L589.6 282.7 L591.1 283.1 L592.6 283.5 L594.1 283.9 L595.6 284.3 L597.1 284.7 L598.5 285.2 L600 285.6 L601.5 286 L603 286.4 L604.5 286.8 L606 287.2 L607.5 287.7 L609 288.1 L610.4 288.5 L611.9 289 L613.4 289.4 L614.9 289.8 L616.4 290.3 L617.9 290.7 L619.4 291.1 L620.9 291.6 L622.4 292 L623.9 292.5 L625.4 292.9 L626.9 293.4 L628.4 293.8 L629.9 294.3 L631.4 294.7 L633 295.2 L634.5 295.6 L636 296.1 L637.5 296.5 L639 297 L640.5 297.5 L642 297.9 L643.6 298.4 L645.1 298.9 L646.6 299.3 L648.1 299.8 L649.6 300.3 L651.2 300.7 L652.7 301.2 L654.2 301.7 L655.8 302.2 L657.3 302.6 L658.8 303.1 L660.3 303.6 L661.9 304.1 L663.4 304.6 L665 305 L666.5 305.5 L668 306 L669.6 306.5 L671.1 307 L672.7 307.4 L674.2 307.9 L675.8 308.4 L677.3 308.9 L678.9 309.4 L680.4 309.9 L682 310.4 L683.5 310.8 L685.1 311.3 L686.6 311.8 L688.2 312.3 L689.8 312.8 L691.3 313.3 L692.9 313.8 L694.5 314.3 L696 314.8 L697.6 315.2 L699.2 315.7 L700.7 316.2 L702.3 316.7 L703.9 317.2 L705.4 317.7 L707 318.2 L708.6 318.7 L710.2 319.2 L711.8 319.7 L713.3 320.1 L714.9 320.6 L716.5 321.1 L718.1 321.6 L719.7 322.1 L721.3 322.6 L722.8 323.1 L724.4 323.6 L726 324 L727.6 324.5 L729.2 325 L730.8 325.5 L732.4 326 L734 326.5 L735.6 327 L737.2 327.4 L738.8 327.9 L740.4 328.4 L742 328.9 L743.6 329.4 L745.2 329.8 L746.8 330.3 L748.4 330.8 L750 331.3 L751.6 331.7 L753.2 332.2 L754.8 332.7 L756.4 333.2 L758 333.6 L759.7 334.1 L761.3 334.6 L762.9 335 L764.5 335.5 L766.1 336 L767.7 336.4 L769.3 336.9 L770.9 337.3 L772.6 337.8 L774.2 338.3 L775.8 338.7 L777.4 339.2 L779 339.6 L780.7 340.1 L782.3 340.5 L783.9 341 L785.5 341.4 L787.1 341.9 L788.8 342.3 L790.4 342.7 L792 343.2 L793.6 343.6 L795.2 344.1 L796.9 344.5 L798.5 344.9 L800.1 345.4 L801.7 345.8 L803.4 346.2 L805 346.6 L806.6 347 L808.2 347.5 L809.9 347.9 L811.5 348.3 L813.1 348.7 L814.8 349.1 L816.4 349.5 L818 349.9 L819.6 350.3 L821.3 350.7 L822.9 351.1 L824.5 351.5 L826.1 351.9 L827.8 352.3 L829.4 352.7 L831 353.1 L832.7 353.5 L834.3 353.8 L835.9 354.2 L837.5 354.6 L839.2 355 L840.8 355.3 L842.4 355.7" stroke="#ee82ee" stroke-width="1.3" stroke-dasharray="1.3 2.4" fill="none"/>
<path d="M842.4 355.7 L843.9 356 L845.4 356.4 L846.8 356.7 L848.3 357" stroke="#ee82ee" stroke-width="1.6" fill="none"/>
<circle cx="848.3" cy="357" r="1.3" fill="#ff4a1a"/>
<path d="M602 291.3 L603.6 291.6 L605.1 291.8 L606.7 292.1 L608.3 292.4 L609.8 292.6 L611.4 292.9 L613 293.2 L614.5 293.4 L616.1 293.7 L617.7 294 L619.3 294.3 L620.8 294.6 L622.4 294.8 L624 295.1 L625.5 295.4 L627.1 295.7 L628.7 296 L630.3 296.3 L631.8 296.6 L633.4 296.9 L635 297.2 L636.5 297.5 L638.1 297.8 L639.7 298.1 L641.3 298.4 L642.8 298.7 L644.4 299 L646 299.3 L647.6 299.6 L649.2 299.9 L650.7 300.2 L652.3 300.5 L653.9 300.8 L655.5 301.1 L657.1 301.4 L658.6 301.7 L660.2 302.1 L661.8 302.4 L663.4 302.7 L665 303 L666.5 303.3 L668.1 303.7 L669.7 304 L671.3 304.3 L672.9 304.6 L674.5 304.9 L676.1 305.3 L677.6 305.6 L679.2 305.9 L680.8 306.2 L682.4 306.6 L684 306.9 L685.6 307.2 L687.2 307.6 L688.8 307.9 L690.4 308.2 L692 308.6 L693.6 308.9 L695.2 309.2 L696.8 309.6 L698.3 309.9 L699.9 310.2 L701.5 310.6 L703.1 310.9 L704.7 311.2 L706.3 311.6 L707.9 311.9 L709.5 312.2 L711.1 312.6 L712.7 312.9 L714.3 313.3 L715.9 313.6 L717.5 313.9 L719.1 314.3 L720.8 314.6 L722.4 315 L724 315.3 L725.6 315.6 L727.2 316 L728.8 316.3 L730.4 316.7 L732 317 L733.6 317.3 L735.2 317.7 L736.8 318 L738.4 318.4 L740 318.7 L741.7 319 L743.3 319.4" stroke="#ee82ee" stroke-width="1.3" stroke-dasharray="1.3 2.4" fill="none"/>
<path d="M743.3 319.4 L744.7 319.7 L746.2 320 L747.6 320.3 L749.1 320.6 L750.5 320.9 L752 321.2" stroke="#ee82ee" stroke-width="1.6" fill="none"/>
<circle cx="752" cy="321.2" r="1.3" fill="#ff4a1a"/>
<path d="M731.7 78.3 L736 76.6 L740.3 75 L744.6 73.4 L749 71.7 L753.3 70.1 L757.6 68.4 L762 66.8 L766.4 65.1 L770.7 63.5 L775.1 61.8 L779.5 60.2 L783.9 58.5 L788.3 56.9 L792.7 55.3 L797.1 53.6 L801.5 52 L805.9 50.4 L810.3 48.7 L814.7 47.1 L819 45.5 L823.4 43.9 L827.8 42.3 L832.1 40.7 L836.5 39.1 L840.8 37.5 L845 35.9M951.7 34.4 L946.3 32.9 L941.1 31.4 L935.9 29.9 L931 28.5 L926.2 27.3 L921.9 26.1 L918.1 25.1 L915 24.5 L912.8 24.2 L911.4 24.3 L910.8 24.9 L910.6 25.8 L910.7 26.9 L911 28.1 L911.4 29.5 L911.9 30.9 L912.4 32.4 L912.9 33.9 L913.4 35.5 L914 37 L914.6 38.6 L915.2 40.2 L915.8 41.8 L916.4 43.4 L916.9 45 L917.5 46.6 L918.1 48.3 L918.7 49.9 L919.3 51.5 L920 53.1 L920.6 54.8 L921.2 56.4 L921.8 58.1 L922.4 59.7 L923 61.3 L923.5 63 L924.1 64.6 L924.7 66.3 L925.3 67.9 L925.9 69.6 L926.5 71.2 L927.1 72.9 L927.7 74.5 L928.3 76.2 L928.9 77.8 L929.4 79.5 L930 81.1 L930.6 82.8 L931.2 84.4 L931.8 86.1 L932.3 87.7 L932.9 89.4 L933.5 91 L934 92.7 L934.6 94.3 L935.1 96 L935.7 97.6 L936.3 99.3 L936.8 100.9 L937.4 102.6 L937.9 104.3 L938.5 105.9 L939 107.6 L939.5 109.2 L940.1 110.9 L940.6 112.5 L941.1 114.2 L941.7 115.8 L942.2 117.5 L942.7 119.2 L943.2 120.8 L943.7 122.5 L944.2 124.1 L944.7 125.8 L945.2 127.4 L945.7 129.1 L946.2 130.8 L946.7 132.4 L947.2 134.1 L947.7 135.7 L948.2 137.4 L948.7 139 L949.2 140.7 L949.6 142.4 L950.1 144 L950.6 145.7 L951 147.3 L951.5 149 L951.9 150.6 L952.4 152.3 L952.8 154 L953.3 155.6 L953.7 157.3 L954.1 158.9 L954.6 160.6 L955 162.2 L955.4 163.9 L955.8 165.6 L956.2 167.2 L956.7 168.9 L957.1 170.5 L957.5 172.2 L957.9 173.9 L958.2 175.5 L958.6 177.2 L959 178.8 L959.4 180.5 L959.8 182.1 L960.1 183.8 L960.5 185.5 L960.9 187.1" stroke="#e020f0" stroke-width="1.3" stroke-dasharray="1.3 2.4" fill="none"/>
<path d="M960.9 187.1 L961.2 188.6 L961.5 190.1 L961.8 191.5 L962.1 193" stroke="#e020f0" stroke-width="1.6" fill="none"/>
<circle cx="962.1" cy="193" r="1.3" fill="#ff4a1a"/>
<path d="M1099 87.5 L1094.5 86.2 L1090 85 L1085.5 83.7 L1081.1 82.5 L1076.7 81.3 L1072.4 80.1 L1068.1 78.9 L1063.8 77.7 L1059.7 76.6 L1055.5 75.5 L1051.5 74.4 L1047.5 73.4 L1043.6 72.4 L1039.7 71.4 L1036 70.4 L1032.3 69.5 L1028.7 68.6 L1025.2 67.8 L1021.8 66.9 L1018.5 66.2 L1015.3 65.5 L1012.2 64.8 L1009.2 64.2 L1006.3 63.6 L1003.6 63.1 L1001 62.6 L998.5 62.2 L996.1 61.8 L993.8 61.5 L991.7 61.3 L989.7 61.1 L987.8 61 L986.1 60.9 L984.4 60.9 L982.9 61 L981.5 61.2 L980.3 61.3 L979.1 61.6 L978 61.9 L977.1 62.3 L976.2 62.7 L975.4 63.2 L974.7 63.8 L974.1 64.4 L973.6 65 L973.2 65.7 L972.8 66.4 L972.4 67.2 L972.2 68 L972 68.9 L971.8 69.8 L971.7 70.7 L971.6 71.7 L971.6 72.7 L971.6 73.7 L971.6 74.8 L971.7 75.9 L971.8 77 L971.9 78.1 L972 79.3 L972.2 80.4 L972.4 81.6 L972.6 82.9 L972.8 84.1 L973 85.4 L973.3 86.6 L973.5 87.9 L973.8 89.2 L974.1 90.5 L974.4 91.9 L974.7 93.2 L975 94.6 L975.3 95.9 L975.6 97.3 L975.9 98.7 L976.2 100.1 L976.6 101.5 L976.9 102.9 L977.2 104.3 L977.6 105.7 L977.9 107.2 L978.2 108.6 L978.6 110 L978.9 111.5 L979.3 113 L979.6 114.4 L979.9 115.9 L980.3 117.4 L980.6 118.8 L980.9 120.3 L981.3 121.8 L981.6 123.3 L981.9 124.8 L982.3 126.3 L982.6 127.8 L982.9 129.3 L983.2 130.8 L983.6 132.4 L983.9 133.9 L984.2 135.4 L984.5 136.9 L984.8 138.5 L985.1 140 L985.4 141.5 L985.7 143.1 L986 144.6 L986.2 146.2 L986.5 147.7 L986.8 149.2 L987.1 150.8 L987.3 152.3 L987.6 153.9 L987.8 155.5 L988.1 157 L988.3 158.6 L988.6 160.1 L988.8 161.7 L989 163.3 L989.3 164.8 L989.5 166.4 L989.7 168 L989.9 169.5 L990.1 171.1 L990.3 172.7 L990.5 174.2 L990.7 175.8 L990.9 177.4 L991.1 179 L991.2 180.6 L991.4 182.1 L991.5 183.7 L991.7 185.3 L991.8 186.9 L992 188.5 L992.1 190 L992.2 191.6 L992.4 193.2 L992.5 194.8 L992.6 196.4 L992.7 198 L992.8 199.6 L992.9 201.2 L993 202.8 L993.1 204.3 L993.1 205.9 L993.2 207.5 L993.3 209.1 L993.3 210.7 L993.4 212.3 L993.4 213.9 L993.4 215.5 L993.5 217.1 L993.5 218.7 L993.5 220.3 L993.5 221.9 L993.5 223.5 L993.5 225.1 L993.5 226.7 L993.5 228.3 L993.5 229.9 L993.4 231.5 L993.4 233.1 L993.3 234.7 L993.3 236.3 L993.2 237.9 L993.2 239.5 L993.1 241.1 L993 242.7 L993 244.3 L992.9 245.9 L992.8 247.5 L992.7 249.2 L992.6 250.8 L992.4 252.4 L992.3 254 L992.2 255.6" stroke="#e020f0" stroke-width="1.3" stroke-dasharray="1.3 2.4" fill="none"/>
<path d="M992.2 255.6 L992.1 257.1 L991.9 258.7 L991.8 260.2" stroke="#e020f0" stroke-width="1.6" fill="none"/>
<circle cx="991.8" cy="260.2" r="1.3" fill="#ff4a1a"/>
<path d="M872.3 112.3 L873.8 112.6 L875.4 113 L876.9 113.4 L878.4 113.8 L879.9 114.2 L881.4 114.7 L882.9 115.2 L884.4 115.7 L885.9 116.2 L887.3 116.8 L888.8 117.4 L890.3 118 L891.8 118.6 L893.3 119.2 L894.7 119.9 L896.2 120.6 L897.7 121.3 L899.2 122 L900.7 122.8 L902.1 123.5 L903.6 124.3 L905.1 125.1 L906.6 125.9 L908 126.7 L909.5 127.6 L911 128.5 L912.5 129.3 L913.9 130.2 L915.4 131.1 L916.9 132.1 L918.4 133 L919.9 134 L921.4 134.9 L922.9 135.9 L924.3 136.9 L925.8 137.9 L927.3 138.9 L928.8 140 L930.3 141 L931.8 142.1 L933.3 143.1 L934.8 144.2 L936.3 145.3 L937.8 146.4 L939.3 147.5 L940.8 148.6 L942.4 149.8 L943.9 150.9 L945.4 152.1 L946.9 153.2 L948.4 154.4 L949.9 155.6 L951.4 156.7 L952.9 157.9 L954.4 159.1 L956 160.3 L957.5 161.5 L959 162.8 L960.5 164 L962 165.2 L963.5 166.5 L965 167.7 L966.5 168.9 L968.1 170.2 L969.6 171.5 L971.1 172.7 L972.6 174 L974.1 175.3 L975.6 176.6 L977.1 177.9 L978.6 179.2 L980.1 180.5 L981.6 181.8 L983.1 183.1 L984.6 184.4 L986.1 185.7 L987.5 187 L989 188.4 L990.5 189.7 L992 191 L993.5 192.4 L994.9 193.7 L996.4 195.1 L997.9 196.4 L999.3 197.8 L1000.8 199.1 L1002.3 200.5 L1003.7 201.9 L1005.2 203.2 L1006.6 204.6 L1008 206 L1009.5 207.4 L1010.9 208.7 L1012.3 210.1 L1013.7 211.5 L1015.2 212.9 L1016.6 214.3 L1018 215.7 L1019.4 217.1 L1020.8 218.5 L1022.2 219.9 L1023.5 221.3 L1024.9 222.7 L1026.3 224.1 L1027.6 225.5 L1029 226.9 L1030.3 228.3 L1031.7 229.8 L1033 231.2 L1034.4 232.6 L1035.7 234 L1037 235.4 L1038.3 236.9 L1039.6 238.3 L1040.9 239.7 L1042.2 241.2 L1043.5 242.6 L1044.8 244 L1046 245.5 L1047.3 246.9 L1048.5 248.3 L1049.8 249.8 L1051 251.2 L1052.2 252.7 L1053.4 254.1 L1054.6 255.5 L1055.8 257 L1057 258.4 L1058.2 259.9 L1059.4 261.3 L1060.6 262.8 L1061.7 264.2 L1062.9 265.7 L1064 267.1 L1065.1 268.6 L1066.2 270 L1067.3 271.5 L1068.4 273 L1069.5 274.4 L1070.6 275.9 L1071.7 277.3 L1072.7 278.8 L1073.8 280.2" stroke="#ffa500" stroke-width="1.3" stroke-dasharray="1.3 2.4" fill="none"/>
<path d="M1073.8 280.2 L1074.7 281.5 L1075.6 282.8 L1076.5 284.1 L1077.4 285.4 L1078.3 286.6 L1079.1 287.9 L1080 289.2" stroke="#ffa500" stroke-width="1.6" fill="none"/>
<circle cx="1080" cy="289.2" r="1.3" fill="#ff4a1a"/>
<path d="M469.1 304.6 L469.2 304.2 L469.3 303.7 L469.4 303.3 L469.5 302.9 L469.6 302.4 L469.7 302 L469.8 301.5 L469.9 301.1 L470.1 300.7 L470.2 300.2 L470.4 299.8 L470.6 299.4 L470.7 298.9 L470.9 298.5 L471.1 298.1 L471.3 297.7 L471.6 297.2 L471.8 296.8 L472 296.4 L472.3 296 L472.5 295.6 L472.8 295.2 L473 294.8 L473.3 294.4 L473.6 294 L473.9 293.6 L474.2 293.2 L474.5 292.8 L474.8 292.4 L475.1 292 L475.5 291.6 L475.8 291.2 L476.2 290.9 L476.5 290.5 L476.9 290.1 L477.2 289.8 L477.6 289.4 L478 289.1 L478.4 288.7 L478.7 288.4 L479.1 288 L479.5 287.7 L479.9 287.4 L480.4 287.1 L480.8 286.7 L481.2 286.4 L481.6 286.1 L482 285.8 L482.5 285.5 L482.9 285.2 L483.3 285 L483.8 284.7 L484.2 284.4 L484.7 284.1 L485.1 283.9 L485.6 283.6 L486 283.4 L486.5 283.2 L487 282.9 L487.4 282.7 L487.9 282.5 L488.4 282.3 L488.8 282.1 L489.3 281.9 L489.8 281.7 L490.2 281.5 L490.7 281.3 L491.2 281.1 L491.7 281 L492.1 280.8 L492.6 280.7 L493.1 280.5 L493.6 280.4 L494 280.3 L494.5 280.1 L495 280 L495.4 279.9 L495.9 279.8 L496.4 279.7 L496.8 279.7 L497.3 279.6 L497.8 279.5 L498.2 279.5 L498.7 279.4 L499.1 279.4 L499.6 279.3 L500 279.3 L500.5 279.3 L500.9 279.3 L501.3 279.3 L501.8 279.3 L502.2 279.3 L502.6 279.3 L503.1 279.3 L503.5 279.4 L503.9 279.4 L504.3 279.5 L504.7 279.5 L505.1 279.6 L505.5 279.7 L505.9 279.7 L506.3 279.8 L506.7 279.9 L507.1 280 L507.5 280.1 L507.8 280.3 L508.2 280.4 L508.6 280.5 L508.9 280.7 L509.3 280.8 L509.6 281 L510 281.1 L510.3 281.3 L510.6 281.5 L511 281.7 L511.3 281.9 L511.6 282.1 L511.9 282.3 L512.2 282.5 L512.5 282.7 L512.8 282.9 L513.1 283.2 L513.4 283.4 L513.7 283.6 L513.9 283.9 L514.2 284.1 L514.4 284.4 L514.7 284.7 L514.9 285 L515.2 285.2 L515.4 285.5 L515.6 285.8 L515.9 286.1 L516.1 286.4 L516.3 286.7 L516.5 287.1 L516.7 287.4 L516.9 287.7 L517 288 L517.2 288.4 L517.4 288.7 L517.6 289.1 L517.7 289.4 L517.9 289.8 L518 290.1 L518.2 290.5 L518.3 290.9 L518.4 291.2 L518.5 291.6 L518.7 292 L518.8 292.4 L518.9 292.8 L519 293.2 L519.1 293.6 L519.2 294 L519.2 294.4 L519.3 294.8 L519.4 295.2 L519.4 295.6 L519.5 296 L519.6 296.4 L519.6 296.8 L519.6 297.2 L519.7 297.7 L519.7 298.1 L519.7 298.5 L519.7 298.9 L519.7 299.4 L519.7 299.8 L519.7 300.2 L519.7 300.7 L519.7 301.1 L519.7 301.5 L519.7 302 L519.7 302.4 L519.6 302.9 L519.6 303.3 L519.5 303.7 L519.5 304.2 L519.4 304.6 L519.4 305 L519.3 305.5 L519.2 305.9 L519.1 306.4 L519.1 306.8 L519 307.2 L518.9 307.7 L518.8 308.1 L518.7 308.5 L518.6 309 L518.4 309.4 L518.3 309.8 L518.2 310.3 L518 310.7 L517.9 311.1 L517.8 311.5 L517.6 312 L517.5 312.4 L517.3 312.8 L517.1 313.2 L517 313.6 L516.8 314 L516.6 314.4 L516.4 314.8 L516.2 315.2 L516 315.6 L515.8 316 L515.6 316.4 L515.4 316.8 L515.2 317.2 L515 317.5 L514.8 317.9 L514.5 318.3 L514.3 318.7 L514.1 319 L513.8 319.4 L513.6 319.7 L513.3 320.1 L513 320.4 L512.8 320.8 L512.5 321.1 L512.2 321.4 L511.9 321.7 L511.7 322.1 L511.4 322.4 L511.1 322.7 L510.8 323 L510.5 323.3 L510.2 323.6 L509.9 323.9 L509.5 324.1 L509.2 324.4 L508.9 324.7 L508.6 324.9 L508.2 325.2 L507.9 325.4 L507.6 325.7 L507.2 325.9 L506.9 326.1 L506.5 326.4 L506.1 326.6 L505.8 326.8 L505.4 327 L505.1 327.2 L504.7 327.4 L504.3 327.6 L503.9 327.7 L503.5 327.9 L503.1 328.1 L502.8 328.2 L502.4 328.4 L502 328.5 L501.6 328.6 L501.2 328.8 L500.8 328.9 L500.3 329 L499.9 329.1 L499.5 329.2 L499.1 329.3 L498.7 329.3 L498.3 329.4 L497.8 329.5 L497.4 329.5 L497 329.6 L496.6 329.6 L496.1 329.7 L495.7 329.7 L495.3 329.7 L494.8 329.7 L494.4 329.7 L494 329.7 L493.5 329.7 L493.1 329.7 L492.6 329.7 L492.2 329.6 L491.7 329.6 L491.3 329.5 L490.9 329.5 L490.4 329.4 L490 329.3 L489.5 329.3 L489.1 329.2 L488.7 329.1 L488.2 329 L487.8 328.9 L487.3 328.8 L486.9 328.6 L486.5 328.5 L486 328.4 L485.6 328.2 L485.2 328.1 L484.7 327.9 L484.3 327.7 L483.9 327.6 L483.5 327.4 L483.1 327.2 L482.6 327 L482.2 326.8 L481.8 326.6 L481.4 326.4 L481 326.1 L480.6 325.9 L480.2 325.7 L479.8 325.4 L479.5 325.2 L479.1 324.9 L478.7 324.7 L478.3 324.4 L478 324.1 L477.6 323.9 L477.2 323.6 L476.9 323.3 L476.5 323 L476.2 322.7 L475.9 322.4 L475.5 322.1 L475.2 321.7 L474.9 321.4 L474.6 321.1 L474.3 320.8 L474 320.4 L473.7 320.1 L473.4 319.7 L473.2 319.4 L472.9 319 L472.6 318.7 L472.4 318.3 L472.2 317.9 L471.9 317.5 L471.7 317.2 L471.5 316.8 L471.3 316.4 L471.1 316 L470.9 315.6 L470.7 315.2 L470.5 314.8 L470.3 314.4 L470.2 314 L470 313.6 L469.9 313.2 L469.8 312.8 L469.7 312.4 L469.5 312 L469.4 311.5 L469.4 311.1 L469.3 310.7 L469.2 310.3 L469.1 309.8 L469.1 309.4 L469 309 L469 308.5 L469 308.1 L469 307.7 L469 307.2 L469 306.8 L469 306.4 L469 305.9 L469 305.5 L469.1 305 L469.1 304.6" stroke="#adff2f" stroke-width="2.1" fill="none"/>
<path d="M557.1 286.3 L557.2 285.8 L557.3 285.4 L557.5 285 L557.6 284.5 L557.8 284.1 L558 283.6 L558.1 283.2 L558.3 282.8 L558.5 282.3 L558.7 281.9 L559 281.5 L559.2 281 L559.4 280.6 L559.6 280.2 L559.9 279.7 L560.2 279.3 L560.4 278.9 L560.7 278.5 L561 278.1 L561.3 277.6 L561.6 277.2 L561.9 276.8 L562.2 276.4 L562.5 276 L562.8 275.6 L563.2 275.2 L563.5 274.8 L563.9 274.4 L564.2 274 L564.6 273.6 L565 273.2 L565.3 272.9 L565.7 272.5 L566.1 272.1 L566.5 271.7 L566.9 271.4 L567.3 271 L567.7 270.7 L568.1 270.3 L568.6 270 L569 269.6 L569.4 269.3 L569.9 269 L570.3 268.6 L570.7 268.3 L571.2 268 L571.6 267.7 L572.1 267.4 L572.6 267.1 L573 266.8 L573.5 266.5 L574 266.2 L574.4 266 L574.9 265.7 L575.4 265.4 L575.8 265.2 L576.3 264.9 L576.8 264.7 L577.3 264.5 L577.8 264.2 L578.3 264 L578.7 263.8 L579.2 263.6 L579.7 263.4 L580.2 263.2 L580.7 263 L581.2 262.8 L581.7 262.7 L582.1 262.5 L582.6 262.3 L583.1 262.2 L583.6 262 L584.1 261.9 L584.6 261.8 L585 261.7 L585.5 261.5 L586 261.4 L586.5 261.3 L587 261.2 L587.4 261.2 L587.9 261.1 L588.4 261 L588.8 261 L589.3 260.9 L589.7 260.9 L590.2 260.8 L590.6 260.8 L591.1 260.8 L591.5 260.8 L592 260.8 L592.4 260.8 L592.8 260.8 L593.3 260.8 L593.7 260.8 L594.1 260.9 L594.5 260.9 L594.9 261 L595.3 261 L595.7 261.1 L596.1 261.2 L596.5 261.2 L596.9 261.3 L597.3 261.4 L597.7 261.5 L598 261.7 L598.4 261.8 L598.7 261.9 L599.1 262 L599.4 262.2 L599.8 262.3 L600.1 262.5 L600.5 262.7 L600.8 262.8 L601.1 263 L601.4 263.2 L601.7 263.4 L602 263.6 L602.3 263.8 L602.6 264 L602.9 264.2 L603.1 264.5 L603.4 264.7 L603.7 264.9 L603.9 265.2 L604.2 265.4 L604.4 265.7 L604.6 266 L604.9 266.2 L605.1 266.5 L605.3 266.8 L605.5 267.1 L605.7 267.4 L605.9 267.7 L606.1 268 L606.2 268.3 L606.4 268.6 L606.6 269 L606.7 269.3 L606.9 269.6 L607 270 L607.2 270.3 L607.3 270.7 L607.4 271 L607.6 271.4 L607.7 271.7 L607.8 272.1 L607.9 272.5 L608 272.9 L608 273.2 L608.1 273.6 L608.2 274 L608.2 274.4 L608.3 274.8 L608.4 275.2 L608.4 275.6 L608.4 276 L608.5 276.4 L608.5 276.8 L608.5 277.2 L608.5 277.6 L608.5 278.1 L608.5 278.5 L608.5 278.9 L608.5 279.3 L608.5 279.7 L608.4 280.2 L608.4 280.6 L608.4 281 L608.3 281.5 L608.3 281.9 L608.2 282.3 L608.1 282.8 L608.1 283.2 L608 283.6 L607.9 284.1 L607.8 284.5 L607.7 285 L607.6 285.4 L607.5 285.8 L607.4 286.3 L607.2 286.7 L607.1 287.2 L607 287.6 L606.8 288 L606.7 288.5 L606.5 288.9 L606.4 289.3 L606.2 289.8 L606.1 290.2 L605.9 290.6 L605.7 291.1 L605.5 291.5 L605.3 291.9 L605.1 292.3 L604.9 292.8 L604.7 293.2 L604.5 293.6 L604.3 294 L604.1 294.4 L603.8 294.8 L603.6 295.3 L603.4 295.7 L603.1 296.1 L602.9 296.5 L602.6 296.9 L602.4 297.3 L602.1 297.6 L601.8 298 L601.6 298.4 L601.3 298.8 L601 299.2 L600.7 299.5 L600.4 299.9 L600.1 300.3 L599.8 300.6 L599.5 301 L599.2 301.3 L598.9 301.7 L598.6 302 L598.2 302.3 L597.9 302.7 L597.6 303 L597.3 303.3 L596.9 303.6 L596.6 304 L596.2 304.3 L595.9 304.6 L595.5 304.8 L595.2 305.1 L594.8 305.4 L594.4 305.7 L594.1 306 L593.7 306.2 L593.3 306.5 L592.9 306.7 L592.5 307 L592.2 307.2 L591.8 307.5 L591.4 307.7 L591 307.9 L590.6 308.1 L590.2 308.3 L589.8 308.5 L589.4 308.7 L589 308.9 L588.5 309.1 L588.1 309.3 L587.7 309.4 L587.3 309.6 L586.9 309.7 L586.5 309.9 L586 310 L585.6 310.1 L585.2 310.3 L584.8 310.4 L584.3 310.5 L583.9 310.6 L583.5 310.7 L583 310.8 L582.6 310.9 L582.2 310.9 L581.7 311 L581.3 311 L580.8 311.1 L580.4 311.1 L580 311.2 L579.5 311.2 L579.1 311.2 L578.7 311.2 L578.2 311.2 L577.8 311.2 L577.3 311.2 L576.9 311.2 L576.5 311.2 L576 311.1 L575.6 311.1 L575.2 311 L574.7 311 L574.3 310.9 L573.9 310.9 L573.5 310.8 L573 310.7 L572.6 310.6 L572.2 310.5 L571.8 310.4 L571.4 310.3 L570.9 310.1 L570.5 310 L570.1 309.9 L569.7 309.7 L569.3 309.6 L568.9 309.4 L568.5 309.3 L568.1 309.1 L567.8 308.9 L567.4 308.7 L567 308.5 L566.6 308.3 L566.3 308.1 L565.9 307.9 L565.5 307.7 L565.2 307.5 L564.8 307.2 L564.5 307 L564.1 306.7 L563.8 306.5 L563.5 306.2 L563.2 306 L562.8 305.7 L562.5 305.4 L562.2 305.1 L561.9 304.8 L561.6 304.6 L561.3 304.3 L561.1 304 L560.8 303.6 L560.5 303.3 L560.3 303 L560 302.7 L559.8 302.3 L559.5 302 L559.3 301.7 L559.1 301.3 L558.9 301 L558.7 300.6 L558.5 300.3 L558.3 299.9 L558.1 299.5 L557.9 299.2 L557.8 298.8 L557.6 298.4 L557.5 298 L557.3 297.6 L557.2 297.3 L557.1 296.9 L557 296.5 L556.9 296.1 L556.8 295.7 L556.7 295.3 L556.6 294.8 L556.5 294.4 L556.5 294 L556.4 293.6 L556.4 293.2 L556.4 292.8 L556.4 292.3 L556.3 291.9 L556.3 291.5 L556.4 291.1 L556.4 290.6 L556.4 290.2 L556.4 289.8 L556.5 289.3 L556.5 288.9 L556.6 288.5 L556.7 288 L556.8 287.6 L556.9 287.2 L557 286.7 L557.1 286.3" stroke="#ee82ee" stroke-width="2.1" fill="none"/>
<path d="M1341.9 176.9 L1341 176.5 L1340 176.1 L1339.1 175.7 L1338.2 175.2 L1337.2 174.8 L1336.3 174.4 L1335.4 174 L1334.5 173.5 L1333.6 173.1 L1332.7 172.7 L1331.8 172.3 L1330.9 171.8 L1330 171.4 L1329.2 171 L1328.3 170.6 L1327.4 170.1 L1326.6 169.7M475.4 169.3 L476.4 168.9 L477.4 168.5 L478.4 168 L479.4 167.6 L480.4 167.2 L481.5 166.8 L482.5 166.4 L483.5 166 L484.6 165.6 L485.6 165.2 L486.7 164.8 L487.7 164.4 L488.8 164 L489.8 163.6 L490.9 163.2 L491.9 162.9 L493 162.5 L494 162.1 L495.1 161.7 L496.1 161.4 L497.2 161 L498.2 160.7 L499.2 160.3 L500.3 160 L501.3 159.6 L502.3 159.3 L503.4 158.9 L504.4 158.6 L505.4 158.3 L506.4 158 L507.4 157.7 L508.4 157.4 L509.4 157.1 L510.4 156.8 L511.4 156.5 L512.3 156.2 L513.3 155.9 L514.2 155.7 L515.2 155.4 L516.1 155.1 L517 154.9 L517.9 154.6 L518.8 154.4 L519.7 154.2 L520.6 154 L521.5 153.7 L522.3 153.5 L523.1 153.3 L524 153.1 L524.8 153 L525.6 152.8 L526.4 152.6 L527.1 152.5 L527.9 152.3 L528.6 152.2 L529.3 152 L530 151.9 L530.7 151.8 L531.4 151.6 L532 151.5 L532.7 151.4 L533.3 151.4 L533.9 151.3 L534.5 151.2 L535.1 151.1 L535.6 151.1 L536.1 151 L536.7 151 L537.1 151 L537.6 150.9 L538.1 150.9 L538.5 150.9 L538.9 150.9 L539.3 150.9 L539.7 151 L540.1 151 L540.4 151 L540.7 151.1 L541 151.1 L541.3 151.2 L541.5 151.3 L541.8 151.4 L542 151.4 L542.2 151.5 L542.4 151.6 L542.5 151.8 L542.7 151.9 L542.8 152 L542.9 152.2 L543 152.3 L543 152.5 L543.1 152.6 L543.1 152.8 L543.1 153 L543.1 153.1 L543 153.3 L543 153.5 L542.9 153.7 L542.8 154 L542.7 154.2 L542.5 154.4 L542.4 154.6 L542.2 154.9 L542 155.1 L541.8 155.4 L541.6 155.7 L541.4 155.9 L541.1 156.2 L540.8 156.5 L540.5 156.8 L540.2 157.1 L539.9 157.4 L539.5 157.7 L539.2 158 L538.8 158.3 L538.4 158.6 L538 158.9 L537.6 159.3 L537.1 159.6 L536.7 160 L536.2 160.3 L535.7 160.7 L535.2 161 L534.7 161.4 L534.2 161.7 L533.7 162.1 L533.1 162.5 L532.5 162.9 L532 163.2 L531.4 163.6 L530.8 164 L530.2 164.4 L529.5 164.8 L528.9 165.2 L528.3 165.6 L527.6 166 L526.9 166.4 L526.3 166.8 L525.6 167.2 L524.9 167.6 L524.2 168 L523.5 168.5 L522.7 168.9 L522 169.3 L521.3 169.7 L520.5 170.1 L519.8 170.6 L519 171 L518.2 171.4 L517.5 171.8 L516.7 172.3 L515.9 172.7 L515.1 173.1 L514.3 173.5 L513.5 174 L512.7 174.4 L511.9 174.8 L511 175.2 L510.2 175.7 L509.4 176.1 L508.5 176.5 L507.7 176.9 L506.8 177.4 L506 177.8 L505.1 178.2 L504.3 178.6 L503.4 179.1 L502.6 179.5 L501.7 179.9 L500.8 180.3 L500 180.7 L499.1 181.1 L498.2 181.5 L497.4 181.9 L496.5 182.4 L495.6 182.8 L494.7 183.2 L493.9 183.6 L493 183.9 L492.1 184.3 L491.2 184.7 L490.4 185.1 L489.5 185.5 L488.6 185.9 L487.8 186.3 L486.9 186.6 L486 187 L485.1 187.4 L484.3 187.7 L483.4 188.1 L482.6 188.4 L481.7 188.8 L480.8 189.1 L480 189.5 L479.1 189.8 L478.3 190.2 L477.4 190.5 L476.6 190.8 L475.8 191.1 L474.9 191.4 L474.1 191.8 L473.3 192.1 L472.4 192.4 L471.6 192.7 L470.8 193 L470 193.2 L469.2 193.5 L468.4 193.8 L467.6 194.1 L466.8 194.3 L466 194.6 L465.2 194.9 L464.5 195.1 L463.7 195.3 L463 195.6 L462.2 195.8 L461.5 196 L460.7 196.3 L460 196.5 L459.2 196.7 L458.5 196.9 L457.8 197.1 L457.1 197.3 L456.4 197.5 L455.7 197.7 L455 197.8 L454.4 198 L453.7 198.2 L453 198.3 L452.4 198.5 L451.7 198.6 L451.1 198.7 L450.5 198.9 L449.9 199 L449.3 199.1 L448.7 199.2 L448.1 199.3 L447.5 199.4 L446.9 199.5 L446.4 199.6 L445.8 199.7 L445.3 199.7 L444.8 199.8 L444.2 199.9 L443.7 199.9 L443.2 199.9 L442.7 200 L442.3 200 L441.8 200 L441.3 200.1 L440.9 200.1 L440.5 200.1 L440.1 200.1 L439.6 200.1 L439.2 200 L438.9 200 L438.5 200 L438.1 199.9 L437.8 199.9 L437.4 199.9 L437.1 199.8 L436.8 199.7 L436.5 199.7 L436.2 199.6 L435.9 199.5 L435.7 199.4 L435.4 199.3 L435.2 199.2 L435 199.1 L434.8 199 L434.6 198.9 L434.4 198.7 L434.2 198.6 L434.1 198.5 L433.9 198.3 L433.8 198.2 L433.7 198 L433.6 197.8 L433.5 197.7 L433.5 197.5 L433.4 197.3 L433.4 197.1 L433.4 196.9 L433.3 196.7 L433.4 196.5 L433.4 196.3 L433.4 196 L433.5 195.8 L433.5 195.6 L433.6 195.3 L433.7 195.1 L433.8 194.9 L433.9 194.6 L434.1 194.3 L434.2 194.1 L434.4 193.8 L434.6 193.5 L434.8 193.2 L435 193 L435.3 192.7 L435.5 192.4 L435.8 192.1 L436 191.8 L436.3 191.4 L436.7 191.1 L437 190.8 L437.3 190.5 L437.7 190.2 L438.1 189.8 L438.4 189.5 L438.9 189.1 L439.3 188.8 L439.7 188.4 L440.2 188.1 L440.6 187.7 L441.1 187.4 L441.6 187 L442.1 186.6 L442.6 186.3 L443.2 185.9 L443.7 185.5 L444.3 185.1 L444.9 184.7 L445.5 184.3 L446.1 183.9 L446.7 183.6 L447.4 183.2 L448 182.8 L448.7 182.4 L449.4 181.9 L450.1 181.5 L450.8 181.1 L451.5 180.7 L452.3 180.3 L453 179.9 L453.8 179.5 L454.6 179.1 L455.3 178.6M1344.7 178.2 L1343.8 177.8 L1342.8 177.4 L1341.9 176.9" stroke="#ffee00" stroke-width="2.1" fill="none"/>
<path d="M1084.6 88.5 L1083.4 88.1 L1082.2 87.6 L1081.1 87.2 L1079.9 86.8 L1078.7 86.4 L1077.6 86 L1076.4 85.5 L1075.2 85.1 L1074.1 84.7 L1072.9 84.3 L1071.7 83.8 L1070.6 83.4 L1069.4 83 L1068.3 82.5 L1067.1 82.1 L1066 81.6 L1064.9 81.2 L1063.7 80.8 L1062.6 80.3 L1061.5 79.9 L1060.4 79.5 L1059.3 79 L1058.2 78.6 L1057.1 78.1 L1056 77.7 L1054.9 77.3 L1053.9 76.8 L1052.8 76.4 L1051.8 76 L1050.7 75.5 L1049.7 75.1 L1048.7 74.7 L1047.7 74.2 L1046.7 73.8 L1045.7 73.4 L1044.7 72.9 L1043.8 72.5 L1042.8 72.1 L1041.9 71.7 L1040.9 71.3 L1040 70.8 L1039.1 70.4 L1038.3 70 L1037.4 69.6 L1036.5 69.2 L1035.7 68.8 L1034.9 68.4 L1034.1 68.1 L1033.3 67.7 L1032.6 67.3 L1031.8 66.9 L1031.1 66.6 L1030.4 66.2 L1029.7 65.8 L1029 65.5 L1028.4 65.2 L1027.8 64.8 L1027.2 64.5 L1026.6 64.2 L1026.1 63.8 L1025.6 63.5 L1025.1 63.2 L1024.6 62.9 L1024.2 62.7 L1023.7 62.4 L1023.4 62.1 L1023 61.9 L1022.7 61.6 L1022.4 61.4 L1022.1 61.1 L1021.9 60.9 L1021.6 60.7 L1021.5 60.5 L1021.3 60.3 L1021.2 60.1 L1021.1 59.9 L1021.1 59.8 L1021.1 59.6 L1021.1 59.5 L1021.2 59.4 L1021.3 59.3 L1021.4 59.2 L1021.5 59.1 L1021.7 59 L1022 58.9 L1022.3 58.9 L1022.6 58.8 L1022.9 58.8 L1023.3 58.8 L1023.7 58.8 L1024.2 58.8 L1024.7 58.8 L1025.2 58.8 L1025.8 58.9 L1026.4 58.9 L1027 59 L1027.7 59.1M772.7 59.2 L772.8 59.3 L772.9 59.4 L772.9 59.5 L772.9 59.6 L772.9 59.8 L772.8 59.9 L772.7 60.1 L772.6 60.3 L772.4 60.5 L772.2 60.7 L771.9 60.9 L771.7 61.1 L771.4 61.4 L771 61.6 L770.6 61.9 L770.2 62.1 L769.8 62.4 L769.4 62.7 L768.9 62.9 L768.3 63.2 L767.8 63.5 L767.2 63.8 L766.6 64.2 L766 64.5 L765.4 64.8 L764.7 65.2 L764 65.5 L763.3 65.8 L762.5 66.2 L761.8 66.6 L761 66.9 L760.2 67.3 L759.4 67.7 L758.5 68.1 L757.7 68.4 L756.8 68.8 L755.9 69.2 L755 69.6 L754 70 L753.1 70.4 L752.1 70.8 L751.2 71.3 L750.2 71.7 L749.2 72.1 L748.1 72.5 L747.1 72.9 L746.1 73.4 L745 73.8 L743.9 74.2 L742.9 74.7 L741.8 75.1 L740.7 75.5 L739.6 76 L738.5 76.4 L737.3 76.8 L736.2 77.3 L735 77.7 L733.9 78.1 L732.7 78.6 L731.6 79 L730.4 79.5 L729.2 79.9 L728 80.3 L726.8 80.8 L725.6 81.2 L724.4 81.6 L723.2 82.1 L722 82.5 L720.8 83 L719.6 83.4 L718.3 83.8 L717.1 84.3 L715.9 84.7 L714.7 85.1 L713.4 85.5 L712.2 86 L710.9 86.4 L709.7 86.8 L708.5 87.2 L707.2 87.6 L706 88.1 L704.7 88.5 L703.5 88.9 L702.3 89.3 L701 89.7 L699.8 90.1 L698.5 90.5 L697.3 90.9 L696 91.3 L694.8 91.7 L693.6 92.1 L692.3 92.5 L691.1 92.9 L689.9 93.2 L688.7 93.6 L687.4 94 L686.2 94.4 L685 94.7 L683.8 95.1 L682.6 95.4 L681.4 95.8 L680.2 96.2 L679 96.5 L677.8 96.9 L676.6 97.2 L675.4 97.5 L674.3 97.9 L673.1 98.2 L671.9 98.5 L670.8 98.8 L669.6 99.2 L668.5 99.5 L667.4 99.8 L666.2 100.1 L665.1 100.4 L664 100.7 L662.9 101 L661.8 101.3 L660.7 101.5 L659.6 101.8 L658.5 102.1 L657.5 102.4 L656.4 102.6 L655.3 102.9 L654.3 103.1 L653.3 103.4 L652.2 103.6 L651.2 103.9 L650.2 104.1 L649.2 104.3 L648.2 104.6 L647.3 104.8 L646.3 105 L645.3 105.2 L644.4 105.4 L643.5 105.6 L642.5 105.8 L641.6 106 L640.7 106.2 L639.8 106.4 L639 106.5 L638.1 106.7 L637.2 106.9 L636.4 107 L635.6 107.2 L634.8 107.3 L633.9 107.5 L633.2 107.6 L632.4 107.7 L631.6 107.9 L630.9 108 L630.1 108.1 L629.4 108.2 L628.7 108.3M1173 108.4 L1172.8 108.5 L1172.6 108.6 L1172.4 108.7 L1172.2 108.8 L1171.9 108.8 L1171.7 108.9 L1171.4 108.9 L1171.1 109 L1170.8 109.1 L1170.5 109.1 L1170.2 109.1 L1169.8 109.2 L1169.5 109.2 L1169.1 109.2 L1168.7 109.2 L1168.3 109.2 L1167.8 109.2 L1167.4 109.2 L1166.9 109.2 L1166.4 109.2 L1166 109.2 L1165.4 109.2 L1164.9 109.1 L1164.4 109.1 L1163.8 109.1 L1163.3 109 L1162.7 108.9 L1162.1 108.9 L1161.5 108.8 L1160.9 108.8 L1160.3 108.7 L1159.6 108.6 L1159 108.5 L1158.3 108.4 L1157.6 108.3 L1156.9 108.2 L1156.2 108.1 L1155.5 108 L1154.7 107.9 L1154 107.7 L1153.2 107.6 L1152.5 107.5 L1151.7 107.3 L1150.9 107.2 L1150.1 107 L1149.3 106.9 L1148.4 106.7 L1147.6 106.5 L1146.7 106.4 L1145.9 106.2 L1145 106 L1144.1 105.8 L1143.2 105.6 L1142.3 105.4 L1141.4 105.2 L1140.5 105 L1139.5 104.8 L1138.6 104.6 L1137.7 104.3 L1136.7 104.1 L1135.7 103.9 L1134.7 103.6 L1133.8 103.4 L1132.8 103.1 L1131.8 102.9 L1130.7 102.6 L1129.7 102.4 L1128.7 102.1 L1127.7 101.8 L1126.6 101.5 L1125.6 101.3 L1124.5 101 L1123.5 100.7 L1122.4 100.4 L1121.3 100.1 L1120.2 99.8 L1119.1 99.5 L1118 99.2 L1116.9 98.8 L1115.8 98.5 L1114.7 98.2 L1113.6 97.9 L1112.5 97.5 L1111.4 97.2 L1110.2 96.9 L1109.1 96.5 L1107.9 96.2 L1106.8 95.8 L1105.7 95.4 L1104.5 95.1 L1103.4 94.7 L1102.2 94.4 L1101 94 L1099.9 93.6 L1098.7 93.2 L1097.5 92.9 L1096.4 92.5 L1095.2 92.1 L1094 91.7 L1092.8 91.3 L1091.7 90.9 L1090.5 90.5 L1089.3 90.1 L1088.1 89.7 L1087 89.3 L1085.8 88.9 L1084.6 88.5" stroke="#e020f0" stroke-width="2.1" fill="none"/>
<path d="M837.3 131.9 L837.4 131.5 L837.6 131.1 L837.7 130.6 L837.9 130.2 L838 129.8 L838.2 129.4 L838.4 128.9 L838.6 128.5 L838.8 128.1 L839 127.6 L839.2 127.2 L839.4 126.8 L839.6 126.3 L839.8 125.9 L840.1 125.5 L840.3 125 L840.6 124.6 L840.8 124.2 L841.1 123.7 L841.4 123.3 L841.7 122.9 L842 122.5 L842.3 122 L842.6 121.6 L842.9 121.2 L843.2 120.8 L843.5 120.3 L843.9 119.9 L844.2 119.5 L844.5 119.1 L844.9 118.7 L845.2 118.3 L845.6 117.9 L846 117.5 L846.3 117.1 L846.7 116.7 L847.1 116.3 L847.5 115.9 L847.9 115.5 L848.3 115.2 L848.7 114.8 L849.1 114.4 L849.5 114.1 L849.9 113.7 L850.3 113.3 L850.7 113 L851.2 112.6 L851.6 112.3 L852 112 L852.5 111.6 L852.9 111.3 L853.4 111 L853.8 110.7 L854.2 110.4 L854.7 110.1 L855.1 109.8 L855.6 109.5 L856.1 109.2 L856.5 109 L857 108.7 L857.4 108.4 L857.9 108.2 L858.4 107.9 L858.8 107.7 L859.3 107.5 L859.8 107.3 L860.2 107.1 L860.7 106.8 L861.2 106.7 L861.6 106.5 L862.1 106.3 L862.6 106.1 L863 106 L863.5 105.8 L863.9 105.7 L864.4 105.5 L864.9 105.4 L865.3 105.3 L865.8 105.2 L866.2 105.1 L866.7 105 L867.2 104.9 L867.6 104.8 L868.1 104.8 L868.5 104.7 L868.9 104.7 L869.4 104.6 L869.8 104.6 L870.3 104.6 L870.7 104.6 L871.1 104.6 L871.5 104.6 L872 104.6 L872.4 104.7 L872.8 104.7 L873.2 104.8 L873.6 104.8 L874 104.9 L874.4 105 L874.8 105.1 L875.2 105.2 L875.6 105.3 L876 105.4 L876.4 105.5 L876.8 105.7 L877.1 105.8 L877.5 106 L877.9 106.1 L878.2 106.3 L878.6 106.5 L878.9 106.7 L879.3 106.8 L879.6 107.1 L879.9 107.3 L880.3 107.5 L880.6 107.7 L880.9 107.9 L881.2 108.2 L881.5 108.4 L881.8 108.7 L882.1 109 L882.4 109.2 L882.7 109.5 L882.9 109.8 L883.2 110.1 L883.5 110.4 L883.7 110.7 L884 111 L884.2 111.3 L884.4 111.6 L884.7 112 L884.9 112.3 L885.1 112.6 L885.3 113 L885.5 113.3 L885.7 113.7 L885.9 114.1 L886.1 114.4 L886.3 114.8 L886.4 115.2 L886.6 115.5 L886.8 115.9 L886.9 116.3 L887.1 116.7 L887.2 117.1 L887.3 117.5 L887.4 117.9 L887.5 118.3 L887.6 118.7 L887.7 119.1 L887.8 119.5 L887.9 119.9 L888 120.3 L888.1 120.8 L888.1 121.2 L888.2 121.6 L888.2 122 L888.3 122.5 L888.3 122.9 L888.3 123.3 L888.3 123.7 L888.3 124.2 L888.3 124.6 L888.3 125 L888.3 125.5 L888.3 125.9 L888.3 126.3 L888.2 126.8 L888.2 127.2 L888.2 127.6 L888.1 128.1 L888 128.5 L888 128.9 L887.9 129.4 L887.8 129.8 L887.7 130.2 L887.6 130.6 L887.5 131.1 L887.4 131.5 L887.2 131.9 L887.1 132.4 L887 132.8 L886.8 133.2 L886.7 133.6 L886.5 134 L886.4 134.4 L886.2 134.9 L886 135.3 L885.8 135.7 L885.6 136.1 L885.4 136.5 L885.2 136.9 L885 137.3 L884.8 137.7 L884.6 138.1 L884.3 138.5 L884.1 138.9 L883.9 139.3 L883.6 139.6 L883.4 140 L883.1 140.4 L882.8 140.8 L882.5 141.1 L882.3 141.5 L882 141.8 L881.7 142.2 L881.4 142.6 L881.1 142.9 L880.8 143.3 L880.5 143.6 L880.2 143.9 L879.8 144.3 L879.5 144.6 L879.2 144.9 L878.8 145.2 L878.5 145.5 L878.1 145.9 L877.8 146.2 L877.4 146.5 L877.1 146.8 L876.7 147 L876.3 147.3 L876 147.6 L875.6 147.9 L875.2 148.2 L874.8 148.4 L874.4 148.7 L874 148.9 L873.6 149.2 L873.2 149.4 L872.8 149.7 L872.4 149.9 L872 150.1 L871.6 150.4 L871.2 150.6 L870.8 150.8 L870.4 151 L870 151.2 L869.5 151.4 L869.1 151.6 L868.7 151.8 L868.2 151.9 L867.8 152.1 L867.4 152.3 L866.9 152.4 L866.5 152.6 L866.1 152.7 L865.6 152.9 L865.2 153 L864.8 153.1 L864.3 153.3 L863.9 153.4 L863.4 153.5 L863 153.6 L862.5 153.7 L862.1 153.8 L861.7 153.9 L861.2 153.9 L860.8 154 L860.3 154.1 L859.9 154.1 L859.4 154.2 L859 154.2 L858.6 154.3 L858.1 154.3 L857.7 154.3 L857.3 154.4 L856.8 154.4 L856.4 154.4 L855.9 154.4 L855.5 154.4 L855.1 154.4 L854.7 154.4 L854.2 154.3 L853.8 154.3 L853.4 154.3 L853 154.2 L852.6 154.2 L852.1 154.1 L851.7 154.1 L851.3 154 L850.9 153.9 L850.5 153.9 L850.1 153.8 L849.7 153.7 L849.3 153.6 L849 153.5 L848.6 153.4 L848.2 153.3 L847.8 153.1 L847.5 153 L847.1 152.9 L846.7 152.7 L846.4 152.6 L846 152.4 L845.7 152.3 L845.3 152.1 L845 151.9 L844.7 151.8 L844.3 151.6 L844 151.4 L843.7 151.2 L843.4 151 L843.1 150.8 L842.8 150.6 L842.5 150.4 L842.2 150.1 L841.9 149.9 L841.6 149.7 L841.3 149.4 L841.1 149.2 L840.8 148.9 L840.6 148.7 L840.3 148.4 L840.1 148.2 L839.9 147.9 L839.6 147.6 L839.4 147.3 L839.2 147 L839 146.8 L838.8 146.5 L838.6 146.2 L838.4 145.9 L838.3 145.5 L838.1 145.2 L837.9 144.9 L837.8 144.6 L837.6 144.3 L837.5 143.9 L837.4 143.6 L837.3 143.3 L837.1 142.9 L837 142.6 L836.9 142.2 L836.8 141.8 L836.8 141.5 L836.7 141.1 L836.6 140.8 L836.6 140.4 L836.5 140 L836.5 139.6 L836.5 139.3 L836.4 138.9 L836.4 138.5 L836.4 138.1 L836.4 137.7 L836.4 137.3 L836.4 136.9 L836.5 136.5 L836.5 136.1 L836.5 135.7 L836.6 135.3 L836.7 134.9 L836.7 134.4 L836.8 134 L836.9 133.6 L837 133.2 L837.1 132.8 L837.2 132.4 L837.3 131.9" stroke="#ffa500" stroke-width="2.1" fill="none"/>
<path d="M502.3 284.7h6M505.3 281.7v6M492.3 298.7h6M495.3 295.7v6M491 305.3h6M494 302.3v6M493 307.3h6M496 304.3v6M595.7 265.3h6M598.7 262.3v6M576.3 280h6M579.3 277v6M585.7 281.3h6M588.7 278.3v6M579.7 286h6M582.7 283v6M599 291.3h6M602 288.3v6M498.7 161.7h6M501.7 158.7v6M512 164.2h6M515 161.2v6M487 175h6M490 172v6M491.2 175.8h6M494.2 172.8v6M479.5 182.5h6M482.5 179.5v6M728.7 78.3h6M731.7 75.3v6M1096 87.5h6M1099 84.5v6M869.3 112.3h6M872.3 109.3v6" stroke="#ff0000" stroke-width="1.5" fill="none"/>
<g fill="#f0f0f0" font-size="11" text-anchor="middle">
<text x="494.3" y="308.5">HYD</text>
<text x="582.3" y="290">MON</text>
<text x="484.5" y="179.5">PSU</text>
<text x="1097.5" y="88">DKD</text>
<text x="863" y="133.5">DPC</text>
</g>
<g fill="#ffffff" font-size="13.9" class="m">
<text class="m" x="304.3" y="22.2" xml:space="preserve">RU000N</text>
<text class="m" x="304.3" y="35.4" xml:space="preserve">Beg: 20251204 14:53:49 (sol = 252.35°)</text>
<text class="m" x="304.3" y="48.6" xml:space="preserve">End: 20251205 03:25:54 (sol = 252.88°)</text>
<text class="m" x="304.3" y="61.8" xml:space="preserve">--------------------------------------</text>
<text class="m" x="304.3" y="75" xml:space="preserve">...: 37</text>
<text class="m" x="304.3" y="88.2" xml:space="preserve">HYD: 7</text>
<text class="m" x="304.3" y="101.4" xml:space="preserve">MON: 7</text>
<text class="m" x="304.3" y="114.6" xml:space="preserve">PSU: 6</text>
<text class="m" x="304.3" y="127.8" xml:space="preserve">DKD: 2</text>
<text class="m" x="304.3" y="141" xml:space="preserve">DPC: 1</text>
</g>
<g stroke="#5e5e5e" stroke-width="2.05" stroke-dasharray="2.08 3.47">
<line x1="73.8" y1="641" x2="73.8" y2="842.5"/>
<line x1="217.9" y1="641" x2="217.9" y2="842.5"/>
<line x1="364.1" y1="641" x2="364.1" y2="842.5"/>
<line x1="504" y1="641" x2="504" y2="842.5"/>
<line x1="648.9" y1="641" x2="648.9" y2="842.5"/>
<line x1="795.1" y1="641" x2="795.1" y2="842.5"/>
<line x1="938" y1="641" x2="938" y2="842.5"/>
<line x1="1088.8" y1="641" x2="1088.8" y2="842.5"/>
<line x1="1237.1" y1="641" x2="1237.1" y2="842.5"/>
<line x1="1390.6" y1="641" x2="1390.6" y2="842.5"/>
<line x1="1545" y1="641" x2="1545" y2="842.5"/>
<line x1="1684" y1="641" x2="1684" y2="842.5"/>
</g>
<g fill="#565656" stroke="#565656" stroke-width="0.55" font-size="28.5">
<text transform="translate(138,639.8) rotate(-90)" text-anchor="end" dominant-baseline="central" textLength="52.6" lengthAdjust="spacingAndGlyphs">APR</text>
<text transform="translate(282.8,639.8) rotate(-90)" text-anchor="end" dominant-baseline="central" textLength="55.2" lengthAdjust="spacingAndGlyphs">MAY</text>
<text transform="translate(427,639.8) rotate(-90)" text-anchor="end" dominant-baseline="central" textLength="47.1" lengthAdjust="spacingAndGlyphs">JUN</text>
<text transform="translate(566.4,639.8) rotate(-90)" text-anchor="end" dominant-baseline="central" textLength="42.1" lengthAdjust="spacingAndGlyphs">JUL</text>
<text transform="translate(710,639.8) rotate(-90)" text-anchor="end" dominant-baseline="central" textLength="58.2" lengthAdjust="spacingAndGlyphs">AUG</text>
<text transform="translate(858.3,639.8) rotate(-90)" text-anchor="end" dominant-baseline="central" textLength="49.6" lengthAdjust="spacingAndGlyphs">SEP</text>
<text transform="translate(1002.7,639.8) rotate(-90)" text-anchor="end" dominant-baseline="central" textLength="55.7" lengthAdjust="spacingAndGlyphs">OCT</text>
<text transform="translate(1155.5,639.8) rotate(-90)" text-anchor="end" dominant-baseline="central" textLength="58.5" lengthAdjust="spacingAndGlyphs">NOV</text>
<text transform="translate(1304.3,639.8) rotate(-90)" text-anchor="end" dominant-baseline="central" textLength="55.8" lengthAdjust="spacingAndGlyphs">DEC</text>
<text transform="translate(1455.8,639.8) rotate(-90)" text-anchor="end" dominant-baseline="central" textLength="45.4" lengthAdjust="spacingAndGlyphs">JAN</text>
<text transform="translate(1613.7,639.8) rotate(-90)" text-anchor="end" dominant-baseline="central" textLength="50.3" lengthAdjust="spacingAndGlyphs">FEB</text>
<text transform="translate(1750.4,639.8) rotate(-90)" text-anchor="end" dominant-baseline="central" textLength="59.5" lengthAdjust="spacingAndGlyphs">MAR</text>
</g>
<g fill="#f4f4f4" font-size="10.8"><text x="107.2" y="831" textLength="20.4" lengthAdjust="spacingAndGlyphs">KSE</text><text x="244.2" y="831" textLength="19.6" lengthAdjust="spacingAndGlyphs">ETA</text><text x="482.5" y="831" textLength="22.6" lengthAdjust="spacingAndGlyphs">NZC</text><text x="697.9" y="831" textLength="23.2" lengthAdjust="spacingAndGlyphs">NDA</text><text x="841.5" y="831" textLength="19.8" lengthAdjust="spacingAndGlyphs">SPE</text><text x="933" y="831" textLength="22.8" lengthAdjust="spacingAndGlyphs">ARD</text><text x="1012" y="831" textLength="21.6" lengthAdjust="spacingAndGlyphs">EGE</text><text x="1129.9" y="831" textLength="20.8" lengthAdjust="spacingAndGlyphs">NTA</text><text x="1269.3" y="831" textLength="25.4" lengthAdjust="spacingAndGlyphs">MON</text><text x="1332.4" y="831" textLength="21.9" lengthAdjust="spacingAndGlyphs">URS</text><text x="1398.6" y="831" textLength="21.7" lengthAdjust="spacingAndGlyphs">AHY</text><text x="1469.8" y="831" textLength="25.1" lengthAdjust="spacingAndGlyphs">GUM</text><text x="1520.6" y="831" textLength="22.8" lengthAdjust="spacingAndGlyphs">OHY</text><text x="1721.5" y="831" textLength="21.9" lengthAdjust="spacingAndGlyphs">XHE</text><text x="1758.5" y="831" textLength="17.1" lengthAdjust="spacingAndGlyphs">EVI</text><text x="165.5" y="815" textLength="21.1" lengthAdjust="spacingAndGlyphs">AVB</text><text x="245.4" y="815" textLength="17.7" lengthAdjust="spacingAndGlyphs">ELY</text><text x="313.4" y="815" textLength="23.8" lengthAdjust="spacingAndGlyphs">CAM</text><text x="417.1" y="815" textLength="21.7" lengthAdjust="spacingAndGlyphs">SSG</text><text x="569.4" y="815" textLength="21" lengthAdjust="spacingAndGlyphs">PCA</text><text x="707.8" y="815" textLength="23.2" lengthAdjust="spacingAndGlyphs">AUD</text><text x="796.3" y="815" textLength="22.4" lengthAdjust="spacingAndGlyphs">AUR</text><text x="916.3" y="815" textLength="22.2" lengthAdjust="spacingAndGlyphs">DSX</text><text x="996.1" y="815" textLength="23.5" lengthAdjust="spacingAndGlyphs">OCU</text><text x="1124.1" y="815" textLength="22.4" lengthAdjust="spacingAndGlyphs">OER</text><text x="1241.4" y="815" textLength="23.3" lengthAdjust="spacingAndGlyphs">DKD</text><text x="1290.9" y="815" textLength="22.1" lengthAdjust="spacingAndGlyphs">DSV</text><text x="1341.8" y="815" textLength="18.2" lengthAdjust="spacingAndGlyphs">ALY</text><text x="1396.6" y="815" textLength="15.7" lengthAdjust="spacingAndGlyphs">JLE</text><text x="1457.1" y="815" textLength="21.5" lengthAdjust="spacingAndGlyphs">SCC</text><text x="1546.5" y="815" textLength="20" lengthAdjust="spacingAndGlyphs">FEV</text><text x="166.8" y="799" textLength="18.3" lengthAdjust="spacingAndGlyphs">LYR</text><text x="361.5" y="799" textLength="19.7" lengthAdjust="spacingAndGlyphs">JMC</text><text x="552.2" y="799" textLength="16.2" lengthAdjust="spacingAndGlyphs">JPE</text><text x="659.6" y="799" textLength="20.7" lengthAdjust="spacingAndGlyphs">PAU</text><text x="766.3" y="799" textLength="18.3" lengthAdjust="spacingAndGlyphs">NIA</text><text x="1037.1" y="799" textLength="19.6" lengthAdjust="spacingAndGlyphs">STA</text><text x="1189" y="799" textLength="24.6" lengthAdjust="spacingAndGlyphs">NOO</text><text x="1335.5" y="799" textLength="24.9" lengthAdjust="spacingAndGlyphs">COM</text><text x="1456.5" y="799" textLength="22.7" lengthAdjust="spacingAndGlyphs">NCC</text><text x="1550.4" y="799" textLength="21" lengthAdjust="spacingAndGlyphs">FED</text><text x="196.3" y="783" textLength="18.3" lengthAdjust="spacingAndGlyphs">HVI</text><text x="404.5" y="783" textLength="17.7" lengthAdjust="spacingAndGlyphs">ARI</text><text x="517.6" y="783" textLength="21.4" lengthAdjust="spacingAndGlyphs">SZC</text><text x="608.4" y="783" textLength="21" lengthAdjust="spacingAndGlyphs">CAP</text><text x="805.8" y="783" textLength="22.4" lengthAdjust="spacingAndGlyphs">NUE</text><text x="950.2" y="783" textLength="22.2" lengthAdjust="spacingAndGlyphs">OCT</text><text x="1045.5" y="783" textLength="18.8" lengthAdjust="spacingAndGlyphs">ORI</text><text x="1172" y="783" textLength="24.7" lengthAdjust="spacingAndGlyphs">AMO</text><text x="1242" y="783" textLength="22" lengthAdjust="spacingAndGlyphs">DPC</text><text x="1317.7" y="783" textLength="17.6" lengthAdjust="spacingAndGlyphs">XVI</text><text x="1392.8" y="783" textLength="23.4" lengthAdjust="spacingAndGlyphs">QUA</text><text x="1542.1" y="783" textLength="22.7" lengthAdjust="spacingAndGlyphs">AAN</text><text x="343.9" y="767" textLength="20.9" lengthAdjust="spacingAndGlyphs">TAH</text><text x="419.4" y="767" textLength="17.1" lengthAdjust="spacingAndGlyphs">JEA</text><text x="473.2" y="767" textLength="12.6" lengthAdjust="spacingAndGlyphs">JIP</text><text x="525.7" y="767" textLength="19.5" lengthAdjust="spacingAndGlyphs">PPS</text><text x="564.3" y="767" textLength="21.4" lengthAdjust="spacingAndGlyphs">ZCS</text><text x="619.7" y="767" textLength="23.7" lengthAdjust="spacingAndGlyphs">GDR</text><text x="960.2" y="767" textLength="22.3" lengthAdjust="spacingAndGlyphs">DRA</text><text x="1060.7" y="767" textLength="22.3" lengthAdjust="spacingAndGlyphs">LUM</text><text x="1100.1" y="767" textLength="21.5" lengthAdjust="spacingAndGlyphs">RPU</text><text x="1163.5" y="767" textLength="21.7" lengthAdjust="spacingAndGlyphs">THA</text><text x="1247.5" y="767" textLength="20.9" lengthAdjust="spacingAndGlyphs">PSU</text><text x="1454.8" y="767" textLength="21.2" lengthAdjust="spacingAndGlyphs">XCB</text><text x="421.7" y="751" textLength="17.4" lengthAdjust="spacingAndGlyphs">JRC</text><text x="531.6" y="751" textLength="22.6" lengthAdjust="spacingAndGlyphs">CAN</text><text x="567.2" y="751" textLength="20.3" lengthAdjust="spacingAndGlyphs">FAN</text><text x="669.7" y="751" textLength="20.5" lengthAdjust="spacingAndGlyphs">PER</text><text x="1039.6" y="751" textLength="20.3" lengthAdjust="spacingAndGlyphs">CTA</text><text x="1251" y="751" textLength="22.6" lengthAdjust="spacingAndGlyphs">HYD</text><text x="1465.8" y="751" textLength="24.2" lengthAdjust="spacingAndGlyphs">XUM</text><text x="428.8" y="735" textLength="23.1" lengthAdjust="spacingAndGlyphs">COR</text><text x="642" y="735" textLength="22" lengthAdjust="spacingAndGlyphs">SDA</text><text x="1037.8" y="735" textLength="18.2" lengthAdjust="spacingAndGlyphs">LMI</text><text x="1156.9" y="735" textLength="20.9" lengthAdjust="spacingAndGlyphs">LEO</text><text x="1264.3" y="735" textLength="21.1" lengthAdjust="spacingAndGlyphs">EHY</text><text x="1486.7" y="735" textLength="21.4" lengthAdjust="spacingAndGlyphs">ECV</text><text x="593" y="719" textLength="17.6" lengthAdjust="spacingAndGlyphs">JXA</text><text x="700.9" y="719" textLength="22" lengthAdjust="spacingAndGlyphs">KCG</text><text x="1143.1" y="719" textLength="23.3" lengthAdjust="spacingAndGlyphs">AND</text><text x="1260.7" y="719" textLength="23.4" lengthAdjust="spacingAndGlyphs">DAD</text><text x="654.3" y="703" textLength="17.2" lengthAdjust="spacingAndGlyphs">ERI</text><text x="1093" y="703" textLength="20.8" lengthAdjust="spacingAndGlyphs">SLD</text><text x="1197.7" y="703" textLength="22.4" lengthAdjust="spacingAndGlyphs">ORS</text><text x="1284.4" y="703" textLength="24.1" lengthAdjust="spacingAndGlyphs">GEM</text><text x="1109.1" y="687" textLength="23.6" lengthAdjust="spacingAndGlyphs">KUM</text></g>
<g stroke="#ff0000" stroke-width="1.5" stroke-dasharray="4.4 1.6">
<line x1="1255.6" y1="638.5" x2="1255.6" y2="842.5"/>
<line x1="1258.2" y1="638.5" x2="1258.2" y2="842.5"/>
</g>
<g stroke-width="4"><line x1="105.8" y1="834" x2="128.9" y2="834" stroke="#ee82ee"/><line x1="164" y1="834" x2="344" y2="834" stroke="#ee82ee"/><line x1="364.8" y1="834" x2="622.8" y2="834" stroke="#ee82ee"/><line x1="634" y1="834" x2="784.9" y2="834" stroke="#ee82ee"/><line x1="805" y1="834" x2="897.9" y2="834" stroke="#ee82ee"/><line x1="918" y1="834" x2="970.7" y2="834" stroke="#ee82ee"/><line x1="982" y1="834" x2="1063.7" y2="834" stroke="#ee82ee"/><line x1="1080" y1="834" x2="1200.7" y2="834" stroke="#ee82ee"/><line x1="1241.1" y1="834" x2="1322.9" y2="834" stroke="#ee82ee"/><line x1="1333.9" y1="834" x2="1352.8" y2="834" stroke="#ee82ee"/><line x1="1378.1" y1="834" x2="1440.7" y2="834" stroke="#ee82ee"/><line x1="1456" y1="834" x2="1508.7" y2="834" stroke="#ee82ee"/><line x1="1520" y1="834" x2="1544" y2="834" stroke="#ee82ee"/><line x1="1721" y1="834" x2="1743.9" y2="834" stroke="#ee82ee"/><line x1="1755" y1="834" x2="1779" y2="834" stroke="#ee82ee"/><line x1="164" y1="818" x2="188" y2="818" stroke="#e11ff0"/><line x1="222.8" y1="818" x2="285.7" y2="818" stroke="#e11ff0"/><line x1="311" y1="818" x2="339.6" y2="818" stroke="#e11ff0"/><line x1="364.8" y1="818" x2="491" y2="818" stroke="#e11ff0"/><line x1="507" y1="818" x2="652.8" y2="818" stroke="#e11ff0"/><line x1="703" y1="818" x2="735.8" y2="818" stroke="#e11ff0"/><line x1="771" y1="818" x2="843.9" y2="818" stroke="#e11ff0"/><line x1="869" y1="818" x2="985.8" y2="818" stroke="#e11ff0"/><line x1="1001" y1="818" x2="1014.7" y2="818" stroke="#e11ff0"/><line x1="1060" y1="818" x2="1210.7" y2="818" stroke="#e11ff0"/><line x1="1241.1" y1="818" x2="1264.9" y2="818" stroke="#e11ff0"/><line x1="1290.2" y1="818" x2="1313.7" y2="818" stroke="#e11ff0"/><line x1="1339" y1="818" x2="1362.8" y2="818" stroke="#e11ff0"/><line x1="1383" y1="818" x2="1425.9" y2="818" stroke="#e11ff0"/><line x1="1456" y1="818" x2="1479.8" y2="818" stroke="#e11ff0"/><line x1="1545" y1="818" x2="1568" y2="818" stroke="#e11ff0"/><line x1="164" y1="802" x2="188" y2="802" stroke="#ff2200"/><line x1="256.8" y1="802" x2="485.9" y2="802" stroke="#ff2200"/><line x1="507" y1="802" x2="613.6" y2="802" stroke="#ff2200"/><line x1="624" y1="802" x2="715.9" y2="802" stroke="#ff2200"/><line x1="727" y1="802" x2="824" y2="802" stroke="#ff2200"/><line x1="947" y1="802" x2="1146.8" y2="802" stroke="#ff2200"/><line x1="1158" y1="802" x2="1244.7" y2="802" stroke="#ff2200"/><line x1="1255.2" y1="802" x2="1440.7" y2="802" stroke="#ff2200"/><line x1="1456" y1="802" x2="1479.8" y2="802" stroke="#ff2200"/><line x1="1548.8" y1="802" x2="1572.9" y2="802" stroke="#ff2200"/><line x1="193.9" y1="786" x2="217" y2="786" stroke="#ffaa00"/><line x1="320.9" y1="786" x2="505.8" y2="786" stroke="#ffaa00"/><line x1="516.8" y1="786" x2="539.8" y2="786" stroke="#ffaa00"/><line x1="555.9" y1="786" x2="681.9" y2="786" stroke="#ffaa00"/><line x1="805" y1="786" x2="828.9" y2="786" stroke="#ffaa00"/><line x1="952" y1="786" x2="970.7" y2="786" stroke="#ffaa00"/><line x1="987" y1="786" x2="1122.8" y2="786" stroke="#ffaa00"/><line x1="1153" y1="786" x2="1215.8" y2="786" stroke="#ffaa00"/><line x1="1241.1" y1="786" x2="1264.9" y2="786" stroke="#ffaa00"/><line x1="1315" y1="786" x2="1338" y2="786" stroke="#ffaa00"/><line x1="1393" y1="786" x2="1416" y2="786" stroke="#ffaa00"/><line x1="1461" y1="786" x2="1646" y2="786" stroke="#ffaa00"/><line x1="339.9" y1="770" x2="368.8" y2="770" stroke="#ffee00"/><line x1="409" y1="770" x2="446.8" y2="770" stroke="#ffee00"/><line x1="468" y1="770" x2="491" y2="770" stroke="#ffee00"/><line x1="526" y1="770" x2="544.9" y2="770" stroke="#ffee00"/><line x1="561" y1="770" x2="588.9" y2="770" stroke="#ffee00"/><line x1="615.2" y1="770" x2="647.9" y2="770" stroke="#ffee00"/><line x1="957" y1="770" x2="985.8" y2="770" stroke="#ffee00"/><line x1="1060" y1="770" x2="1083.7" y2="770" stroke="#ffee00"/><line x1="1099" y1="770" x2="1122.8" y2="770" stroke="#ffee00"/><line x1="1158" y1="770" x2="1190.7" y2="770" stroke="#ffee00"/><line x1="1246" y1="770" x2="1269.8" y2="770" stroke="#ffee00"/><line x1="1422" y1="770" x2="1508.7" y2="770" stroke="#ffee00"/><line x1="418.9" y1="754" x2="441.9" y2="754" stroke="#adff2f"/><line x1="530.8" y1="754" x2="554.9" y2="754" stroke="#adff2f"/><line x1="565.9" y1="754" x2="588.9" y2="754" stroke="#adff2f"/><line x1="619" y1="754" x2="740.9" y2="754" stroke="#adff2f"/><line x1="966.9" y1="754" x2="1132.7" y2="754" stroke="#adff2f"/><line x1="1181.8" y1="754" x2="1342.9" y2="754" stroke="#adff2f"/><line x1="1466" y1="754" x2="1489.8" y2="754" stroke="#adff2f"/><line x1="428.9" y1="738" x2="451.9" y2="738" stroke="#66cc00"/><line x1="575" y1="738" x2="731" y2="738" stroke="#66cc00"/><line x1="991" y1="738" x2="1102.8" y2="738" stroke="#66cc00"/><line x1="1113.8" y1="738" x2="1220.9" y2="738" stroke="#66cc00"/><line x1="1261" y1="738" x2="1288.7" y2="738" stroke="#66cc00"/><line x1="1486" y1="738" x2="1508.7" y2="738" stroke="#66cc00"/><line x1="590" y1="722" x2="613.6" y2="722" stroke="#00ee77"/><line x1="654" y1="722" x2="769.8" y2="722" stroke="#00ee77"/><line x1="1069.9" y1="722" x2="1239.6" y2="722" stroke="#00ee77"/><line x1="1261" y1="722" x2="1283.8" y2="722" stroke="#00ee77"/><line x1="594.7" y1="706" x2="731" y2="706" stroke="#00ccee"/><line x1="1088.8" y1="706" x2="1117.9" y2="706" stroke="#00ccee"/><line x1="1196.9" y1="706" x2="1220.9" y2="706" stroke="#00ccee"/><line x1="1270" y1="706" x2="1322.9" y2="706" stroke="#00ccee"/><line x1="1109" y1="690" x2="1132.7" y2="690" stroke="#0000cc"/></g>
<path d="M112.7 834h8M116.7 830v8M241 834h8M245 830v8M509.7 834h8M513.7 830v8M705.7 834h8M709.7 830v8M831.8 834h8M835.8 830v8M959.8 834h8M963.8 830v8M984.6 834h8M988.6 830v8M1113.7 834h8M1117.7 830v8M1292.9 834h8M1296.9 830v8M1338.9 834h8M1342.9 830v8M1409.9 834h8M1413.9 830v8M1478.6 834h8M1482.6 830v8M1527.7 834h8M1531.7 830v8M1728.8 834h8M1732.8 830v8M1762.7 834h8M1766.7 830v8M171.8 818h8M175.8 814v8M254.6 818h8M258.6 814v8M322.5 818h8M326.5 814v8M435.6 818h8M439.6 814v8M597.9 818h8M601.9 814v8M714.7 818h8M718.7 814v8M791.6 818h8M795.6 814v8M937.8 818h8M941.8 814v8M1003.8 818h8M1007.8 814v8M1150.7 818h8M1154.7 814v8M1248.9 818h8M1252.9 814v8M1297.7 818h8M1301.7 814v8M1346.8 818h8M1350.8 814v8M1400.4 818h8M1404.4 814v8M1463.6 818h8M1467.6 814v8M1551.7 818h8M1555.7 814v8M173.7 802h8M177.7 798v8M377.9 802h8M381.9 798v8M543.7 802h8M547.7 798v8M680.7 802h8M684.7 798v8M739.7 802h8M743.7 798v8M1072.8 802h8M1076.8 798v8M1214.6 802h8M1218.6 798v8M1302.8 802h8M1306.8 798v8M1463.6 802h8M1467.6 798v8M1556.3 802h8M1560.3 798v8M200.5 786h8M204.5 782v8M399.7 786h8M403.7 782v8M523.8 786h8M527.8 782v8M637.5 786h8M641.5 782v8M812.9 786h8M816.9 782v8M957.8 786h8M961.8 782v8M1037.5 786h8M1041.5 782v8M1184.4 786h8M1188.4 782v8M1248.9 786h8M1252.9 782v8M1321.5 786h8M1325.5 782v8M1400.4 786h8M1404.4 782v8M1542.5 786h8M1546.5 782v8M354.9 770h8M358.9 766v8M425.9 770h8M429.9 766v8M475.5 770h8M479.5 766v8M533.5 770h8M537.5 766v8M569.8 770h8M573.8 766v8M629.8 770h8M633.8 766v8M971.8 770h8M975.8 766v8M1067.7 770h8M1071.7 766v8M1106.5 770h8M1110.5 766v8M1175.3 770h8M1179.3 766v8M1253.8 770h8M1257.8 766v8M1463.6 770h8M1467.6 766v8M426.4 754h8M430.4 750v8M538.6 754h8M542.6 750v8M572.8 754h8M576.8 750v8M702.7 754h8M706.7 750v8M1091.7 754h8M1095.7 750v8M1267.8 754h8M1271.8 750v8M1473.8 754h8M1477.8 750v8M435.6 738h8M439.6 734v8M629.8 738h8M633.8 734v8M1036.7 738h8M1040.7 734v8M1165.5 738h8M1169.5 734v8M1272.9 738h8M1276.9 734v8M1493.5 738h8M1497.5 734v8M597.9 722h8M601.9 718v8M724.9 722h8M728.9 718v8M1184.4 722h8M1188.4 718v8M1267.8 722h8M1271.8 718v8M685.5 706h8M689.5 702v8M1099.6 706h8M1103.6 702v8M1204.9 706h8M1208.9 702v8M1298 706h8M1302 702v8M1116.7 690h8M1120.7 686v8" stroke="#fff" stroke-width="2" fill="none"/>
<rect x="19.5" y="637.5" width="1763" height="205" fill="none" stroke="#fff" stroke-width="1"/>
<g stroke="#fff" stroke-width="1">
<line x1="19.5" y1="842.5" x2="19.5" y2="847.4"/>
<line x1="264.5" y1="842.5" x2="264.5" y2="847.4"/>
<line x1="509.5" y1="842.5" x2="509.5" y2="847.4"/>
<line x1="754.5" y1="842.5" x2="754.5" y2="847.4"/>
<line x1="999.5" y1="842.5" x2="999.5" y2="847.4"/>
<line x1="1244.5" y1="842.5" x2="1244.5" y2="847.4"/>
<line x1="1489.5" y1="842.5" x2="1489.5" y2="847.4"/>
<line x1="1733.5" y1="842.5" x2="1733.5" y2="847.4"/>
</g>
<g fill="#fff" font-size="13.9">
<text x="14.9" y="862" textLength="8.8" lengthAdjust="spacingAndGlyphs">0</text>
<text x="255.4" y="862" textLength="17.7" lengthAdjust="spacingAndGlyphs">50</text>
<text x="495.9" y="862" textLength="26.5" lengthAdjust="spacingAndGlyphs">100</text>
<text x="740.9" y="862" textLength="26.5" lengthAdjust="spacingAndGlyphs">150</text>
<text x="985.8" y="862" textLength="26.5" lengthAdjust="spacingAndGlyphs">200</text>
<text x="1230.8" y="862" textLength="26.5" lengthAdjust="spacingAndGlyphs">250</text>
<text x="1475.7" y="862" textLength="26.5" lengthAdjust="spacingAndGlyphs">300</text>
<text x="1720.7" y="862" textLength="26.5" lengthAdjust="spacingAndGlyphs">350</text>
<text x="827.2" y="882" textLength="146.7" lengthAdjust="spacingAndGlyphs">Solar longitude (deg)</text>
</g>
</svg></body></html>
